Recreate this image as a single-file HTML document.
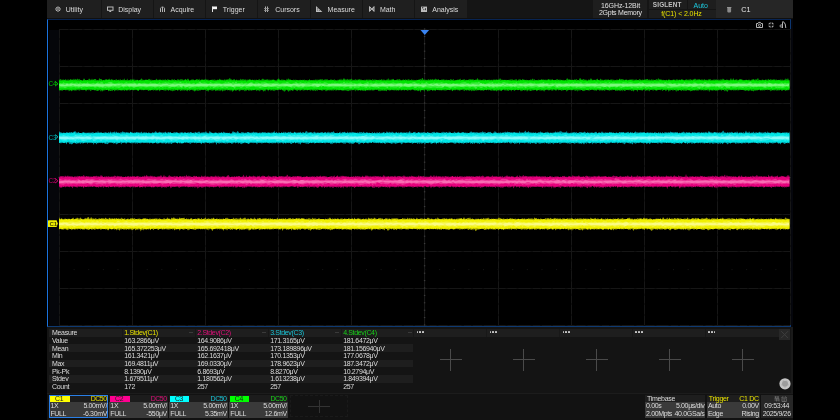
<!DOCTYPE html><html><head><meta charset="utf-8"><style>
*{margin:0;padding:0;box-sizing:border-box}
html,body{width:840px;height:420px;background:#000;overflow:hidden}
#w{position:absolute;left:0;top:0;width:840px;height:420px;will-change:transform}
body{position:relative;font-family:"Liberation Sans",sans-serif;font-size:7px;color:#d9d9d9}
.a{position:absolute}
.t{position:absolute;white-space:nowrap;line-height:8px}
.r{text-align:right}
.n{letter-spacing:-0.35px}
svg{position:absolute;overflow:visible}
</style></head><body><div id="w">

<div class="a" style="left:47.00px;top:0.00px;width:746.00px;height:18.00px;background:#151515;"></div>
<div class="a" style="left:47.00px;top:18.00px;width:746.00px;height:1.00px;background:#101010;"></div>
<div class="a" style="left:47.00px;top:0.00px;width:53.60px;height:18.00px;background:#1f1f1f;"></div>
<div class="t" style="left:65.80px;top:6.00px;color:#dcdcdc;">Utility</div>
<svg style="left:55px;top:6px" width="7" height="7"><path d="M3,0.9L5,2V4.2L3,5.3L1,4.2V2Z" fill="none" stroke="#b4b4b4" stroke-width="1"/><circle cx="3" cy="3.1" r="0.7" fill="none" stroke="#b4b4b4" stroke-width="0.7"/></svg>
<div class="a" style="left:101.60px;top:0.00px;width:51.28px;height:18.00px;background:#1f1f1f;"></div>
<div class="t" style="left:118.15px;top:6.00px;color:#dcdcdc;">Display</div>
<svg style="left:107px;top:6px" width="7" height="7"><rect x="0.5" y="1" width="5.5" height="3.3" fill="none" stroke="#b8b8b8" stroke-width="1"/><path d="M2.3,5.5H4.2" stroke="#b8b8b8" stroke-width="1"/></svg>
<div class="a" style="left:153.88px;top:0.00px;width:51.28px;height:18.00px;background:#1f1f1f;"></div>
<div class="t" style="left:170.50px;top:6.00px;color:#dcdcdc;">Acquire</div>
<svg style="left:160px;top:6px" width="7" height="7"><path d="M0.5,6V2.2M2.5,6V1M4.5,6V2.2" fill="none" stroke="#b4b4b4" stroke-width="1"/><path d="M0.5,2.2Q1.5,0.6 2.5,0.8Q3.5,0.6 4.5,2.2" fill="none" stroke="#a0a0a0" stroke-width="0.8"/></svg>
<div class="a" style="left:206.16px;top:0.00px;width:51.28px;height:18.00px;background:#1f1f1f;"></div>
<div class="t" style="left:222.85px;top:6.00px;color:#dcdcdc;">Trigger</div>
<svg style="left:212px;top:6px" width="7" height="7"><path d="M0.5,6V0.5" stroke="#e0e0e0" stroke-width="1"/><path d="M0.5,0.5H5V3.2H0.5Z" fill="#f4f4f4"/></svg>
<div class="a" style="left:258.44px;top:0.00px;width:51.28px;height:18.00px;background:#1f1f1f;"></div>
<div class="t" style="left:275.20px;top:6.00px;color:#dcdcdc;">Cursors</div>
<svg style="left:264px;top:6px" width="7" height="7"><path d="M1.5,0.5V6M3.5,0.5V6" stroke="#b0b0b0" stroke-width="1"/><path d="M0,2.5H5M0,4.5H5" stroke="#909090" stroke-width="0.8"/></svg>
<div class="a" style="left:310.72px;top:0.00px;width:51.28px;height:18.00px;background:#1f1f1f;"></div>
<div class="t" style="left:327.55px;top:6.00px;color:#dcdcdc;">Measure</div>
<svg style="left:316px;top:6px" width="7" height="7"><path d="M0,0V6H6.4Z" fill="#bdbdbd"/><rect x="1.2" y="2.4" width="1" height="1" fill="#3a3a3a"/><rect x="1.4" y="4.2" width="0.8" height="0.8" fill="#555"/><rect x="3" y="4.2" width="0.8" height="0.8" fill="#555"/></svg>
<div class="a" style="left:363.00px;top:0.00px;width:51.28px;height:18.00px;background:#1f1f1f;"></div>
<div class="t" style="left:379.90px;top:6.00px;color:#dcdcdc;">Math</div>
<svg style="left:369px;top:6px" width="7" height="7"><path d="M0.6,0.6L2.7,3L0.6,5.4ZM5,0.6L2.9,3L5,5.4Z" fill="#5a5a5a" stroke="#d4d4d4" stroke-width="0.9" stroke-linejoin="round"/></svg>
<div class="a" style="left:415.28px;top:0.00px;width:51.28px;height:18.00px;background:#1f1f1f;"></div>
<div class="t" style="left:432.25px;top:6.00px;color:#dcdcdc;">Analysis</div>
<svg style="left:421px;top:6px" width="7" height="7"><rect x="0" y="0.6" width="6" height="5.4" fill="#bdbdbd"/><circle cx="1.7" cy="1.8" r="0.7" fill="#333"/><circle cx="2.8" cy="3.6" r="0.6" fill="#444"/><rect x="4" y="2.2" width="0.9" height="2" fill="#333"/></svg>
<div class="a" style="left:593.30px;top:0.00px;width:54.20px;height:17.50px;background:#1e1e1e;"></div>
<div class="t" style="left:520.50px;width:200px;text-align:center;top:2.00px;color:#e0e0e0;letter-spacing:-0.1px">16GHz-12Bit</div>
<div class="t" style="left:520.40px;width:200px;text-align:center;top:9.20px;color:#e0e0e0;letter-spacing:-0.25px">2Gpts Memory</div>
<div class="a" style="left:648.60px;top:0.00px;width:67.00px;height:17.50px;background:#1e1e1e;"></div>
<div class="a" style="left:648.60px;top:8.60px;width:67.00px;height:0.80px;background:#151515;"></div>
<div class="a" style="left:686.50px;top:0.00px;width:0.80px;height:8.60px;background:#151515;"></div>
<div class="t" style="left:567.20px;width:200px;text-align:center;top:0.70px;color:#c0c0c0;font-weight:bold;font-size:6.4px;letter-spacing:0.15px">SIGLENT</div>
<div class="t" style="left:600.70px;width:200px;text-align:center;top:2.20px;color:#1ccbe0;">Auto</div>
<div class="t" style="left:581.50px;width:200px;text-align:center;top:9.90px;color:#e6e000;letter-spacing:-0.1px">f(C1) &lt; 2.0Hz</div>
<div class="a" style="left:715.50px;top:0.00px;width:77.50px;height:17.50px;background:#262626;"></div>
<div class="t" style="left:741.30px;top:6.00px;color:#e8e8e8;font-size:7.2px">C1</div>
<svg style="left:726.5px;top:6.8px" width="5" height="6"><rect x="0.3" y="0.6" width="3.8" height="4.8" rx="0.8" fill="#8a8a8a"/><rect x="0" y="0" width="4.4" height="0.9" fill="#9a9a9a"/></svg>
<div class="a" style="left:47.00px;top:19.00px;width:744.00px;height:308.00px;background:#000;border:1px solid #0c3670;border-left-color:#1a72dc;border-top-color:#082452;border-bottom-color:#0e3a72"></div>
<div class="a" style="left:791.00px;top:19.00px;width:1.50px;height:308.00px;background:#05060c;"></div>
<div class="a" style="left:48.50px;top:30.00px;width:10.30px;height:296.00px;background:#05060a;"></div>
<svg style="left:0;top:0" width="840" height="420">
<g stroke="#0e0e0e" stroke-width="1" stroke-dasharray="none" fill="none">
<line x1="59.50" y1="29" x2="59.50" y2="325"/>
<line x1="132.50" y1="29" x2="132.50" y2="325"/>
<line x1="205.50" y1="29" x2="205.50" y2="325"/>
<line x1="278.50" y1="29" x2="278.50" y2="325"/>
<line x1="351.50" y1="29" x2="351.50" y2="325"/>
<line x1="498.50" y1="29" x2="498.50" y2="325"/>
<line x1="571.50" y1="29" x2="571.50" y2="325"/>
<line x1="644.50" y1="29" x2="644.50" y2="325"/>
<line x1="717.50" y1="29" x2="717.50" y2="325"/>
<line x1="790.50" y1="29" x2="790.50" y2="325"/>
<line x1="59" y1="29.50" x2="790" y2="29.50"/>
<line x1="59" y1="66.50" x2="790" y2="66.50"/>
<line x1="59" y1="103.50" x2="790" y2="103.50"/>
<line x1="59" y1="140.50" x2="790" y2="140.50"/>
<line x1="59" y1="214.50" x2="790" y2="214.50"/>
<line x1="59" y1="251.50" x2="790" y2="251.50"/>
<line x1="59" y1="288.50" x2="790" y2="288.50"/>
<line x1="59" y1="325.50" x2="790" y2="325.50"/>
</g>
<g stroke="#161616" stroke-width="1" stroke-dasharray="9 2 12 2.5 7 2" fill="none">
<line x1="59.50" y1="29" x2="59.50" y2="325"/>
<line x1="132.50" y1="29" x2="132.50" y2="325"/>
<line x1="205.50" y1="29" x2="205.50" y2="325"/>
<line x1="278.50" y1="29" x2="278.50" y2="325"/>
<line x1="351.50" y1="29" x2="351.50" y2="325"/>
<line x1="498.50" y1="29" x2="498.50" y2="325"/>
<line x1="571.50" y1="29" x2="571.50" y2="325"/>
<line x1="644.50" y1="29" x2="644.50" y2="325"/>
<line x1="717.50" y1="29" x2="717.50" y2="325"/>
<line x1="790.50" y1="29" x2="790.50" y2="325"/>
<line x1="59" y1="29.50" x2="790" y2="29.50"/>
<line x1="59" y1="66.50" x2="790" y2="66.50"/>
<line x1="59" y1="103.50" x2="790" y2="103.50"/>
<line x1="59" y1="140.50" x2="790" y2="140.50"/>
<line x1="59" y1="214.50" x2="790" y2="214.50"/>
<line x1="59" y1="251.50" x2="790" y2="251.50"/>
<line x1="59" y1="288.50" x2="790" y2="288.50"/>
<line x1="59" y1="325.50" x2="790" y2="325.50"/>
</g>
<line x1="424.6" y1="29" x2="424.6" y2="326" stroke="#1c1c1c" stroke-width="1"/>
<line x1="59" y1="177.5" x2="790" y2="177.5" stroke="#202020" stroke-width="1"/>
<path d="M423.9,29.00h1.4M423.9,36.40h1.4M423.9,43.80h1.4M423.9,51.20h1.4M423.9,58.60h1.4M423.9,66.00h1.4M423.9,73.40h1.4M423.9,80.80h1.4M423.9,88.20h1.4M423.9,95.60h1.4M423.9,103.00h1.4M423.9,110.40h1.4M423.9,117.80h1.4M423.9,125.20h1.4M423.9,132.60h1.4M423.9,140.00h1.4M423.9,147.40h1.4M423.9,154.80h1.4M423.9,162.20h1.4M423.9,169.60h1.4M423.9,177.00h1.4M423.9,184.40h1.4M423.9,191.80h1.4M423.9,199.20h1.4M423.9,206.60h1.4M423.9,214.00h1.4M423.9,221.40h1.4M423.9,228.80h1.4M423.9,236.20h1.4M423.9,243.60h1.4M423.9,251.00h1.4M423.9,258.40h1.4M423.9,265.80h1.4M423.9,273.20h1.4M423.9,280.60h1.4M423.9,288.00h1.4M423.9,295.40h1.4M423.9,302.80h1.4M423.9,310.20h1.4M423.9,317.60h1.4M423.9,325.00h1.4M59.00,176.8v1.4M73.62,176.8v1.4M88.24,176.8v1.4M102.86,176.8v1.4M117.48,176.8v1.4M132.10,176.8v1.4M146.72,176.8v1.4M161.34,176.8v1.4M175.96,176.8v1.4M190.58,176.8v1.4M205.20,176.8v1.4M219.82,176.8v1.4M234.44,176.8v1.4M249.06,176.8v1.4M263.68,176.8v1.4M278.30,176.8v1.4M292.92,176.8v1.4M307.54,176.8v1.4M322.16,176.8v1.4M336.78,176.8v1.4M351.40,176.8v1.4M366.02,176.8v1.4M380.64,176.8v1.4M395.26,176.8v1.4M409.88,176.8v1.4M424.50,176.8v1.4M439.12,176.8v1.4M453.74,176.8v1.4M468.36,176.8v1.4M482.98,176.8v1.4M497.60,176.8v1.4M512.22,176.8v1.4M526.84,176.8v1.4M541.46,176.8v1.4M556.08,176.8v1.4M570.70,176.8v1.4M585.32,176.8v1.4M599.94,176.8v1.4M614.56,176.8v1.4M629.18,176.8v1.4M643.80,176.8v1.4M658.42,176.8v1.4M673.04,176.8v1.4M687.66,176.8v1.4M702.28,176.8v1.4M716.90,176.8v1.4M731.52,176.8v1.4M746.14,176.8v1.4M760.76,176.8v1.4M775.38,176.8v1.4M790.00,176.8v1.4" stroke="#404040" stroke-width="1"/>
<path d="M59.00,269.6h1M73.62,269.6h1M88.24,269.6h1M102.86,269.6h1M117.48,269.6h1M132.10,269.6h1M146.72,269.6h1M161.34,269.6h1M175.96,269.6h1M190.58,269.6h1M205.20,269.6h1M219.82,269.6h1M234.44,269.6h1M249.06,269.6h1M263.68,269.6h1M278.30,269.6h1M292.92,269.6h1M307.54,269.6h1M322.16,269.6h1M336.78,269.6h1M351.40,269.6h1M366.02,269.6h1M380.64,269.6h1M395.26,269.6h1M409.88,269.6h1M424.50,269.6h1M439.12,269.6h1M453.74,269.6h1M468.36,269.6h1M482.98,269.6h1M497.60,269.6h1M512.22,269.6h1M526.84,269.6h1M541.46,269.6h1M556.08,269.6h1M570.70,269.6h1M585.32,269.6h1M599.94,269.6h1M614.56,269.6h1M629.18,269.6h1M643.80,269.6h1M658.42,269.6h1M673.04,269.6h1M687.66,269.6h1M702.28,269.6h1M716.90,269.6h1M731.52,269.6h1M746.14,269.6h1M760.76,269.6h1M775.38,269.6h1M790.00,269.6h1" stroke="#161616" stroke-width="1"/>
</svg>
<svg style="left:0;top:0" width="840" height="420">
<path fill="#009a00" d="M59,79.7L59.8,79.6L60.5,78.9L61.2,79.5L62,79.9L62.8,79.6L63.5,79.6L64.2,79.9L65,79.8L65.8,79.1L66.5,80.0L67.2,80.3L68,79.1L68.8,80.0L69.5,80.0L70.2,79.1L71,79.3L71.8,79.8L72.5,79.5L73.2,79.7L74,78.6L74.8,79.9L75.5,78.8L76.2,79.8L77,79.3L77.8,78.6L78.5,79.7L79.2,78.7L80,79.7L80.8,80.0L81.5,80.1L82.2,80.8L83,79.9L83.8,78.5L84.5,78.7L85.2,80.1L86,79.9L86.8,80.3L87.5,80.3L88.2,79.9L89,78.5L89.8,79.1L90.5,79.7L91.2,80.0L92,78.4L92.8,79.9L93.5,79.5L94.2,79.0L95,79.0L95.8,79.1L96.5,80.1L97.2,80.0L98,80.0L98.8,79.8L99.5,78.1L100.2,78.9L101,79.1L101.8,79.2L102.5,80.5L103.2,80.4L104,79.8L104.8,80.0L105.5,79.6L106.2,79.1L107,80.0L107.8,79.4L108.5,79.4L109.2,78.6L110,79.7L110.8,79.7L111.5,79.1L112.2,79.6L113,79.9L113.8,79.8L114.5,80.0L115.2,80.2L116,79.1L116.8,79.6L117.5,80.3L118.2,79.8L119,79.7L119.8,79.8L120.5,79.3L121.2,80.0L122,80.1L122.8,79.4L123.5,80.0L124.2,78.2L125,80.1L125.8,80.2L126.5,80.2L127.2,78.5L128,80.3L128.8,80.3L129.5,80.3L130.2,79.6L131,79.3L131.8,79.8L132.5,80.0L133.2,80.1L134,78.6L134.8,80.8L135.5,79.7L136.2,79.8L137,80.1L137.8,80.0L138.5,80.5L139.2,80.1L140,80.1L140.8,79.3L141.5,78.3L142.2,79.3L143,79.9L143.8,79.8L144.5,80.1L145.2,79.8L146,79.4L146.8,79.7L147.5,80.1L148.2,79.6L149,78.8L149.8,79.3L150.5,79.7L151.2,79.8L152,79.8L152.8,80.0L153.5,80.2L154.2,79.9L155,79.9L155.8,79.7L156.5,78.6L157.2,79.9L158,79.6L158.8,80.0L159.5,79.7L160.2,79.0L161,80.6L161.8,79.7L162.5,79.8L163.2,79.5L164,80.2L164.8,79.5L165.5,79.2L166.2,80.0L167,80.1L167.8,78.9L168.5,79.8L169.2,79.7L170,79.9L170.8,80.1L171.5,79.6L172.2,79.6L173,79.2L173.8,80.2L174.5,79.1L175.2,80.1L176,80.7L176.8,80.2L177.5,79.2L178.2,79.1L179,80.2L179.8,79.4L180.5,79.3L181.2,79.5L182,79.0L182.8,79.7L183.5,79.7L184.2,80.5L185,78.9L185.8,80.1L186.5,79.9L187.2,79.2L188,78.4L188.8,79.6L189.5,80.7L190.2,80.3L191,79.8L191.8,79.4L192.5,79.5L193.2,79.3L194,79.9L194.8,80.3L195.5,80.2L196.2,79.5L197,79.1L197.8,79.6L198.5,79.9L199.2,78.4L200,80.5L200.8,79.8L201.5,79.6L202.2,79.9L203,79.8L203.8,79.8L204.5,79.4L205.2,79.6L206,78.6L206.8,80.4L207.5,79.6L208.2,79.4L209,80.2L209.8,80.2L210.5,79.9L211.2,80.1L212,80.2L212.8,79.2L213.5,79.9L214.2,79.2L215,80.0L215.8,79.7L216.5,80.3L217.2,79.5L218,79.9L218.8,79.8L219.5,78.4L220.2,80.0L221,79.6L221.8,79.9L222.5,79.7L223.2,80.1L224,79.7L224.8,79.3L225.5,80.1L226.2,79.3L227,79.9L227.8,79.0L228.5,79.6L229.2,78.5L230,78.1L230.8,79.4L231.5,79.3L232.2,79.9L233,79.7L233.8,79.3L234.5,79.1L235.2,80.2L236,79.9L236.8,79.5L237.5,80.0L238.2,80.4L239,79.4L239.8,80.4L240.5,78.4L241.2,80.0L242,79.1L242.8,79.4L243.5,79.2L244.2,79.8L245,79.4L245.8,79.4L246.5,79.9L247.2,79.5L248,79.9L248.8,79.5L249.5,79.4L250.2,79.5L251,79.7L251.8,80.3L252.5,80.0L253.2,80.2L254,79.7L254.8,79.8L255.5,80.1L256.2,79.6L257,80.0L257.8,80.1L258.5,79.7L259.2,79.0L260,79.8L260.8,80.4L261.5,79.4L262.2,78.9L263,78.4L263.8,79.5L264.5,79.5L265.2,80.4L266,79.6L266.8,79.6L267.5,79.2L268.2,79.4L269,80.1L269.8,79.5L270.5,80.0L271.2,79.6L272,80.3L272.8,80.1L273.5,80.0L274.2,79.9L275,79.8L275.8,80.8L276.5,79.9L277.2,79.5L278,79.1L278.8,78.2L279.5,79.2L280.2,80.9L281,80.4L281.8,79.0L282.5,79.7L283.2,79.8L284,79.8L284.8,80.0L285.5,80.5L286.2,80.0L287,78.5L287.8,80.0L288.5,78.1L289.2,79.7L290,79.1L290.8,79.9L291.5,79.9L292.2,79.9L293,80.1L293.8,79.5L294.5,79.9L295.2,79.8L296,79.7L296.8,80.1L297.5,80.2L298.2,80.1L299,80.5L299.8,79.7L300.5,79.7L301.2,80.3L302,80.0L302.8,79.8L303.5,80.1L304.2,79.5L305,79.9L305.8,80.1L306.5,80.6L307.2,79.7L308,80.4L308.8,79.9L309.5,79.0L310.2,80.1L311,80.2L311.8,79.9L312.5,80.2L313.2,80.0L314,79.7L314.8,80.1L315.5,79.6L316.2,79.5L317,80.0L317.8,79.5L318.5,79.8L319.2,80.0L320,78.9L320.8,79.5L321.5,79.5L322.2,79.0L323,79.7L323.8,80.0L324.5,79.4L325.2,79.4L326,79.3L326.8,79.4L327.5,79.3L328.2,79.9L329,80.2L329.8,80.0L330.5,79.5L331.2,79.3L332,80.1L332.8,79.7L333.5,79.9L334.2,79.2L335,79.8L335.8,80.4L336.5,80.5L337.2,79.8L338,79.9L338.8,79.8L339.5,79.2L340.2,80.1L341,78.5L341.8,79.9L342.5,79.7L343.2,79.2L344,77.8L344.8,79.6L345.5,79.6L346.2,79.4L347,79.5L347.8,78.8L348.5,79.8L349.2,79.7L350,79.0L350.8,79.4L351.5,78.4L352.2,79.6L353,80.1L353.8,79.7L354.5,80.1L355.2,78.9L356,79.8L356.8,79.8L357.5,79.8L358.2,79.4L359,79.6L359.8,79.0L360.5,79.7L361.2,79.4L362,80.1L362.8,80.1L363.5,80.0L364.2,80.0L365,79.6L365.8,80.3L366.5,79.6L367.2,79.2L368,80.4L368.8,79.2L369.5,79.7L370.2,79.4L371,80.0L371.8,80.0L372.5,78.9L373.2,79.8L374,79.7L374.8,79.5L375.5,79.4L376.2,80.6L377,79.8L377.8,80.2L378.5,80.0L379.2,79.5L380,80.0L380.8,79.8L381.5,79.1L382.2,79.7L383,79.8L383.8,79.6L384.5,79.8L385.2,79.9L386,80.1L386.8,79.5L387.5,79.7L388.2,77.9L389,79.9L389.8,79.5L390.5,79.7L391.2,79.9L392,78.7L392.8,79.6L393.5,78.8L394.2,80.0L395,80.3L395.8,80.0L396.5,79.8L397.2,79.2L398,79.6L398.8,79.6L399.5,79.0L400.2,79.5L401,80.5L401.8,79.9L402.5,80.1L403.2,78.9L404,80.2L404.8,79.9L405.5,79.2L406.2,79.7L407,80.0L407.8,79.5L408.5,79.3L409.2,79.6L410,79.9L410.8,79.9L411.5,79.3L412.2,79.8L413,79.9L413.8,79.8L414.5,80.1L415.2,80.2L416,79.9L416.8,79.8L417.5,79.9L418.2,80.3L419,79.1L419.8,79.8L420.5,78.7L421.2,80.0L422,78.1L422.8,77.9L423.5,79.9L424.2,79.2L425,80.0L425.8,79.6L426.5,79.8L427.2,80.9L428,79.1L428.8,79.6L429.5,80.0L430.2,79.1L431,79.8L431.8,79.4L432.5,79.0L433.2,79.8L434,79.5L434.8,79.9L435.5,78.4L436.2,78.9L437,79.7L437.8,79.5L438.5,79.2L439.2,80.2L440,80.1L440.8,79.9L441.5,79.5L442.2,79.7L443,79.2L443.8,79.5L444.5,79.7L445.2,79.7L446,79.9L446.8,79.5L447.5,79.9L448.2,80.3L449,79.8L449.8,80.3L450.5,79.1L451.2,79.5L452,79.6L452.8,79.9L453.5,78.7L454.2,80.4L455,80.8L455.8,80.1L456.5,80.2L457.2,79.5L458,79.9L458.8,79.4L459.5,79.7L460.2,78.5L461,79.9L461.8,79.9L462.5,79.9L463.2,80.0L464,78.7L464.8,79.7L465.5,80.1L466.2,79.7L467,80.1L467.8,79.9L468.5,79.7L469.2,79.1L470,79.7L470.8,79.1L471.5,79.6L472.2,79.8L473,78.8L473.8,80.1L474.5,80.2L475.2,79.9L476,79.3L476.8,79.7L477.5,77.7L478.2,79.3L479,80.1L479.8,79.6L480.5,79.8L481.2,79.9L482,80.1L482.8,79.7L483.5,79.3L484.2,79.9L485,79.1L485.8,80.3L486.5,80.3L487.2,80.1L488,80.0L488.8,79.8L489.5,79.6L490.2,80.4L491,79.5L491.8,80.0L492.5,79.7L493.2,80.0L494,79.0L494.8,80.1L495.5,79.5L496.2,79.9L497,79.2L497.8,80.1L498.5,80.2L499.2,79.6L500,78.0L500.8,79.2L501.5,79.7L502.2,79.7L503,79.8L503.8,80.0L504.5,79.8L505.2,80.1L506,79.8L506.8,79.9L507.5,80.0L508.2,80.0L509,79.7L509.8,79.8L510.5,79.6L511.2,79.3L512,79.8L512.8,79.2L513.5,80.3L514.2,80.1L515,79.4L515.8,79.6L516.5,79.0L517.2,80.4L518,80.2L518.8,79.3L519.5,79.4L520.2,79.1L521,80.2L521.8,80.0L522.5,78.7L523.2,79.7L524,79.4L524.8,79.9L525.5,79.9L526.2,79.7L527,80.0L527.8,79.9L528.5,80.5L529.2,80.5L530,80.1L530.8,79.3L531.5,80.1L532.2,79.0L533,78.6L533.8,80.2L534.5,79.0L535.2,80.1L536,80.1L536.8,79.9L537.5,80.0L538.2,79.7L539,79.5L539.8,80.3L540.5,79.8L541.2,80.0L542,78.9L542.8,80.0L543.5,79.2L544.2,80.3L545,79.2L545.8,79.9L546.5,79.8L547.2,79.7L548,79.7L548.8,79.6L549.5,79.6L550.2,79.4L551,79.7L551.8,79.5L552.5,79.3L553.2,80.1L554,80.4L554.8,80.1L555.5,79.9L556.2,79.6L557,79.3L557.8,79.2L558.5,80.1L559.2,79.6L560,80.0L560.8,79.4L561.5,79.9L562.2,80.3L563,79.7L563.8,80.1L564.5,80.2L565.2,80.0L566,79.9L566.8,78.6L567.5,78.3L568.2,79.6L569,79.5L569.8,79.6L570.5,79.8L571.2,79.9L572,79.9L572.8,80.0L573.5,79.9L574.2,79.6L575,79.8L575.8,79.7L576.5,78.9L577.2,79.8L578,80.3L578.8,79.9L579.5,78.6L580.2,78.0L581,79.0L581.8,79.9L582.5,79.6L583.2,79.3L584,79.0L584.8,79.9L585.5,79.8L586.2,79.4L587,80.5L587.8,80.5L588.5,79.2L589.2,80.0L590,79.6L590.8,78.2L591.5,78.8L592.2,79.7L593,80.0L593.8,79.8L594.5,79.7L595.2,80.2L596,79.6L596.8,79.2L597.5,78.5L598.2,80.0L599,80.2L599.8,79.7L600.5,78.6L601.2,79.6L602,79.8L602.8,79.7L603.5,80.0L604.2,79.7L605,80.0L605.8,79.3L606.5,79.6L607.2,80.4L608,78.8L608.8,79.9L609.5,79.9L610.2,79.9L611,78.9L611.8,79.7L612.5,79.5L613.2,79.7L614,79.7L614.8,79.9L615.5,80.3L616.2,80.1L617,79.2L617.8,80.1L618.5,80.0L619.2,78.9L620,78.4L620.8,79.7L621.5,78.9L622.2,79.2L623,79.2L623.8,79.8L624.5,79.9L625.2,79.8L626,79.9L626.8,79.5L627.5,79.9L628.2,80.5L629,79.5L629.8,79.8L630.5,79.8L631.2,79.6L632,79.5L632.8,79.4L633.5,79.6L634.2,80.3L635,79.2L635.8,79.9L636.5,79.2L637.2,80.0L638,80.2L638.8,79.8L639.5,79.1L640.2,79.6L641,79.8L641.8,80.1L642.5,79.6L643.2,79.7L644,79.9L644.8,79.3L645.5,79.5L646.2,79.3L647,79.0L647.8,79.0L648.5,79.9L649.2,79.5L650,79.8L650.8,80.1L651.5,79.2L652.2,79.4L653,79.9L653.8,79.4L654.5,80.3L655.2,79.9L656,79.5L656.8,78.9L657.5,80.1L658.2,77.8L659,79.8L659.8,78.9L660.5,79.4L661.2,79.4L662,79.8L662.8,79.9L663.5,79.8L664.2,80.1L665,79.9L665.8,80.4L666.5,79.4L667.2,80.6L668,80.3L668.8,79.6L669.5,79.5L670.2,80.2L671,79.9L671.8,80.1L672.5,80.1L673.2,79.3L674,80.0L674.8,79.6L675.5,80.2L676.2,79.1L677,79.9L677.8,79.2L678.5,80.0L679.2,79.9L680,80.4L680.8,80.4L681.5,79.2L682.2,79.3L683,79.8L683.8,80.1L684.5,80.1L685.2,80.0L686,79.2L686.8,79.5L687.5,79.8L688.2,80.1L689,79.2L689.8,79.8L690.5,78.9L691.2,79.7L692,79.8L692.8,79.8L693.5,80.3L694.2,79.3L695,78.6L695.8,79.3L696.5,79.8L697.2,79.6L698,79.4L698.8,79.2L699.5,79.0L700.2,80.3L701,79.2L701.8,79.7L702.5,79.6L703.2,79.7L704,79.7L704.8,78.9L705.5,80.1L706.2,79.9L707,79.6L707.8,80.3L708.5,79.3L709.2,79.6L710,78.9L710.8,79.4L711.5,80.1L712.2,80.3L713,79.5L713.8,79.7L714.5,79.5L715.2,79.8L716,79.6L716.8,79.6L717.5,79.9L718.2,79.8L719,79.4L719.8,80.0L720.5,79.6L721.2,79.2L722,80.0L722.8,78.6L723.5,79.0L724.2,79.4L725,80.3L725.8,80.0L726.5,79.6L727.2,79.7L728,79.8L728.8,80.0L729.5,80.1L730.2,79.5L731,78.1L731.8,79.9L732.5,79.7L733.2,78.1L734,79.5L734.8,80.2L735.5,79.6L736.2,79.5L737,79.2L737.8,80.3L738.5,80.0L739.2,79.6L740,78.9L740.8,79.3L741.5,79.3L742.2,79.7L743,79.8L743.8,80.5L744.5,80.0L745.2,79.9L746,79.7L746.8,79.9L747.5,80.5L748.2,79.7L749,79.7L749.8,79.8L750.5,80.4L751.2,79.5L752,80.1L752.8,79.0L753.5,78.9L754.2,79.8L755,79.8L755.8,79.3L756.5,79.6L757.2,79.3L758,77.8L758.8,79.9L759.5,79.8L760.2,80.3L761,80.3L761.8,79.8L762.5,79.4L763.2,79.7L764,80.4L764.8,80.6L765.5,79.4L766.2,79.6L767,79.9L767.8,79.5L768.5,78.8L769.2,80.2L770,79.7L770.8,78.9L771.5,79.7L772.2,79.5L773,80.1L773.8,79.1L774.5,79.2L775.2,80.5L776,79.1L776.8,79.9L777.5,79.9L778.2,80.0L779,79.8L779.8,80.1L780.5,79.6L781.2,79.5L782,80.3L782.8,79.2L783.5,80.5L784.2,79.6L785,80.1L785.8,78.3L786.5,79.2L787.2,79.5L788,78.1L788.8,80.2L789.5,80.4L789.5,90.0L788.8,90.2L788,90.0L787.2,90.4L786.5,89.8L785.8,91.0L785,90.5L784.2,90.0L783.5,90.1L782.8,90.2L782,91.2L781.2,90.3L780.5,89.8L779.8,90.2L779,90.5L778.2,90.3L777.5,90.5L776.8,90.6L776,90.5L775.2,89.9L774.5,90.4L773.8,90.4L773,90.1L772.2,90.2L771.5,90.4L770.8,91.6L770,89.9L769.2,90.3L768.5,89.7L767.8,90.3L767,90.1L766.2,89.8L765.5,89.9L764.8,90.6L764,90.3L763.2,90.3L762.5,90.6L761.8,90.3L761,90.6L760.2,90.4L759.5,90.0L758.8,89.7L758,90.2L757.2,90.6L756.5,90.2L755.8,91.0L755,89.9L754.2,90.9L753.5,91.6L752.8,90.7L752,91.0L751.2,90.7L750.5,90.3L749.8,90.4L749,90.8L748.2,91.2L747.5,90.6L746.8,89.9L746,91.0L745.2,90.7L744.5,90.5L743.8,90.3L743,89.9L742.2,90.1L741.5,90.0L740.8,89.8L740,90.3L739.2,90.1L738.5,90.6L737.8,90.1L737,90.7L736.2,89.8L735.5,90.5L734.8,90.5L734,89.9L733.2,90.7L732.5,89.8L731.8,90.3L731,90.6L730.2,90.1L729.5,90.3L728.8,89.6L728,90.9L727.2,91.9L726.5,90.9L725.8,90.1L725,91.5L724.2,90.6L723.5,90.0L722.8,89.9L722,89.9L721.2,91.1L720.5,89.5L719.8,89.7L719,89.4L718.2,90.3L717.5,90.8L716.8,90.4L716,90.2L715.2,91.0L714.5,90.1L713.8,90.6L713,90.2L712.2,90.8L711.5,90.2L710.8,90.6L710,89.8L709.2,92.2L708.5,89.9L707.8,90.4L707,90.2L706.2,89.9L705.5,90.4L704.8,90.3L704,90.4L703.2,90.5L702.5,89.9L701.8,90.3L701,90.5L700.2,90.1L699.5,90.1L698.8,90.4L698,90.4L697.2,90.4L696.5,90.6L695.8,90.4L695,89.9L694.2,91.0L693.5,90.2L692.8,90.4L692,91.1L691.2,90.9L690.5,91.5L689.8,90.2L689,90.2L688.2,89.8L687.5,90.2L686.8,90.6L686,90.9L685.2,90.4L684.5,90.4L683.8,90.8L683,90.5L682.2,90.1L681.5,91.3L680.8,90.6L680,90.1L679.2,89.9L678.5,90.6L677.8,90.9L677,90.1L676.2,92.0L675.5,90.2L674.8,90.2L674,89.6L673.2,90.8L672.5,90.4L671.8,89.9L671,90.1L670.2,90.7L669.5,90.2L668.8,91.9L668,89.8L667.2,90.0L666.5,90.5L665.8,91.3L665,90.0L664.2,89.9L663.5,90.1L662.8,91.1L662,90.5L661.2,89.4L660.5,90.6L659.8,89.7L659,89.5L658.2,90.0L657.5,90.3L656.8,90.6L656,91.1L655.2,89.9L654.5,90.0L653.8,90.3L653,90.8L652.2,89.9L651.5,89.3L650.8,90.0L650,90.2L649.2,91.6L648.5,90.3L647.8,90.3L647,90.6L646.2,90.3L645.5,91.3L644.8,89.7L644,90.2L643.2,89.6L642.5,91.0L641.8,90.2L641,90.5L640.2,90.1L639.5,90.2L638.8,89.5L638,90.2L637.2,91.9L636.5,89.4L635.8,90.0L635,90.1L634.2,90.3L633.5,91.7L632.8,90.2L632,90.9L631.2,90.7L630.5,90.0L629.8,90.4L629,89.5L628.2,90.4L627.5,90.1L626.8,90.1L626,90.0L625.2,91.0L624.5,91.0L623.8,90.5L623,89.7L622.2,91.6L621.5,90.0L620.8,90.4L620,91.2L619.2,90.3L618.5,90.2L617.8,91.1L617,90.3L616.2,90.7L615.5,91.0L614.8,90.1L614,90.1L613.2,89.6L612.5,90.2L611.8,90.3L611,90.3L610.2,90.3L609.5,90.8L608.8,90.4L608,89.7L607.2,90.3L606.5,90.0L605.8,89.8L605,90.7L604.2,90.8L603.5,90.0L602.8,90.8L602,90.2L601.2,90.6L600.5,90.2L599.8,90.7L599,90.2L598.2,89.8L597.5,89.3L596.8,90.9L596,90.3L595.2,90.4L594.5,90.5L593.8,90.2L593,90.1L592.2,90.0L591.5,89.6L590.8,90.1L590,90.1L589.2,90.7L588.5,89.9L587.8,90.1L587,90.4L586.2,89.6L585.5,90.4L584.8,90.4L584,91.3L583.2,90.8L582.5,91.0L581.8,90.0L581,90.1L580.2,90.5L579.5,90.3L578.8,90.7L578,90.0L577.2,91.7L576.5,89.9L575.8,90.4L575,91.0L574.2,90.0L573.5,90.1L572.8,90.3L572,90.3L571.2,90.3L570.5,90.3L569.8,89.9L569,90.0L568.2,90.2L567.5,90.6L566.8,91.7L566,90.3L565.2,90.1L564.5,90.0L563.8,90.1L563,90.5L562.2,90.2L561.5,90.9L560.8,89.9L560,90.3L559.2,89.7L558.5,90.8L557.8,89.3L557,90.1L556.2,90.7L555.5,90.6L554.8,90.2L554,89.2L553.2,90.4L552.5,90.4L551.8,90.9L551,89.6L550.2,90.2L549.5,90.2L548.8,90.4L548,90.3L547.2,90.0L546.5,90.1L545.8,90.3L545,90.0L544.2,91.8L543.5,90.8L542.8,90.1L542,91.0L541.2,90.3L540.5,90.5L539.8,90.8L539,89.7L538.2,90.2L537.5,90.4L536.8,91.3L536,90.3L535.2,89.7L534.5,90.2L533.8,90.2L533,90.5L532.2,90.3L531.5,90.7L530.8,90.9L530,90.9L529.2,90.3L528.5,90.2L527.8,90.5L527,91.7L526.2,89.8L525.5,90.2L524.8,90.9L524,89.8L523.2,90.3L522.5,90.8L521.8,90.4L521,91.5L520.2,90.3L519.5,89.4L518.8,89.8L518,90.6L517.2,89.8L516.5,89.6L515.8,89.8L515,90.4L514.2,90.9L513.5,90.0L512.8,89.5L512,90.1L511.2,91.6L510.5,90.0L509.8,89.9L509,90.4L508.2,90.9L507.5,90.4L506.8,90.5L506,90.3L505.2,90.5L504.5,90.4L503.8,89.7L503,89.9L502.2,90.1L501.5,91.2L500.8,90.4L500,90.9L499.2,89.9L498.5,90.4L497.8,89.9L497,91.2L496.2,91.3L495.5,90.5L494.8,90.1L494,90.9L493.2,90.3L492.5,90.4L491.8,90.2L491,91.3L490.2,90.0L489.5,89.7L488.8,90.4L488,90.1L487.2,89.7L486.5,89.9L485.8,90.1L485,89.7L484.2,90.3L483.5,91.0L482.8,90.3L482,90.1L481.2,89.9L480.5,90.7L479.8,90.1L479,90.3L478.2,90.3L477.5,90.2L476.8,90.5L476,90.5L475.2,90.3L474.5,90.9L473.8,90.5L473,90.9L472.2,90.3L471.5,91.6L470.8,89.7L470,90.9L469.2,90.5L468.5,90.5L467.8,90.0L467,90.4L466.2,90.3L465.5,90.0L464.8,90.4L464,91.2L463.2,89.4L462.5,90.2L461.8,89.8L461,90.1L460.2,90.4L459.5,90.7L458.8,90.1L458,90.4L457.2,90.1L456.5,89.8L455.8,90.3L455,90.2L454.2,90.2L453.5,89.8L452.8,91.2L452,90.7L451.2,89.7L450.5,90.3L449.8,90.3L449,89.9L448.2,90.1L447.5,89.9L446.8,90.3L446,90.6L445.2,90.4L444.5,90.6L443.8,90.2L443,90.3L442.2,90.2L441.5,90.4L440.8,90.1L440,90.8L439.2,90.0L438.5,90.3L437.8,89.9L437,89.9L436.2,89.6L435.5,91.1L434.8,90.1L434,90.4L433.2,90.2L432.5,90.7L431.8,89.3L431,90.2L430.2,90.3L429.5,91.1L428.8,90.2L428,91.5L427.2,91.0L426.5,90.1L425.8,89.5L425,90.3L424.2,91.8L423.5,90.0L422.8,89.9L422,90.3L421.2,90.0L420.5,92.5L419.8,90.6L419,90.6L418.2,91.2L417.5,90.9L416.8,89.9L416,90.4L415.2,90.4L414.5,90.4L413.8,90.2L413,89.2L412.2,89.9L411.5,90.1L410.8,90.4L410,90.2L409.2,90.0L408.5,90.3L407.8,90.7L407,90.6L406.2,90.1L405.5,89.8L404.8,90.4L404,90.4L403.2,89.7L402.5,90.3L401.8,90.3L401,90.2L400.2,90.2L399.5,90.1L398.8,90.8L398,90.4L397.2,90.0L396.5,90.7L395.8,90.3L395,90.2L394.2,90.5L393.5,90.3L392.8,90.2L392,90.1L391.2,90.2L390.5,90.3L389.8,90.6L389,90.6L388.2,90.0L387.5,89.4L386.8,91.2L386,90.9L385.2,90.5L384.5,90.9L383.8,90.3L383,91.2L382.2,90.3L381.5,90.7L380.8,90.4L380,91.6L379.2,90.5L378.5,91.2L377.8,90.1L377,90.1L376.2,90.1L375.5,90.1L374.8,89.6L374,90.7L373.2,90.2L372.5,90.5L371.8,90.4L371,89.7L370.2,90.7L369.5,90.4L368.8,89.5L368,91.2L367.2,89.6L366.5,90.3L365.8,91.2L365,90.4L364.2,90.7L363.5,90.8L362.8,90.7L362,90.6L361.2,90.2L360.5,90.4L359.8,90.1L359,89.6L358.2,90.4L357.5,90.5L356.8,90.3L356,90.1L355.2,91.6L354.5,89.7L353.8,89.9L353,90.3L352.2,90.2L351.5,90.0L350.8,90.5L350,90.4L349.2,90.5L348.5,91.3L347.8,90.7L347,91.3L346.2,90.2L345.5,90.4L344.8,90.3L344,90.8L343.2,90.4L342.5,90.7L341.8,90.5L341,90.3L340.2,90.1L339.5,90.3L338.8,90.5L338,89.9L337.2,90.3L336.5,90.4L335.8,90.6L335,90.3L334.2,90.1L333.5,90.6L332.8,90.7L332,89.8L331.2,91.0L330.5,89.9L329.8,90.7L329,89.9L328.2,90.5L327.5,90.4L326.8,90.5L326,91.4L325.2,90.2L324.5,90.0L323.8,90.2L323,90.1L322.2,91.0L321.5,90.5L320.8,90.0L320,90.2L319.2,90.1L318.5,89.6L317.8,90.6L317,90.8L316.2,89.9L315.5,91.3L314.8,90.2L314,90.4L313.2,90.7L312.5,90.4L311.8,90.3L311,90.1L310.2,90.9L309.5,90.0L308.8,90.1L308,90.1L307.2,90.4L306.5,90.0L305.8,90.2L305,89.9L304.2,90.4L303.5,90.6L302.8,90.4L302,89.8L301.2,90.3L300.5,90.8L299.8,90.3L299,90.5L298.2,89.6L297.5,91.2L296.8,90.8L296,90.2L295.2,90.1L294.5,89.8L293.8,89.9L293,90.9L292.2,90.5L291.5,89.9L290.8,90.1L290,91.4L289.2,90.0L288.5,92.1L287.8,91.1L287,89.8L286.2,89.8L285.5,90.7L284.8,91.6L284,91.4L283.2,90.4L282.5,90.4L281.8,89.4L281,89.8L280.2,90.0L279.5,89.5L278.8,90.0L278,90.0L277.2,90.4L276.5,89.8L275.8,90.4L275,90.0L274.2,91.2L273.5,90.7L272.8,90.2L272,90.5L271.2,90.3L270.5,90.8L269.8,89.5L269,89.5L268.2,91.6L267.5,90.1L266.8,90.0L266,89.6L265.2,91.4L264.5,90.6L263.8,91.7L263,90.7L262.2,90.1L261.5,89.8L260.8,90.4L260,90.2L259.2,91.4L258.5,90.3L257.8,90.2L257,90.2L256.2,91.3L255.5,89.6L254.8,90.3L254,90.0L253.2,89.9L252.5,90.2L251.8,90.8L251,90.5L250.2,90.2L249.5,90.4L248.8,91.1L248,90.1L247.2,89.5L246.5,91.0L245.8,90.3L245,91.4L244.2,90.4L243.5,90.1L242.8,90.5L242,89.8L241.2,90.3L240.5,90.2L239.8,91.6L239,90.4L238.2,90.2L237.5,90.0L236.8,90.3L236,91.1L235.2,90.6L234.5,90.0L233.8,90.5L233,90.9L232.2,92.1L231.5,90.2L230.8,90.0L230,91.4L229.2,89.5L228.5,90.0L227.8,90.7L227,89.7L226.2,89.9L225.5,90.6L224.8,90.6L224,90.7L223.2,90.4L222.5,91.7L221.8,90.4L221,90.0L220.2,91.2L219.5,90.5L218.8,90.6L218,90.5L217.2,90.4L216.5,90.5L215.8,91.3L215,90.6L214.2,89.2L213.5,90.4L212.8,90.4L212,90.7L211.2,90.2L210.5,90.3L209.8,89.7L209,89.8L208.2,91.9L207.5,90.6L206.8,90.8L206,90.7L205.2,89.5L204.5,89.8L203.8,89.9L203,90.2L202.2,89.8L201.5,89.6L200.8,90.4L200,90.2L199.2,90.5L198.5,90.7L197.8,90.4L197,91.0L196.2,90.1L195.5,90.7L194.8,91.7L194,90.7L193.2,90.6L192.5,90.3L191.8,90.1L191,90.1L190.2,90.2L189.5,90.9L188.8,90.0L188,90.3L187.2,91.5L186.5,90.4L185.8,90.3L185,90.2L184.2,90.7L183.5,90.2L182.8,90.2L182,90.8L181.2,90.2L180.5,91.3L179.8,89.9L179,90.3L178.2,90.2L177.5,91.1L176.8,89.9L176,89.9L175.2,90.6L174.5,90.5L173.8,91.1L173,90.5L172.2,91.6L171.5,90.6L170.8,90.7L170,90.3L169.2,90.0L168.5,91.1L167.8,90.2L167,89.9L166.2,90.4L165.5,90.7L164.8,90.2L164,90.8L163.2,90.1L162.5,89.5L161.8,89.8L161,90.2L160.2,90.3L159.5,91.6L158.8,89.7L158,90.4L157.2,90.2L156.5,90.5L155.8,90.4L155,90.2L154.2,90.1L153.5,90.8L152.8,90.1L152,90.2L151.2,90.1L150.5,90.3L149.8,90.3L149,90.8L148.2,91.0L147.5,90.1L146.8,90.0L146,89.5L145.2,90.3L144.5,89.9L143.8,90.2L143,90.3L142.2,90.0L141.5,90.3L140.8,90.1L140,89.8L139.2,90.0L138.5,91.0L137.8,90.0L137,90.3L136.2,89.8L135.5,90.3L134.8,89.7L134,90.4L133.2,90.2L132.5,90.1L131.8,89.8L131,89.6L130.2,90.2L129.5,90.6L128.8,90.2L128,90.0L127.2,90.8L126.5,90.7L125.8,89.8L125,90.5L124.2,91.1L123.5,90.1L122.8,90.2L122,90.3L121.2,90.4L120.5,90.3L119.8,90.0L119,90.5L118.2,90.2L117.5,90.6L116.8,90.2L116,90.2L115.2,90.6L114.5,91.4L113.8,89.7L113,90.2L112.2,91.2L111.5,90.5L110.8,91.1L110,91.1L109.2,90.4L108.5,91.4L107.8,89.3L107,89.9L106.2,89.8L105.5,90.2L104.8,90.3L104,90.6L103.2,90.5L102.5,91.8L101.8,90.0L101,91.8L100.2,90.4L99.5,89.9L98.8,90.6L98,91.0L97.2,91.0L96.5,90.7L95.8,90.3L95,90.5L94.2,90.3L93.5,89.9L92.8,89.8L92,90.0L91.2,90.6L90.5,91.3L89.8,89.8L89,90.6L88.2,90.0L87.5,90.1L86.8,90.2L86,91.5L85.2,90.1L84.5,89.8L83.8,89.7L83,90.4L82.2,89.8L81.5,90.2L80.8,89.7L80,90.4L79.2,90.5L78.5,90.2L77.8,90.0L77,90.3L76.2,90.5L75.5,90.4L74.8,90.6L74,90.5L73.2,90.1L72.5,90.5L71.8,91.2L71,91.1L70.2,90.0L69.5,91.0L68.8,91.3L68,89.3L67.2,90.5L66.5,90.0L65.8,90.5L65,89.9L64.2,89.7L63.5,89.9L62.8,90.2L62,91.2L61.2,90.0L60.5,90.5L59.8,90.5L59,90.4Z"/>
<path fill="#00e400" d="M59,80.4L59.8,80.6L60.5,80.8L61.2,80.4L62,81.2L62.8,79.9L63.5,80.5L64.2,80.4L65,79.9L65.8,80.7L66.5,81.1L67.2,80.8L68,81.1L68.8,80.9L69.5,80.6L70.2,79.9L71,80.5L71.8,79.9L72.5,80.1L73.2,80.7L74,79.9L74.8,80.5L75.5,80.2L76.2,80.2L77,80.5L77.8,80.8L78.5,80.5L79.2,80.9L80,80.4L80.8,80.0L81.5,80.5L82.2,80.6L83,81.1L83.8,80.1L84.5,80.8L85.2,80.1L86,80.7L86.8,80.3L87.5,79.9L88.2,80.6L89,80.9L89.8,80.2L90.5,80.7L91.2,80.3L92,80.3L92.8,80.5L93.5,80.1L94.2,80.5L95,80.7L95.8,80.4L96.5,81.2L97.2,80.5L98,80.9L98.8,80.9L99.5,80.2L100.2,80.9L101,80.8L101.8,80.0L102.5,80.7L103.2,80.2L104,80.0L104.8,80.9L105.5,80.1L106.2,79.6L107,80.2L107.8,80.0L108.5,79.9L109.2,80.0L110,80.3L110.8,80.7L111.5,80.3L112.2,79.7L113,80.9L113.8,80.6L114.5,79.9L115.2,80.6L116,80.7L116.8,80.5L117.5,80.5L118.2,80.0L119,80.8L119.8,80.9L120.5,80.4L121.2,80.3L122,80.4L122.8,80.5L123.5,80.4L124.2,80.4L125,80.6L125.8,80.4L126.5,80.5L127.2,80.7L128,80.7L128.8,80.5L129.5,80.5L130.2,80.0L131,81.0L131.8,80.7L132.5,79.3L133.2,79.9L134,81.1L134.8,80.6L135.5,80.8L136.2,80.6L137,80.5L137.8,79.4L138.5,81.2L139.2,80.1L140,80.8L140.8,79.8L141.5,80.8L142.2,80.9L143,80.3L143.8,80.7L144.5,80.5L145.2,80.1L146,79.9L146.8,80.1L147.5,80.1L148.2,80.2L149,80.4L149.8,80.5L150.5,80.6L151.2,81.1L152,81.1L152.8,80.4L153.5,80.5L154.2,79.9L155,80.8L155.8,80.2L156.5,80.3L157.2,80.4L158,80.6L158.8,80.5L159.5,79.8L160.2,80.3L161,80.1L161.8,80.5L162.5,80.7L163.2,80.4L164,80.3L164.8,80.7L165.5,80.4L166.2,80.3L167,80.8L167.8,80.9L168.5,79.8L169.2,80.3L170,80.1L170.8,80.9L171.5,80.5L172.2,80.3L173,80.6L173.8,80.2L174.5,81.0L175.2,80.0L176,80.3L176.8,80.4L177.5,80.9L178.2,79.9L179,80.9L179.8,80.4L180.5,80.7L181.2,81.1L182,80.7L182.8,80.5L183.5,81.0L184.2,80.6L185,80.0L185.8,78.9L186.5,80.6L187.2,80.9L188,80.4L188.8,80.1L189.5,81.0L190.2,80.8L191,80.5L191.8,80.3L192.5,80.4L193.2,80.3L194,80.3L194.8,80.8L195.5,80.1L196.2,79.5L197,80.7L197.8,80.5L198.5,79.8L199.2,80.9L200,80.5L200.8,80.4L201.5,79.9L202.2,79.5L203,79.9L203.8,80.3L204.5,80.1L205.2,80.5L206,80.5L206.8,79.7L207.5,80.6L208.2,80.7L209,80.9L209.8,80.3L210.5,80.0L211.2,79.8L212,80.1L212.8,80.8L213.5,80.6L214.2,80.9L215,80.9L215.8,80.8L216.5,80.8L217.2,80.4L218,80.1L218.8,80.5L219.5,80.3L220.2,79.5L221,80.3L221.8,80.5L222.5,80.2L223.2,80.9L224,80.6L224.8,80.4L225.5,80.9L226.2,80.0L227,80.5L227.8,79.9L228.5,80.7L229.2,80.3L230,80.6L230.8,79.7L231.5,80.5L232.2,80.6L233,80.5L233.8,80.3L234.5,80.3L235.2,80.7L236,80.7L236.8,79.7L237.5,81.0L238.2,80.8L239,80.4L239.8,80.7L240.5,80.5L241.2,80.8L242,80.1L242.8,81.0L243.5,80.8L244.2,80.6L245,80.5L245.8,80.6L246.5,81.8L247.2,80.9L248,80.4L248.8,80.3L249.5,79.6L250.2,79.8L251,80.2L251.8,80.2L252.5,79.5L253.2,80.3L254,80.4L254.8,80.8L255.5,80.8L256.2,80.5L257,79.9L257.8,80.4L258.5,80.3L259.2,80.8L260,80.4L260.8,80.6L261.5,80.7L262.2,80.8L263,80.6L263.8,80.7L264.5,80.8L265.2,79.6L266,80.8L266.8,79.9L267.5,80.5L268.2,80.8L269,80.8L269.8,80.9L270.5,80.4L271.2,80.7L272,80.3L272.8,79.6L273.5,79.5L274.2,80.7L275,80.3L275.8,80.9L276.5,81.2L277.2,80.7L278,80.0L278.8,79.8L279.5,80.6L280.2,80.1L281,80.4L281.8,80.6L282.5,80.8L283.2,80.8L284,80.0L284.8,80.6L285.5,80.4L286.2,81.1L287,80.4L287.8,80.3L288.5,80.4L289.2,80.4L290,79.8L290.8,80.0L291.5,80.2L292.2,79.9L293,80.9L293.8,80.2L294.5,80.5L295.2,80.9L296,80.2L296.8,80.3L297.5,80.3L298.2,80.5L299,80.6L299.8,80.2L300.5,80.6L301.2,80.2L302,80.0L302.8,80.7L303.5,80.1L304.2,80.6L305,81.3L305.8,80.2L306.5,80.3L307.2,81.3L308,80.7L308.8,80.2L309.5,80.2L310.2,80.8L311,80.3L311.8,80.4L312.5,80.6L313.2,80.5L314,80.7L314.8,80.8L315.5,80.6L316.2,80.5L317,81.1L317.8,80.8L318.5,80.2L319.2,80.4L320,79.8L320.8,80.6L321.5,80.6L322.2,80.8L323,80.8L323.8,80.7L324.5,80.5L325.2,80.2L326,80.9L326.8,80.1L327.5,80.7L328.2,80.4L329,80.4L329.8,80.2L330.5,80.3L331.2,80.3L332,80.5L332.8,80.1L333.5,80.2L334.2,80.9L335,80.6L335.8,80.4L336.5,80.6L337.2,81.4L338,80.7L338.8,80.4L339.5,80.1L340.2,80.2L341,80.6L341.8,80.4L342.5,80.4L343.2,80.8L344,79.2L344.8,80.5L345.5,80.8L346.2,80.6L347,80.6L347.8,80.6L348.5,80.3L349.2,80.7L350,80.4L350.8,80.2L351.5,80.8L352.2,81.3L353,80.4L353.8,80.7L354.5,80.6L355.2,80.9L356,80.2L356.8,80.8L357.5,80.9L358.2,79.8L359,80.5L359.8,80.2L360.5,80.5L361.2,80.4L362,80.4L362.8,80.5L363.5,80.6L364.2,81.0L365,80.4L365.8,80.9L366.5,80.0L367.2,80.4L368,80.7L368.8,80.7L369.5,80.6L370.2,80.5L371,80.0L371.8,80.7L372.5,81.3L373.2,80.9L374,80.3L374.8,81.2L375.5,80.5L376.2,79.8L377,80.2L377.8,80.4L378.5,80.2L379.2,80.7L380,80.6L380.8,79.9L381.5,80.5L382.2,80.8L383,81.2L383.8,80.4L384.5,80.4L385.2,81.1L386,80.8L386.8,80.6L387.5,80.6L388.2,80.7L389,80.5L389.8,80.9L390.5,80.5L391.2,80.8L392,79.9L392.8,80.3L393.5,79.8L394.2,80.3L395,80.8L395.8,80.0L396.5,80.6L397.2,79.9L398,81.0L398.8,80.6L399.5,80.8L400.2,80.3L401,80.8L401.8,80.4L402.5,80.4L403.2,80.6L404,80.2L404.8,80.1L405.5,80.9L406.2,80.1L407,80.6L407.8,81.3L408.5,80.6L409.2,80.9L410,80.8L410.8,80.2L411.5,80.8L412.2,80.4L413,81.0L413.8,80.8L414.5,80.7L415.2,80.4L416,80.8L416.8,80.5L417.5,80.1L418.2,79.9L419,80.1L419.8,80.1L420.5,81.0L421.2,80.6L422,79.9L422.8,80.9L423.5,80.3L424.2,80.0L425,81.4L425.8,80.2L426.5,80.6L427.2,80.8L428,79.9L428.8,81.0L429.5,80.5L430.2,80.5L431,80.1L431.8,80.3L432.5,80.0L433.2,81.0L434,79.7L434.8,79.8L435.5,80.3L436.2,80.6L437,80.0L437.8,80.2L438.5,79.5L439.2,80.2L440,80.2L440.8,80.1L441.5,80.4L442.2,80.0L443,80.7L443.8,80.0L444.5,80.8L445.2,80.7L446,80.1L446.8,80.4L447.5,80.5L448.2,80.3L449,80.1L449.8,80.8L450.5,80.9L451.2,80.4L452,80.3L452.8,80.7L453.5,80.9L454.2,81.1L455,79.7L455.8,80.8L456.5,80.3L457.2,80.1L458,80.5L458.8,80.0L459.5,79.6L460.2,80.9L461,80.3L461.8,80.1L462.5,79.8L463.2,80.1L464,80.6L464.8,80.8L465.5,80.8L466.2,80.3L467,80.6L467.8,80.2L468.5,80.0L469.2,80.7L470,80.5L470.8,80.0L471.5,80.2L472.2,80.2L473,80.3L473.8,80.7L474.5,79.9L475.2,80.3L476,80.1L476.8,80.5L477.5,80.0L478.2,80.3L479,80.7L479.8,80.3L480.5,80.4L481.2,80.3L482,80.7L482.8,79.9L483.5,80.4L484.2,80.9L485,79.9L485.8,80.0L486.5,80.5L487.2,80.3L488,79.7L488.8,80.5L489.5,80.4L490.2,80.7L491,79.9L491.8,80.5L492.5,81.0L493.2,80.5L494,79.9L494.8,80.3L495.5,80.6L496.2,79.6L497,80.3L497.8,80.1L498.5,79.5L499.2,80.0L500,80.3L500.8,81.1L501.5,80.2L502.2,80.3L503,80.3L503.8,80.3L504.5,80.1L505.2,80.1L506,80.4L506.8,80.6L507.5,80.1L508.2,80.3L509,80.2L509.8,80.7L510.5,80.6L511.2,81.0L512,81.1L512.8,80.3L513.5,80.4L514.2,80.6L515,80.7L515.8,80.7L516.5,80.6L517.2,80.9L518,80.8L518.8,80.5L519.5,80.9L520.2,80.1L521,80.3L521.8,80.2L522.5,80.5L523.2,80.1L524,79.7L524.8,80.6L525.5,80.2L526.2,80.6L527,80.5L527.8,80.3L528.5,80.4L529.2,80.2L530,80.2L530.8,80.6L531.5,80.6L532.2,80.5L533,80.7L533.8,80.9L534.5,80.4L535.2,80.6L536,80.6L536.8,80.5L537.5,80.8L538.2,80.7L539,80.5L539.8,80.1L540.5,80.3L541.2,79.6L542,79.9L542.8,80.3L543.5,80.2L544.2,80.2L545,80.3L545.8,80.4L546.5,80.5L547.2,80.8L548,79.4L548.8,79.6L549.5,80.2L550.2,80.7L551,80.6L551.8,80.2L552.5,79.8L553.2,80.3L554,80.2L554.8,80.3L555.5,80.0L556.2,80.5L557,80.5L557.8,80.4L558.5,80.1L559.2,80.6L560,80.7L560.8,80.4L561.5,80.1L562.2,80.2L563,81.0L563.8,80.7L564.5,80.7L565.2,80.4L566,80.3L566.8,81.5L567.5,80.0L568.2,80.4L569,79.8L569.8,80.0L570.5,80.0L571.2,79.7L572,80.5L572.8,79.6L573.5,80.5L574.2,80.5L575,79.6L575.8,80.5L576.5,81.2L577.2,80.3L578,80.5L578.8,80.3L579.5,81.0L580.2,80.3L581,79.8L581.8,80.3L582.5,80.0L583.2,80.7L584,80.7L584.8,80.5L585.5,80.4L586.2,80.8L587,80.8L587.8,80.8L588.5,80.5L589.2,80.3L590,80.7L590.8,79.9L591.5,80.3L592.2,80.8L593,80.4L593.8,80.2L594.5,80.1L595.2,80.1L596,81.0L596.8,80.3L597.5,79.7L598.2,80.0L599,80.3L599.8,80.7L600.5,80.5L601.2,80.7L602,80.5L602.8,80.8L603.5,81.1L604.2,80.6L605,79.7L605.8,80.7L606.5,80.6L607.2,80.4L608,79.8L608.8,80.3L609.5,80.2L610.2,80.2L611,80.5L611.8,80.2L612.5,81.4L613.2,80.6L614,80.8L614.8,80.7L615.5,80.2L616.2,80.4L617,80.4L617.8,80.2L618.5,80.4L619.2,79.5L620,79.9L620.8,80.5L621.5,80.2L622.2,80.7L623,80.4L623.8,80.2L624.5,80.9L625.2,80.1L626,79.7L626.8,80.0L627.5,81.1L628.2,80.2L629,80.2L629.8,80.3L630.5,79.7L631.2,80.1L632,80.5L632.8,80.7L633.5,81.3L634.2,81.0L635,80.3L635.8,80.4L636.5,80.6L637.2,80.4L638,80.0L638.8,80.4L639.5,81.1L640.2,80.4L641,80.2L641.8,81.1L642.5,80.6L643.2,80.3L644,80.5L644.8,80.1L645.5,80.5L646.2,80.3L647,80.7L647.8,80.4L648.5,80.7L649.2,80.4L650,81.1L650.8,80.7L651.5,80.5L652.2,80.9L653,80.8L653.8,80.7L654.5,80.1L655.2,80.2L656,80.5L656.8,80.7L657.5,80.4L658.2,81.3L659,80.1L659.8,80.2L660.5,80.0L661.2,80.0L662,80.7L662.8,80.5L663.5,80.4L664.2,80.6L665,80.6L665.8,80.5L666.5,79.9L667.2,80.7L668,80.4L668.8,79.4L669.5,80.4L670.2,80.3L671,80.4L671.8,80.6L672.5,80.6L673.2,80.0L674,80.1L674.8,80.6L675.5,80.9L676.2,80.6L677,80.4L677.8,80.6L678.5,80.7L679.2,79.9L680,79.5L680.8,80.5L681.5,79.5L682.2,79.9L683,80.2L683.8,80.5L684.5,81.1L685.2,80.4L686,80.0L686.8,80.7L687.5,80.4L688.2,80.8L689,80.4L689.8,80.7L690.5,80.7L691.2,79.9L692,80.4L692.8,80.9L693.5,79.2L694.2,79.7L695,80.8L695.8,80.4L696.5,80.4L697.2,80.5L698,80.1L698.8,80.4L699.5,80.1L700.2,80.1L701,80.6L701.8,80.5L702.5,80.4L703.2,80.9L704,80.5L704.8,80.3L705.5,80.6L706.2,80.6L707,80.4L707.8,81.0L708.5,80.4L709.2,79.9L710,80.5L710.8,81.1L711.5,80.7L712.2,80.5L713,80.7L713.8,80.4L714.5,81.0L715.2,80.3L716,80.4L716.8,80.4L717.5,80.3L718.2,80.7L719,81.1L719.8,80.7L720.5,81.0L721.2,80.7L722,80.3L722.8,80.7L723.5,80.2L724.2,80.4L725,80.2L725.8,80.2L726.5,80.4L727.2,80.1L728,80.7L728.8,80.8L729.5,81.0L730.2,80.5L731,79.9L731.8,80.4L732.5,80.6L733.2,79.9L734,79.9L734.8,80.8L735.5,80.1L736.2,80.5L737,80.3L737.8,81.3L738.5,80.6L739.2,79.7L740,80.3L740.8,79.7L741.5,80.1L742.2,80.5L743,80.4L743.8,80.5L744.5,80.5L745.2,80.6L746,80.3L746.8,79.8L747.5,80.5L748.2,80.6L749,80.5L749.8,81.1L750.5,80.9L751.2,80.6L752,80.8L752.8,80.0L753.5,79.9L754.2,80.3L755,81.1L755.8,80.4L756.5,80.1L757.2,80.9L758,80.9L758.8,80.7L759.5,80.3L760.2,80.6L761,80.2L761.8,80.9L762.5,80.1L763.2,80.4L764,79.9L764.8,80.4L765.5,79.8L766.2,80.5L767,81.0L767.8,80.9L768.5,80.5L769.2,79.9L770,79.7L770.8,80.9L771.5,80.4L772.2,80.1L773,80.5L773.8,80.0L774.5,80.2L775.2,80.4L776,80.7L776.8,80.3L777.5,80.4L778.2,80.2L779,80.0L779.8,80.6L780.5,80.8L781.2,81.0L782,80.7L782.8,81.1L783.5,80.8L784.2,80.2L785,80.9L785.8,80.1L786.5,81.0L787.2,80.5L788,80.6L788.8,80.4L789.5,80.2L789.5,89.1L788.8,89.6L788,89.6L787.2,89.4L786.5,90.5L785.8,89.6L785,89.4L784.2,89.5L783.5,89.6L782.8,89.4L782,89.7L781.2,89.2L780.5,89.3L779.8,89.8L779,89.4L778.2,89.2L777.5,89.9L776.8,88.7L776,89.4L775.2,89.1L774.5,89.6L773.8,89.2L773,90.2L772.2,89.9L771.5,89.1L770.8,89.3L770,89.4L769.2,89.6L768.5,89.7L767.8,89.3L767,88.9L766.2,90.0L765.5,89.6L764.8,89.2L764,89.5L763.2,89.6L762.5,89.6L761.8,89.6L761,90.1L760.2,89.9L759.5,88.7L758.8,89.4L758,90.0L757.2,89.4L756.5,89.8L755.8,89.6L755,89.8L754.2,89.5L753.5,89.2L752.8,88.9L752,89.6L751.2,89.7L750.5,88.9L749.8,89.3L749,90.2L748.2,89.3L747.5,89.8L746.8,90.2L746,89.5L745.2,89.7L744.5,89.7L743.8,89.7L743,89.5L742.2,89.7L741.5,89.8L740.8,89.5L740,89.4L739.2,89.3L738.5,89.9L737.8,88.6L737,89.5L736.2,89.7L735.5,89.4L734.8,89.5L734,89.3L733.2,89.5L732.5,89.4L731.8,89.7L731,89.4L730.2,89.7L729.5,89.1L728.8,89.7L728,89.1L727.2,89.0L726.5,89.4L725.8,89.9L725,89.0L724.2,88.9L723.5,89.9L722.8,89.5L722,89.4L721.2,89.5L720.5,89.4L719.8,88.9L719,90.4L718.2,89.6L717.5,89.4L716.8,90.5L716,89.4L715.2,89.7L714.5,89.9L713.8,89.3L713,89.5L712.2,90.2L711.5,90.1L710.8,89.0L710,90.2L709.2,89.7L708.5,89.0L707.8,89.0L707,89.6L706.2,90.2L705.5,89.7L704.8,89.7L704,89.0L703.2,89.2L702.5,89.8L701.8,89.6L701,89.3L700.2,89.1L699.5,89.2L698.8,89.3L698,89.6L697.2,89.7L696.5,89.4L695.8,89.5L695,90.0L694.2,90.0L693.5,90.0L692.8,90.0L692,89.5L691.2,89.6L690.5,89.4L689.8,89.9L689,90.5L688.2,90.1L687.5,89.4L686.8,89.6L686,89.7L685.2,89.2L684.5,89.2L683.8,89.5L683,89.6L682.2,90.0L681.5,89.2L680.8,89.7L680,90.2L679.2,89.5L678.5,90.4L677.8,90.2L677,89.2L676.2,89.5L675.5,89.4L674.8,89.9L674,89.8L673.2,89.3L672.5,89.5L671.8,89.5L671,89.9L670.2,89.1L669.5,89.5L668.8,90.5L668,89.1L667.2,89.5L666.5,89.3L665.8,89.8L665,89.3L664.2,89.5L663.5,89.9L662.8,89.1L662,88.8L661.2,89.3L660.5,89.5L659.8,89.6L659,89.9L658.2,89.4L657.5,89.6L656.8,89.9L656,90.1L655.2,89.7L654.5,89.2L653.8,89.1L653,89.2L652.2,89.2L651.5,90.0L650.8,89.3L650,90.1L649.2,89.0L648.5,88.9L647.8,89.1L647,90.1L646.2,89.7L645.5,89.3L644.8,88.6L644,88.9L643.2,89.2L642.5,89.9L641.8,89.2L641,89.9L640.2,89.2L639.5,90.0L638.8,89.8L638,89.5L637.2,89.8L636.5,90.3L635.8,89.2L635,90.6L634.2,89.3L633.5,90.1L632.8,89.2L632,89.3L631.2,89.0L630.5,89.5L629.8,89.2L629,89.4L628.2,89.7L627.5,89.4L626.8,89.5L626,89.7L625.2,89.1L624.5,89.6L623.8,89.3L623,90.0L622.2,88.6L621.5,90.3L620.8,89.2L620,89.8L619.2,89.7L618.5,89.7L617.8,89.4L617,89.8L616.2,89.2L615.5,89.9L614.8,89.2L614,89.5L613.2,89.7L612.5,89.1L611.8,89.2L611,89.9L610.2,89.4L609.5,89.2L608.8,90.3L608,89.5L607.2,90.2L606.5,89.0L605.8,89.3L605,88.9L604.2,89.2L603.5,89.7L602.8,89.8L602,89.8L601.2,89.3L600.5,89.6L599.8,89.6L599,89.4L598.2,89.2L597.5,89.4L596.8,89.6L596,90.0L595.2,89.4L594.5,89.2L593.8,89.9L593,89.1L592.2,89.2L591.5,89.4L590.8,90.2L590,89.3L589.2,89.1L588.5,90.4L587.8,90.0L587,89.9L586.2,90.1L585.5,89.3L584.8,89.6L584,89.8L583.2,89.2L582.5,89.8L581.8,90.0L581,89.8L580.2,88.9L579.5,89.3L578.8,89.3L578,88.9L577.2,89.3L576.5,89.6L575.8,89.2L575,89.3L574.2,89.1L573.5,89.1L572.8,89.5L572,90.1L571.2,89.7L570.5,89.3L569.8,89.4L569,89.7L568.2,89.4L567.5,89.9L566.8,89.2L566,89.4L565.2,89.9L564.5,89.5L563.8,89.8L563,90.2L562.2,89.1L561.5,89.5L560.8,89.4L560,90.0L559.2,89.4L558.5,89.6L557.8,89.2L557,89.3L556.2,89.6L555.5,89.8L554.8,89.5L554,89.3L553.2,88.9L552.5,89.7L551.8,89.1L551,89.4L550.2,89.2L549.5,89.9L548.8,89.6L548,89.7L547.2,89.0L546.5,89.1L545.8,89.4L545,89.9L544.2,89.4L543.5,89.6L542.8,89.7L542,89.8L541.2,89.8L540.5,89.1L539.8,89.3L539,89.8L538.2,90.0L537.5,89.9L536.8,90.2L536,90.1L535.2,89.2L534.5,90.1L533.8,89.8L533,89.8L532.2,89.2L531.5,89.3L530.8,89.4L530,89.8L529.2,89.1L528.5,89.2L527.8,90.2L527,89.6L526.2,89.5L525.5,89.7L524.8,89.4L524,90.1L523.2,89.9L522.5,89.6L521.8,89.3L521,89.9L520.2,89.6L519.5,89.4L518.8,90.0L518,90.0L517.2,89.8L516.5,89.5L515.8,89.9L515,89.7L514.2,89.5L513.5,89.5L512.8,89.9L512,89.8L511.2,89.9L510.5,89.4L509.8,89.9L509,89.1L508.2,89.5L507.5,89.9L506.8,89.1L506,89.3L505.2,89.4L504.5,89.6L503.8,89.2L503,89.1L502.2,90.2L501.5,90.3L500.8,90.1L500,89.0L499.2,89.6L498.5,90.1L497.8,90.3L497,89.0L496.2,89.9L495.5,89.4L494.8,90.3L494,90.6L493.2,89.6L492.5,89.1L491.8,89.1L491,89.8L490.2,89.8L489.5,89.6L488.8,89.6L488,89.0L487.2,89.6L486.5,90.6L485.8,89.4L485,89.6L484.2,90.3L483.5,89.4L482.8,89.4L482,90.7L481.2,89.9L480.5,89.8L479.8,89.5L479,89.9L478.2,89.8L477.5,89.9L476.8,89.0L476,89.6L475.2,89.7L474.5,89.3L473.8,89.4L473,89.7L472.2,89.2L471.5,89.3L470.8,90.0L470,88.9L469.2,89.9L468.5,89.7L467.8,89.8L467,89.1L466.2,90.5L465.5,89.5L464.8,89.2L464,89.1L463.2,89.2L462.5,88.8L461.8,89.5L461,89.6L460.2,89.2L459.5,89.7L458.8,90.0L458,88.9L457.2,89.6L456.5,89.0L455.8,89.5L455,89.4L454.2,89.4L453.5,89.5L452.8,90.7L452,89.3L451.2,88.9L450.5,89.2L449.8,89.9L449,89.9L448.2,89.5L447.5,89.7L446.8,89.9L446,89.0L445.2,89.2L444.5,89.4L443.8,89.0L443,89.9L442.2,89.3L441.5,90.3L440.8,89.8L440,89.8L439.2,89.9L438.5,89.4L437.8,90.2L437,89.5L436.2,89.4L435.5,90.2L434.8,90.4L434,89.5L433.2,90.1L432.5,90.5L431.8,90.0L431,89.6L430.2,89.8L429.5,89.6L428.8,89.3L428,89.9L427.2,89.1L426.5,89.5L425.8,89.3L425,89.3L424.2,89.7L423.5,89.5L422.8,89.8L422,90.2L421.2,89.9L420.5,89.9L419.8,89.5L419,89.5L418.2,90.5L417.5,89.3L416.8,90.3L416,89.9L415.2,89.2L414.5,90.1L413.8,89.5L413,89.6L412.2,89.1L411.5,89.3L410.8,89.7L410,89.4L409.2,89.7L408.5,89.4L407.8,89.2L407,89.8L406.2,90.0L405.5,89.5L404.8,90.0L404,89.4L403.2,89.6L402.5,89.6L401.8,90.4L401,89.5L400.2,88.7L399.5,89.4L398.8,90.1L398,89.5L397.2,90.2L396.5,89.6L395.8,89.3L395,89.8L394.2,89.6L393.5,89.7L392.8,89.8L392,89.4L391.2,89.3L390.5,90.3L389.8,89.6L389,89.7L388.2,89.5L387.5,89.4L386.8,89.2L386,89.6L385.2,89.4L384.5,89.9L383.8,89.3L383,89.6L382.2,89.9L381.5,89.5L380.8,89.6L380,89.2L379.2,89.4L378.5,89.5L377.8,89.0L377,89.3L376.2,89.4L375.5,89.1L374.8,89.8L374,89.5L373.2,89.8L372.5,89.8L371.8,88.9L371,89.6L370.2,89.9L369.5,89.5L368.8,89.4L368,90.0L367.2,90.0L366.5,89.5L365.8,90.5L365,89.8L364.2,89.5L363.5,89.4L362.8,89.9L362,89.7L361.2,89.5L360.5,90.4L359.8,90.0L359,90.3L358.2,90.2L357.5,89.5L356.8,89.1L356,89.7L355.2,88.4L354.5,89.3L353.8,89.3L353,89.9L352.2,89.5L351.5,89.3L350.8,89.5L350,89.2L349.2,89.7L348.5,89.3L347.8,89.0L347,89.8L346.2,89.3L345.5,89.7L344.8,89.3L344,90.1L343.2,90.1L342.5,90.0L341.8,89.9L341,90.0L340.2,89.4L339.5,90.0L338.8,89.9L338,89.6L337.2,89.6L336.5,89.9L335.8,89.1L335,89.1L334.2,89.7L333.5,88.7L332.8,89.5L332,89.0L331.2,89.9L330.5,89.5L329.8,88.9L329,90.3L328.2,89.2L327.5,90.0L326.8,89.8L326,89.4L325.2,89.1L324.5,89.4L323.8,89.2L323,89.2L322.2,89.4L321.5,89.9L320.8,89.7L320,89.4L319.2,89.9L318.5,89.4L317.8,89.2L317,88.9L316.2,89.7L315.5,88.8L314.8,89.7L314,89.0L313.2,89.7L312.5,89.7L311.8,89.1L311,89.2L310.2,89.4L309.5,89.4L308.8,89.7L308,89.7L307.2,90.3L306.5,89.5L305.8,89.2L305,89.9L304.2,89.5L303.5,89.1L302.8,88.7L302,89.3L301.2,89.8L300.5,89.7L299.8,89.2L299,89.4L298.2,89.8L297.5,89.5L296.8,89.2L296,89.9L295.2,89.1L294.5,88.8L293.8,89.1L293,89.2L292.2,90.6L291.5,90.1L290.8,89.6L290,89.6L289.2,90.4L288.5,89.3L287.8,90.0L287,89.3L286.2,89.8L285.5,89.5L284.8,89.4L284,89.5L283.2,89.7L282.5,90.0L281.8,89.1L281,89.4L280.2,89.5L279.5,89.3L278.8,89.2L278,89.8L277.2,89.8L276.5,89.6L275.8,89.4L275,89.4L274.2,89.1L273.5,89.6L272.8,89.0L272,89.4L271.2,89.7L270.5,89.1L269.8,89.2L269,90.1L268.2,89.9L267.5,89.3L266.8,88.8L266,89.2L265.2,89.5L264.5,89.7L263.8,89.5L263,89.5L262.2,89.7L261.5,89.4L260.8,89.5L260,89.1L259.2,89.8L258.5,89.4L257.8,90.3L257,89.2L256.2,89.7L255.5,89.3L254.8,89.7L254,89.9L253.2,90.3L252.5,89.4L251.8,89.9L251,89.7L250.2,89.5L249.5,89.2L248.8,89.8L248,89.7L247.2,89.4L246.5,89.4L245.8,90.0L245,89.3L244.2,89.1L243.5,89.4L242.8,89.8L242,89.3L241.2,89.8L240.5,89.3L239.8,89.7L239,89.3L238.2,88.9L237.5,89.8L236.8,89.6L236,89.7L235.2,90.1L234.5,89.1L233.8,90.5L233,89.8L232.2,90.0L231.5,89.5L230.8,89.6L230,89.7L229.2,89.7L228.5,90.0L227.8,89.7L227,89.1L226.2,89.8L225.5,89.5L224.8,89.8L224,88.7L223.2,89.5L222.5,89.5L221.8,89.3L221,89.5L220.2,89.8L219.5,89.3L218.8,89.0L218,89.4L217.2,90.0L216.5,89.5L215.8,89.4L215,89.6L214.2,89.6L213.5,89.5L212.8,89.4L212,89.1L211.2,89.3L210.5,89.6L209.8,89.2L209,90.4L208.2,89.8L207.5,89.9L206.8,89.0L206,89.0L205.2,90.1L204.5,89.3L203.8,89.4L203,89.7L202.2,89.4L201.5,89.7L200.8,89.2L200,90.0L199.2,89.5L198.5,89.1L197.8,89.6L197,89.4L196.2,89.2L195.5,90.2L194.8,90.2L194,89.5L193.2,89.4L192.5,89.5L191.8,89.1L191,89.6L190.2,89.8L189.5,89.3L188.8,89.4L188,89.7L187.2,89.9L186.5,89.3L185.8,89.3L185,90.0L184.2,89.0L183.5,89.2L182.8,89.3L182,89.2L181.2,89.9L180.5,89.1L179.8,89.2L179,89.0L178.2,89.5L177.5,90.0L176.8,89.7L176,89.5L175.2,89.7L174.5,88.9L173.8,89.4L173,89.7L172.2,88.9L171.5,89.3L170.8,89.7L170,89.5L169.2,89.5L168.5,89.8L167.8,90.0L167,88.6L166.2,89.4L165.5,89.6L164.8,89.1L164,89.4L163.2,89.8L162.5,90.1L161.8,89.7L161,89.6L160.2,89.7L159.5,89.9L158.8,89.1L158,89.7L157.2,90.1L156.5,90.0L155.8,89.3L155,89.4L154.2,89.7L153.5,89.3L152.8,89.4L152,89.8L151.2,90.0L150.5,90.6L149.8,89.8L149,89.9L148.2,89.3L147.5,89.5L146.8,89.7L146,89.5L145.2,89.5L144.5,89.7L143.8,89.8L143,90.0L142.2,89.3L141.5,89.5L140.8,89.2L140,89.2L139.2,89.5L138.5,90.6L137.8,90.7L137,89.7L136.2,89.4L135.5,89.3L134.8,89.5L134,89.8L133.2,90.0L132.5,89.8L131.8,89.5L131,90.0L130.2,90.3L129.5,89.1L128.8,89.3L128,89.6L127.2,90.0L126.5,89.9L125.8,90.0L125,89.1L124.2,89.9L123.5,89.6L122.8,89.6L122,90.4L121.2,89.7L120.5,90.2L119.8,89.9L119,89.7L118.2,89.4L117.5,89.0L116.8,89.3L116,90.1L115.2,89.4L114.5,89.2L113.8,90.0L113,89.5L112.2,89.4L111.5,89.2L110.8,89.1L110,89.3L109.2,89.9L108.5,90.5L107.8,89.4L107,90.0L106.2,90.0L105.5,89.3L104.8,89.5L104,89.6L103.2,89.8L102.5,90.1L101.8,90.0L101,89.2L100.2,89.3L99.5,89.5L98.8,89.8L98,89.5L97.2,89.7L96.5,89.1L95.8,89.8L95,89.7L94.2,90.1L93.5,89.2L92.8,90.0L92,89.3L91.2,89.2L90.5,89.3L89.8,89.4L89,88.8L88.2,88.9L87.5,89.3L86.8,89.5L86,89.7L85.2,89.8L84.5,89.5L83.8,90.0L83,89.3L82.2,90.0L81.5,89.4L80.8,88.7L80,88.6L79.2,89.3L78.5,89.0L77.8,88.8L77,89.4L76.2,89.1L75.5,90.0L74.8,89.5L74,89.8L73.2,89.5L72.5,89.5L71.8,89.9L71,89.7L70.2,89.7L69.5,89.6L68.8,89.8L68,89.3L67.2,89.7L66.5,89.2L65.8,90.0L65,89.3L64.2,90.0L63.5,89.8L62.8,89.6L62,89.6L61.2,89.8L60.5,90.0L59.8,89.7L59,89.8Z"/>
<path fill="#a8ffa8" opacity="0.35" d="M59,83.6L60.5,83.0L62,83.4L63.5,82.3L65,83.3L66.5,83.1L68,83.3L69.5,83.2L71,82.7L72.5,82.4L74,83.2L75.5,82.8L77,82.4L78.5,83.4L80,82.3L81.5,83.0L83,83.3L84.5,83.0L86,83.4L87.5,82.3L89,83.2L90.5,83.4L92,83.2L93.5,82.7L95,83.5L96.5,83.1L98,82.3L99.5,83.1L101,82.2L102.5,82.3L104,84.1L105.5,83.1L107,83.2L108.5,82.3L110,82.1L111.5,81.9L113,83.1L114.5,83.4L116,83.3L117.5,83.0L119,82.5L120.5,82.9L122,82.8L123.5,83.4L125,82.7L126.5,82.2L128,83.0L129.5,82.8L131,83.2L132.5,82.7L134,82.6L135.5,83.0L137,83.6L138.5,83.0L140,83.0L141.5,83.2L143,83.1L144.5,82.8L146,83.2L147.5,83.5L149,83.5L150.5,82.3L152,83.0L153.5,83.0L155,82.7L156.5,83.6L158,83.4L159.5,82.3L161,83.6L162.5,82.7L164,82.7L165.5,82.2L167,82.8L168.5,82.4L170,83.1L171.5,83.3L173,82.7L174.5,82.2L176,82.6L177.5,82.7L179,82.8L180.5,81.7L182,83.0L183.5,82.7L185,83.2L186.5,82.6L188,83.2L189.5,82.4L191,83.7L192.5,83.3L194,82.7L195.5,84.0L197,82.9L198.5,82.7L200,81.6L201.5,83.0L203,82.8L204.5,82.5L206,82.8L207.5,83.6L209,83.6L210.5,81.9L212,83.0L213.5,83.3L215,82.8L216.5,82.4L218,82.7L219.5,82.7L221,83.6L222.5,83.4L224,82.9L225.5,82.2L227,82.7L228.5,82.0L230,82.8L231.5,83.1L233,82.1L234.5,82.9L236,81.6L237.5,83.2L239,83.0L240.5,83.0L242,82.6L243.5,83.4L245,83.1L246.5,82.8L248,83.4L249.5,83.0L251,82.1L252.5,82.5L254,83.7L255.5,82.4L257,82.4L258.5,82.7L260,83.5L261.5,82.5L263,82.4L264.5,82.3L266,82.6L267.5,83.2L269,82.8L270.5,83.1L272,83.1L273.5,82.9L275,82.4L276.5,82.6L278,82.6L279.5,83.5L281,83.6L282.5,82.7L284,82.8L285.5,82.8L287,82.0L288.5,82.5L290,83.6L291.5,84.2L293,83.1L294.5,82.8L296,82.1L297.5,82.9L299,83.0L300.5,82.2L302,83.1L303.5,83.3L305,82.6L306.5,82.9L308,82.6L309.5,82.5L311,83.3L312.5,83.0L314,82.8L315.5,83.3L317,82.2L318.5,83.3L320,82.3L321.5,83.1L323,82.9L324.5,82.3L326,82.6L327.5,82.9L329,83.4L330.5,83.5L332,82.8L333.5,83.1L335,82.6L336.5,83.2L338,83.1L339.5,83.2L341,82.7L342.5,83.1L344,81.7L345.5,82.9L347,82.4L348.5,82.9L350,82.4L351.5,82.3L353,83.2L354.5,83.1L356,83.4L357.5,83.5L359,83.0L360.5,82.6L362,83.8L363.5,83.8L365,82.9L366.5,82.7L368,82.1L369.5,83.5L371,82.4L372.5,83.3L374,83.4L375.5,82.4L377,82.8L378.5,83.3L380,82.8L381.5,82.6L383,82.6L384.5,82.9L386,82.6L387.5,83.1L389,83.3L390.5,83.2L392,82.7L393.5,82.6L395,83.1L396.5,83.3L398,82.8L399.5,83.1L401,82.8L402.5,83.3L404,83.4L405.5,82.8L407,83.3L408.5,83.9L410,83.3L411.5,83.1L413,82.2L414.5,82.1L416,82.8L417.5,83.3L419,83.0L420.5,84.1L422,82.5L423.5,83.3L425,82.9L426.5,82.0L428,83.2L429.5,83.7L431,83.1L432.5,83.1L434,82.4L435.5,83.1L437,82.8L438.5,82.8L440,82.7L441.5,82.3L443,82.7L444.5,83.3L446,82.8L447.5,83.8L449,83.2L450.5,83.2L452,83.7L453.5,83.2L455,83.4L456.5,83.3L458,83.2L459.5,83.6L461,82.8L462.5,82.4L464,82.2L465.5,82.3L467,83.0L468.5,83.0L470,83.7L471.5,82.6L473,82.5L474.5,82.6L476,82.2L477.5,82.6L479,81.6L480.5,83.0L482,84.0L483.5,83.0L485,84.0L486.5,83.3L488,83.1L489.5,82.5L491,82.8L492.5,82.0L494,83.6L495.5,82.8L497,83.6L498.5,82.6L500,82.9L501.5,83.2L503,82.3L504.5,82.2L506,82.8L507.5,82.7L509,83.5L510.5,83.3L512,83.3L513.5,82.7L515,83.0L516.5,82.3L518,83.5L519.5,82.8L521,83.6L522.5,82.9L524,82.7L525.5,82.5L527,82.8L528.5,83.3L530,82.6L531.5,82.8L533,83.0L534.5,82.5L536,83.4L537.5,83.2L539,83.3L540.5,82.7L542,83.0L543.5,82.1L545,83.3L546.5,83.2L548,83.0L549.5,83.4L551,82.9L552.5,82.8L554,83.2L555.5,82.6L557,82.9L558.5,82.7L560,82.8L561.5,83.3L563,83.3L564.5,83.3L566,83.1L567.5,83.1L569,82.6L570.5,83.8L572,82.9L573.5,82.3L575,83.6L576.5,83.1L578,83.5L579.5,82.8L581,82.3L582.5,83.2L584,83.3L585.5,82.7L587,82.6L588.5,83.0L590,82.8L591.5,82.9L593,83.3L594.5,83.3L596,82.4L597.5,82.7L599,83.4L600.5,82.6L602,83.1L603.5,83.2L605,82.4L606.5,82.4L608,83.2L609.5,81.9L611,83.3L612.5,82.5L614,82.5L615.5,83.1L617,82.8L618.5,82.8L620,82.8L621.5,83.3L623,82.2L624.5,82.5L626,82.6L627.5,83.1L629,82.6L630.5,82.2L632,82.4L633.5,82.9L635,83.2L636.5,83.2L638,83.2L639.5,82.4L641,82.4L642.5,82.4L644,83.4L645.5,83.0L647,83.0L648.5,82.8L650,82.6L651.5,83.1L653,82.4L654.5,82.9L656,82.7L657.5,82.8L659,82.6L660.5,83.0L662,82.7L663.5,83.6L665,82.1L666.5,82.8L668,82.9L669.5,82.6L671,82.8L672.5,83.7L674,82.9L675.5,83.1L677,83.5L678.5,82.8L680,82.9L681.5,83.5L683,83.4L684.5,81.9L686,83.2L687.5,83.2L689,82.4L690.5,83.2L692,83.6L693.5,82.4L695,82.6L696.5,83.0L698,83.5L699.5,83.2L701,83.0L702.5,83.8L704,82.6L705.5,82.1L707,82.9L708.5,82.8L710,83.6L711.5,83.1L713,83.4L714.5,83.8L716,83.0L717.5,82.9L719,82.7L720.5,82.7L722,82.4L723.5,83.0L725,83.2L726.5,82.3L728,82.6L729.5,82.9L731,82.8L732.5,83.3L734,82.9L735.5,83.1L737,83.0L738.5,82.2L740,82.7L741.5,82.8L743,82.4L744.5,82.5L746,82.9L747.5,83.0L749,82.6L750.5,81.6L752,83.0L753.5,83.0L755,82.7L756.5,83.0L758,83.3L759.5,82.5L761,83.0L762.5,83.2L764,82.8L765.5,82.3L767,83.4L768.5,82.5L770,83.0L771.5,83.2L773,83.2L774.5,83.5L776,82.9L777.5,83.3L779,83.4L780.5,82.7L782,82.6L783.5,83.4L785,82.4L786.5,83.2L788,83.1L789.5,82.5L789.5,88.0L788,87.3L786.5,86.6L785,87.3L783.5,87.8L782,87.9L780.5,87.6L779,87.9L777.5,87.5L776,87.9L774.5,86.5L773,86.9L771.5,88.0L770,86.4L768.5,87.3L767,87.3L765.5,88.0L764,87.8L762.5,87.0L761,86.8L759.5,87.1L758,86.6L756.5,87.2L755,87.0L753.5,87.5L752,87.1L750.5,87.8L749,87.1L747.5,87.1L746,87.6L744.5,87.1L743,87.9L741.5,87.5L740,87.4L738.5,87.3L737,87.0L735.5,87.5L734,87.4L732.5,87.4L731,86.2L729.5,88.2L728,87.7L726.5,88.0L725,86.3L723.5,87.0L722,88.3L720.5,87.2L719,87.8L717.5,86.5L716,87.4L714.5,86.5L713,87.1L711.5,86.7L710,87.2L708.5,87.5L707,87.5L705.5,87.5L704,86.5L702.5,87.7L701,87.2L699.5,89.0L698,88.0L696.5,86.9L695,87.3L693.5,87.0L692,87.8L690.5,87.1L689,86.7L687.5,87.5L686,87.6L684.5,87.5L683,87.3L681.5,87.1L680,87.4L678.5,87.6L677,87.5L675.5,87.4L674,87.4L672.5,87.8L671,88.0L669.5,87.7L668,88.3L666.5,87.2L665,87.4L663.5,87.2L662,87.2L660.5,87.2L659,87.0L657.5,87.1L656,87.4L654.5,87.5L653,87.2L651.5,87.4L650,86.6L648.5,87.6L647,87.0L645.5,88.1L644,86.7L642.5,87.3L641,88.0L639.5,87.2L638,88.2L636.5,87.6L635,87.4L633.5,87.3L632,88.2L630.5,87.2L629,87.1L627.5,87.0L626,86.4L624.5,87.3L623,87.2L621.5,87.9L620,87.5L618.5,86.7L617,87.6L615.5,87.5L614,86.7L612.5,87.3L611,87.1L609.5,88.2L608,86.8L606.5,87.6L605,87.0L603.5,87.5L602,86.8L600.5,88.4L599,88.1L597.5,87.8L596,87.3L594.5,87.7L593,87.2L591.5,87.4L590,87.4L588.5,86.8L587,86.6L585.5,87.4L584,87.7L582.5,87.5L581,87.9L579.5,87.6L578,87.2L576.5,87.9L575,87.3L573.5,87.4L572,87.3L570.5,86.5L569,87.7L567.5,87.4L566,87.3L564.5,87.2L563,87.5L561.5,87.1L560,87.5L558.5,87.7L557,87.8L555.5,87.5L554,86.6L552.5,86.4L551,87.4L549.5,87.7L548,87.7L546.5,86.8L545,87.3L543.5,87.8L542,87.6L540.5,86.9L539,87.5L537.5,87.5L536,87.1L534.5,87.4L533,87.7L531.5,87.7L530,87.4L528.5,86.9L527,87.3L525.5,88.2L524,86.9L522.5,87.7L521,87.5L519.5,87.7L518,87.9L516.5,87.0L515,87.6L513.5,86.6L512,87.5L510.5,87.5L509,86.7L507.5,87.1L506,87.1L504.5,87.4L503,87.2L501.5,87.0L500,87.3L498.5,87.2L497,87.7L495.5,87.1L494,88.1L492.5,87.7L491,87.5L489.5,87.4L488,86.1L486.5,87.7L485,87.2L483.5,86.8L482,88.0L480.5,88.0L479,87.1L477.5,87.0L476,89.0L474.5,87.5L473,87.2L471.5,87.1L470,87.7L468.5,87.2L467,87.0L465.5,87.0L464,87.5L462.5,87.3L461,87.1L459.5,87.2L458,87.3L456.5,87.2L455,88.0L453.5,87.2L452,87.3L450.5,88.4L449,87.7L447.5,87.0L446,87.0L444.5,86.5L443,87.7L441.5,87.9L440,87.7L438.5,87.7L437,88.1L435.5,87.6L434,87.5L432.5,87.4L431,88.1L429.5,87.7L428,87.6L426.5,87.3L425,87.5L423.5,88.0L422,87.8L420.5,87.3L419,87.8L417.5,86.8L416,87.9L414.5,87.9L413,86.7L411.5,86.9L410,87.2L408.5,87.2L407,87.2L405.5,86.8L404,87.0L402.5,87.2L401,87.3L399.5,88.1L398,87.0L396.5,87.5L395,87.5L393.5,87.6L392,87.3L390.5,87.5L389,86.6L387.5,88.3L386,87.3L384.5,86.9L383,87.1L381.5,86.7L380,87.0L378.5,87.9L377,87.2L375.5,87.5L374,87.2L372.5,86.9L371,87.0L369.5,87.7L368,86.7L366.5,88.1L365,87.5L363.5,87.0L362,87.3L360.5,86.6L359,87.7L357.5,87.5L356,87.6L354.5,87.9L353,86.7L351.5,88.2L350,88.2L348.5,86.8L347,86.8L345.5,87.3L344,87.7L342.5,87.0L341,87.1L339.5,87.4L338,87.1L336.5,87.3L335,87.2L333.5,87.7L332,87.3L330.5,86.9L329,87.2L327.5,87.3L326,86.7L324.5,87.1L323,85.8L321.5,87.6L320,86.0L318.5,86.9L317,87.2L315.5,87.2L314,87.4L312.5,86.9L311,86.5L309.5,87.1L308,86.9L306.5,87.2L305,86.9L303.5,87.5L302,87.7L300.5,87.5L299,87.6L297.5,87.3L296,86.8L294.5,88.0L293,87.2L291.5,87.8L290,86.9L288.5,87.1L287,85.9L285.5,87.1L284,87.6L282.5,86.7L281,87.6L279.5,87.6L278,88.5L276.5,87.3L275,87.1L273.5,87.2L272,86.7L270.5,86.5L269,87.8L267.5,86.5L266,87.1L264.5,87.1L263,87.2L261.5,87.6L260,88.2L258.5,87.2L257,87.2L255.5,87.2L254,86.6L252.5,86.8L251,86.7L249.5,87.3L248,87.4L246.5,87.7L245,86.7L243.5,86.6L242,87.8L240.5,87.8L239,86.5L237.5,86.7L236,86.8L234.5,88.8L233,86.7L231.5,87.2L230,87.0L228.5,87.1L227,88.0L225.5,87.2L224,87.2L222.5,87.9L221,87.6L219.5,87.1L218,87.6L216.5,87.3L215,87.5L213.5,88.2L212,86.7L210.5,87.7L209,86.6L207.5,86.9L206,87.5L204.5,87.5L203,86.8L201.5,87.5L200,87.2L198.5,87.2L197,86.3L195.5,87.5L194,87.6L192.5,87.2L191,87.8L189.5,88.4L188,87.0L186.5,87.3L185,87.9L183.5,86.3L182,88.2L180.5,87.3L179,87.5L177.5,87.5L176,87.1L174.5,87.5L173,87.0L171.5,87.3L170,87.9L168.5,87.5L167,86.7L165.5,87.2L164,87.1L162.5,87.8L161,86.6L159.5,87.8L158,87.0L156.5,87.2L155,87.8L153.5,87.0L152,87.5L150.5,87.2L149,87.3L147.5,87.3L146,87.6L144.5,87.3L143,87.1L141.5,87.5L140,87.5L138.5,86.9L137,86.7L135.5,87.2L134,87.9L132.5,87.2L131,87.1L129.5,87.5L128,86.6L126.5,87.0L125,87.1L123.5,87.7L122,86.8L120.5,87.3L119,87.9L117.5,87.4L116,87.6L114.5,87.1L113,87.7L111.5,87.2L110,87.5L108.5,87.7L107,87.2L105.5,88.1L104,87.6L102.5,87.9L101,87.2L99.5,87.8L98,87.0L96.5,87.3L95,87.8L93.5,87.0L92,87.1L90.5,87.1L89,87.3L87.5,86.9L86,87.1L84.5,87.3L83,87.1L81.5,88.1L80,87.3L78.5,87.7L77,87.3L75.5,87.4L74,87.1L72.5,87.2L71,87.5L69.5,87.3L68,87.1L66.5,87.5L65,88.2L63.5,87.4L62,87.4L60.5,87.6L59,87.8Z"/>
<path fill="#a8ffa8" opacity="0.6" d="M59,84.5L61,84.3L63,84.3L65,84.9L67,83.5L69,84.6L71,83.4L73,83.9L75,84.0L77,84.5L79,84.0L81,84.6L83,83.7L85,83.8L87,83.7L89,84.1L91,84.3L93,84.5L95,84.3L97,83.6L99,83.9L101,84.2L103,84.2L105,84.2L107,83.9L109,84.0L111,83.6L113,83.9L115,84.1L117,84.2L119,83.9L121,84.4L123,84.2L125,84.2L127,84.2L129,84.1L131,83.7L133,84.0L135,83.5L137,84.7L139,83.4L141,84.0L143,84.2L145,84.1L147,84.2L149,84.2L151,83.9L153,84.1L155,83.9L157,84.1L159,84.4L161,84.5L163,84.0L165,84.1L167,83.7L169,84.8L171,84.2L173,83.9L175,84.4L177,84.0L179,84.1L181,84.1L183,84.1L185,84.5L187,84.2L189,83.9L191,84.2L193,84.3L195,84.4L197,83.9L199,84.1L201,83.6L203,84.0L205,83.9L207,84.0L209,83.9L211,84.0L213,84.2L215,84.1L217,84.1L219,84.1L221,83.9L223,84.2L225,83.9L227,84.0L229,83.7L231,83.5L233,84.8L235,83.9L237,84.0L239,83.7L241,84.5L243,84.5L245,84.2L247,84.7L249,83.6L251,83.3L253,83.8L255,84.1L257,84.2L259,83.4L261,84.3L263,84.4L265,83.7L267,83.4L269,84.2L271,84.4L273,83.7L275,84.1L277,84.1L279,84.4L281,84.2L283,84.3L285,84.0L287,84.0L289,84.3L291,83.8L293,84.1L295,84.0L297,83.6L299,84.4L301,84.1L303,83.6L305,84.2L307,84.6L309,84.6L311,84.7L313,84.0L315,83.8L317,84.1L319,84.0L321,84.2L323,83.9L325,84.4L327,84.9L329,83.7L331,84.1L333,84.1L335,84.0L337,83.7L339,84.1L341,84.1L343,84.5L345,83.9L347,84.5L349,84.4L351,84.2L353,84.7L355,84.0L357,84.5L359,84.3L361,84.1L363,84.3L365,84.5L367,84.0L369,84.8L371,84.5L373,84.3L375,83.7L377,84.3L379,84.6L381,84.2L383,83.6L385,84.2L387,84.4L389,84.0L391,83.8L393,84.2L395,84.6L397,84.1L399,83.8L401,83.6L403,84.8L405,83.5L407,83.9L409,83.8L411,83.8L413,84.6L415,83.8L417,84.1L419,84.6L421,84.4L423,84.6L425,84.3L427,84.8L429,84.2L431,83.9L433,84.7L435,83.9L437,83.6L439,84.7L441,84.0L443,83.9L445,83.7L447,83.5L449,84.3L451,84.3L453,83.5L455,84.1L457,83.9L459,84.4L461,84.2L463,84.1L465,84.5L467,84.1L469,84.3L471,84.5L473,83.9L475,84.6L477,84.4L479,84.8L481,82.9L483,83.9L485,84.2L487,84.3L489,83.9L491,84.4L493,84.0L495,84.6L497,83.9L499,84.5L501,84.3L503,83.8L505,84.9L507,84.0L509,84.3L511,83.8L513,84.7L515,84.1L517,84.6L519,84.3L521,83.6L523,84.4L525,84.3L527,84.3L529,83.7L531,83.6L533,83.9L535,84.3L537,84.2L539,84.2L541,83.8L543,83.8L545,84.1L547,83.5L549,84.7L551,84.6L553,83.9L555,84.6L557,84.3L559,83.9L561,83.9L563,84.4L565,83.9L567,83.8L569,84.6L571,83.6L573,84.2L575,83.8L577,83.6L579,84.1L581,83.8L583,84.2L585,84.4L587,84.0L589,84.0L591,84.1L593,83.7L595,83.8L597,84.4L599,84.2L601,84.2L603,83.4L605,84.0L607,84.3L609,84.4L611,83.8L613,84.1L615,83.9L617,84.0L619,84.0L621,83.9L623,84.1L625,84.3L627,83.9L629,84.3L631,83.7L633,84.2L635,83.9L637,83.7L639,83.6L641,84.2L643,83.3L645,84.3L647,84.6L649,84.3L651,84.3L653,83.9L655,84.3L657,84.0L659,83.8L661,83.9L663,84.1L665,84.6L667,84.6L669,84.1L671,84.0L673,84.0L675,84.0L677,84.9L679,84.1L681,84.3L683,83.9L685,84.5L687,84.5L689,84.1L691,84.1L693,84.3L695,83.6L697,84.1L699,84.2L701,83.8L703,84.0L705,84.7L707,84.1L709,84.0L711,84.4L713,84.2L715,84.5L717,84.1L719,84.0L721,84.3L723,84.2L725,83.3L727,83.8L729,84.3L731,84.2L733,83.9L735,84.0L737,83.8L739,83.8L741,84.0L743,84.0L745,83.9L747,84.3L749,83.6L751,83.8L753,84.6L755,83.8L757,84.3L759,83.9L761,84.0L763,84.2L765,84.1L767,84.5L769,83.3L771,83.6L773,84.4L775,83.5L777,84.2L779,84.1L781,84.2L783,83.7L785,84.8L787,84.4L789,84.0L789,85.7L787,85.9L785,85.7L783,86.5L781,86.1L779,86.1L777,85.8L775,86.3L773,86.0L771,86.4L769,86.5L767,85.7L765,86.7L763,86.3L761,86.2L759,86.3L757,86.6L755,86.2L753,86.4L751,86.1L749,85.6L747,86.0L745,85.9L743,85.9L741,86.3L739,85.8L737,86.4L735,86.2L733,85.9L731,85.9L729,86.2L727,86.4L725,86.3L723,85.2L721,85.8L719,86.6L717,86.1L715,85.7L713,85.7L711,85.6L709,86.6L707,86.4L705,85.8L703,86.4L701,85.7L699,85.6L697,86.0L695,86.6L693,86.7L691,85.5L689,86.6L687,86.2L685,85.7L683,86.2L681,85.6L679,86.0L677,86.4L675,86.6L673,86.6L671,86.5L669,85.5L667,85.3L665,85.9L663,86.6L661,86.3L659,86.4L657,86.3L655,86.0L653,86.0L651,86.9L649,86.0L647,86.4L645,85.7L643,86.1L641,86.3L639,85.8L637,86.3L635,86.2L633,86.0L631,86.2L629,86.1L627,86.4L625,86.2L623,86.7L621,85.6L619,86.1L617,86.7L615,86.3L613,86.4L611,86.6L609,86.7L607,86.1L605,86.9L603,86.5L601,86.0L599,85.7L597,85.9L595,86.5L593,86.0L591,85.7L589,86.3L587,86.4L585,85.8L583,86.3L581,86.2L579,86.2L577,86.5L575,86.0L573,86.3L571,86.0L569,85.9L567,86.1L565,86.6L563,86.2L561,86.5L559,86.1L557,86.9L555,84.9L553,86.0L551,86.0L549,86.2L547,86.1L545,85.7L543,86.5L541,86.5L539,86.7L537,85.6L535,85.6L533,86.1L531,86.2L529,85.4L527,85.9L525,86.4L523,85.8L521,86.1L519,85.6L517,85.6L515,86.5L513,86.2L511,86.2L509,85.8L507,85.4L505,85.9L503,85.2L501,86.3L499,85.9L497,86.5L495,86.3L493,86.8L491,86.0L489,86.8L487,85.9L485,86.6L483,86.0L481,85.9L479,85.8L477,85.8L475,86.4L473,85.9L471,86.2L469,86.3L467,85.6L465,86.1L463,86.5L461,86.5L459,86.1L457,85.9L455,85.8L453,86.2L451,86.4L449,86.5L447,86.3L445,85.7L443,87.0L441,85.8L439,86.3L437,86.1L435,85.5L433,86.1L431,85.8L429,85.6L427,85.3L425,86.6L423,86.9L421,86.1L419,86.1L417,86.2L415,86.3L413,85.8L411,86.2L409,86.8L407,86.4L405,86.3L403,85.4L401,86.8L399,85.7L397,86.2L395,85.8L393,86.3L391,86.3L389,86.0L387,86.2L385,86.3L383,85.9L381,86.2L379,86.0L377,86.4L375,86.3L373,86.4L371,85.7L369,85.4L367,86.2L365,86.2L363,85.5L361,85.9L359,86.1L357,85.6L355,86.3L353,85.7L351,86.5L349,86.1L347,86.2L345,86.2L343,86.1L341,85.9L339,85.9L337,86.1L335,86.1L333,85.8L331,85.9L329,86.3L327,85.8L325,85.7L323,86.0L321,85.3L319,86.7L317,86.8L315,85.5L313,86.1L311,85.8L309,85.8L307,85.4L305,85.8L303,86.8L301,85.7L299,86.6L297,86.2L295,85.6L293,85.5L291,86.7L289,86.3L287,86.2L285,85.9L283,85.8L281,85.7L279,85.9L277,85.5L275,86.1L273,86.2L271,86.7L269,85.9L267,86.4L265,86.7L263,86.3L261,85.6L259,86.1L257,85.8L255,86.2L253,85.6L251,86.2L249,86.0L247,86.0L245,85.6L243,86.6L241,85.8L239,86.4L237,86.3L235,86.2L233,87.0L231,85.9L229,86.1L227,86.1L225,86.2L223,85.6L221,86.3L219,85.5L217,85.9L215,86.5L213,85.9L211,86.1L209,85.6L207,86.5L205,86.2L203,86.3L201,86.1L199,86.3L197,86.6L195,85.9L193,86.6L191,86.5L189,86.0L187,86.8L185,86.4L183,85.8L181,86.9L179,85.3L177,86.1L175,86.4L173,86.4L171,86.6L169,86.0L167,85.6L165,85.7L163,85.8L161,86.7L159,85.7L157,86.3L155,86.4L153,86.2L151,86.1L149,85.9L147,86.6L145,86.3L143,86.1L141,86.1L139,86.0L137,86.5L135,86.5L133,86.5L131,86.1L129,86.4L127,85.5L125,86.0L123,86.5L121,85.2L119,85.6L117,85.6L115,86.0L113,85.6L111,86.2L109,86.5L107,86.3L105,85.8L103,86.7L101,86.4L99,86.5L97,86.1L95,86.4L93,86.0L91,86.2L89,86.1L87,86.4L85,86.1L83,86.2L81,86.1L79,86.4L77,86.0L75,86.3L73,85.3L71,86.0L69,85.8L67,86.1L65,86.3L63,86.2L61,86.2L59,85.3Z"/>
<path fill="#009aa6" d="M59,131.8L59.8,131.6L60.5,132.5L61.2,132.2L62,132.9L62.8,132.8L63.5,132.6L64.2,132.7L65,132.7L65.8,133.1L66.5,132.1L67.2,132.4L68,132.6L68.8,133.0L69.5,132.1L70.2,132.5L71,132.2L71.8,132.1L72.5,132.7L73.2,132.3L74,131.5L74.8,131.4L75.5,131.3L76.2,132.2L77,132.7L77.8,132.4L78.5,131.7L79.2,132.8L80,133.1L80.8,133.1L81.5,133.1L82.2,132.6L83,132.4L83.8,132.7L84.5,132.6L85.2,132.7L86,132.8L86.8,132.8L87.5,132.7L88.2,132.6L89,132.7L89.8,132.5L90.5,132.8L91.2,132.6L92,132.8L92.8,132.0L93.5,132.6L94.2,132.9L95,133.1L95.8,132.3L96.5,132.2L97.2,133.0L98,130.8L98.8,133.1L99.5,132.2L100.2,133.0L101,132.2L101.8,133.1L102.5,133.2L103.2,133.3L104,132.3L104.8,132.7L105.5,132.1L106.2,132.7L107,132.2L107.8,133.4L108.5,131.7L109.2,132.6L110,132.8L110.8,131.2L111.5,132.7L112.2,132.4L113,132.1L113.8,132.3L114.5,131.2L115.2,133.0L116,131.6L116.8,132.1L117.5,132.7L118.2,132.4L119,132.6L119.8,133.0L120.5,132.2L121.2,132.4L122,131.9L122.8,131.3L123.5,131.9L124.2,132.2L125,132.1L125.8,132.8L126.5,132.1L127.2,132.3L128,132.4L128.8,132.4L129.5,133.0L130.2,132.8L131,132.3L131.8,132.4L132.5,132.5L133.2,133.0L134,132.5L134.8,132.6L135.5,132.8L136.2,132.5L137,131.8L137.8,132.6L138.5,132.6L139.2,132.5L140,132.6L140.8,132.6L141.5,131.6L142.2,132.9L143,132.4L143.8,132.6L144.5,132.3L145.2,132.5L146,132.5L146.8,132.5L147.5,133.2L148.2,132.4L149,132.3L149.8,133.1L150.5,132.8L151.2,133.2L152,132.5L152.8,132.3L153.5,132.8L154.2,132.4L155,132.1L155.8,130.9L156.5,132.0L157.2,132.7L158,132.8L158.8,132.6L159.5,131.5L160.2,132.7L161,132.3L161.8,132.7L162.5,132.6L163.2,132.4L164,132.4L164.8,132.2L165.5,131.6L166.2,132.7L167,132.4L167.8,132.4L168.5,131.7L169.2,132.4L170,132.2L170.8,132.1L171.5,133.3L172.2,132.9L173,133.1L173.8,132.3L174.5,132.2L175.2,132.6L176,132.2L176.8,132.0L177.5,132.5L178.2,132.7L179,132.9L179.8,132.5L180.5,132.5L181.2,132.2L182,132.7L182.8,132.3L183.5,132.9L184.2,132.3L185,132.3L185.8,132.4L186.5,133.0L187.2,132.4L188,132.6L188.8,132.3L189.5,132.7L190.2,131.9L191,132.0L191.8,132.6L192.5,133.1L193.2,132.6L194,132.9L194.8,132.3L195.5,131.8L196.2,132.8L197,132.2L197.8,132.5L198.5,131.8L199.2,131.6L200,132.6L200.8,132.9L201.5,132.6L202.2,132.3L203,132.8L203.8,132.1L204.5,132.5L205.2,132.3L206,131.1L206.8,132.8L207.5,132.7L208.2,132.8L209,133.0L209.8,130.8L210.5,132.1L211.2,132.3L212,133.0L212.8,132.7L213.5,133.1L214.2,132.4L215,132.9L215.8,131.9L216.5,132.7L217.2,133.1L218,132.8L218.8,132.4L219.5,132.5L220.2,133.2L221,132.3L221.8,132.3L222.5,133.2L223.2,131.6L224,132.5L224.8,132.2L225.5,132.7L226.2,132.9L227,132.4L227.8,132.9L228.5,133.1L229.2,132.6L230,132.9L230.8,133.6L231.5,133.3L232.2,132.2L233,131.0L233.8,132.0L234.5,132.1L235.2,132.3L236,132.7L236.8,132.2L237.5,131.1L238.2,131.6L239,132.8L239.8,133.0L240.5,133.0L241.2,132.6L242,132.1L242.8,132.4L243.5,132.3L244.2,133.1L245,132.5L245.8,132.7L246.5,132.7L247.2,131.9L248,132.1L248.8,132.0L249.5,132.4L250.2,132.9L251,132.3L251.8,132.7L252.5,132.6L253.2,131.6L254,132.3L254.8,132.4L255.5,132.3L256.2,132.0L257,132.7L257.8,132.6L258.5,133.1L259.2,132.4L260,132.7L260.8,132.5L261.5,132.8L262.2,132.1L263,132.7L263.8,132.6L264.5,132.3L265.2,132.3L266,132.4L266.8,133.0L267.5,132.3L268.2,132.9L269,133.0L269.8,133.3L270.5,132.7L271.2,132.1L272,133.3L272.8,132.1L273.5,132.7L274.2,130.5L275,132.7L275.8,132.7L276.5,131.8L277.2,132.8L278,133.1L278.8,132.2L279.5,132.4L280.2,132.9L281,133.0L281.8,132.1L282.5,133.1L283.2,132.8L284,131.5L284.8,132.9L285.5,131.7L286.2,132.8L287,132.4L287.8,132.7L288.5,131.7L289.2,132.3L290,132.3L290.8,131.4L291.5,133.6L292.2,132.9L293,132.9L293.8,132.5L294.5,131.7L295.2,132.1L296,132.7L296.8,132.4L297.5,132.7L298.2,132.0L299,133.0L299.8,132.1L300.5,131.7L301.2,133.0L302,132.5L302.8,132.2L303.5,131.9L304.2,133.0L305,132.5L305.8,131.3L306.5,131.3L307.2,131.5L308,132.9L308.8,132.3L309.5,132.6L310.2,132.6L311,132.8L311.8,132.1L312.5,132.9L313.2,132.3L314,132.5L314.8,131.6L315.5,132.8L316.2,132.5L317,133.0L317.8,132.4L318.5,132.4L319.2,132.7L320,132.7L320.8,132.3L321.5,132.3L322.2,132.0L323,132.4L323.8,133.1L324.5,132.3L325.2,132.0L326,132.3L326.8,132.9L327.5,132.2L328.2,131.5L329,133.0L329.8,132.1L330.5,132.7L331.2,132.2L332,131.8L332.8,132.3L333.5,131.0L334.2,132.3L335,133.1L335.8,132.9L336.5,133.0L337.2,132.3L338,133.4L338.8,133.4L339.5,132.6L340.2,131.6L341,133.7L341.8,132.3L342.5,131.9L343.2,132.6L344,132.0L344.8,131.8L345.5,132.5L346.2,132.9L347,132.7L347.8,131.6L348.5,132.9L349.2,132.4L350,132.1L350.8,132.5L351.5,132.6L352.2,131.7L353,132.4L353.8,132.1L354.5,132.7L355.2,132.7L356,132.9L356.8,133.0L357.5,132.2L358.2,132.7L359,132.7L359.8,131.8L360.5,132.5L361.2,132.0L362,132.5L362.8,132.8L363.5,131.4L364.2,132.7L365,132.6L365.8,133.1L366.5,132.1L367.2,132.5L368,132.4L368.8,133.0L369.5,132.5L370.2,132.9L371,133.0L371.8,132.7L372.5,132.1L373.2,133.1L374,132.9L374.8,132.0L375.5,133.3L376.2,132.9L377,132.0L377.8,132.7L378.5,133.0L379.2,131.9L380,132.5L380.8,132.9L381.5,132.4L382.2,133.3L383,132.0L383.8,132.3L384.5,132.2L385.2,133.0L386,132.8L386.8,131.2L387.5,132.1L388.2,133.1L389,131.4L389.8,132.3L390.5,132.3L391.2,132.7L392,131.5L392.8,132.3L393.5,132.5L394.2,133.0L395,132.6L395.8,132.6L396.5,131.8L397.2,132.5L398,133.2L398.8,131.7L399.5,132.9L400.2,132.5L401,132.7L401.8,131.9L402.5,132.7L403.2,132.5L404,132.5L404.8,132.4L405.5,132.9L406.2,132.6L407,131.9L407.8,132.8L408.5,132.4L409.2,131.4L410,131.2L410.8,132.9L411.5,132.6L412.2,133.3L413,132.5L413.8,132.2L414.5,132.1L415.2,131.7L416,133.0L416.8,132.8L417.5,132.8L418.2,132.1L419,132.0L419.8,132.9L420.5,132.4L421.2,132.6L422,132.4L422.8,132.6L423.5,132.1L424.2,132.6L425,132.3L425.8,133.4L426.5,132.9L427.2,131.9L428,132.0L428.8,132.7L429.5,132.7L430.2,132.8L431,132.9L431.8,132.6L432.5,132.1L433.2,132.5L434,131.4L434.8,132.4L435.5,132.9L436.2,131.7L437,132.7L437.8,132.3L438.5,132.4L439.2,133.1L440,132.8L440.8,132.9L441.5,132.3L442.2,132.7L443,131.6L443.8,132.5L444.5,132.3L445.2,132.7L446,132.1L446.8,132.1L447.5,132.4L448.2,133.2L449,131.3L449.8,132.6L450.5,132.4L451.2,132.9L452,132.9L452.8,132.8L453.5,132.9L454.2,131.5L455,132.5L455.8,133.1L456.5,132.8L457.2,132.6L458,133.0L458.8,131.4L459.5,132.8L460.2,132.9L461,132.4L461.8,132.4L462.5,132.1L463.2,131.9L464,132.5L464.8,132.8L465.5,132.6L466.2,132.7L467,132.7L467.8,132.7L468.5,133.2L469.2,132.7L470,132.3L470.8,131.6L471.5,131.5L472.2,132.5L473,132.0L473.8,132.3L474.5,132.2L475.2,132.5L476,132.2L476.8,132.3L477.5,132.3L478.2,133.0L479,132.6L479.8,132.7L480.5,132.2L481.2,131.9L482,132.6L482.8,130.9L483.5,132.4L484.2,132.6L485,131.7L485.8,132.7L486.5,133.0L487.2,132.8L488,132.6L488.8,131.7L489.5,132.2L490.2,131.7L491,132.3L491.8,133.2L492.5,133.2L493.2,132.3L494,132.9L494.8,130.9L495.5,131.7L496.2,132.6L497,132.8L497.8,133.2L498.5,132.4L499.2,132.6L500,132.9L500.8,131.9L501.5,133.1L502.2,132.5L503,132.6L503.8,132.6L504.5,132.3L505.2,131.5L506,132.5L506.8,132.3L507.5,131.4L508.2,132.1L509,132.0L509.8,132.0L510.5,132.4L511.2,132.2L512,132.8L512.8,132.3L513.5,132.2L514.2,132.5L515,132.7L515.8,132.2L516.5,132.5L517.2,132.9L518,132.1L518.8,133.2L519.5,131.0L520.2,132.3L521,132.8L521.8,132.3L522.5,132.6L523.2,132.8L524,132.3L524.8,131.6L525.5,130.6L526.2,132.6L527,131.8L527.8,132.3L528.5,131.1L529.2,132.3L530,132.2L530.8,132.6L531.5,132.4L532.2,132.7L533,132.6L533.8,132.7L534.5,133.1L535.2,132.5L536,132.3L536.8,133.6L537.5,132.8L538.2,132.4L539,131.9L539.8,132.5L540.5,131.3L541.2,132.2L542,132.4L542.8,132.5L543.5,132.8L544.2,133.2L545,132.7L545.8,132.3L546.5,132.4L547.2,131.6L548,132.7L548.8,132.2L549.5,133.0L550.2,132.2L551,132.9L551.8,132.5L552.5,132.8L553.2,132.5L554,132.5L554.8,132.3L555.5,131.2L556.2,132.6L557,132.5L557.8,131.6L558.5,132.2L559.2,131.2L560,132.1L560.8,130.8L561.5,131.4L562.2,132.5L563,131.8L563.8,132.7L564.5,132.2L565.2,132.2L566,132.9L566.8,130.8L567.5,133.0L568.2,132.7L569,132.7L569.8,132.9L570.5,132.8L571.2,132.2L572,133.2L572.8,132.1L573.5,132.6L574.2,131.9L575,132.6L575.8,132.5L576.5,131.9L577.2,132.9L578,132.7L578.8,132.7L579.5,131.9L580.2,132.0L581,132.2L581.8,132.5L582.5,132.9L583.2,132.7L584,131.7L584.8,131.7L585.5,132.2L586.2,133.0L587,132.7L587.8,131.7L588.5,133.4L589.2,132.3L590,133.2L590.8,132.3L591.5,132.8L592.2,132.7L593,132.6L593.8,133.5L594.5,132.3L595.2,132.1L596,131.8L596.8,132.2L597.5,133.7L598.2,133.0L599,131.8L599.8,132.8L600.5,132.8L601.2,132.6L602,131.3L602.8,132.4L603.5,132.5L604.2,133.0L605,132.3L605.8,132.6L606.5,132.9L607.2,132.3L608,133.1L608.8,132.6L609.5,131.8L610.2,132.7L611,132.0L611.8,132.4L612.5,132.7L613.2,132.2L614,132.7L614.8,132.9L615.5,133.0L616.2,132.0L617,132.9L617.8,132.7L618.5,133.0L619.2,132.0L620,131.9L620.8,132.5L621.5,132.0L622.2,132.5L623,131.9L623.8,132.2L624.5,132.7L625.2,132.7L626,132.4L626.8,132.7L627.5,132.1L628.2,131.7L629,132.4L629.8,133.0L630.5,131.8L631.2,132.7L632,132.3L632.8,132.4L633.5,133.0L634.2,133.0L635,131.7L635.8,131.5L636.5,132.6L637.2,132.4L638,132.2L638.8,132.7L639.5,132.5L640.2,131.8L641,132.7L641.8,132.0L642.5,132.6L643.2,132.8L644,131.8L644.8,132.8L645.5,132.9L646.2,132.7L647,132.4L647.8,132.4L648.5,132.4L649.2,132.7L650,132.5L650.8,132.4L651.5,132.8L652.2,132.5L653,132.8L653.8,133.1L654.5,132.5L655.2,132.4L656,132.3L656.8,132.9L657.5,133.2L658.2,132.3L659,132.3L659.8,132.9L660.5,132.1L661.2,133.6L662,132.5L662.8,132.3L663.5,133.2L664.2,132.8L665,132.0L665.8,132.5L666.5,132.2L667.2,132.9L668,131.9L668.8,132.6L669.5,132.7L670.2,131.4L671,132.1L671.8,132.3L672.5,132.3L673.2,132.5L674,132.3L674.8,132.5L675.5,131.9L676.2,132.6L677,132.4L677.8,132.2L678.5,133.4L679.2,132.4L680,132.9L680.8,132.7L681.5,132.6L682.2,132.5L683,131.8L683.8,131.8L684.5,132.2L685.2,133.2L686,131.9L686.8,132.2L687.5,132.6L688.2,132.4L689,132.8L689.8,132.3L690.5,133.1L691.2,132.7L692,132.7L692.8,132.5L693.5,132.4L694.2,132.2L695,132.5L695.8,132.8L696.5,132.7L697.2,132.4L698,132.3L698.8,132.2L699.5,132.2L700.2,132.4L701,133.1L701.8,132.3L702.5,132.8L703.2,132.7L704,131.8L704.8,133.0L705.5,132.1L706.2,131.8L707,133.3L707.8,132.5L708.5,131.2L709.2,131.6L710,132.1L710.8,132.6L711.5,132.3L712.2,133.2L713,132.1L713.8,132.8L714.5,132.3L715.2,132.4L716,132.2L716.8,132.4L717.5,132.3L718.2,132.8L719,132.6L719.8,132.2L720.5,132.7L721.2,132.3L722,132.3L722.8,130.8L723.5,130.8L724.2,132.6L725,132.3L725.8,132.7L726.5,132.9L727.2,132.0L728,132.8L728.8,132.5L729.5,132.3L730.2,132.5L731,132.4L731.8,131.7L732.5,132.6L733.2,133.0L734,133.3L734.8,132.3L735.5,132.1L736.2,133.1L737,131.3L737.8,132.6L738.5,133.0L739.2,132.4L740,132.5L740.8,132.5L741.5,132.5L742.2,132.7L743,132.7L743.8,132.0L744.5,133.2L745.2,132.3L746,130.6L746.8,132.5L747.5,132.2L748.2,132.9L749,131.3L749.8,132.4L750.5,132.9L751.2,132.4L752,132.8L752.8,132.4L753.5,131.6L754.2,132.9L755,132.5L755.8,132.5L756.5,132.2L757.2,132.4L758,133.1L758.8,131.9L759.5,131.8L760.2,132.3L761,132.6L761.8,132.6L762.5,132.5L763.2,133.0L764,132.1L764.8,132.6L765.5,131.7L766.2,132.5L767,133.0L767.8,131.2L768.5,132.8L769.2,132.3L770,133.2L770.8,132.7L771.5,132.1L772.2,132.3L773,132.3L773.8,132.4L774.5,132.6L775.2,132.8L776,133.0L776.8,132.3L777.5,132.0L778.2,132.7L779,132.7L779.8,132.5L780.5,132.7L781.2,133.0L782,132.8L782.8,133.0L783.5,132.4L784.2,132.7L785,132.1L785.8,132.7L786.5,132.3L787.2,132.6L788,132.5L788.8,132.9L789.5,131.3L789.5,143.8L788.8,143.0L788,142.2L787.2,143.4L786.5,142.7L785.8,143.3L785,143.8L784.2,144.0L783.5,143.2L782.8,142.4L782,142.8L781.2,143.1L780.5,144.4L779.8,143.5L779,143.0L778.2,144.1L777.5,142.6L776.8,142.3L776,142.9L775.2,143.1L774.5,143.1L773.8,143.5L773,142.9L772.2,143.8L771.5,143.1L770.8,143.2L770,142.2L769.2,142.9L768.5,144.0L767.8,143.2L767,143.7L766.2,143.8L765.5,142.8L764.8,143.4L764,143.3L763.2,142.7L762.5,143.3L761.8,143.0L761,143.2L760.2,143.6L759.5,143.1L758.8,143.2L758,143.7L757.2,143.1L756.5,143.1L755.8,143.1L755,142.6L754.2,143.1L753.5,142.8L752.8,142.8L752,142.4L751.2,142.9L750.5,143.2L749.8,142.8L749,143.4L748.2,143.6L747.5,142.6L746.8,143.1L746,143.0L745.2,143.6L744.5,143.0L743.8,143.3L743,142.8L742.2,143.7L741.5,143.8L740.8,142.6L740,143.5L739.2,142.9L738.5,143.5L737.8,143.2L737,143.3L736.2,143.4L735.5,144.0L734.8,142.5L734,143.3L733.2,142.7L732.5,142.9L731.8,142.5L731,142.9L730.2,143.8L729.5,142.8L728.8,143.4L728,143.4L727.2,144.4L726.5,143.1L725.8,142.8L725,143.0L724.2,142.5L723.5,143.1L722.8,144.3L722,143.4L721.2,142.8L720.5,144.0L719.8,143.3L719,143.2L718.2,144.1L717.5,143.5L716.8,143.3L716,142.8L715.2,143.6L714.5,143.0L713.8,143.9L713,142.9L712.2,144.0L711.5,142.3L710.8,143.3L710,143.6L709.2,143.4L708.5,142.5L707.8,143.3L707,142.9L706.2,142.9L705.5,142.7L704.8,144.0L704,142.7L703.2,143.4L702.5,143.3L701.8,142.8L701,143.0L700.2,143.6L699.5,142.6L698.8,143.0L698,143.6L697.2,142.7L696.5,142.8L695.8,142.6L695,143.0L694.2,144.1L693.5,142.9L692.8,142.9L692,144.3L691.2,143.1L690.5,142.7L689.8,143.3L689,143.3L688.2,143.1L687.5,144.2L686.8,143.3L686,142.8L685.2,142.7L684.5,143.0L683.8,142.3L683,142.8L682.2,143.3L681.5,144.1L680.8,143.1L680,142.9L679.2,143.7L678.5,143.0L677.8,142.9L677,143.1L676.2,143.2L675.5,143.2L674.8,143.9L674,143.7L673.2,143.4L672.5,143.0L671.8,143.6L671,143.1L670.2,142.9L669.5,142.4L668.8,142.9L668,142.9L667.2,142.6L666.5,143.1L665.8,142.5L665,142.8L664.2,143.3L663.5,142.8L662.8,143.0L662,143.8L661.2,143.3L660.5,143.2L659.8,142.7L659,143.1L658.2,143.4L657.5,143.5L656.8,142.9L656,143.1L655.2,143.0L654.5,142.9L653.8,142.9L653,142.6L652.2,142.8L651.5,142.8L650.8,142.4L650,144.3L649.2,143.8L648.5,142.7L647.8,143.1L647,144.2L646.2,143.4L645.5,142.5L644.8,142.4L644,143.4L643.2,143.5L642.5,142.9L641.8,143.1L641,142.7L640.2,142.3L639.5,143.1L638.8,143.2L638,142.8L637.2,142.7L636.5,143.2L635.8,143.4L635,143.7L634.2,142.7L633.5,142.7L632.8,144.3L632,144.2L631.2,143.1L630.5,143.4L629.8,143.2L629,143.5L628.2,142.7L627.5,142.7L626.8,142.4L626,142.9L625.2,143.4L624.5,144.4L623.8,143.2L623,143.8L622.2,142.5L621.5,142.9L620.8,143.0L620,143.1L619.2,142.8L618.5,142.6L617.8,143.7L617,143.0L616.2,142.6L615.5,143.0L614.8,143.3L614,142.7L613.2,143.1L612.5,143.0L611.8,142.9L611,142.6L610.2,142.9L609.5,143.4L608.8,142.4L608,144.0L607.2,142.9L606.5,143.9L605.8,143.9L605,142.8L604.2,143.0L603.5,142.6L602.8,143.3L602,142.9L601.2,142.6L600.5,143.9L599.8,143.4L599,142.8L598.2,143.1L597.5,143.0L596.8,142.8L596,144.3L595.2,142.6L594.5,143.3L593.8,143.2L593,143.1L592.2,144.5L591.5,142.4L590.8,143.2L590,143.0L589.2,143.8L588.5,143.0L587.8,142.7L587,143.2L586.2,143.7L585.5,142.8L584.8,143.2L584,144.5L583.2,143.6L582.5,142.9L581.8,143.6L581,144.3L580.2,142.5L579.5,144.0L578.8,143.1L578,143.8L577.2,142.5L576.5,143.0L575.8,143.6L575,143.0L574.2,144.3L573.5,142.9L572.8,143.1L572,143.0L571.2,143.2L570.5,143.4L569.8,144.1L569,143.0L568.2,143.4L567.5,143.4L566.8,143.1L566,143.3L565.2,143.1L564.5,143.1L563.8,143.2L563,142.7L562.2,142.7L561.5,143.3L560.8,143.4L560,143.8L559.2,143.5L558.5,142.4L557.8,143.1L557,142.9L556.2,143.2L555.5,142.9L554.8,143.2L554,143.0L553.2,144.4L552.5,143.0L551.8,142.9L551,141.9L550.2,144.3L549.5,143.3L548.8,143.5L548,144.1L547.2,142.4L546.5,143.0L545.8,143.1L545,142.8L544.2,143.8L543.5,142.6L542.8,142.9L542,143.4L541.2,142.9L540.5,143.6L539.8,144.0L539,143.0L538.2,143.4L537.5,142.6L536.8,143.4L536,143.9L535.2,143.8L534.5,143.2L533.8,142.7L533,143.4L532.2,143.1L531.5,142.5L530.8,144.0L530,143.5L529.2,143.3L528.5,143.2L527.8,143.6L527,142.0L526.2,143.0L525.5,142.9L524.8,143.4L524,142.9L523.2,142.8L522.5,143.0L521.8,143.1L521,143.0L520.2,143.0L519.5,144.4L518.8,142.8L518,142.9L517.2,143.3L516.5,143.6L515.8,143.1L515,144.3L514.2,143.4L513.5,142.7L512.8,142.5L512,142.9L511.2,143.4L510.5,143.4L509.8,143.2L509,142.6L508.2,142.2L507.5,143.3L506.8,142.8L506,142.6L505.2,142.8L504.5,143.2L503.8,143.1L503,142.5L502.2,143.1L501.5,143.0L500.8,143.1L500,143.3L499.2,143.2L498.5,143.1L497.8,142.1L497,143.2L496.2,142.9L495.5,143.2L494.8,143.2L494,143.5L493.2,142.4L492.5,142.8L491.8,143.0L491,142.9L490.2,143.1L489.5,142.7L488.8,143.0L488,142.8L487.2,143.0L486.5,143.0L485.8,142.4L485,144.5L484.2,142.7L483.5,143.1L482.8,142.8L482,142.9L481.2,143.5L480.5,142.8L479.8,143.9L479,143.7L478.2,143.0L477.5,143.5L476.8,143.2L476,142.3L475.2,142.9L474.5,144.0L473.8,142.6L473,144.0L472.2,143.7L471.5,142.7L470.8,143.9L470,142.9L469.2,142.6L468.5,143.1L467.8,142.6L467,143.6L466.2,143.3L465.5,142.4L464.8,143.3L464,142.9L463.2,144.3L462.5,142.9L461.8,143.4L461,143.0L460.2,142.9L459.5,143.8L458.8,142.3L458,143.0L457.2,142.7L456.5,143.1L455.8,144.1L455,142.9L454.2,143.9L453.5,143.1L452.8,142.8L452,142.6L451.2,143.0L450.5,142.8L449.8,142.6L449,142.8L448.2,142.5L447.5,143.2L446.8,143.4L446,143.3L445.2,142.7L444.5,143.1L443.8,142.7L443,144.1L442.2,143.2L441.5,143.3L440.8,143.5L440,142.9L439.2,142.3L438.5,143.5L437.8,142.9L437,143.1L436.2,144.5L435.5,142.5L434.8,143.4L434,142.7L433.2,143.1L432.5,142.9L431.8,144.1L431,143.6L430.2,143.3L429.5,142.5L428.8,143.5L428,142.5L427.2,143.2L426.5,142.7L425.8,142.7L425,144.8L424.2,143.2L423.5,142.8L422.8,143.3L422,143.4L421.2,143.4L420.5,143.1L419.8,143.5L419,143.8L418.2,142.8L417.5,144.3L416.8,142.8L416,143.1L415.2,143.1L414.5,143.1L413.8,142.8L413,143.4L412.2,143.7L411.5,142.9L410.8,142.8L410,143.1L409.2,142.5L408.5,142.9L407.8,142.6L407,143.1L406.2,142.7L405.5,143.2L404.8,143.1L404,143.0L403.2,142.4L402.5,143.6L401.8,144.6L401,143.5L400.2,142.9L399.5,142.5L398.8,143.0L398,143.1L397.2,143.2L396.5,143.4L395.8,143.6L395,144.2L394.2,142.3L393.5,143.3L392.8,143.5L392,143.4L391.2,144.1L390.5,143.3L389.8,142.7L389,143.3L388.2,142.3L387.5,143.3L386.8,143.0L386,143.3L385.2,144.1L384.5,143.4L383.8,143.0L383,143.0L382.2,143.4L381.5,142.9L380.8,143.6L380,142.7L379.2,143.1L378.5,143.2L377.8,143.0L377,142.6L376.2,143.2L375.5,143.0L374.8,143.0L374,142.9L373.2,142.7L372.5,142.0L371.8,143.1L371,142.8L370.2,142.1L369.5,142.8L368.8,143.2L368,143.3L367.2,143.3L366.5,142.9L365.8,142.7L365,142.7L364.2,143.0L363.5,143.9L362.8,143.1L362,143.0L361.2,143.0L360.5,143.3L359.8,143.8L359,144.6L358.2,143.5L357.5,142.8L356.8,142.8L356,142.0L355.2,142.7L354.5,142.7L353.8,143.8L353,143.5L352.2,144.0L351.5,143.4L350.8,143.5L350,143.3L349.2,143.8L348.5,143.0L347.8,142.5L347,143.0L346.2,142.8L345.5,143.8L344.8,143.4L344,143.6L343.2,143.6L342.5,142.9L341.8,143.0L341,142.1L340.2,142.8L339.5,143.3L338.8,143.2L338,142.4L337.2,142.9L336.5,143.4L335.8,142.7L335,143.5L334.2,142.6L333.5,142.7L332.8,144.3L332,142.9L331.2,144.3L330.5,143.8L329.8,143.1L329,143.1L328.2,142.8L327.5,142.7L326.8,142.8L326,143.0L325.2,143.4L324.5,143.2L323.8,142.2L323,143.1L322.2,142.8L321.5,143.1L320.8,143.3L320,142.8L319.2,143.2L318.5,143.0L317.8,143.0L317,143.0L316.2,142.6L315.5,143.0L314.8,143.7L314,142.9L313.2,142.5L312.5,143.0L311.8,143.2L311,142.4L310.2,143.0L309.5,142.6L308.8,144.0L308,143.5L307.2,143.4L306.5,143.4L305.8,143.8L305,142.2L304.2,143.2L303.5,142.8L302.8,142.8L302,143.1L301.2,143.1L300.5,144.7L299.8,143.0L299,144.2L298.2,142.9L297.5,143.3L296.8,142.4L296,142.9L295.2,143.5L294.5,142.0L293.8,143.2L293,142.3L292.2,143.6L291.5,144.1L290.8,144.0L290,143.0L289.2,143.1L288.5,143.2L287.8,142.7L287,142.6L286.2,143.4L285.5,143.4L284.8,143.1L284,142.7L283.2,144.3L282.5,143.1L281.8,142.9L281,142.5L280.2,143.4L279.5,143.0L278.8,143.2L278,143.7L277.2,142.8L276.5,142.4L275.8,143.1L275,143.4L274.2,142.7L273.5,143.2L272.8,143.3L272,143.6L271.2,142.9L270.5,142.9L269.8,143.3L269,143.5L268.2,142.7L267.5,142.9L266.8,142.1L266,142.5L265.2,142.8L264.5,142.2L263.8,143.1L263,142.8L262.2,143.4L261.5,143.4L260.8,142.6L260,143.3L259.2,142.7L258.5,142.8L257.8,142.7L257,144.5L256.2,143.0L255.5,142.8L254.8,143.0L254,142.9L253.2,143.2L252.5,143.1L251.8,142.9L251,142.4L250.2,142.3L249.5,143.5L248.8,144.0L248,144.1L247.2,142.9L246.5,143.0L245.8,143.3L245,142.6L244.2,143.3L243.5,142.9L242.8,143.5L242,143.4L241.2,144.2L240.5,143.7L239.8,142.7L239,142.7L238.2,144.1L237.5,142.4L236.8,143.1L236,143.0L235.2,143.5L234.5,142.1L233.8,143.2L233,143.0L232.2,143.9L231.5,143.8L230.8,143.0L230,142.7L229.2,143.2L228.5,142.8L227.8,143.7L227,143.0L226.2,143.5L225.5,143.5L224.8,143.6L224,142.9L223.2,143.3L222.5,143.1L221.8,143.6L221,142.8L220.2,143.3L219.5,143.5L218.8,143.6L218,143.0L217.2,142.7L216.5,145.0L215.8,143.1L215,142.5L214.2,142.7L213.5,143.2L212.8,143.0L212,143.5L211.2,143.1L210.5,143.1L209.8,143.9L209,142.7L208.2,143.1L207.5,143.1L206.8,142.7L206,142.6L205.2,142.3L204.5,143.4L203.8,143.2L203,143.0L202.2,143.0L201.5,144.2L200.8,143.4L200,142.7L199.2,143.0L198.5,142.9L197.8,142.9L197,143.1L196.2,143.4L195.5,142.7L194.8,143.3L194,142.7L193.2,142.7L192.5,142.8L191.8,142.9L191,143.3L190.2,144.0L189.5,143.2L188.8,143.1L188,142.9L187.2,142.9L186.5,142.6L185.8,143.1L185,142.5L184.2,142.5L183.5,143.2L182.8,143.0L182,144.1L181.2,142.9L180.5,143.2L179.8,143.5L179,142.9L178.2,142.4L177.5,143.2L176.8,143.0L176,143.1L175.2,142.5L174.5,142.8L173.8,143.1L173,142.4L172.2,143.4L171.5,143.9L170.8,144.0L170,142.3L169.2,143.9L168.5,143.4L167.8,142.9L167,143.6L166.2,143.1L165.5,144.1L164.8,143.3L164,143.1L163.2,143.5L162.5,143.2L161.8,143.6L161,142.7L160.2,142.4L159.5,143.2L158.8,143.0L158,143.9L157.2,143.3L156.5,143.5L155.8,142.6L155,142.9L154.2,143.0L153.5,143.3L152.8,143.7L152,142.9L151.2,142.5L150.5,142.8L149.8,143.4L149,143.2L148.2,142.6L147.5,143.3L146.8,143.2L146,142.5L145.2,142.9L144.5,142.9L143.8,143.3L143,142.8L142.2,143.1L141.5,143.0L140.8,143.4L140,143.0L139.2,143.3L138.5,142.6L137.8,143.6L137,143.5L136.2,143.1L135.5,143.4L134.8,143.6L134,142.1L133.2,143.5L132.5,142.9L131.8,143.7L131,142.2L130.2,143.5L129.5,142.1L128.8,142.9L128,142.2L127.2,143.1L126.5,143.6L125.8,143.5L125,142.7L124.2,142.8L123.5,142.9L122.8,143.0L122,143.0L121.2,144.4L120.5,142.5L119.8,143.0L119,142.7L118.2,143.2L117.5,143.5L116.8,144.6L116,143.6L115.2,143.2L114.5,143.1L113.8,143.9L113,142.7L112.2,142.5L111.5,142.9L110.8,142.6L110,142.7L109.2,142.9L108.5,143.2L107.8,143.9L107,144.2L106.2,143.5L105.5,143.9L104.8,143.8L104,142.9L103.2,142.8L102.5,143.4L101.8,143.1L101,142.7L100.2,143.3L99.5,142.7L98.8,143.3L98,142.9L97.2,143.3L96.5,144.5L95.8,142.9L95,142.8L94.2,142.6L93.5,144.9L92.8,142.4L92,143.2L91.2,143.1L90.5,143.0L89.8,143.2L89,142.2L88.2,142.8L87.5,144.0L86.8,142.4L86,143.3L85.2,142.7L84.5,142.8L83.8,143.0L83,143.4L82.2,143.3L81.5,143.0L80.8,143.4L80,144.1L79.2,142.2L78.5,143.4L77.8,143.3L77,143.7L76.2,143.7L75.5,143.2L74.8,143.3L74,142.8L73.2,143.2L72.5,143.9L71.8,144.2L71,144.2L70.2,143.4L69.5,144.2L68.8,142.8L68,142.5L67.2,142.6L66.5,144.4L65.8,143.1L65,142.5L64.2,143.2L63.5,142.6L62.8,143.0L62,142.9L61.2,143.2L60.5,143.3L59.8,143.1L59,143.1Z"/>
<path fill="#00e6e6" d="M59,132.8L59.8,133.5L60.5,133.4L61.2,133.3L62,133.6L62.8,133.4L63.5,133.1L64.2,133.2L65,133.1L65.8,133.3L66.5,133.2L67.2,133.0L68,132.8L68.8,133.0L69.5,133.2L70.2,133.1L71,133.7L71.8,132.8L72.5,133.1L73.2,133.2L74,132.5L74.8,132.3L75.5,133.7L76.2,133.6L77,133.8L77.8,133.3L78.5,133.4L79.2,133.3L80,133.1L80.8,133.1L81.5,133.4L82.2,133.8L83,132.6L83.8,132.4L84.5,133.2L85.2,133.3L86,133.5L86.8,133.4L87.5,133.0L88.2,133.4L89,133.0L89.8,133.8L90.5,133.5L91.2,133.2L92,133.4L92.8,133.7L93.5,133.5L94.2,133.2L95,132.7L95.8,133.2L96.5,133.0L97.2,133.3L98,132.9L98.8,132.7L99.5,133.2L100.2,132.6L101,133.1L101.8,132.6L102.5,133.0L103.2,133.3L104,132.8L104.8,133.9L105.5,133.1L106.2,132.9L107,133.4L107.8,133.0L108.5,133.6L109.2,133.8L110,133.2L110.8,132.6L111.5,134.0L112.2,133.6L113,133.6L113.8,133.3L114.5,132.9L115.2,133.5L116,133.4L116.8,133.1L117.5,132.9L118.2,133.2L119,133.2L119.8,133.4L120.5,134.1L121.2,133.9L122,133.1L122.8,133.5L123.5,133.6L124.2,133.2L125,133.6L125.8,133.5L126.5,133.0L127.2,132.9L128,133.3L128.8,133.3L129.5,133.7L130.2,131.5L131,132.7L131.8,132.8L132.5,133.1L133.2,133.6L134,133.1L134.8,133.4L135.5,133.1L136.2,132.5L137,132.9L137.8,133.4L138.5,132.5L139.2,133.3L140,133.4L140.8,133.4L141.5,133.4L142.2,133.4L143,133.7L143.8,133.1L144.5,133.2L145.2,133.4L146,133.3L146.8,132.8L147.5,133.4L148.2,133.6L149,133.0L149.8,133.4L150.5,133.7L151.2,133.4L152,133.6L152.8,133.1L153.5,133.2L154.2,133.3L155,133.0L155.8,133.1L156.5,132.9L157.2,132.7L158,133.3L158.8,132.6L159.5,133.2L160.2,132.8L161,132.6L161.8,133.3L162.5,133.9L163.2,133.3L164,132.9L164.8,134.0L165.5,132.8L166.2,133.1L167,133.7L167.8,133.8L168.5,133.1L169.2,133.5L170,132.8L170.8,132.9L171.5,133.0L172.2,133.5L173,132.8L173.8,133.7L174.5,133.5L175.2,133.3L176,133.3L176.8,132.9L177.5,132.9L178.2,133.2L179,133.5L179.8,133.9L180.5,133.6L181.2,132.9L182,132.6L182.8,133.5L183.5,133.5L184.2,133.2L185,133.0L185.8,132.8L186.5,133.2L187.2,133.0L188,133.0L188.8,133.7L189.5,133.6L190.2,133.2L191,133.4L191.8,132.9L192.5,133.3L193.2,133.0L194,133.4L194.8,133.9L195.5,132.9L196.2,133.0L197,133.0L197.8,133.7L198.5,134.0L199.2,133.6L200,133.4L200.8,133.8L201.5,133.2L202.2,133.4L203,133.3L203.8,133.4L204.5,133.5L205.2,133.4L206,133.4L206.8,133.3L207.5,133.4L208.2,134.0L209,133.7L209.8,133.3L210.5,133.4L211.2,132.8L212,133.2L212.8,133.3L213.5,133.7L214.2,133.4L215,133.1L215.8,133.1L216.5,133.0L217.2,133.7L218,133.4L218.8,134.2L219.5,133.0L220.2,133.3L221,132.8L221.8,133.0L222.5,133.2L223.2,133.5L224,133.2L224.8,133.1L225.5,133.5L226.2,133.0L227,133.2L227.8,133.3L228.5,133.2L229.2,133.2L230,133.7L230.8,134.1L231.5,133.7L232.2,133.8L233,133.3L233.8,133.3L234.5,133.2L235.2,133.3L236,133.6L236.8,133.7L237.5,133.3L238.2,133.5L239,133.5L239.8,133.3L240.5,133.8L241.2,134.0L242,133.3L242.8,133.5L243.5,133.3L244.2,133.9L245,133.1L245.8,133.5L246.5,133.5L247.2,133.4L248,133.6L248.8,133.0L249.5,133.2L250.2,133.3L251,133.6L251.8,133.4L252.5,133.0L253.2,133.2L254,133.5L254.8,132.8L255.5,133.5L256.2,132.9L257,133.2L257.8,133.5L258.5,133.4L259.2,132.8L260,133.8L260.8,133.4L261.5,133.2L262.2,133.6L263,132.1L263.8,133.4L264.5,133.1L265.2,133.5L266,133.1L266.8,133.2L267.5,133.6L268.2,132.8L269,132.2L269.8,133.1L270.5,133.4L271.2,133.6L272,133.6L272.8,133.0L273.5,132.5L274.2,132.9L275,133.0L275.8,133.0L276.5,133.4L277.2,133.0L278,133.9L278.8,133.2L279.5,133.1L280.2,133.4L281,133.0L281.8,132.8L282.5,133.0L283.2,133.1L284,132.7L284.8,134.0L285.5,133.1L286.2,133.3L287,133.2L287.8,132.8L288.5,133.6L289.2,133.6L290,133.2L290.8,133.7L291.5,132.8L292.2,132.6L293,134.0L293.8,133.0L294.5,132.5L295.2,133.1L296,132.9L296.8,134.0L297.5,133.1L298.2,133.2L299,132.9L299.8,132.9L300.5,133.3L301.2,133.3L302,133.5L302.8,133.7L303.5,133.1L304.2,133.5L305,133.0L305.8,133.2L306.5,134.1L307.2,133.6L308,133.7L308.8,132.8L309.5,133.0L310.2,132.6L311,132.5L311.8,133.8L312.5,133.3L313.2,133.9L314,133.7L314.8,133.1L315.5,133.4L316.2,133.8L317,133.5L317.8,132.4L318.5,133.4L319.2,132.9L320,133.3L320.8,133.0L321.5,133.3L322.2,133.3L323,133.2L323.8,133.2L324.5,133.0L325.2,132.8L326,133.7L326.8,133.4L327.5,133.2L328.2,133.3L329,133.3L329.8,133.7L330.5,133.3L331.2,133.6L332,133.5L332.8,132.9L333.5,133.7L334.2,133.3L335,133.2L335.8,133.2L336.5,133.2L337.2,133.4L338,133.2L338.8,132.9L339.5,132.5L340.2,133.6L341,133.8L341.8,133.2L342.5,133.6L343.2,133.3L344,132.4L344.8,133.5L345.5,133.2L346.2,132.7L347,133.5L347.8,133.0L348.5,133.6L349.2,133.2L350,133.4L350.8,132.9L351.5,133.5L352.2,133.1L353,133.5L353.8,133.1L354.5,132.8L355.2,133.1L356,132.6L356.8,133.2L357.5,133.4L358.2,133.3L359,134.1L359.8,133.2L360.5,133.7L361.2,133.7L362,133.9L362.8,132.8L363.5,133.7L364.2,133.2L365,133.3L365.8,133.5L366.5,133.3L367.2,133.1L368,133.3L368.8,133.6L369.5,133.1L370.2,133.0L371,133.4L371.8,133.4L372.5,133.7L373.2,133.4L374,133.3L374.8,133.3L375.5,133.5L376.2,133.9L377,133.2L377.8,133.7L378.5,133.1L379.2,133.7L380,133.4L380.8,134.1L381.5,133.5L382.2,133.4L383,132.8L383.8,132.9L384.5,133.9L385.2,132.9L386,133.2L386.8,133.2L387.5,132.7L388.2,132.9L389,133.3L389.8,133.3L390.5,133.2L391.2,133.1L392,132.9L392.8,133.7L393.5,132.7L394.2,133.5L395,133.8L395.8,133.0L396.5,133.1L397.2,132.9L398,133.4L398.8,133.5L399.5,133.8L400.2,132.7L401,132.5L401.8,133.5L402.5,133.2L403.2,133.5L404,132.9L404.8,133.0L405.5,132.8L406.2,133.1L407,133.9L407.8,133.4L408.5,133.4L409.2,132.9L410,133.4L410.8,133.6L411.5,133.2L412.2,133.0L413,133.3L413.8,132.3L414.5,133.1L415.2,133.8L416,133.3L416.8,133.2L417.5,133.3L418.2,132.7L419,132.7L419.8,132.8L420.5,133.7L421.2,133.5L422,133.0L422.8,133.2L423.5,133.5L424.2,133.5L425,133.2L425.8,132.8L426.5,133.0L427.2,133.8L428,133.2L428.8,133.1L429.5,133.0L430.2,133.3L431,133.7L431.8,133.3L432.5,133.9L433.2,133.5L434,132.8L434.8,133.3L435.5,132.9L436.2,133.6L437,132.5L437.8,132.9L438.5,133.2L439.2,132.7L440,133.2L440.8,133.1L441.5,133.5L442.2,133.1L443,133.2L443.8,133.8L444.5,132.8L445.2,133.1L446,132.9L446.8,133.9L447.5,133.0L448.2,133.2L449,132.9L449.8,133.1L450.5,132.5L451.2,132.9L452,133.0L452.8,133.5L453.5,133.0L454.2,133.8L455,133.2L455.8,132.6L456.5,133.6L457.2,133.0L458,132.2L458.8,132.9L459.5,133.0L460.2,133.2L461,133.2L461.8,133.0L462.5,133.3L463.2,132.4L464,133.4L464.8,133.1L465.5,133.2L466.2,133.5L467,133.4L467.8,133.5L468.5,132.9L469.2,133.1L470,133.5L470.8,132.9L471.5,133.5L472.2,132.9L473,133.0L473.8,133.1L474.5,133.5L475.2,133.0L476,133.7L476.8,133.4L477.5,132.9L478.2,133.5L479,132.6L479.8,133.6L480.5,133.4L481.2,133.5L482,133.5L482.8,133.0L483.5,132.5L484.2,134.0L485,133.8L485.8,133.7L486.5,132.9L487.2,133.3L488,132.3L488.8,133.8L489.5,133.4L490.2,133.5L491,133.3L491.8,133.0L492.5,134.1L493.2,133.8L494,133.1L494.8,133.3L495.5,133.1L496.2,133.6L497,132.4L497.8,133.8L498.5,133.3L499.2,133.9L500,133.0L500.8,133.8L501.5,133.5L502.2,133.1L503,133.1L503.8,132.8L504.5,134.2L505.2,133.1L506,133.0L506.8,132.7L507.5,133.0L508.2,133.6L509,133.1L509.8,133.5L510.5,133.1L511.2,132.8L512,133.1L512.8,133.4L513.5,133.0L514.2,131.9L515,133.0L515.8,133.1L516.5,133.1L517.2,133.4L518,132.9L518.8,133.4L519.5,133.5L520.2,133.0L521,134.1L521.8,133.1L522.5,133.0L523.2,132.8L524,133.9L524.8,133.2L525.5,132.9L526.2,133.1L527,133.4L527.8,132.8L528.5,133.3L529.2,133.5L530,133.4L530.8,133.1L531.5,133.4L532.2,133.0L533,133.7L533.8,132.6L534.5,133.1L535.2,133.3L536,133.0L536.8,133.7L537.5,133.2L538.2,133.1L539,133.9L539.8,133.3L540.5,133.3L541.2,132.9L542,132.7L542.8,133.0L543.5,133.4L544.2,132.7L545,132.9L545.8,132.8L546.5,133.5L547.2,133.4L548,132.9L548.8,132.8L549.5,134.0L550.2,133.0L551,132.9L551.8,133.2L552.5,133.4L553.2,133.5L554,133.0L554.8,133.1L555.5,132.9L556.2,132.4L557,133.1L557.8,133.2L558.5,132.9L559.2,133.4L560,133.0L560.8,133.2L561.5,134.3L562.2,133.0L563,133.8L563.8,132.8L564.5,133.3L565.2,132.8L566,132.6L566.8,133.5L567.5,133.2L568.2,133.6L569,134.2L569.8,133.3L570.5,133.6L571.2,133.6L572,133.5L572.8,132.9L573.5,132.7L574.2,133.8L575,133.1L575.8,133.2L576.5,134.0L577.2,133.4L578,133.0L578.8,133.5L579.5,133.7L580.2,133.9L581,133.2L581.8,132.5L582.5,132.7L583.2,132.8L584,133.2L584.8,133.6L585.5,133.8L586.2,133.1L587,133.3L587.8,133.3L588.5,132.6L589.2,134.1L590,133.5L590.8,133.3L591.5,132.8L592.2,132.8L593,133.5L593.8,132.8L594.5,133.4L595.2,133.4L596,132.9L596.8,133.5L597.5,133.4L598.2,132.9L599,133.2L599.8,133.1L600.5,132.9L601.2,133.7L602,132.9L602.8,133.1L603.5,133.6L604.2,133.2L605,133.7L605.8,133.1L606.5,132.8L607.2,132.9L608,133.0L608.8,133.3L609.5,132.8L610.2,132.7L611,132.8L611.8,133.1L612.5,133.3L613.2,133.1L614,133.1L614.8,133.3L615.5,133.4L616.2,132.9L617,133.2L617.8,133.5L618.5,133.3L619.2,133.4L620,133.4L620.8,133.2L621.5,132.9L622.2,132.7L623,133.1L623.8,132.6L624.5,133.6L625.2,133.4L626,133.1L626.8,132.7L627.5,133.6L628.2,133.7L629,133.0L629.8,133.5L630.5,132.7L631.2,133.3L632,133.2L632.8,133.2L633.5,133.4L634.2,132.6L635,133.3L635.8,133.4L636.5,133.8L637.2,133.8L638,133.3L638.8,133.4L639.5,132.9L640.2,133.2L641,133.3L641.8,133.1L642.5,132.8L643.2,132.9L644,132.3L644.8,132.9L645.5,133.0L646.2,133.6L647,132.8L647.8,132.8L648.5,133.5L649.2,133.5L650,132.8L650.8,133.2L651.5,133.3L652.2,133.2L653,133.2L653.8,133.5L654.5,132.2L655.2,133.9L656,133.1L656.8,133.0L657.5,133.4L658.2,133.5L659,133.0L659.8,134.3L660.5,132.9L661.2,133.3L662,133.9L662.8,133.2L663.5,133.5L664.2,133.5L665,133.9L665.8,133.1L666.5,133.3L667.2,133.8L668,133.0L668.8,133.4L669.5,133.0L670.2,133.3L671,133.6L671.8,132.8L672.5,133.0L673.2,133.6L674,133.2L674.8,133.5L675.5,133.1L676.2,133.6L677,132.3L677.8,133.5L678.5,133.8L679.2,132.8L680,133.7L680.8,133.3L681.5,133.2L682.2,133.0L683,133.1L683.8,133.7L684.5,133.3L685.2,133.6L686,133.7L686.8,133.1L687.5,132.9L688.2,132.9L689,132.5L689.8,132.9L690.5,133.3L691.2,133.9L692,132.8L692.8,132.6L693.5,133.2L694.2,133.3L695,133.2L695.8,132.8L696.5,133.6L697.2,133.0L698,133.2L698.8,133.2L699.5,133.5L700.2,133.5L701,133.0L701.8,132.6L702.5,132.9L703.2,133.3L704,132.9L704.8,133.7L705.5,133.1L706.2,133.3L707,132.6L707.8,133.8L708.5,133.2L709.2,132.5L710,132.9L710.8,133.2L711.5,133.5L712.2,133.3L713,133.7L713.8,133.1L714.5,132.3L715.2,132.3L716,133.4L716.8,133.1L717.5,133.8L718.2,133.3L719,133.6L719.8,133.4L720.5,133.4L721.2,133.3L722,133.1L722.8,134.0L723.5,133.5L724.2,133.7L725,132.8L725.8,133.6L726.5,133.8L727.2,132.7L728,133.4L728.8,133.5L729.5,133.4L730.2,132.7L731,133.5L731.8,133.5L732.5,132.6L733.2,133.6L734,132.5L734.8,133.0L735.5,132.9L736.2,133.5L737,133.0L737.8,133.6L738.5,134.2L739.2,133.0L740,132.9L740.8,133.5L741.5,132.7L742.2,133.2L743,133.7L743.8,133.8L744.5,133.8L745.2,133.2L746,132.7L746.8,133.3L747.5,133.2L748.2,133.0L749,133.5L749.8,133.5L750.5,133.7L751.2,133.4L752,133.3L752.8,133.2L753.5,133.7L754.2,133.3L755,133.8L755.8,133.5L756.5,133.4L757.2,133.1L758,133.0L758.8,133.6L759.5,132.8L760.2,133.3L761,133.3L761.8,133.6L762.5,134.0L763.2,133.5L764,133.2L764.8,133.8L765.5,133.2L766.2,133.3L767,133.2L767.8,133.3L768.5,133.1L769.2,132.9L770,133.4L770.8,133.3L771.5,132.9L772.2,133.0L773,132.9L773.8,133.0L774.5,133.8L775.2,133.2L776,133.4L776.8,133.4L777.5,132.8L778.2,132.6L779,132.7L779.8,132.9L780.5,133.4L781.2,133.3L782,133.0L782.8,132.6L783.5,133.1L784.2,133.0L785,133.4L785.8,133.2L786.5,132.8L787.2,133.4L788,133.5L788.8,132.7L789.5,133.8L789.5,141.9L788.8,143.2L788,142.3L787.2,142.4L786.5,143.0L785.8,142.6L785,142.4L784.2,142.1L783.5,142.3L782.8,142.3L782,142.3L781.2,142.4L780.5,142.7L779.8,143.1L779,142.2L778.2,142.9L777.5,142.4L776.8,141.7L776,142.3L775.2,142.0L774.5,142.2L773.8,142.5L773,141.8L772.2,142.3L771.5,142.4L770.8,142.8L770,142.1L769.2,142.5L768.5,142.5L767.8,142.3L767,143.2L766.2,142.6L765.5,142.5L764.8,142.1L764,142.2L763.2,142.3L762.5,142.7L761.8,141.9L761,142.3L760.2,142.7L759.5,142.5L758.8,142.5L758,142.3L757.2,143.2L756.5,143.0L755.8,142.5L755,142.3L754.2,142.5L753.5,141.5L752.8,142.4L752,142.4L751.2,142.3L750.5,142.5L749.8,142.6L749,143.0L748.2,142.3L747.5,142.4L746.8,142.1L746,141.8L745.2,142.0L744.5,142.7L743.8,141.8L743,142.7L742.2,142.2L741.5,142.5L740.8,142.8L740,142.9L739.2,142.3L738.5,142.6L737.8,142.6L737,142.0L736.2,142.0L735.5,142.6L734.8,142.6L734,142.0L733.2,141.9L732.5,142.1L731.8,143.1L731,142.3L730.2,143.3L729.5,142.4L728.8,142.1L728,142.5L727.2,142.1L726.5,142.8L725.8,142.6L725,141.5L724.2,142.5L723.5,142.4L722.8,142.6L722,142.7L721.2,142.5L720.5,142.2L719.8,142.1L719,142.4L718.2,141.9L717.5,142.4L716.8,142.9L716,141.9L715.2,142.6L714.5,141.8L713.8,142.2L713,141.8L712.2,142.8L711.5,142.6L710.8,142.0L710,142.5L709.2,142.1L708.5,142.6L707.8,142.7L707,142.9L706.2,142.7L705.5,142.6L704.8,142.4L704,142.9L703.2,141.8L702.5,142.1L701.8,142.1L701,142.6L700.2,142.1L699.5,142.4L698.8,142.4L698,142.7L697.2,142.0L696.5,142.5L695.8,143.2L695,142.4L694.2,142.9L693.5,142.6L692.8,141.9L692,142.2L691.2,141.8L690.5,142.1L689.8,142.2L689,142.6L688.2,142.8L687.5,142.6L686.8,141.6L686,142.7L685.2,143.4L684.5,142.6L683.8,142.1L683,142.1L682.2,142.8L681.5,142.7L680.8,143.4L680,142.2L679.2,142.4L678.5,143.0L677.8,142.5L677,143.3L676.2,142.3L675.5,142.2L674.8,142.4L674,142.6L673.2,142.4L672.5,143.3L671.8,142.7L671,142.4L670.2,142.1L669.5,142.8L668.8,142.4L668,142.3L667.2,142.5L666.5,142.9L665.8,142.5L665,142.2L664.2,142.0L663.5,142.0L662.8,142.1L662,141.9L661.2,142.7L660.5,142.2L659.8,142.2L659,141.8L658.2,141.9L657.5,142.2L656.8,142.5L656,142.6L655.2,142.6L654.5,142.7L653.8,142.1L653,143.3L652.2,142.6L651.5,141.9L650.8,142.7L650,142.3L649.2,142.8L648.5,142.5L647.8,142.6L647,142.9L646.2,142.6L645.5,142.8L644.8,142.3L644,143.1L643.2,142.1L642.5,142.5L641.8,142.6L641,142.3L640.2,142.3L639.5,142.2L638.8,142.5L638,142.6L637.2,142.4L636.5,142.4L635.8,142.3L635,141.9L634.2,142.7L633.5,141.7L632.8,142.3L632,141.9L631.2,142.2L630.5,143.3L629.8,142.1L629,142.3L628.2,142.8L627.5,142.4L626.8,142.5L626,141.6L625.2,142.6L624.5,142.0L623.8,142.4L623,141.7L622.2,142.7L621.5,141.8L620.8,142.8L620,142.3L619.2,142.1L618.5,142.9L617.8,142.1L617,142.5L616.2,141.5L615.5,142.1L614.8,142.2L614,142.7L613.2,142.3L612.5,143.0L611.8,141.7L611,141.7L610.2,142.0L609.5,142.4L608.8,142.7L608,142.3L607.2,142.4L606.5,142.6L605.8,142.2L605,142.9L604.2,142.4L603.5,142.2L602.8,142.2L602,142.9L601.2,142.5L600.5,142.8L599.8,142.4L599,142.3L598.2,142.7L597.5,142.8L596.8,142.2L596,142.6L595.2,142.6L594.5,142.1L593.8,142.7L593,142.3L592.2,142.3L591.5,141.8L590.8,143.0L590,143.0L589.2,142.9L588.5,142.8L587.8,141.9L587,141.6L586.2,142.1L585.5,142.5L584.8,142.1L584,143.0L583.2,142.4L582.5,142.4L581.8,142.2L581,143.2L580.2,142.9L579.5,142.4L578.8,142.7L578,141.8L577.2,142.5L576.5,142.4L575.8,142.5L575,141.7L574.2,142.6L573.5,142.9L572.8,142.2L572,143.1L571.2,142.6L570.5,142.0L569.8,142.0L569,142.2L568.2,142.8L567.5,142.2L566.8,142.8L566,142.3L565.2,141.9L564.5,142.0L563.8,141.7L563,142.4L562.2,142.4L561.5,142.4L560.8,142.3L560,142.0L559.2,142.1L558.5,142.3L557.8,143.2L557,142.5L556.2,142.3L555.5,142.6L554.8,142.7L554,142.5L553.2,142.2L552.5,142.3L551.8,142.9L551,142.6L550.2,142.2L549.5,142.6L548.8,142.8L548,142.3L547.2,142.8L546.5,143.5L545.8,141.9L545,142.0L544.2,141.9L543.5,142.8L542.8,142.8L542,142.3L541.2,142.7L540.5,142.6L539.8,142.3L539,142.3L538.2,142.2L537.5,142.3L536.8,141.9L536,142.5L535.2,142.5L534.5,142.5L533.8,142.1L533,143.0L532.2,142.5L531.5,142.5L530.8,142.7L530,141.7L529.2,142.2L528.5,142.8L527.8,142.0L527,142.5L526.2,142.2L525.5,142.1L524.8,142.4L524,142.3L523.2,142.5L522.5,142.6L521.8,141.7L521,142.5L520.2,141.7L519.5,142.7L518.8,142.1L518,142.5L517.2,142.4L516.5,141.8L515.8,142.6L515,142.6L514.2,141.9L513.5,143.1L512.8,142.6L512,141.6L511.2,142.7L510.5,141.7L509.8,142.4L509,142.3L508.2,141.5L507.5,142.3L506.8,141.7L506,142.7L505.2,142.5L504.5,142.1L503.8,141.8L503,142.1L502.2,142.4L501.5,143.0L500.8,142.3L500,142.3L499.2,142.5L498.5,142.6L497.8,142.8L497,142.7L496.2,143.2L495.5,142.2L494.8,142.7L494,142.0L493.2,142.2L492.5,142.6L491.8,143.0L491,142.2L490.2,141.9L489.5,143.0L488.8,142.6L488,142.8L487.2,142.0L486.5,142.1L485.8,141.9L485,141.7L484.2,142.8L483.5,142.3L482.8,142.3L482,142.4L481.2,142.9L480.5,142.4L479.8,141.8L479,142.6L478.2,142.7L477.5,142.5L476.8,142.4L476,142.4L475.2,142.6L474.5,142.8L473.8,142.5L473,142.0L472.2,142.4L471.5,142.9L470.8,142.3L470,142.1L469.2,141.8L468.5,142.9L467.8,142.4L467,142.0L466.2,141.9L465.5,142.5L464.8,142.9L464,142.4L463.2,142.0L462.5,142.4L461.8,143.0L461,142.6L460.2,142.4L459.5,141.9L458.8,143.6L458,142.2L457.2,142.3L456.5,141.9L455.8,142.2L455,142.7L454.2,141.4L453.5,142.5L452.8,142.5L452,142.0L451.2,142.1L450.5,141.9L449.8,142.5L449,142.7L448.2,142.9L447.5,142.2L446.8,141.9L446,143.0L445.2,142.8L444.5,142.2L443.8,142.9L443,142.0L442.2,141.6L441.5,142.8L440.8,142.3L440,142.2L439.2,142.1L438.5,142.2L437.8,142.3L437,143.1L436.2,142.9L435.5,142.1L434.8,141.8L434,142.2L433.2,142.7L432.5,143.2L431.8,143.0L431,142.0L430.2,142.1L429.5,141.9L428.8,142.5L428,142.8L427.2,142.7L426.5,142.8L425.8,142.8L425,141.8L424.2,141.9L423.5,142.6L422.8,142.5L422,142.8L421.2,141.9L420.5,141.8L419.8,142.0L419,142.0L418.2,142.1L417.5,142.3L416.8,142.4L416,142.2L415.2,142.7L414.5,142.1L413.8,143.0L413,142.4L412.2,142.3L411.5,142.1L410.8,142.6L410,143.0L409.2,142.3L408.5,142.1L407.8,142.4L407,142.3L406.2,142.8L405.5,142.4L404.8,141.9L404,142.1L403.2,142.3L402.5,141.9L401.8,142.5L401,141.9L400.2,142.2L399.5,142.4L398.8,142.0L398,142.9L397.2,142.2L396.5,142.2L395.8,142.5L395,142.2L394.2,142.8L393.5,141.9L392.8,142.3L392,142.3L391.2,142.7L390.5,142.4L389.8,142.6L389,142.9L388.2,142.2L387.5,142.0L386.8,142.0L386,142.3L385.2,141.8L384.5,143.2L383.8,142.6L383,142.1L382.2,142.2L381.5,143.1L380.8,142.9L380,141.9L379.2,141.9L378.5,142.5L377.8,141.9L377,143.0L376.2,142.2L375.5,142.1L374.8,141.5L374,141.8L373.2,141.9L372.5,141.8L371.8,142.4L371,142.9L370.2,142.2L369.5,142.3L368.8,142.4L368,142.2L367.2,143.1L366.5,142.3L365.8,141.5L365,142.8L364.2,142.7L363.5,142.5L362.8,142.2L362,142.4L361.2,142.0L360.5,142.8L359.8,142.1L359,142.3L358.2,141.9L357.5,142.3L356.8,142.7L356,142.1L355.2,141.9L354.5,142.6L353.8,142.6L353,142.2L352.2,142.4L351.5,142.7L350.8,142.3L350,141.9L349.2,142.2L348.5,142.5L347.8,142.4L347,142.1L346.2,141.7L345.5,141.8L344.8,142.3L344,141.8L343.2,142.2L342.5,142.3L341.8,142.5L341,141.9L340.2,142.7L339.5,142.6L338.8,142.4L338,143.1L337.2,142.3L336.5,142.7L335.8,142.0L335,142.2L334.2,142.4L333.5,143.0L332.8,141.7L332,142.1L331.2,142.9L330.5,142.4L329.8,142.1L329,142.8L328.2,142.4L327.5,142.3L326.8,142.4L326,141.7L325.2,142.5L324.5,142.4L323.8,142.3L323,143.0L322.2,143.0L321.5,142.4L320.8,141.9L320,142.5L319.2,142.3L318.5,142.8L317.8,142.2L317,142.2L316.2,142.7L315.5,142.9L314.8,142.8L314,142.0L313.2,142.4L312.5,142.1L311.8,143.1L311,142.5L310.2,142.3L309.5,143.2L308.8,142.3L308,142.1L307.2,141.9L306.5,141.9L305.8,142.5L305,141.9L304.2,142.7L303.5,142.5L302.8,142.1L302,141.9L301.2,142.1L300.5,142.4L299.8,142.2L299,142.3L298.2,142.1L297.5,142.1L296.8,142.3L296,142.7L295.2,142.8L294.5,141.8L293.8,142.7L293,142.8L292.2,142.4L291.5,141.4L290.8,142.3L290,142.9L289.2,141.4L288.5,142.5L287.8,142.4L287,142.7L286.2,142.1L285.5,143.1L284.8,142.4L284,142.2L283.2,142.5L282.5,142.2L281.8,141.9L281,142.2L280.2,142.1L279.5,142.6L278.8,142.1L278,142.0L277.2,142.2L276.5,142.3L275.8,142.0L275,143.0L274.2,141.8L273.5,142.6L272.8,142.1L272,142.2L271.2,142.4L270.5,142.4L269.8,142.3L269,142.6L268.2,142.7L267.5,142.5L266.8,142.5L266,142.4L265.2,142.4L264.5,142.5L263.8,142.7L263,142.2L262.2,142.2L261.5,142.3L260.8,142.3L260,142.7L259.2,141.8L258.5,142.8L257.8,142.0L257,142.4L256.2,142.5L255.5,142.2L254.8,142.2L254,141.7L253.2,142.1L252.5,141.7L251.8,141.9L251,142.6L250.2,142.6L249.5,142.4L248.8,142.7L248,142.8L247.2,142.7L246.5,142.9L245.8,142.2L245,142.2L244.2,142.1L243.5,142.8L242.8,143.0L242,142.0L241.2,142.7L240.5,142.0L239.8,142.7L239,142.3L238.2,142.4L237.5,142.0L236.8,141.7L236,141.8L235.2,142.8L234.5,142.2L233.8,141.9L233,142.1L232.2,142.5L231.5,142.4L230.8,142.7L230,142.5L229.2,141.9L228.5,142.6L227.8,142.6L227,142.3L226.2,142.0L225.5,141.8L224.8,142.1L224,143.2L223.2,142.2L222.5,142.1L221.8,142.1L221,141.5L220.2,142.7L219.5,141.8L218.8,142.5L218,142.3L217.2,142.4L216.5,142.2L215.8,141.9L215,141.8L214.2,141.8L213.5,142.0L212.8,142.1L212,142.0L211.2,142.8L210.5,142.4L209.8,142.2L209,142.4L208.2,142.5L207.5,142.8L206.8,142.0L206,142.6L205.2,142.2L204.5,142.1L203.8,142.8L203,142.6L202.2,141.6L201.5,143.0L200.8,142.7L200,142.3L199.2,142.4L198.5,142.3L197.8,142.8L197,142.2L196.2,142.3L195.5,142.1L194.8,142.6L194,142.5L193.2,141.8L192.5,142.5L191.8,142.1L191,142.3L190.2,142.0L189.5,142.1L188.8,142.8L188,142.1L187.2,142.1L186.5,142.1L185.8,142.3L185,142.2L184.2,142.3L183.5,143.1L182.8,142.8L182,143.2L181.2,143.0L180.5,141.7L179.8,143.0L179,142.1L178.2,142.5L177.5,143.4L176.8,143.1L176,142.1L175.2,142.0L174.5,142.1L173.8,142.4L173,142.3L172.2,142.5L171.5,142.2L170.8,142.2L170,142.2L169.2,142.4L168.5,142.4L167.8,142.1L167,142.1L166.2,143.4L165.5,142.0L164.8,142.0L164,142.5L163.2,142.0L162.5,142.8L161.8,142.6L161,142.2L160.2,142.4L159.5,142.3L158.8,142.8L158,143.0L157.2,142.0L156.5,142.9L155.8,142.1L155,142.2L154.2,142.9L153.5,142.7L152.8,142.4L152,143.2L151.2,142.2L150.5,142.5L149.8,142.7L149,142.3L148.2,142.4L147.5,142.2L146.8,142.1L146,142.8L145.2,142.2L144.5,142.2L143.8,142.5L143,142.1L142.2,141.9L141.5,142.1L140.8,142.4L140,142.0L139.2,143.0L138.5,142.6L137.8,142.2L137,142.0L136.2,142.1L135.5,141.7L134.8,141.9L134,142.4L133.2,142.5L132.5,142.1L131.8,142.3L131,142.2L130.2,142.9L129.5,142.5L128.8,142.3L128,142.0L127.2,142.3L126.5,142.4L125.8,142.6L125,141.9L124.2,142.3L123.5,142.0L122.8,142.4L122,141.9L121.2,142.1L120.5,141.6L119.8,142.7L119,142.4L118.2,142.7L117.5,142.4L116.8,142.5L116,141.8L115.2,142.3L114.5,143.2L113.8,142.3L113,142.2L112.2,143.1L111.5,141.8L110.8,142.4L110,142.0L109.2,142.1L108.5,142.4L107.8,142.2L107,141.6L106.2,142.3L105.5,142.7L104.8,142.4L104,142.2L103.2,142.5L102.5,142.6L101.8,142.4L101,142.1L100.2,142.4L99.5,142.2L98.8,142.3L98,142.2L97.2,142.9L96.5,142.1L95.8,142.6L95,143.4L94.2,142.4L93.5,142.2L92.8,143.0L92,142.3L91.2,142.1L90.5,142.0L89.8,142.2L89,142.5L88.2,142.4L87.5,142.3L86.8,142.1L86,142.6L85.2,141.7L84.5,142.6L83.8,143.3L83,142.2L82.2,142.1L81.5,142.3L80.8,141.7L80,142.5L79.2,142.2L78.5,142.5L77.8,143.1L77,142.0L76.2,142.3L75.5,143.2L74.8,142.3L74,142.3L73.2,142.7L72.5,142.5L71.8,142.6L71,142.1L70.2,142.4L69.5,141.8L68.8,141.5L68,142.1L67.2,142.1L66.5,142.7L65.8,141.9L65,142.6L64.2,143.1L63.5,143.1L62.8,141.9L62,142.1L61.2,141.8L60.5,142.3L59.8,143.1L59,142.4Z"/>
<path fill="#b8ffff" opacity="0.35" d="M59,135.7L60.5,135.7L62,135.8L63.5,135.1L65,135.4L66.5,135.9L68,135.5L69.5,136.1L71,136.3L72.5,136.3L74,136.0L75.5,134.7L77,135.6L78.5,135.4L80,135.2L81.5,135.0L83,136.1L84.5,135.3L86,135.5L87.5,136.1L89,135.5L90.5,135.1L92,136.7L93.5,135.7L95,135.9L96.5,136.2L98,135.9L99.5,136.3L101,135.8L102.5,135.7L104,135.9L105.5,135.8L107,136.1L108.5,135.8L110,135.6L111.5,136.0L113,134.9L114.5,135.6L116,135.8L117.5,135.8L119,136.2L120.5,135.3L122,135.3L123.5,135.8L125,135.6L126.5,135.1L128,135.5L129.5,136.0L131,135.4L132.5,135.7L134,135.9L135.5,135.7L137,136.4L138.5,135.0L140,136.0L141.5,135.7L143,135.7L144.5,136.6L146,135.3L147.5,136.4L149,135.7L150.5,136.0L152,135.5L153.5,134.8L155,136.0L156.5,135.8L158,135.8L159.5,136.3L161,135.3L162.5,135.3L164,136.4L165.5,136.2L167,136.2L168.5,135.5L170,135.8L171.5,136.0L173,136.0L174.5,136.1L176,136.0L177.5,136.8L179,135.5L180.5,135.2L182,136.2L183.5,135.8L185,135.4L186.5,135.2L188,135.7L189.5,136.5L191,135.8L192.5,135.7L194,135.5L195.5,135.7L197,136.9L198.5,135.8L200,135.3L201.5,136.2L203,135.7L204.5,135.5L206,134.9L207.5,135.6L209,135.8L210.5,135.7L212,135.4L213.5,135.8L215,136.0L216.5,136.1L218,135.3L219.5,136.2L221,135.5L222.5,136.2L224,135.4L225.5,135.8L227,135.5L228.5,135.9L230,136.0L231.5,135.6L233,135.7L234.5,135.0L236,135.4L237.5,136.1L239,135.8L240.5,135.8L242,136.3L243.5,135.1L245,136.3L246.5,135.3L248,135.6L249.5,135.8L251,135.1L252.5,136.0L254,135.1L255.5,136.1L257,135.9L258.5,136.5L260,135.6L261.5,136.2L263,135.5L264.5,136.1L266,136.0L267.5,135.9L269,136.1L270.5,136.6L272,135.9L273.5,135.4L275,136.1L276.5,135.6L278,135.8L279.5,135.6L281,135.8L282.5,135.7L284,135.7L285.5,136.0L287,136.4L288.5,135.1L290,134.7L291.5,135.7L293,135.3L294.5,135.1L296,135.8L297.5,135.1L299,135.3L300.5,135.3L302,135.1L303.5,135.6L305,135.8L306.5,134.9L308,135.4L309.5,135.9L311,135.8L312.5,134.9L314,135.4L315.5,135.3L317,135.0L318.5,134.9L320,136.1L321.5,136.0L323,135.6L324.5,135.5L326,135.2L327.5,135.3L329,135.9L330.5,134.4L332,135.0L333.5,134.9L335,136.3L336.5,136.0L338,136.0L339.5,135.1L341,135.9L342.5,135.2L344,135.5L345.5,136.0L347,135.5L348.5,135.0L350,136.1L351.5,135.4L353,136.2L354.5,135.7L356,136.0L357.5,136.2L359,135.7L360.5,136.2L362,135.7L363.5,136.0L365,135.3L366.5,134.8L368,136.0L369.5,135.5L371,134.9L372.5,135.9L374,135.7L375.5,135.7L377,135.8L378.5,135.8L380,135.9L381.5,136.0L383,136.3L384.5,135.8L386,136.1L387.5,135.8L389,135.9L390.5,135.3L392,136.1L393.5,135.1L395,135.3L396.5,135.9L398,136.0L399.5,135.1L401,135.0L402.5,135.9L404,135.8L405.5,136.5L407,136.0L408.5,135.3L410,135.7L411.5,135.1L413,136.0L414.5,135.1L416,135.8L417.5,136.5L419,136.5L420.5,136.5L422,134.9L423.5,135.1L425,136.2L426.5,136.0L428,135.2L429.5,134.8L431,135.9L432.5,135.2L434,136.2L435.5,136.5L437,136.2L438.5,135.4L440,136.7L441.5,135.9L443,135.6L444.5,135.6L446,134.7L447.5,136.5L449,135.5L450.5,135.9L452,136.3L453.5,136.1L455,136.1L456.5,135.9L458,135.4L459.5,135.4L461,135.8L462.5,136.1L464,135.0L465.5,135.8L467,135.1L468.5,136.0L470,135.7L471.5,136.2L473,135.6L474.5,135.7L476,135.3L477.5,135.2L479,135.8L480.5,136.0L482,135.5L483.5,135.8L485,135.8L486.5,136.1L488,135.9L489.5,135.8L491,135.3L492.5,136.3L494,135.8L495.5,135.5L497,135.5L498.5,135.5L500,135.6L501.5,135.3L503,135.2L504.5,135.8L506,134.8L507.5,135.1L509,136.3L510.5,134.9L512,135.7L513.5,135.5L515,136.4L516.5,135.9L518,135.5L519.5,136.2L521,135.7L522.5,135.8L524,135.4L525.5,136.3L527,135.8L528.5,135.4L530,136.0L531.5,136.0L533,136.5L534.5,135.2L536,136.0L537.5,136.1L539,135.3L540.5,135.2L542,136.3L543.5,134.9L545,135.2L546.5,135.2L548,134.8L549.5,135.8L551,135.2L552.5,134.9L554,136.2L555.5,135.8L557,136.2L558.5,135.5L560,136.1L561.5,136.1L563,136.1L564.5,135.3L566,134.5L567.5,136.0L569,135.8L570.5,135.6L572,136.4L573.5,135.2L575,136.2L576.5,135.2L578,135.6L579.5,135.6L581,135.5L582.5,136.2L584,135.7L585.5,135.1L587,136.6L588.5,135.6L590,135.5L591.5,135.0L593,135.8L594.5,134.8L596,135.9L597.5,135.0L599,135.3L600.5,136.4L602,135.5L603.5,136.1L605,136.0L606.5,135.2L608,136.0L609.5,136.1L611,135.3L612.5,135.6L614,135.4L615.5,135.5L617,135.1L618.5,135.4L620,134.9L621.5,136.0L623,135.0L624.5,136.1L626,136.0L627.5,135.7L629,135.3L630.5,136.2L632,135.7L633.5,135.8L635,135.6L636.5,136.0L638,135.9L639.5,135.7L641,135.7L642.5,135.7L644,135.7L645.5,135.9L647,136.6L648.5,135.9L650,135.2L651.5,136.3L653,136.1L654.5,136.3L656,135.0L657.5,136.0L659,136.1L660.5,135.8L662,135.6L663.5,136.9L665,135.5L666.5,135.6L668,135.5L669.5,135.3L671,136.0L672.5,135.5L674,135.8L675.5,135.6L677,135.6L678.5,135.1L680,135.6L681.5,136.3L683,136.0L684.5,135.7L686,135.6L687.5,135.4L689,135.7L690.5,135.9L692,135.6L693.5,136.2L695,135.4L696.5,135.5L698,135.5L699.5,135.9L701,135.5L702.5,136.2L704,135.7L705.5,135.7L707,136.2L708.5,135.6L710,135.8L711.5,135.7L713,135.3L714.5,136.2L716,135.8L717.5,135.2L719,136.5L720.5,136.2L722,134.5L723.5,135.7L725,136.2L726.5,135.6L728,135.7L729.5,134.0L731,135.3L732.5,135.6L734,135.8L735.5,135.9L737,135.2L738.5,135.8L740,136.0L741.5,135.4L743,135.8L744.5,135.3L746,135.9L747.5,135.2L749,135.5L750.5,136.4L752,135.9L753.5,135.2L755,135.3L756.5,135.9L758,135.9L759.5,136.5L761,135.9L762.5,136.4L764,135.8L765.5,135.6L767,135.8L768.5,135.0L770,135.7L771.5,135.7L773,136.3L774.5,135.5L776,136.2L777.5,136.0L779,136.1L780.5,135.6L782,135.5L783.5,135.4L785,136.1L786.5,135.6L788,136.1L789.5,135.6L789.5,140.0L788,140.8L786.5,139.9L785,140.7L783.5,139.6L782,139.8L780.5,140.5L779,140.3L777.5,140.7L776,140.8L774.5,140.7L773,140.2L771.5,139.8L770,139.2L768.5,140.1L767,139.9L765.5,140.4L764,140.4L762.5,140.6L761,141.0L759.5,140.5L758,139.9L756.5,140.3L755,140.6L753.5,140.2L752,140.3L750.5,139.8L749,139.6L747.5,139.5L746,139.9L744.5,139.9L743,140.2L741.5,139.6L740,140.3L738.5,140.3L737,140.1L735.5,140.0L734,140.5L732.5,140.5L731,140.1L729.5,140.6L728,139.7L726.5,139.8L725,140.6L723.5,139.8L722,139.3L720.5,140.3L719,139.9L717.5,140.4L716,139.8L714.5,139.4L713,140.7L711.5,140.7L710,139.9L708.5,140.4L707,139.9L705.5,139.5L704,139.7L702.5,139.8L701,139.5L699.5,140.3L698,139.8L696.5,140.3L695,139.9L693.5,140.1L692,139.8L690.5,140.0L689,140.6L687.5,140.4L686,140.8L684.5,140.5L683,140.4L681.5,140.0L680,140.4L678.5,139.8L677,140.5L675.5,140.2L674,140.4L672.5,139.0L671,140.4L669.5,139.8L668,139.6L666.5,139.7L665,139.2L663.5,140.5L662,139.6L660.5,140.9L659,139.7L657.5,140.1L656,140.0L654.5,139.6L653,139.9L651.5,139.6L650,140.9L648.5,140.4L647,140.3L645.5,140.0L644,139.8L642.5,139.4L641,139.9L639.5,140.1L638,139.4L636.5,140.0L635,140.5L633.5,139.9L632,141.1L630.5,140.3L629,140.7L627.5,139.7L626,140.1L624.5,140.4L623,140.4L621.5,139.7L620,140.2L618.5,140.7L617,139.8L615.5,140.5L614,140.7L612.5,139.9L611,140.3L609.5,139.9L608,140.8L606.5,140.1L605,140.3L603.5,140.7L602,140.7L600.5,140.9L599,139.8L597.5,140.5L596,140.7L594.5,140.6L593,140.9L591.5,140.3L590,140.5L588.5,139.6L587,140.8L585.5,140.3L584,140.2L582.5,139.9L581,140.3L579.5,139.9L578,140.1L576.5,141.0L575,140.3L573.5,140.7L572,140.6L570.5,140.4L569,139.8L567.5,140.5L566,139.7L564.5,140.2L563,140.0L561.5,140.5L560,140.3L558.5,139.9L557,139.1L555.5,140.4L554,140.1L552.5,139.6L551,139.4L549.5,140.4L548,139.3L546.5,140.2L545,140.2L543.5,139.8L542,139.3L540.5,139.4L539,139.9L537.5,140.2L536,140.2L534.5,140.0L533,140.4L531.5,139.7L530,140.4L528.5,140.5L527,140.4L525.5,140.6L524,140.3L522.5,139.9L521,139.9L519.5,139.3L518,139.9L516.5,140.4L515,140.2L513.5,140.0L512,140.6L510.5,139.8L509,139.5L507.5,140.3L506,140.4L504.5,140.2L503,140.6L501.5,139.3L500,139.8L498.5,140.9L497,139.7L495.5,139.1L494,139.7L492.5,140.1L491,140.2L489.5,140.5L488,139.9L486.5,139.9L485,139.4L483.5,141.3L482,140.2L480.5,139.1L479,140.1L477.5,139.9L476,140.0L474.5,140.2L473,140.0L471.5,140.1L470,139.8L468.5,140.4L467,140.1L465.5,140.3L464,139.9L462.5,140.9L461,140.1L459.5,140.0L458,140.7L456.5,140.0L455,140.4L453.5,139.5L452,140.1L450.5,139.7L449,140.2L447.5,139.7L446,139.3L444.5,139.8L443,139.4L441.5,141.2L440,139.5L438.5,139.4L437,140.2L435.5,140.3L434,140.5L432.5,139.8L431,139.8L429.5,140.1L428,140.0L426.5,140.1L425,140.6L423.5,139.9L422,139.3L420.5,140.2L419,139.6L417.5,140.0L416,139.8L414.5,139.4L413,140.3L411.5,139.8L410,140.4L408.5,139.9L407,139.4L405.5,139.7L404,139.9L402.5,140.4L401,140.3L399.5,140.5L398,139.8L396.5,140.5L395,140.5L393.5,140.2L392,139.5L390.5,140.4L389,139.6L387.5,139.7L386,140.5L384.5,140.6L383,140.3L381.5,139.9L380,140.1L378.5,139.7L377,139.9L375.5,139.5L374,139.2L372.5,140.0L371,140.3L369.5,140.5L368,139.9L366.5,139.9L365,140.7L363.5,140.7L362,140.4L360.5,139.8L359,140.8L357.5,141.4L356,139.5L354.5,140.1L353,140.7L351.5,140.3L350,140.5L348.5,140.3L347,139.6L345.5,140.1L344,140.3L342.5,139.7L341,139.2L339.5,139.6L338,140.1L336.5,140.4L335,140.1L333.5,139.8L332,139.8L330.5,139.9L329,140.6L327.5,140.3L326,140.2L324.5,140.2L323,139.8L321.5,140.5L320,140.4L318.5,140.5L317,139.8L315.5,139.9L314,140.5L312.5,139.6L311,140.8L309.5,139.8L308,139.9L306.5,140.2L305,139.7L303.5,141.1L302,139.9L300.5,140.3L299,139.6L297.5,140.5L296,140.0L294.5,140.2L293,139.4L291.5,139.7L290,140.5L288.5,140.2L287,139.8L285.5,140.0L284,140.6L282.5,140.9L281,139.6L279.5,140.6L278,141.0L276.5,140.8L275,139.4L273.5,139.6L272,139.7L270.5,139.8L269,140.5L267.5,139.1L266,140.4L264.5,140.1L263,139.7L261.5,140.4L260,140.5L258.5,140.7L257,141.2L255.5,139.6L254,140.3L252.5,139.9L251,140.4L249.5,140.6L248,139.7L246.5,140.2L245,139.9L243.5,140.3L242,140.5L240.5,140.1L239,139.4L237.5,139.3L236,140.9L234.5,139.8L233,139.9L231.5,139.9L230,139.5L228.5,140.6L227,141.1L225.5,140.1L224,140.4L222.5,139.7L221,140.4L219.5,140.4L218,140.8L216.5,141.0L215,140.6L213.5,139.6L212,140.2L210.5,139.8L209,140.2L207.5,140.0L206,140.1L204.5,139.9L203,140.2L201.5,139.6L200,141.3L198.5,140.5L197,139.9L195.5,140.7L194,139.5L192.5,139.7L191,140.1L189.5,139.2L188,140.0L186.5,139.5L185,139.7L183.5,140.1L182,140.1L180.5,139.6L179,139.8L177.5,140.2L176,140.8L174.5,140.3L173,139.9L171.5,141.0L170,139.9L168.5,139.2L167,139.6L165.5,139.4L164,140.9L162.5,140.2L161,139.7L159.5,139.9L158,139.6L156.5,141.1L155,139.2L153.5,139.5L152,140.0L150.5,139.5L149,139.5L147.5,139.9L146,140.6L144.5,140.1L143,139.6L141.5,140.2L140,139.8L138.5,140.1L137,139.0L135.5,139.9L134,139.9L132.5,140.1L131,140.2L129.5,140.3L128,139.9L126.5,140.9L125,139.9L123.5,139.4L122,140.4L120.5,140.2L119,140.1L117.5,140.5L116,140.2L114.5,139.8L113,139.9L111.5,139.8L110,140.1L108.5,139.9L107,140.5L105.5,140.2L104,139.8L102.5,139.7L101,141.0L99.5,139.7L98,139.6L96.5,139.9L95,140.7L93.5,141.0L92,139.0L90.5,140.0L89,139.7L87.5,140.0L86,140.4L84.5,140.8L83,141.0L81.5,140.5L80,139.6L78.5,139.9L77,139.3L75.5,140.9L74,140.2L72.5,140.3L71,140.1L69.5,140.2L68,139.5L66.5,140.4L65,140.6L63.5,140.6L62,140.2L60.5,139.4L59,140.2Z"/>
<path fill="#b8ffff" opacity="0.6" d="M59,136.5L61,137.1L63,136.8L65,136.8L67,136.7L69,137.5L71,137.1L73,137.4L75,137.3L77,136.7L79,136.8L81,136.9L83,137.1L85,137.3L87,136.6L89,136.8L91,137.5L93,137.7L95,137.3L97,136.9L99,136.9L101,136.9L103,136.8L105,136.6L107,137.0L109,137.2L111,136.7L113,137.0L115,136.3L117,136.6L119,137.0L121,137.3L123,137.0L125,136.9L127,136.4L129,137.0L131,137.0L133,136.7L135,136.9L137,136.4L139,136.8L141,136.9L143,136.4L145,136.4L147,136.4L149,137.3L151,137.1L153,136.2L155,136.7L157,137.1L159,137.1L161,137.6L163,136.9L165,136.5L167,136.8L169,136.5L171,136.4L173,137.3L175,136.9L177,136.8L179,137.1L181,137.4L183,136.6L185,137.0L187,136.7L189,136.9L191,137.3L193,137.0L195,136.6L197,136.7L199,137.1L201,137.4L203,136.7L205,136.0L207,137.2L209,137.0L211,136.7L213,137.1L215,136.8L217,136.6L219,136.8L221,137.3L223,137.0L225,136.8L227,137.0L229,136.5L231,136.9L233,136.5L235,136.7L237,136.9L239,137.6L241,137.1L243,137.0L245,136.4L247,136.7L249,136.6L251,136.7L253,136.8L255,137.5L257,136.6L259,137.7L261,137.1L263,136.9L265,137.1L267,136.6L269,136.9L271,136.7L273,137.0L275,136.2L277,136.6L279,137.0L281,137.2L283,136.5L285,136.4L287,137.1L289,137.0L291,136.4L293,137.0L295,137.2L297,136.9L299,136.8L301,137.5L303,137.1L305,136.4L307,137.2L309,137.2L311,136.9L313,137.0L315,136.6L317,136.1L319,137.3L321,136.8L323,137.2L325,136.3L327,136.9L329,136.6L331,136.4L333,136.9L335,136.7L337,137.0L339,136.7L341,136.8L343,136.9L345,136.5L347,136.3L349,137.4L351,136.8L353,137.0L355,136.7L357,136.9L359,136.7L361,136.6L363,136.0L365,136.5L367,136.9L369,137.2L371,137.2L373,136.0L375,137.5L377,137.8L379,137.2L381,137.2L383,136.9L385,137.0L387,136.6L389,136.7L391,137.0L393,137.4L395,136.6L397,137.2L399,136.8L401,136.7L403,137.0L405,137.1L407,137.3L409,137.4L411,136.8L413,136.8L415,136.9L417,137.3L419,137.0L421,137.1L423,136.3L425,137.3L427,137.1L429,137.2L431,136.5L433,137.1L435,136.9L437,136.8L439,137.1L441,137.1L443,137.0L445,136.4L447,137.0L449,136.7L451,137.0L453,136.7L455,136.9L457,136.5L459,136.5L461,136.6L463,136.8L465,137.1L467,136.9L469,137.1L471,137.3L473,136.8L475,136.4L477,137.1L479,137.0L481,137.3L483,136.9L485,136.9L487,136.9L489,137.2L491,136.7L493,136.5L495,136.5L497,137.4L499,137.2L501,136.4L503,137.0L505,136.7L507,136.8L509,136.7L511,137.3L513,137.2L515,136.6L517,137.1L519,136.4L521,136.5L523,136.7L525,136.5L527,137.1L529,137.7L531,137.2L533,136.6L535,137.0L537,137.3L539,136.9L541,137.1L543,137.2L545,137.6L547,136.8L549,136.7L551,137.0L553,136.6L555,136.6L557,137.3L559,136.3L561,137.1L563,136.4L565,137.3L567,136.7L569,136.7L571,136.4L573,136.6L575,136.9L577,137.0L579,136.7L581,137.4L583,136.9L585,137.0L587,137.2L589,137.1L591,137.4L593,138.0L595,137.3L597,136.7L599,136.7L601,137.0L603,137.0L605,136.6L607,137.0L609,136.1L611,137.1L613,137.2L615,136.3L617,136.8L619,137.0L621,137.2L623,136.9L625,136.5L627,136.9L629,137.0L631,137.7L633,137.3L635,137.4L637,136.7L639,137.2L641,137.0L643,137.0L645,136.9L647,136.9L649,136.6L651,137.0L653,136.6L655,136.9L657,136.6L659,136.8L661,136.9L663,137.0L665,136.5L667,136.8L669,136.9L671,136.8L673,136.4L675,137.1L677,137.0L679,136.9L681,136.7L683,137.2L685,136.5L687,136.9L689,136.5L691,136.9L693,136.0L695,136.8L697,136.9L699,136.6L701,136.4L703,136.7L705,137.2L707,137.2L709,136.7L711,136.8L713,136.6L715,136.3L717,136.4L719,136.9L721,137.2L723,136.9L725,137.0L727,136.6L729,136.5L731,137.1L733,136.4L735,137.2L737,136.5L739,137.4L741,136.6L743,136.9L745,136.6L747,136.3L749,136.3L751,136.7L753,137.0L755,136.6L757,137.1L759,136.4L761,137.2L763,137.4L765,136.8L767,136.8L769,136.7L771,137.7L773,136.7L775,136.7L777,136.7L779,136.6L781,136.5L783,136.6L785,136.7L787,136.9L789,136.9L789,139.4L787,139.3L785,138.5L783,139.6L781,139.0L779,139.1L777,139.1L775,139.0L773,139.1L771,139.0L769,138.4L767,137.9L765,138.3L763,138.5L761,139.3L759,138.4L757,138.7L755,138.9L753,139.1L751,139.3L749,138.3L747,139.3L745,139.0L743,139.1L741,139.1L739,139.0L737,138.8L735,138.8L733,138.9L731,138.8L729,139.2L727,139.6L725,138.9L723,139.0L721,139.1L719,138.5L717,139.2L715,138.5L713,138.8L711,139.1L709,139.1L707,138.4L705,138.9L703,138.7L701,138.4L699,139.1L697,138.8L695,138.5L693,139.2L691,138.7L689,138.9L687,139.3L685,138.6L683,139.2L681,138.9L679,139.1L677,139.7L675,138.9L673,138.7L671,138.7L669,138.6L667,138.2L665,138.8L663,138.5L661,138.6L659,138.5L657,139.0L655,138.6L653,139.3L651,138.8L649,139.5L647,138.5L645,138.7L643,139.0L641,139.3L639,138.3L637,138.9L635,139.2L633,138.9L631,139.0L629,138.9L627,138.9L625,139.0L623,139.0L621,138.9L619,138.5L617,138.8L615,139.3L613,138.8L611,138.8L609,139.2L607,139.0L605,139.3L603,139.4L601,138.6L599,138.7L597,138.8L595,139.0L593,138.6L591,138.1L589,139.4L587,139.3L585,138.0L583,138.7L581,138.8L579,138.9L577,138.8L575,138.9L573,138.9L571,138.6L569,138.7L567,138.9L565,138.4L563,138.7L561,138.7L559,139.0L557,139.0L555,138.9L553,138.8L551,139.0L549,139.1L547,139.0L545,139.3L543,139.1L541,138.8L539,139.3L537,138.7L535,138.7L533,138.8L531,139.1L529,138.1L527,139.2L525,139.0L523,138.8L521,139.5L519,139.2L517,138.9L515,139.2L513,139.1L511,138.9L509,139.1L507,138.9L505,139.0L503,138.9L501,138.8L499,138.5L497,138.4L495,138.6L493,138.9L491,139.2L489,138.6L487,139.2L485,139.3L483,139.4L481,138.5L479,138.8L477,138.8L475,139.2L473,138.8L471,139.1L469,139.5L467,138.5L465,138.4L463,138.8L461,138.9L459,138.7L457,139.1L455,139.1L453,138.8L451,139.4L449,139.4L447,139.1L445,139.1L443,137.8L441,138.4L439,138.8L437,139.3L435,139.0L433,139.0L431,138.7L429,139.1L427,138.7L425,139.6L423,139.1L421,139.0L419,138.9L417,138.7L415,139.1L413,138.3L411,139.1L409,139.3L407,138.5L405,139.1L403,138.5L401,139.2L399,138.8L397,138.6L395,138.8L393,139.6L391,138.7L389,139.1L387,138.6L385,138.5L383,139.5L381,139.0L379,138.7L377,139.0L375,138.6L373,139.1L371,139.3L369,138.7L367,138.9L365,139.7L363,138.9L361,138.9L359,138.6L357,139.2L355,138.4L353,139.0L351,139.0L349,138.7L347,139.2L345,138.7L343,138.8L341,139.0L339,139.1L337,138.9L335,138.7L333,139.0L331,139.3L329,138.8L327,139.0L325,139.2L323,139.0L321,139.2L319,138.5L317,139.3L315,138.9L313,139.1L311,138.7L309,138.8L307,139.2L305,139.1L303,139.3L301,139.2L299,138.7L297,139.2L295,138.8L293,139.6L291,139.5L289,138.8L287,138.7L285,139.1L283,139.0L281,139.4L279,138.8L277,139.1L275,139.1L273,138.9L271,139.0L269,138.8L267,139.0L265,138.7L263,139.2L261,138.5L259,139.0L257,138.7L255,139.3L253,138.4L251,138.2L249,139.1L247,138.5L245,139.4L243,138.4L241,138.7L239,138.4L237,139.2L235,139.0L233,137.6L231,138.9L229,138.8L227,138.6L225,139.3L223,139.7L221,138.1L219,139.3L217,139.0L215,139.5L213,139.0L211,137.9L209,138.9L207,139.4L205,138.8L203,138.9L201,138.7L199,139.2L197,138.7L195,139.5L193,138.7L191,138.7L189,138.3L187,139.3L185,138.6L183,139.4L181,138.9L179,139.0L177,138.6L175,138.4L173,138.8L171,139.2L169,138.9L167,138.5L165,139.0L163,139.0L161,139.2L159,139.0L157,139.2L155,138.6L153,139.2L151,139.0L149,138.8L147,138.8L145,139.3L143,139.5L141,139.1L139,139.0L137,138.3L135,139.4L133,138.9L131,138.7L129,139.1L127,138.6L125,139.7L123,138.7L121,139.0L119,138.8L117,139.7L115,138.8L113,138.9L111,139.3L109,138.8L107,139.1L105,138.6L103,139.1L101,138.8L99,139.0L97,139.1L95,138.8L93,138.1L91,138.9L89,139.2L87,138.8L85,138.8L83,139.2L81,138.9L79,138.5L77,138.8L75,138.4L73,139.2L71,138.7L69,138.9L67,138.9L65,139.5L63,138.9L61,138.9L59,138.7Z"/>
<path fill="#9c005a" d="M59,176.6L59.8,176.8L60.5,176.1L61.2,176.1L62,176.2L62.8,175.9L63.5,176.1L64.2,176.9L65,175.6L65.8,175.9L66.5,176.4L67.2,176.1L68,175.6L68.8,176.6L69.5,176.3L70.2,176.1L71,176.7L71.8,176.0L72.5,176.5L73.2,176.9L74,177.1L74.8,176.3L75.5,176.6L76.2,176.2L77,176.7L77.8,175.8L78.5,176.6L79.2,176.6L80,176.4L80.8,176.2L81.5,176.3L82.2,176.8L83,175.7L83.8,175.1L84.5,176.1L85.2,176.8L86,176.1L86.8,176.1L87.5,176.4L88.2,176.2L89,176.4L89.8,176.5L90.5,176.5L91.2,176.6L92,176.8L92.8,176.8L93.5,176.0L94.2,176.1L95,176.2L95.8,176.0L96.5,175.8L97.2,176.0L98,176.7L98.8,175.9L99.5,176.8L100.2,176.2L101,174.7L101.8,175.9L102.5,175.7L103.2,176.9L104,177.3L104.8,176.1L105.5,176.7L106.2,176.4L107,176.1L107.8,176.9L108.5,175.9L109.2,176.3L110,177.2L110.8,176.5L111.5,176.4L112.2,176.6L113,176.6L113.8,176.3L114.5,175.4L115.2,176.0L116,175.7L116.8,177.0L117.5,175.4L118.2,176.5L119,176.1L119.8,176.4L120.5,177.1L121.2,175.9L122,176.6L122.8,177.0L123.5,176.7L124.2,176.9L125,177.1L125.8,175.9L126.5,176.9L127.2,176.4L128,176.2L128.8,176.1L129.5,176.7L130.2,176.6L131,176.3L131.8,176.7L132.5,176.0L133.2,176.4L134,176.1L134.8,176.3L135.5,177.6L136.2,176.9L137,176.5L137.8,175.7L138.5,176.2L139.2,176.6L140,176.7L140.8,176.4L141.5,176.9L142.2,176.3L143,176.4L143.8,176.4L144.5,175.2L145.2,176.7L146,175.7L146.8,174.8L147.5,176.2L148.2,176.0L149,176.5L149.8,176.1L150.5,175.5L151.2,176.6L152,175.4L152.8,176.4L153.5,176.5L154.2,176.1L155,176.7L155.8,176.7L156.5,176.7L157.2,176.7L158,176.0L158.8,176.5L159.5,176.2L160.2,176.1L161,175.0L161.8,176.2L162.5,176.9L163.2,176.7L164,174.6L164.8,177.0L165.5,176.0L166.2,176.8L167,176.8L167.8,176.9L168.5,176.1L169.2,175.0L170,176.1L170.8,176.3L171.5,176.6L172.2,176.8L173,176.4L173.8,176.4L174.5,175.8L175.2,176.7L176,175.9L176.8,176.6L177.5,176.4L178.2,176.9L179,177.0L179.8,175.9L180.5,176.2L181.2,176.4L182,176.6L182.8,176.6L183.5,176.5L184.2,175.7L185,176.2L185.8,176.6L186.5,174.6L187.2,176.3L188,176.6L188.8,175.6L189.5,176.1L190.2,176.5L191,176.2L191.8,177.0L192.5,177.1L193.2,176.2L194,175.7L194.8,176.0L195.5,176.5L196.2,175.9L197,176.6L197.8,177.0L198.5,176.5L199.2,176.5L200,176.8L200.8,177.0L201.5,175.2L202.2,176.5L203,176.2L203.8,176.7L204.5,176.3L205.2,175.3L206,176.8L206.8,176.6L207.5,176.5L208.2,176.5L209,176.7L209.8,176.8L210.5,176.2L211.2,176.2L212,176.1L212.8,176.7L213.5,176.6L214.2,176.4L215,176.5L215.8,175.2L216.5,176.2L217.2,176.9L218,175.4L218.8,176.6L219.5,177.1L220.2,176.7L221,176.5L221.8,176.7L222.5,176.1L223.2,176.8L224,176.5L224.8,176.4L225.5,176.9L226.2,176.8L227,176.1L227.8,175.3L228.5,175.1L229.2,176.3L230,177.0L230.8,177.3L231.5,176.4L232.2,176.4L233,176.7L233.8,176.7L234.5,175.9L235.2,177.0L236,176.6L236.8,176.8L237.5,176.6L238.2,175.9L239,176.1L239.8,176.1L240.5,177.0L241.2,176.8L242,176.8L242.8,176.3L243.5,174.6L244.2,176.2L245,177.0L245.8,176.5L246.5,175.1L247.2,176.7L248,176.9L248.8,176.5L249.5,175.5L250.2,176.3L251,176.3L251.8,176.4L252.5,176.6L253.2,175.4L254,175.9L254.8,176.3L255.5,176.5L256.2,176.6L257,177.0L257.8,175.5L258.5,176.5L259.2,175.6L260,176.5L260.8,176.9L261.5,176.0L262.2,176.1L263,175.4L263.8,176.1L264.5,176.6L265.2,176.7L266,177.0L266.8,176.6L267.5,176.8L268.2,175.3L269,176.5L269.8,176.1L270.5,176.8L271.2,176.4L272,177.0L272.8,176.1L273.5,176.1L274.2,176.0L275,176.6L275.8,175.8L276.5,176.5L277.2,176.9L278,176.9L278.8,176.1L279.5,176.6L280.2,176.2L281,176.0L281.8,176.0L282.5,176.3L283.2,176.3L284,176.4L284.8,176.4L285.5,176.2L286.2,176.8L287,174.5L287.8,175.3L288.5,176.8L289.2,176.8L290,176.3L290.8,176.7L291.5,176.9L292.2,176.9L293,176.0L293.8,176.2L294.5,176.6L295.2,175.9L296,176.4L296.8,176.2L297.5,176.5L298.2,176.8L299,176.2L299.8,176.2L300.5,176.6L301.2,176.3L302,177.1L302.8,176.9L303.5,177.0L304.2,176.6L305,177.1L305.8,176.7L306.5,176.4L307.2,176.3L308,176.7L308.8,177.1L309.5,176.4L310.2,176.7L311,176.4L311.8,176.7L312.5,176.0L313.2,176.9L314,176.3L314.8,176.5L315.5,177.1L316.2,176.6L317,175.8L317.8,176.5L318.5,176.7L319.2,176.5L320,175.9L320.8,175.5L321.5,176.7L322.2,177.0L323,175.8L323.8,176.2L324.5,175.9L325.2,176.0L326,176.7L326.8,176.3L327.5,177.0L328.2,176.9L329,177.5L329.8,176.3L330.5,176.5L331.2,176.3L332,176.1L332.8,176.7L333.5,176.6L334.2,175.3L335,176.8L335.8,176.9L336.5,177.0L337.2,175.2L338,175.9L338.8,176.9L339.5,176.2L340.2,176.7L341,175.4L341.8,176.2L342.5,175.7L343.2,175.8L344,176.4L344.8,176.1L345.5,176.4L346.2,176.2L347,176.3L347.8,177.0L348.5,176.8L349.2,176.8L350,176.9L350.8,177.0L351.5,176.4L352.2,177.0L353,176.3L353.8,176.3L354.5,177.0L355.2,175.8L356,176.2L356.8,176.6L357.5,175.9L358.2,176.0L359,176.7L359.8,176.0L360.5,176.7L361.2,176.9L362,176.7L362.8,175.5L363.5,176.7L364.2,176.7L365,176.4L365.8,175.3L366.5,175.8L367.2,175.8L368,175.8L368.8,176.5L369.5,176.4L370.2,175.7L371,176.7L371.8,176.3L372.5,176.4L373.2,175.7L374,176.8L374.8,175.8L375.5,175.9L376.2,175.9L377,176.6L377.8,175.9L378.5,176.1L379.2,176.8L380,176.0L380.8,176.4L381.5,176.7L382.2,176.7L383,176.3L383.8,174.7L384.5,175.9L385.2,176.6L386,176.4L386.8,176.6L387.5,176.6L388.2,176.5L389,176.2L389.8,176.7L390.5,176.3L391.2,176.2L392,176.2L392.8,176.3L393.5,176.8L394.2,176.3L395,175.5L395.8,176.5L396.5,176.7L397.2,176.3L398,176.1L398.8,176.1L399.5,176.0L400.2,176.1L401,176.7L401.8,176.6L402.5,176.2L403.2,176.2L404,174.9L404.8,176.7L405.5,176.3L406.2,176.8L407,176.5L407.8,176.6L408.5,176.8L409.2,176.3L410,176.3L410.8,176.7L411.5,175.4L412.2,176.1L413,176.4L413.8,176.7L414.5,176.8L415.2,176.7L416,176.5L416.8,176.5L417.5,176.9L418.2,175.8L419,175.6L419.8,176.8L420.5,176.4L421.2,175.9L422,176.5L422.8,176.3L423.5,175.7L424.2,176.7L425,177.1L425.8,176.5L426.5,176.5L427.2,176.9L428,176.2L428.8,176.9L429.5,176.7L430.2,176.0L431,175.2L431.8,176.4L432.5,176.9L433.2,176.6L434,174.7L434.8,176.8L435.5,176.6L436.2,175.4L437,176.0L437.8,176.7L438.5,176.1L439.2,176.6L440,176.6L440.8,176.2L441.5,176.7L442.2,176.4L443,176.0L443.8,176.8L444.5,176.6L445.2,176.1L446,176.0L446.8,176.5L447.5,176.4L448.2,176.2L449,176.7L449.8,176.8L450.5,176.5L451.2,176.7L452,176.5L452.8,176.2L453.5,176.9L454.2,176.7L455,176.6L455.8,175.9L456.5,177.2L457.2,175.6L458,176.9L458.8,176.7L459.5,177.0L460.2,176.1L461,176.4L461.8,176.2L462.5,176.5L463.2,176.5L464,177.0L464.8,176.1L465.5,176.7L466.2,176.5L467,175.8L467.8,176.7L468.5,176.3L469.2,175.9L470,176.4L470.8,176.4L471.5,176.0L472.2,176.4L473,176.2L473.8,176.9L474.5,176.9L475.2,177.1L476,176.2L476.8,175.9L477.5,176.1L478.2,176.4L479,176.0L479.8,175.7L480.5,176.8L481.2,176.2L482,175.9L482.8,175.5L483.5,176.0L484.2,176.8L485,176.7L485.8,176.8L486.5,176.6L487.2,176.3L488,176.5L488.8,176.6L489.5,176.6L490.2,177.1L491,176.2L491.8,176.6L492.5,175.2L493.2,176.1L494,176.9L494.8,176.9L495.5,176.4L496.2,176.0L497,176.7L497.8,176.5L498.5,176.7L499.2,176.4L500,176.7L500.8,176.0L501.5,177.0L502.2,175.7L503,176.7L503.8,176.9L504.5,176.5L505.2,176.4L506,176.0L506.8,175.4L507.5,175.5L508.2,177.0L509,176.5L509.8,176.8L510.5,176.7L511.2,176.2L512,176.4L512.8,176.2L513.5,176.5L514.2,177.2L515,176.8L515.8,177.3L516.5,176.6L517.2,175.3L518,176.4L518.8,177.3L519.5,175.2L520.2,176.0L521,176.3L521.8,176.4L522.5,176.1L523.2,175.0L524,175.7L524.8,176.8L525.5,175.7L526.2,176.1L527,176.1L527.8,176.5L528.5,176.6L529.2,176.4L530,176.3L530.8,176.5L531.5,176.8L532.2,176.5L533,175.6L533.8,176.6L534.5,176.6L535.2,176.6L536,176.1L536.8,175.5L537.5,176.3L538.2,176.8L539,176.6L539.8,176.4L540.5,176.5L541.2,176.5L542,176.5L542.8,176.2L543.5,176.4L544.2,176.2L545,176.5L545.8,176.0L546.5,177.2L547.2,176.5L548,176.8L548.8,177.2L549.5,176.3L550.2,176.1L551,176.3L551.8,176.8L552.5,176.5L553.2,176.9L554,176.9L554.8,176.4L555.5,176.4L556.2,176.6L557,176.6L557.8,176.4L558.5,176.4L559.2,177.2L560,177.2L560.8,176.3L561.5,177.5L562.2,175.9L563,176.1L563.8,176.3L564.5,175.8L565.2,176.6L566,177.1L566.8,176.4L567.5,176.9L568.2,176.6L569,175.8L569.8,176.8L570.5,176.8L571.2,176.6L572,176.6L572.8,175.1L573.5,175.9L574.2,176.3L575,176.3L575.8,176.4L576.5,175.9L577.2,176.7L578,176.3L578.8,175.2L579.5,176.1L580.2,176.7L581,176.9L581.8,176.7L582.5,176.7L583.2,176.2L584,177.2L584.8,176.7L585.5,176.1L586.2,175.8L587,175.8L587.8,176.2L588.5,176.4L589.2,176.6L590,176.2L590.8,176.7L591.5,176.6L592.2,176.2L593,176.9L593.8,175.8L594.5,176.0L595.2,176.3L596,176.3L596.8,176.6L597.5,177.0L598.2,176.0L599,175.4L599.8,176.5L600.5,176.8L601.2,176.6L602,176.2L602.8,176.4L603.5,176.2L604.2,176.3L605,176.0L605.8,176.1L606.5,176.6L607.2,177.1L608,176.7L608.8,176.2L609.5,176.7L610.2,176.4L611,177.0L611.8,176.6L612.5,176.3L613.2,175.4L614,175.8L614.8,176.3L615.5,176.2L616.2,176.1L617,176.0L617.8,176.7L618.5,176.9L619.2,176.6L620,176.3L620.8,175.8L621.5,176.4L622.2,176.9L623,176.5L623.8,176.7L624.5,176.8L625.2,176.1L626,176.3L626.8,176.5L627.5,175.6L628.2,175.8L629,176.7L629.8,176.7L630.5,177.2L631.2,175.2L632,176.0L632.8,176.8L633.5,176.5L634.2,177.3L635,176.1L635.8,177.1L636.5,176.4L637.2,174.9L638,176.4L638.8,176.3L639.5,176.3L640.2,176.1L641,177.3L641.8,176.6L642.5,175.9L643.2,176.8L644,176.1L644.8,176.0L645.5,176.6L646.2,176.3L647,176.5L647.8,175.7L648.5,176.5L649.2,176.7L650,175.5L650.8,176.6L651.5,176.7L652.2,177.2L653,176.2L653.8,175.7L654.5,176.3L655.2,176.3L656,175.2L656.8,176.8L657.5,177.0L658.2,175.3L659,176.4L659.8,176.2L660.5,176.8L661.2,176.7L662,176.6L662.8,176.6L663.5,176.3L664.2,176.7L665,176.5L665.8,176.5L666.5,175.2L667.2,176.2L668,176.5L668.8,177.0L669.5,176.5L670.2,176.6L671,175.4L671.8,176.6L672.5,176.9L673.2,176.4L674,175.5L674.8,175.5L675.5,176.4L676.2,176.4L677,176.9L677.8,176.9L678.5,175.3L679.2,175.9L680,176.5L680.8,176.1L681.5,176.4L682.2,176.4L683,177.0L683.8,177.5L684.5,176.4L685.2,176.8L686,174.1L686.8,176.6L687.5,176.6L688.2,177.0L689,176.5L689.8,176.6L690.5,176.3L691.2,176.8L692,176.1L692.8,176.5L693.5,176.5L694.2,177.0L695,176.6L695.8,176.4L696.5,176.5L697.2,176.2L698,176.9L698.8,176.3L699.5,177.1L700.2,175.5L701,176.5L701.8,176.2L702.5,175.8L703.2,177.0L704,176.8L704.8,176.1L705.5,176.9L706.2,176.8L707,176.8L707.8,176.4L708.5,176.3L709.2,176.3L710,176.5L710.8,176.2L711.5,176.6L712.2,175.5L713,176.2L713.8,176.1L714.5,177.1L715.2,175.6L716,175.9L716.8,176.4L717.5,176.1L718.2,177.1L719,176.7L719.8,176.6L720.5,175.9L721.2,176.5L722,175.2L722.8,176.5L723.5,176.4L724.2,175.6L725,174.6L725.8,177.2L726.5,175.5L727.2,175.6L728,176.3L728.8,176.6L729.5,175.9L730.2,176.5L731,175.9L731.8,176.5L732.5,176.7L733.2,175.8L734,177.2L734.8,176.2L735.5,176.3L736.2,176.8L737,176.7L737.8,177.1L738.5,176.3L739.2,175.4L740,176.6L740.8,176.7L741.5,174.9L742.2,176.9L743,176.6L743.8,176.9L744.5,177.1L745.2,175.7L746,176.7L746.8,176.4L747.5,176.8L748.2,176.7L749,176.4L749.8,176.9L750.5,176.0L751.2,176.5L752,176.5L752.8,175.6L753.5,176.2L754.2,176.6L755,176.6L755.8,176.0L756.5,175.3L757.2,175.3L758,176.5L758.8,176.3L759.5,176.6L760.2,176.1L761,176.9L761.8,176.5L762.5,176.8L763.2,176.3L764,176.8L764.8,176.8L765.5,176.5L766.2,176.7L767,176.9L767.8,177.3L768.5,174.6L769.2,176.2L770,176.6L770.8,176.3L771.5,175.7L772.2,175.6L773,177.0L773.8,176.3L774.5,176.4L775.2,176.8L776,176.1L776.8,176.3L777.5,175.2L778.2,176.8L779,177.2L779.8,176.4L780.5,176.8L781.2,175.7L782,176.1L782.8,176.5L783.5,176.0L784.2,176.2L785,177.2L785.8,176.5L786.5,176.4L787.2,175.7L788,175.1L788.8,175.8L789.5,175.8L789.5,187.0L788.8,187.0L788,186.6L787.2,186.9L786.5,187.2L785.8,187.4L785,186.6L784.2,187.9L783.5,186.6L782.8,187.7L782,186.6L781.2,186.7L780.5,186.2L779.8,186.9L779,186.5L778.2,186.5L777.5,186.8L776.8,186.5L776,186.9L775.2,187.3L774.5,186.9L773.8,186.9L773,186.9L772.2,187.1L771.5,188.3L770.8,187.1L770,186.7L769.2,186.9L768.5,187.1L767.8,186.1L767,186.9L766.2,186.9L765.5,186.8L764.8,186.4L764,187.6L763.2,187.4L762.5,186.5L761.8,187.1L761,186.7L760.2,187.1L759.5,186.5L758.8,187.3L758,187.1L757.2,186.6L756.5,187.0L755.8,186.8L755,187.2L754.2,187.0L753.5,187.0L752.8,186.5L752,187.1L751.2,186.6L750.5,186.8L749.8,186.5L749,187.7L748.2,187.0L747.5,186.9L746.8,186.8L746,187.2L745.2,187.1L744.5,187.1L743.8,187.2L743,186.4L742.2,187.4L741.5,186.3L740.8,187.1L740,186.7L739.2,187.5L738.5,187.3L737.8,187.3L737,187.2L736.2,187.6L735.5,187.0L734.8,187.0L734,187.2L733.2,187.2L732.5,186.7L731.8,186.9L731,187.9L730.2,186.5L729.5,187.3L728.8,188.3L728,187.3L727.2,187.3L726.5,186.6L725.8,187.3L725,186.9L724.2,186.3L723.5,187.1L722.8,187.0L722,186.8L721.2,187.6L720.5,187.1L719.8,186.1L719,187.7L718.2,186.6L717.5,187.2L716.8,188.4L716,186.8L715.2,188.1L714.5,187.2L713.8,185.9L713,186.8L712.2,187.7L711.5,187.0L710.8,187.3L710,186.7L709.2,187.0L708.5,186.6L707.8,186.6L707,187.0L706.2,186.8L705.5,187.2L704.8,187.4L704,186.9L703.2,187.1L702.5,187.2L701.8,187.5L701,186.7L700.2,187.1L699.5,187.1L698.8,186.4L698,186.4L697.2,186.4L696.5,186.2L695.8,187.2L695,187.0L694.2,186.8L693.5,186.8L692.8,186.8L692,187.9L691.2,186.7L690.5,187.1L689.8,186.3L689,187.1L688.2,187.3L687.5,186.8L686.8,186.7L686,186.8L685.2,187.6L684.5,187.5L683.8,187.3L683,187.3L682.2,187.3L681.5,187.3L680.8,186.9L680,188.4L679.2,187.9L678.5,186.3L677.8,186.7L677,186.7L676.2,187.1L675.5,187.3L674.8,187.5L674,186.6L673.2,187.1L672.5,187.2L671.8,187.1L671,186.6L670.2,186.1L669.5,187.1L668.8,186.7L668,186.8L667.2,189.2L666.5,186.6L665.8,186.7L665,187.0L664.2,186.9L663.5,187.0L662.8,187.2L662,186.9L661.2,186.5L660.5,186.7L659.8,187.4L659,186.3L658.2,186.6L657.5,187.4L656.8,187.1L656,186.6L655.2,186.7L654.5,186.5L653.8,187.2L653,187.4L652.2,187.3L651.5,186.1L650.8,186.8L650,186.5L649.2,186.8L648.5,187.1L647.8,186.7L647,186.7L646.2,186.7L645.5,187.2L644.8,186.8L644,186.5L643.2,186.5L642.5,186.9L641.8,187.2L641,187.2L640.2,186.9L639.5,186.5L638.8,187.3L638,186.8L637.2,187.2L636.5,186.5L635.8,187.1L635,187.4L634.2,186.5L633.5,186.6L632.8,186.9L632,186.3L631.2,186.3L630.5,187.1L629.8,187.4L629,186.8L628.2,187.4L627.5,187.5L626.8,186.7L626,186.9L625.2,186.2L624.5,186.8L623.8,187.4L623,187.4L622.2,186.5L621.5,186.9L620.8,187.1L620,187.3L619.2,186.9L618.5,186.6L617.8,188.5L617,186.3L616.2,186.0L615.5,186.7L614.8,186.4L614,186.4L613.2,187.3L612.5,186.6L611.8,186.8L611,187.3L610.2,188.1L609.5,187.0L608.8,186.8L608,186.6L607.2,187.2L606.5,186.8L605.8,187.9L605,186.6L604.2,186.8L603.5,187.8L602.8,188.0L602,187.1L601.2,187.4L600.5,187.3L599.8,187.6L599,187.7L598.2,186.8L597.5,186.7L596.8,187.9L596,186.6L595.2,187.0L594.5,187.7L593.8,187.1L593,186.1L592.2,186.2L591.5,187.3L590.8,187.3L590,187.2L589.2,187.4L588.5,186.6L587.8,188.3L587,188.0L586.2,187.2L585.5,187.0L584.8,187.2L584,186.4L583.2,186.5L582.5,187.6L581.8,187.4L581,186.9L580.2,188.0L579.5,186.6L578.8,186.8L578,186.9L577.2,187.2L576.5,186.6L575.8,186.8L575,186.8L574.2,187.5L573.5,186.5L572.8,187.2L572,186.8L571.2,187.3L570.5,187.0L569.8,187.8L569,186.4L568.2,186.4L567.5,187.2L566.8,187.3L566,186.4L565.2,186.9L564.5,187.3L563.8,187.0L563,186.1L562.2,187.0L561.5,186.5L560.8,188.3L560,187.4L559.2,187.2L558.5,187.3L557.8,187.0L557,186.8L556.2,187.1L555.5,187.8L554.8,187.1L554,188.5L553.2,186.7L552.5,186.4L551.8,188.7L551,186.6L550.2,186.5L549.5,187.2L548.8,187.3L548,187.0L547.2,187.0L546.5,186.5L545.8,187.3L545,187.1L544.2,187.4L543.5,186.6L542.8,188.0L542,187.4L541.2,186.7L540.5,186.6L539.8,186.9L539,187.0L538.2,187.0L537.5,186.7L536.8,187.0L536,187.0L535.2,187.0L534.5,187.1L533.8,186.9L533,186.6L532.2,187.3L531.5,186.7L530.8,187.7L530,187.2L529.2,187.1L528.5,188.3L527.8,187.7L527,186.2L526.2,187.8L525.5,186.9L524.8,187.2L524,186.6L523.2,187.8L522.5,186.6L521.8,186.8L521,186.5L520.2,187.0L519.5,188.2L518.8,186.5L518,186.5L517.2,186.7L516.5,187.4L515.8,186.8L515,186.1L514.2,187.2L513.5,188.5L512.8,186.7L512,186.4L511.2,186.7L510.5,187.3L509.8,187.8L509,186.5L508.2,187.7L507.5,187.0L506.8,186.7L506,186.6L505.2,186.9L504.5,186.8L503.8,187.2L503,187.4L502.2,187.8L501.5,187.3L500.8,187.7L500,187.3L499.2,187.0L498.5,186.9L497.8,187.3L497,186.8L496.2,186.4L495.5,188.2L494.8,187.1L494,186.9L493.2,186.7L492.5,187.6L491.8,186.4L491,187.2L490.2,186.8L489.5,186.4L488.8,187.3L488,186.7L487.2,186.8L486.5,187.4L485.8,186.8L485,186.1L484.2,187.0L483.5,187.1L482.8,186.9L482,187.8L481.2,187.1L480.5,188.3L479.8,187.3L479,187.2L478.2,187.1L477.5,187.5L476.8,186.6L476,187.2L475.2,187.1L474.5,187.3L473.8,187.1L473,186.9L472.2,186.7L471.5,186.9L470.8,187.0L470,187.0L469.2,187.2L468.5,186.9L467.8,187.3L467,187.2L466.2,188.0L465.5,187.0L464.8,186.7L464,186.8L463.2,187.2L462.5,187.0L461.8,187.3L461,187.0L460.2,187.1L459.5,186.8L458.8,186.9L458,186.5L457.2,186.5L456.5,186.9L455.8,188.1L455,186.3L454.2,187.1L453.5,187.5L452.8,186.8L452,187.2L451.2,186.3L450.5,187.2L449.8,187.0L449,186.7L448.2,187.1L447.5,186.6L446.8,186.3L446,187.4L445.2,186.9L444.5,187.0L443.8,186.7L443,186.9L442.2,186.9L441.5,187.4L440.8,187.2L440,186.7L439.2,188.3L438.5,187.1L437.8,186.9L437,186.4L436.2,186.6L435.5,186.7L434.8,186.6L434,187.7L433.2,187.1L432.5,186.7L431.8,186.8L431,188.6L430.2,186.8L429.5,186.4L428.8,187.3L428,187.1L427.2,187.3L426.5,186.8L425.8,186.7L425,186.1L424.2,186.6L423.5,187.4L422.8,187.2L422,186.4L421.2,186.6L420.5,187.1L419.8,186.8L419,186.3L418.2,187.2L417.5,187.5L416.8,187.2L416,186.9L415.2,187.1L414.5,186.9L413.8,186.8L413,188.3L412.2,186.7L411.5,187.3L410.8,186.5L410,187.2L409.2,186.6L408.5,186.7L407.8,186.6L407,187.1L406.2,186.7L405.5,186.4L404.8,186.4L404,188.2L403.2,186.5L402.5,187.9L401.8,186.6L401,187.1L400.2,186.6L399.5,186.3L398.8,187.0L398,187.5L397.2,186.3L396.5,187.3L395.8,187.3L395,187.3L394.2,187.2L393.5,187.0L392.8,187.1L392,187.0L391.2,186.7L390.5,186.9L389.8,188.5L389,187.0L388.2,187.2L387.5,187.4L386.8,187.3L386,186.7L385.2,187.5L384.5,186.8L383.8,187.0L383,187.1L382.2,186.8L381.5,186.4L380.8,187.0L380,187.6L379.2,187.2L378.5,188.2L377.8,186.8L377,187.4L376.2,186.9L375.5,187.1L374.8,187.9L374,187.2L373.2,188.0L372.5,187.8L371.8,186.8L371,186.8L370.2,186.6L369.5,187.0L368.8,187.5L368,186.9L367.2,187.5L366.5,186.7L365.8,187.5L365,186.1L364.2,187.4L363.5,186.7L362.8,186.7L362,187.2L361.2,186.6L360.5,187.0L359.8,187.1L359,186.6L358.2,187.1L357.5,186.6L356.8,186.7L356,186.8L355.2,187.3L354.5,188.2L353.8,187.1L353,187.1L352.2,186.8L351.5,186.6L350.8,187.0L350,186.5L349.2,187.6L348.5,186.4L347.8,187.2L347,187.5L346.2,187.3L345.5,186.9L344.8,186.7L344,186.6L343.2,188.5L342.5,186.7L341.8,187.1L341,187.9L340.2,187.5L339.5,186.6L338.8,187.7L338,187.3L337.2,187.1L336.5,187.4L335.8,187.1L335,186.7L334.2,186.9L333.5,187.7L332.8,187.8L332,187.4L331.2,186.5L330.5,187.6L329.8,187.5L329,186.7L328.2,186.7L327.5,187.2L326.8,187.3L326,187.2L325.2,186.8L324.5,188.3L323.8,186.7L323,186.4L322.2,187.8L321.5,187.3L320.8,186.2L320,186.3L319.2,186.7L318.5,187.5L317.8,188.1L317,187.6L316.2,187.3L315.5,186.6L314.8,187.7L314,186.8L313.2,187.4L312.5,186.8L311.8,186.9L311,187.0L310.2,187.0L309.5,187.9L308.8,186.5L308,187.4L307.2,187.4L306.5,186.4L305.8,186.9L305,186.4L304.2,187.1L303.5,186.7L302.8,187.3L302,186.9L301.2,187.1L300.5,186.9L299.8,186.7L299,186.3L298.2,188.1L297.5,188.1L296.8,186.3L296,187.1L295.2,187.0L294.5,186.9L293.8,186.7L293,186.8L292.2,186.4L291.5,186.6L290.8,186.3L290,187.2L289.2,187.0L288.5,187.3L287.8,186.6L287,186.8L286.2,186.7L285.5,187.0L284.8,186.8L284,187.6L283.2,186.6L282.5,187.5L281.8,187.5L281,186.7L280.2,187.5L279.5,187.3L278.8,186.5L278,186.8L277.2,187.3L276.5,187.2L275.8,186.3L275,187.3L274.2,186.4L273.5,187.7L272.8,187.3L272,186.9L271.2,188.2L270.5,187.1L269.8,187.1L269,187.7L268.2,186.4L267.5,186.6L266.8,186.9L266,187.5L265.2,186.9L264.5,186.7L263.8,187.0L263,186.9L262.2,186.8L261.5,187.3L260.8,186.9L260,186.8L259.2,187.4L258.5,187.1L257.8,187.4L257,187.2L256.2,186.7L255.5,187.4L254.8,186.8L254,186.4L253.2,186.9L252.5,187.2L251.8,187.2L251,186.8L250.2,187.1L249.5,186.7L248.8,186.8L248,186.5L247.2,187.1L246.5,187.6L245.8,186.5L245,187.9L244.2,187.4L243.5,187.3L242.8,188.2L242,186.9L241.2,186.9L240.5,186.9L239.8,187.2L239,186.8L238.2,186.6L237.5,187.0L236.8,188.0L236,186.4L235.2,187.9L234.5,186.3L233.8,187.1L233,187.6L232.2,186.5L231.5,186.4L230.8,187.0L230,186.9L229.2,187.0L228.5,187.5L227.8,187.0L227,186.7L226.2,187.1L225.5,186.5L224.8,186.7L224,186.1L223.2,187.3L222.5,187.0L221.8,187.1L221,187.4L220.2,186.6L219.5,188.3L218.8,186.5L218,186.3L217.2,186.8L216.5,186.8L215.8,186.9L215,187.3L214.2,187.1L213.5,187.6L212.8,187.0L212,187.1L211.2,187.0L210.5,186.8L209.8,187.6L209,187.3L208.2,186.9L207.5,187.0L206.8,186.4L206,187.0L205.2,187.2L204.5,187.0L203.8,186.5L203,188.1L202.2,187.3L201.5,187.8L200.8,186.9L200,186.7L199.2,187.5L198.5,187.5L197.8,188.8L197,187.1L196.2,187.3L195.5,187.2L194.8,187.4L194,187.2L193.2,186.6L192.5,187.4L191.8,187.1L191,187.0L190.2,187.3L189.5,186.8L188.8,187.2L188,187.3L187.2,187.1L186.5,186.6L185.8,187.1L185,186.7L184.2,186.7L183.5,186.8L182.8,186.7L182,186.9L181.2,186.4L180.5,186.9L179.8,187.2L179,188.3L178.2,186.3L177.5,186.8L176.8,186.7L176,186.8L175.2,187.1L174.5,186.5L173.8,187.0L173,186.6L172.2,186.7L171.5,187.4L170.8,188.6L170,186.7L169.2,186.2L168.5,186.9L167.8,186.5L167,186.7L166.2,188.1L165.5,187.1L164.8,187.7L164,186.6L163.2,186.9L162.5,187.2L161.8,188.2L161,186.8L160.2,186.9L159.5,187.1L158.8,186.3L158,187.3L157.2,187.2L156.5,186.7L155.8,186.4L155,187.2L154.2,187.0L153.5,187.5L152.8,186.9L152,187.4L151.2,187.2L150.5,186.7L149.8,186.7L149,186.7L148.2,187.1L147.5,186.9L146.8,186.8L146,186.6L145.2,187.9L144.5,186.7L143.8,186.4L143,187.3L142.2,187.5L141.5,186.6L140.8,186.3L140,188.3L139.2,187.1L138.5,186.3L137.8,186.8L137,187.5L136.2,186.6L135.5,187.7L134.8,186.4L134,187.7L133.2,186.9L132.5,186.7L131.8,186.9L131,187.0L130.2,187.7L129.5,186.9L128.8,186.4L128,186.5L127.2,187.1L126.5,186.4L125.8,187.3L125,186.9L124.2,187.3L123.5,187.2L122.8,186.9L122,187.0L121.2,187.4L120.5,187.0L119.8,187.1L119,188.0L118.2,186.5L117.5,187.1L116.8,187.3L116,186.0L115.2,187.5L114.5,187.2L113.8,187.0L113,186.5L112.2,186.6L111.5,186.9L110.8,186.9L110,186.9L109.2,186.5L108.5,187.9L107.8,186.7L107,187.1L106.2,187.0L105.5,186.9L104.8,186.8L104,186.9L103.2,188.0L102.5,186.6L101.8,186.6L101,187.6L100.2,186.7L99.5,186.8L98.8,187.7L98,187.3L97.2,186.6L96.5,187.6L95.8,186.6L95,187.1L94.2,186.3L93.5,186.8L92.8,187.0L92,187.0L91.2,186.6L90.5,186.8L89.8,187.0L89,186.7L88.2,187.2L87.5,186.7L86.8,187.0L86,187.0L85.2,186.9L84.5,186.2L83.8,188.6L83,186.9L82.2,186.6L81.5,186.9L80.8,187.1L80,186.4L79.2,186.5L78.5,186.6L77.8,187.5L77,187.2L76.2,187.3L75.5,187.0L74.8,186.8L74,186.4L73.2,187.1L72.5,188.4L71.8,187.1L71,186.7L70.2,186.5L69.5,187.5L68.8,186.4L68,186.7L67.2,186.8L66.5,186.8L65.8,187.2L65,187.3L64.2,186.6L63.5,187.0L62.8,186.9L62,187.4L61.2,187.8L60.5,187.7L59.8,187.2L59,186.9Z"/>
<path fill="#e6007c" d="M59,177.8L59.8,177.5L60.5,177.3L61.2,177.2L62,176.6L62.8,177.7L63.5,177.6L64.2,177.5L65,176.9L65.8,177.1L66.5,176.9L67.2,177.5L68,176.7L68.8,177.3L69.5,176.7L70.2,177.3L71,177.1L71.8,177.5L72.5,176.8L73.2,177.3L74,177.7L74.8,176.6L75.5,177.8L76.2,177.6L77,177.0L77.8,177.9L78.5,176.8L79.2,176.1L80,176.8L80.8,177.3L81.5,176.6L82.2,176.6L83,177.1L83.8,176.9L84.5,177.3L85.2,176.9L86,177.4L86.8,176.6L87.5,177.1L88.2,176.7L89,177.2L89.8,177.4L90.5,177.2L91.2,176.9L92,176.7L92.8,177.1L93.5,176.8L94.2,177.0L95,176.8L95.8,177.4L96.5,177.6L97.2,177.7L98,177.3L98.8,176.8L99.5,176.9L100.2,177.2L101,177.1L101.8,176.8L102.5,177.2L103.2,177.0L104,177.3L104.8,176.9L105.5,177.8L106.2,177.1L107,177.4L107.8,177.2L108.5,177.5L109.2,177.1L110,177.4L110.8,176.8L111.5,177.0L112.2,177.4L113,177.0L113.8,177.1L114.5,177.3L115.2,177.7L116,177.9L116.8,176.8L117.5,177.2L118.2,176.3L119,177.7L119.8,176.8L120.5,176.6L121.2,177.0L122,177.3L122.8,177.2L123.5,177.3L124.2,176.9L125,177.1L125.8,177.1L126.5,177.4L127.2,176.8L128,177.1L128.8,177.5L129.5,177.4L130.2,176.8L131,177.0L131.8,177.1L132.5,176.7L133.2,176.8L134,177.3L134.8,177.1L135.5,176.8L136.2,176.8L137,176.2L137.8,176.9L138.5,178.0L139.2,177.1L140,177.2L140.8,177.2L141.5,177.0L142.2,177.0L143,176.8L143.8,177.0L144.5,176.7L145.2,177.5L146,176.2L146.8,177.1L147.5,176.8L148.2,177.6L149,176.9L149.8,177.4L150.5,177.2L151.2,176.8L152,176.8L152.8,177.4L153.5,177.3L154.2,177.3L155,176.8L155.8,177.3L156.5,177.6L157.2,177.4L158,176.9L158.8,177.2L159.5,176.9L160.2,177.2L161,177.3L161.8,177.4L162.5,177.5L163.2,177.1L164,176.6L164.8,177.2L165.5,177.2L166.2,177.6L167,177.5L167.8,177.4L168.5,177.5L169.2,177.1L170,177.6L170.8,177.0L171.5,177.1L172.2,177.1L173,176.9L173.8,177.5L174.5,177.5L175.2,178.3L176,176.9L176.8,176.7L177.5,176.6L178.2,177.3L179,177.4L179.8,176.3L180.5,176.5L181.2,177.6L182,176.8L182.8,176.8L183.5,177.3L184.2,177.7L185,177.4L185.8,177.4L186.5,177.3L187.2,176.5L188,177.3L188.8,177.3L189.5,177.3L190.2,177.7L191,177.1L191.8,176.9L192.5,177.1L193.2,177.4L194,177.7L194.8,177.0L195.5,177.2L196.2,175.9L197,177.3L197.8,177.1L198.5,177.3L199.2,177.2L200,177.0L200.8,177.7L201.5,177.0L202.2,177.2L203,177.2L203.8,176.8L204.5,177.6L205.2,177.5L206,177.2L206.8,177.2L207.5,176.8L208.2,176.9L209,177.5L209.8,177.3L210.5,177.6L211.2,177.2L212,176.6L212.8,177.5L213.5,177.1L214.2,177.6L215,176.8L215.8,177.5L216.5,177.1L217.2,177.5L218,177.4L218.8,177.5L219.5,176.6L220.2,177.7L221,177.4L221.8,177.2L222.5,177.2L223.2,176.6L224,177.0L224.8,177.4L225.5,177.4L226.2,177.3L227,177.3L227.8,176.5L228.5,177.4L229.2,176.9L230,177.8L230.8,177.1L231.5,177.0L232.2,177.0L233,177.2L233.8,177.2L234.5,177.1L235.2,177.4L236,176.7L236.8,176.6L237.5,177.2L238.2,177.0L239,177.6L239.8,177.0L240.5,177.1L241.2,177.4L242,176.9L242.8,177.2L243.5,177.6L244.2,177.4L245,177.5L245.8,177.3L246.5,177.2L247.2,177.3L248,177.0L248.8,177.0L249.5,176.4L250.2,177.0L251,177.0L251.8,177.0L252.5,177.4L253.2,177.0L254,177.2L254.8,177.3L255.5,176.9L256.2,177.9L257,176.9L257.8,177.1L258.5,176.8L259.2,177.2L260,177.3L260.8,177.7L261.5,177.2L262.2,177.0L263,177.2L263.8,177.1L264.5,175.9L265.2,176.8L266,177.2L266.8,177.0L267.5,176.7L268.2,177.7L269,177.3L269.8,177.1L270.5,176.8L271.2,177.5L272,177.6L272.8,177.4L273.5,176.9L274.2,177.9L275,176.7L275.8,177.1L276.5,176.7L277.2,177.2L278,177.0L278.8,177.3L279.5,176.3L280.2,176.9L281,177.1L281.8,177.3L282.5,177.3L283.2,177.3L284,177.6L284.8,177.0L285.5,176.9L286.2,176.3L287,177.7L287.8,177.6L288.5,176.8L289.2,176.6L290,177.1L290.8,177.8L291.5,177.0L292.2,176.7L293,177.5L293.8,177.3L294.5,177.3L295.2,176.9L296,177.4L296.8,177.3L297.5,176.1L298.2,176.6L299,176.4L299.8,177.5L300.5,176.4L301.2,177.3L302,177.8L302.8,177.1L303.5,176.8L304.2,177.5L305,176.8L305.8,177.1L306.5,176.2L307.2,177.2L308,176.8L308.8,177.2L309.5,177.1L310.2,177.5L311,177.3L311.8,176.8L312.5,177.5L313.2,176.7L314,177.0L314.8,177.8L315.5,177.1L316.2,177.5L317,177.4L317.8,176.8L318.5,177.1L319.2,176.7L320,177.0L320.8,177.1L321.5,177.2L322.2,176.6L323,177.1L323.8,177.3L324.5,177.3L325.2,177.4L326,176.9L326.8,177.6L327.5,177.7L328.2,177.0L329,177.1L329.8,177.0L330.5,177.2L331.2,177.4L332,177.7L332.8,177.8L333.5,176.5L334.2,177.8L335,177.5L335.8,177.1L336.5,176.6L337.2,176.2L338,177.6L338.8,177.1L339.5,177.1L340.2,177.5L341,177.8L341.8,177.1L342.5,176.9L343.2,176.5L344,176.8L344.8,176.9L345.5,176.4L346.2,177.5L347,176.9L347.8,176.8L348.5,176.5L349.2,177.6L350,177.0L350.8,176.7L351.5,176.8L352.2,176.9L353,177.1L353.8,177.4L354.5,177.6L355.2,177.1L356,177.8L356.8,176.8L357.5,177.7L358.2,177.3L359,177.5L359.8,176.9L360.5,177.5L361.2,177.7L362,176.3L362.8,177.0L363.5,177.0L364.2,177.2L365,177.1L365.8,176.8L366.5,177.1L367.2,177.4L368,176.7L368.8,177.5L369.5,177.4L370.2,177.3L371,177.4L371.8,177.0L372.5,176.9L373.2,177.1L374,177.2L374.8,177.4L375.5,177.6L376.2,176.9L377,176.8L377.8,176.9L378.5,177.2L379.2,177.3L380,177.0L380.8,177.6L381.5,177.3L382.2,177.2L383,177.2L383.8,177.3L384.5,177.0L385.2,177.4L386,177.5L386.8,176.9L387.5,177.0L388.2,176.3L389,177.1L389.8,177.5L390.5,176.8L391.2,177.4L392,176.5L392.8,177.4L393.5,176.8L394.2,177.3L395,177.1L395.8,177.3L396.5,177.6L397.2,177.4L398,176.7L398.8,178.0L399.5,176.7L400.2,177.3L401,176.7L401.8,177.0L402.5,177.9L403.2,177.2L404,177.1L404.8,176.6L405.5,177.6L406.2,177.0L407,177.2L407.8,177.3L408.5,177.6L409.2,177.2L410,176.7L410.8,177.0L411.5,177.3L412.2,176.5L413,177.0L413.8,176.6L414.5,176.8L415.2,177.3L416,177.0L416.8,177.9L417.5,176.9L418.2,176.7L419,177.6L419.8,177.4L420.5,176.1L421.2,177.1L422,177.3L422.8,177.5L423.5,177.4L424.2,177.4L425,177.2L425.8,177.3L426.5,177.5L427.2,177.4L428,177.3L428.8,177.5L429.5,177.0L430.2,176.8L431,177.9L431.8,176.8L432.5,176.8L433.2,177.2L434,177.8L434.8,177.0L435.5,177.4L436.2,177.1L437,177.3L437.8,177.4L438.5,177.0L439.2,176.5L440,177.3L440.8,177.2L441.5,177.7L442.2,177.2L443,177.4L443.8,177.6L444.5,177.9L445.2,177.4L446,177.2L446.8,177.3L447.5,177.0L448.2,177.2L449,178.0L449.8,177.0L450.5,177.3L451.2,177.3L452,176.1L452.8,176.3L453.5,176.9L454.2,177.1L455,176.9L455.8,177.2L456.5,177.4L457.2,177.1L458,176.8L458.8,177.3L459.5,176.2L460.2,177.1L461,178.0L461.8,177.3L462.5,177.6L463.2,177.3L464,177.2L464.8,177.5L465.5,177.1L466.2,177.2L467,176.7L467.8,176.8L468.5,177.0L469.2,177.1L470,176.7L470.8,176.9L471.5,177.6L472.2,177.4L473,177.0L473.8,176.5L474.5,177.1L475.2,176.6L476,177.6L476.8,177.3L477.5,176.9L478.2,177.1L479,176.9L479.8,177.2L480.5,177.5L481.2,177.4L482,177.2L482.8,177.2L483.5,177.4L484.2,177.4L485,178.0L485.8,177.1L486.5,176.8L487.2,176.7L488,176.7L488.8,176.5L489.5,177.5L490.2,177.0L491,177.6L491.8,177.2L492.5,177.8L493.2,176.9L494,177.1L494.8,176.2L495.5,177.1L496.2,176.7L497,177.2L497.8,176.9L498.5,177.1L499.2,176.8L500,177.0L500.8,177.3L501.5,177.8L502.2,177.4L503,177.9L503.8,177.7L504.5,177.1L505.2,177.7L506,177.3L506.8,177.3L507.5,176.9L508.2,177.0L509,176.3L509.8,177.0L510.5,177.6L511.2,176.6L512,176.9L512.8,176.9L513.5,177.3L514.2,177.3L515,178.0L515.8,176.8L516.5,176.7L517.2,176.9L518,177.5L518.8,177.0L519.5,178.1L520.2,177.3L521,177.5L521.8,177.6L522.5,176.9L523.2,177.3L524,176.9L524.8,176.6L525.5,176.8L526.2,176.8L527,177.3L527.8,177.6L528.5,176.5L529.2,177.4L530,176.3L530.8,177.1L531.5,176.3L532.2,177.4L533,177.3L533.8,177.2L534.5,176.6L535.2,177.1L536,177.1L536.8,176.7L537.5,177.1L538.2,176.8L539,176.7L539.8,176.6L540.5,177.4L541.2,177.6L542,177.6L542.8,177.3L543.5,177.1L544.2,177.5L545,177.3L545.8,177.2L546.5,177.4L547.2,177.4L548,177.1L548.8,177.0L549.5,176.7L550.2,176.8L551,177.4L551.8,177.6L552.5,177.6L553.2,177.4L554,177.0L554.8,177.7L555.5,176.9L556.2,177.6L557,177.3L557.8,176.8L558.5,177.1L559.2,177.2L560,177.3L560.8,176.9L561.5,177.2L562.2,177.5L563,177.3L563.8,177.2L564.5,177.1L565.2,177.3L566,177.1L566.8,177.5L567.5,177.4L568.2,176.9L569,177.1L569.8,176.3L570.5,177.0L571.2,177.2L572,177.2L572.8,177.1L573.5,177.7L574.2,177.0L575,176.6L575.8,177.4L576.5,177.2L577.2,176.7L578,176.5L578.8,177.3L579.5,177.0L580.2,177.4L581,176.6L581.8,177.2L582.5,177.1L583.2,176.8L584,176.6L584.8,177.5L585.5,178.2L586.2,177.5L587,177.3L587.8,176.4L588.5,177.5L589.2,177.4L590,178.5L590.8,177.8L591.5,177.2L592.2,177.0L593,177.6L593.8,177.2L594.5,177.1L595.2,177.4L596,176.8L596.8,177.9L597.5,176.3L598.2,177.1L599,176.7L599.8,177.1L600.5,177.1L601.2,177.3L602,177.0L602.8,177.3L603.5,176.9L604.2,176.9L605,177.2L605.8,176.8L606.5,177.0L607.2,177.0L608,177.2L608.8,176.9L609.5,177.0L610.2,177.1L611,177.1L611.8,177.6L612.5,177.4L613.2,177.6L614,178.0L614.8,178.0L615.5,177.5L616.2,177.2L617,177.1L617.8,177.6L618.5,176.9L619.2,177.3L620,177.3L620.8,177.4L621.5,177.5L622.2,177.0L623,176.8L623.8,177.1L624.5,177.2L625.2,177.1L626,177.3L626.8,177.0L627.5,177.2L628.2,177.6L629,176.8L629.8,176.9L630.5,177.0L631.2,176.6L632,177.5L632.8,177.8L633.5,177.2L634.2,176.8L635,177.5L635.8,177.5L636.5,177.1L637.2,177.9L638,176.9L638.8,177.4L639.5,176.9L640.2,176.7L641,177.3L641.8,177.4L642.5,177.0L643.2,177.2L644,177.0L644.8,177.7L645.5,177.3L646.2,177.2L647,177.1L647.8,176.9L648.5,176.8L649.2,176.1L650,177.1L650.8,176.9L651.5,176.7L652.2,177.2L653,177.0L653.8,177.4L654.5,177.1L655.2,177.3L656,176.7L656.8,177.5L657.5,177.1L658.2,176.7L659,177.2L659.8,176.9L660.5,177.6L661.2,176.2L662,177.6L662.8,177.2L663.5,177.2L664.2,177.2L665,177.0L665.8,177.3L666.5,176.7L667.2,177.4L668,176.2L668.8,176.8L669.5,176.8L670.2,177.4L671,176.8L671.8,177.4L672.5,177.2L673.2,177.2L674,176.7L674.8,177.4L675.5,176.9L676.2,176.4L677,177.3L677.8,176.8L678.5,177.7L679.2,176.9L680,177.7L680.8,177.8L681.5,176.9L682.2,177.3L683,176.9L683.8,176.8L684.5,177.0L685.2,177.2L686,177.5L686.8,177.5L687.5,176.5L688.2,177.5L689,177.9L689.8,177.3L690.5,177.4L691.2,177.0L692,177.3L692.8,176.6L693.5,177.0L694.2,176.9L695,177.0L695.8,176.5L696.5,178.0L697.2,176.8L698,177.1L698.8,177.3L699.5,177.0L700.2,177.9L701,175.9L701.8,176.8L702.5,177.4L703.2,176.4L704,177.3L704.8,176.9L705.5,177.1L706.2,177.3L707,177.1L707.8,177.7L708.5,177.2L709.2,177.4L710,177.6L710.8,176.7L711.5,177.0L712.2,177.0L713,177.7L713.8,177.5L714.5,176.7L715.2,177.6L716,177.9L716.8,176.6L717.5,177.2L718.2,176.8L719,177.4L719.8,177.2L720.5,177.2L721.2,177.4L722,176.6L722.8,176.8L723.5,176.8L724.2,177.2L725,177.2L725.8,177.2L726.5,177.9L727.2,177.3L728,177.7L728.8,176.3L729.5,177.2L730.2,177.2L731,177.2L731.8,177.7L732.5,177.1L733.2,177.2L734,176.5L734.8,177.5L735.5,176.9L736.2,177.0L737,177.7L737.8,177.6L738.5,176.6L739.2,177.0L740,177.4L740.8,177.3L741.5,177.3L742.2,176.8L743,177.0L743.8,176.9L744.5,177.0L745.2,176.9L746,177.3L746.8,177.4L747.5,177.2L748.2,177.0L749,177.1L749.8,177.0L750.5,177.1L751.2,177.3L752,177.7L752.8,177.7L753.5,176.8L754.2,177.2L755,176.7L755.8,178.1L756.5,176.9L757.2,177.3L758,177.6L758.8,177.1L759.5,176.7L760.2,177.3L761,176.5L761.8,176.6L762.5,177.3L763.2,177.0L764,176.8L764.8,176.4L765.5,177.2L766.2,176.6L767,177.1L767.8,177.1L768.5,177.1L769.2,176.9L770,177.2L770.8,177.5L771.5,176.6L772.2,176.7L773,177.2L773.8,176.9L774.5,177.9L775.2,176.7L776,177.2L776.8,177.6L777.5,176.9L778.2,177.8L779,177.2L779.8,176.7L780.5,176.8L781.2,177.4L782,176.3L782.8,176.5L783.5,177.1L784.2,177.1L785,176.7L785.8,177.5L786.5,177.4L787.2,177.2L788,177.2L788.8,177.1L789.5,177.1L789.5,185.6L788.8,186.3L788,186.4L787.2,186.4L786.5,186.1L785.8,186.6L785,186.4L784.2,186.1L783.5,186.8L782.8,186.2L782,186.2L781.2,187.0L780.5,185.6L779.8,186.6L779,186.6L778.2,186.6L777.5,186.5L776.8,185.5L776,186.3L775.2,185.8L774.5,185.5L773.8,186.8L773,186.6L772.2,186.1L771.5,186.1L770.8,187.4L770,185.9L769.2,186.2L768.5,186.5L767.8,186.9L767,186.2L766.2,186.1L765.5,185.8L764.8,187.3L764,187.0L763.2,186.2L762.5,186.5L761.8,185.6L761,186.0L760.2,186.5L759.5,186.2L758.8,187.0L758,186.5L757.2,187.1L756.5,186.0L755.8,186.2L755,186.5L754.2,186.7L753.5,185.9L752.8,186.2L752,186.5L751.2,185.6L750.5,186.3L749.8,186.3L749,185.9L748.2,185.8L747.5,186.0L746.8,186.2L746,186.9L745.2,186.4L744.5,186.5L743.8,185.9L743,187.1L742.2,186.9L741.5,186.4L740.8,185.8L740,186.3L739.2,186.4L738.5,186.3L737.8,186.5L737,186.0L736.2,187.0L735.5,186.9L734.8,185.6L734,186.5L733.2,185.7L732.5,185.8L731.8,186.0L731,186.2L730.2,186.7L729.5,186.0L728.8,186.1L728,186.9L727.2,186.3L726.5,186.2L725.8,186.0L725,186.2L724.2,186.5L723.5,186.0L722.8,186.3L722,185.6L721.2,186.5L720.5,186.8L719.8,186.3L719,186.5L718.2,186.3L717.5,185.7L716.8,185.4L716,185.8L715.2,186.1L714.5,187.5L713.8,186.2L713,186.1L712.2,186.5L711.5,185.9L710.8,186.2L710,186.5L709.2,187.1L708.5,185.9L707.8,185.8L707,186.4L706.2,185.8L705.5,185.9L704.8,186.3L704,186.6L703.2,186.1L702.5,186.4L701.8,185.7L701,186.4L700.2,186.8L699.5,186.4L698.8,186.5L698,186.0L697.2,186.7L696.5,185.8L695.8,186.6L695,186.1L694.2,186.3L693.5,187.2L692.8,185.9L692,185.9L691.2,186.2L690.5,186.0L689.8,186.8L689,185.7L688.2,186.0L687.5,186.3L686.8,186.3L686,185.8L685.2,186.0L684.5,186.8L683.8,186.2L683,185.5L682.2,185.8L681.5,186.0L680.8,186.8L680,186.2L679.2,186.7L678.5,185.8L677.8,185.9L677,185.7L676.2,186.1L675.5,186.4L674.8,185.9L674,185.7L673.2,185.9L672.5,186.2L671.8,186.5L671,186.1L670.2,185.9L669.5,186.3L668.8,186.1L668,186.3L667.2,186.9L666.5,186.6L665.8,186.6L665,186.1L664.2,186.4L663.5,186.3L662.8,185.7L662,186.3L661.2,186.0L660.5,186.6L659.8,186.0L659,185.9L658.2,186.9L657.5,186.0L656.8,185.8L656,185.8L655.2,186.6L654.5,186.3L653.8,186.1L653,186.5L652.2,186.2L651.5,186.5L650.8,186.6L650,186.6L649.2,186.2L648.5,186.4L647.8,186.0L647,186.3L646.2,186.0L645.5,185.8L644.8,186.4L644,185.9L643.2,186.1L642.5,186.3L641.8,185.9L641,185.9L640.2,186.0L639.5,186.1L638.8,186.6L638,185.7L637.2,186.2L636.5,186.3L635.8,186.7L635,185.8L634.2,186.3L633.5,186.4L632.8,186.2L632,186.5L631.2,186.0L630.5,186.1L629.8,186.3L629,185.7L628.2,186.7L627.5,186.3L626.8,186.4L626,186.7L625.2,186.5L624.5,186.1L623.8,186.5L623,186.3L622.2,185.6L621.5,186.5L620.8,187.0L620,186.9L619.2,186.1L618.5,186.5L617.8,187.0L617,186.7L616.2,186.0L615.5,186.8L614.8,185.8L614,186.3L613.2,186.8L612.5,186.3L611.8,186.1L611,186.1L610.2,186.3L609.5,186.7L608.8,186.1L608,186.6L607.2,186.7L606.5,186.0L605.8,185.7L605,186.9L604.2,186.3L603.5,186.8L602.8,186.4L602,186.7L601.2,186.6L600.5,186.8L599.8,186.0L599,185.9L598.2,186.0L597.5,186.2L596.8,186.5L596,186.6L595.2,186.1L594.5,185.9L593.8,186.7L593,186.0L592.2,185.7L591.5,185.7L590.8,186.6L590,185.9L589.2,185.8L588.5,186.0L587.8,186.0L587,186.3L586.2,185.4L585.5,185.7L584.8,185.5L584,186.3L583.2,186.3L582.5,185.2L581.8,186.0L581,186.1L580.2,186.5L579.5,186.6L578.8,186.1L578,185.9L577.2,186.0L576.5,185.5L575.8,186.3L575,186.5L574.2,185.9L573.5,186.3L572.8,186.3L572,186.6L571.2,186.1L570.5,186.0L569.8,186.5L569,186.5L568.2,186.1L567.5,185.8L566.8,185.8L566,186.8L565.2,186.7L564.5,186.4L563.8,186.8L563,185.8L562.2,186.2L561.5,186.0L560.8,185.7L560,185.8L559.2,186.4L558.5,185.7L557.8,186.3L557,186.8L556.2,186.6L555.5,186.7L554.8,186.3L554,187.2L553.2,185.8L552.5,185.8L551.8,186.0L551,186.5L550.2,186.6L549.5,186.0L548.8,186.0L548,186.0L547.2,186.2L546.5,186.3L545.8,185.8L545,186.1L544.2,185.6L543.5,186.2L542.8,186.6L542,186.5L541.2,186.1L540.5,186.7L539.8,186.2L539,185.9L538.2,186.1L537.5,186.1L536.8,186.1L536,185.8L535.2,186.4L534.5,186.1L533.8,186.2L533,186.3L532.2,186.1L531.5,186.4L530.8,185.6L530,186.6L529.2,185.7L528.5,186.7L527.8,186.9L527,186.1L526.2,186.1L525.5,186.3L524.8,186.1L524,187.0L523.2,185.9L522.5,186.5L521.8,186.2L521,185.9L520.2,185.9L519.5,186.2L518.8,186.4L518,186.3L517.2,186.4L516.5,186.2L515.8,185.8L515,186.0L514.2,186.3L513.5,186.3L512.8,185.9L512,185.7L511.2,186.7L510.5,186.3L509.8,186.0L509,185.8L508.2,186.0L507.5,186.4L506.8,185.9L506,185.7L505.2,186.4L504.5,186.1L503.8,186.2L503,186.6L502.2,186.0L501.5,186.2L500.8,186.3L500,186.0L499.2,186.8L498.5,185.8L497.8,185.7L497,186.4L496.2,185.9L495.5,185.6L494.8,186.3L494,186.6L493.2,186.4L492.5,186.0L491.8,186.6L491,186.3L490.2,186.4L489.5,186.1L488.8,186.2L488,186.7L487.2,186.1L486.5,186.0L485.8,186.2L485,186.1L484.2,186.3L483.5,186.5L482.8,186.4L482,186.4L481.2,186.5L480.5,186.1L479.8,186.0L479,185.9L478.2,185.9L477.5,186.5L476.8,186.8L476,185.6L475.2,187.1L474.5,186.7L473.8,186.0L473,187.1L472.2,186.2L471.5,186.0L470.8,186.1L470,186.4L469.2,186.1L468.5,186.3L467.8,186.3L467,185.7L466.2,186.2L465.5,186.6L464.8,186.3L464,187.0L463.2,187.0L462.5,186.8L461.8,185.9L461,186.1L460.2,185.8L459.5,187.4L458.8,186.8L458,186.8L457.2,186.3L456.5,186.5L455.8,186.4L455,186.6L454.2,186.5L453.5,186.3L452.8,186.3L452,185.7L451.2,185.6L450.5,186.8L449.8,187.0L449,186.1L448.2,185.7L447.5,186.1L446.8,186.1L446,186.0L445.2,186.2L444.5,185.9L443.8,186.3L443,185.5L442.2,186.6L441.5,186.1L440.8,186.3L440,186.3L439.2,185.7L438.5,186.0L437.8,185.7L437,186.4L436.2,186.0L435.5,186.4L434.8,186.8L434,186.4L433.2,186.1L432.5,186.2L431.8,186.4L431,186.6L430.2,186.0L429.5,185.6L428.8,185.6L428,186.9L427.2,186.2L426.5,187.0L425.8,185.8L425,186.4L424.2,186.0L423.5,186.3L422.8,187.4L422,186.5L421.2,186.5L420.5,185.9L419.8,187.0L419,185.9L418.2,186.2L417.5,185.8L416.8,186.2L416,186.0L415.2,186.4L414.5,187.1L413.8,186.3L413,186.2L412.2,186.1L411.5,186.4L410.8,185.9L410,186.4L409.2,185.8L408.5,186.2L407.8,186.1L407,187.0L406.2,186.5L405.5,186.4L404.8,186.6L404,186.0L403.2,186.3L402.5,186.2L401.8,186.0L401,186.7L400.2,185.7L399.5,186.4L398.8,186.0L398,185.4L397.2,186.5L396.5,186.4L395.8,186.4L395,186.6L394.2,186.3L393.5,186.1L392.8,186.3L392,186.0L391.2,186.2L390.5,185.9L389.8,186.6L389,186.8L388.2,186.0L387.5,185.5L386.8,186.7L386,186.7L385.2,186.1L384.5,186.3L383.8,186.4L383,186.8L382.2,186.1L381.5,186.3L380.8,186.3L380,186.2L379.2,186.6L378.5,185.9L377.8,185.9L377,187.0L376.2,186.2L375.5,186.1L374.8,185.5L374,186.0L373.2,185.9L372.5,187.3L371.8,185.6L371,186.6L370.2,186.1L369.5,186.8L368.8,186.0L368,186.0L367.2,186.5L366.5,186.1L365.8,186.3L365,186.3L364.2,186.4L363.5,186.6L362.8,186.4L362,186.2L361.2,185.6L360.5,186.4L359.8,185.9L359,186.6L358.2,186.4L357.5,186.4L356.8,185.6L356,186.8L355.2,186.4L354.5,186.2L353.8,186.2L353,186.3L352.2,186.4L351.5,186.1L350.8,185.9L350,186.0L349.2,185.9L348.5,186.1L347.8,186.4L347,186.3L346.2,186.0L345.5,186.0L344.8,186.2L344,185.9L343.2,186.5L342.5,185.4L341.8,187.3L341,185.8L340.2,186.6L339.5,186.2L338.8,186.2L338,185.4L337.2,186.4L336.5,186.3L335.8,186.5L335,186.7L334.2,185.9L333.5,186.3L332.8,186.1L332,186.2L331.2,186.6L330.5,186.2L329.8,185.9L329,186.2L328.2,185.9L327.5,186.4L326.8,185.8L326,186.5L325.2,186.3L324.5,186.6L323.8,185.8L323,186.5L322.2,186.3L321.5,186.7L320.8,186.2L320,186.2L319.2,185.9L318.5,186.5L317.8,186.6L317,186.3L316.2,186.5L315.5,186.2L314.8,186.1L314,185.2L313.2,186.3L312.5,186.2L311.8,186.0L311,186.5L310.2,186.1L309.5,185.4L308.8,185.5L308,185.8L307.2,186.1L306.5,186.5L305.8,186.0L305,186.1L304.2,186.3L303.5,186.4L302.8,186.6L302,186.4L301.2,185.9L300.5,186.9L299.8,186.5L299,186.3L298.2,185.8L297.5,186.6L296.8,185.5L296,186.2L295.2,185.9L294.5,186.7L293.8,186.6L293,185.6L292.2,186.0L291.5,186.0L290.8,186.2L290,185.9L289.2,186.2L288.5,186.4L287.8,187.0L287,186.2L286.2,185.8L285.5,186.0L284.8,185.9L284,185.6L283.2,185.9L282.5,186.0L281.8,186.1L281,186.7L280.2,186.5L279.5,186.0L278.8,186.2L278,186.0L277.2,187.1L276.5,185.6L275.8,186.3L275,186.1L274.2,186.1L273.5,186.2L272.8,185.9L272,186.5L271.2,186.4L270.5,186.2L269.8,186.8L269,185.2L268.2,186.3L267.5,186.7L266.8,186.2L266,186.1L265.2,185.7L264.5,186.0L263.8,187.1L263,185.7L262.2,186.6L261.5,185.9L260.8,186.6L260,186.7L259.2,187.0L258.5,186.5L257.8,186.3L257,186.2L256.2,186.3L255.5,186.4L254.8,185.9L254,186.5L253.2,186.1L252.5,186.7L251.8,185.5L251,186.1L250.2,185.7L249.5,186.0L248.8,186.3L248,185.8L247.2,185.9L246.5,186.2L245.8,186.3L245,186.3L244.2,186.8L243.5,185.8L242.8,186.0L242,186.0L241.2,186.4L240.5,186.4L239.8,186.4L239,186.8L238.2,185.7L237.5,186.6L236.8,186.4L236,186.5L235.2,186.1L234.5,185.6L233.8,186.5L233,186.3L232.2,185.4L231.5,186.7L230.8,186.3L230,185.8L229.2,186.0L228.5,186.1L227.8,186.0L227,186.1L226.2,186.1L225.5,186.7L224.8,185.7L224,187.1L223.2,186.2L222.5,185.9L221.8,186.8L221,185.8L220.2,186.4L219.5,185.9L218.8,186.8L218,185.9L217.2,186.1L216.5,186.4L215.8,186.1L215,186.7L214.2,186.1L213.5,186.9L212.8,186.4L212,185.9L211.2,186.4L210.5,186.3L209.8,186.3L209,186.2L208.2,185.7L207.5,186.3L206.8,185.8L206,186.3L205.2,186.0L204.5,186.3L203.8,186.4L203,186.4L202.2,185.9L201.5,186.5L200.8,186.3L200,186.5L199.2,186.6L198.5,185.3L197.8,186.4L197,186.0L196.2,186.2L195.5,186.1L194.8,185.9L194,185.6L193.2,186.7L192.5,186.1L191.8,186.2L191,185.9L190.2,186.3L189.5,186.8L188.8,186.7L188,186.2L187.2,185.8L186.5,186.1L185.8,186.4L185,186.0L184.2,185.8L183.5,185.9L182.8,186.1L182,185.9L181.2,186.4L180.5,186.8L179.8,185.8L179,186.6L178.2,186.4L177.5,185.7L176.8,186.1L176,186.3L175.2,186.2L174.5,186.8L173.8,186.5L173,186.3L172.2,186.8L171.5,185.7L170.8,186.7L170,186.1L169.2,185.8L168.5,186.4L167.8,186.5L167,186.2L166.2,186.0L165.5,186.4L164.8,186.8L164,186.0L163.2,187.2L162.5,186.0L161.8,186.4L161,185.4L160.2,185.7L159.5,186.2L158.8,186.7L158,186.4L157.2,186.1L156.5,186.6L155.8,186.0L155,186.1L154.2,186.8L153.5,186.9L152.8,186.0L152,186.8L151.2,187.0L150.5,186.3L149.8,186.0L149,186.6L148.2,185.6L147.5,185.6L146.8,186.3L146,186.3L145.2,186.4L144.5,186.2L143.8,186.1L143,186.5L142.2,186.4L141.5,187.0L140.8,186.9L140,186.7L139.2,186.6L138.5,186.0L137.8,186.4L137,186.8L136.2,186.7L135.5,186.8L134.8,185.9L134,186.3L133.2,186.0L132.5,185.8L131.8,186.2L131,186.0L130.2,186.6L129.5,186.8L128.8,186.6L128,186.5L127.2,186.2L126.5,186.1L125.8,185.7L125,185.8L124.2,187.1L123.5,186.3L122.8,185.4L122,186.3L121.2,186.6L120.5,186.7L119.8,186.2L119,186.7L118.2,186.1L117.5,186.1L116.8,186.4L116,186.3L115.2,186.3L114.5,186.9L113.8,186.1L113,185.9L112.2,187.1L111.5,186.4L110.8,187.1L110,186.2L109.2,186.1L108.5,186.2L107.8,186.3L107,187.2L106.2,187.1L105.5,186.2L104.8,185.9L104,186.1L103.2,186.4L102.5,186.1L101.8,186.3L101,186.7L100.2,186.5L99.5,186.1L98.8,186.3L98,186.4L97.2,187.1L96.5,186.4L95.8,187.0L95,185.9L94.2,186.2L93.5,185.8L92.8,186.4L92,186.2L91.2,185.9L90.5,186.5L89.8,185.6L89,186.0L88.2,185.6L87.5,185.9L86.8,186.5L86,186.7L85.2,186.6L84.5,186.1L83.8,187.1L83,186.5L82.2,185.9L81.5,186.4L80.8,186.0L80,185.9L79.2,186.8L78.5,185.9L77.8,185.6L77,186.5L76.2,186.3L75.5,186.2L74.8,186.5L74,186.1L73.2,185.7L72.5,186.2L71.8,186.4L71,185.9L70.2,186.2L69.5,186.3L68.8,186.8L68,186.2L67.2,186.1L66.5,186.0L65.8,186.6L65,185.8L64.2,186.2L63.5,186.9L62.8,185.7L62,186.5L61.2,187.0L60.5,186.7L59.8,185.9L59,186.5Z"/>
<path fill="#ff94c8" opacity="0.35" d="M59,178.8L60.5,179.0L62,179.8L63.5,180.0L65,179.3L66.5,179.4L68,179.7L69.5,179.2L71,179.8L72.5,180.0L74,179.7L75.5,180.1L77,179.7L78.5,179.1L80,180.3L81.5,180.2L83,179.9L84.5,180.4L86,178.9L87.5,179.0L89,179.2L90.5,179.3L92,178.7L93.5,179.3L95,179.7L96.5,180.4L98,180.2L99.5,178.9L101,179.7L102.5,179.5L104,179.4L105.5,179.6L107,179.5L108.5,179.1L110,179.5L111.5,178.8L113,179.5L114.5,179.3L116,179.6L117.5,179.7L119,179.6L120.5,178.4L122,179.6L123.5,179.7L125,179.6L126.5,179.2L128,179.6L129.5,179.9L131,179.3L132.5,180.3L134,179.2L135.5,179.3L137,179.3L138.5,179.2L140,179.5L141.5,179.7L143,179.4L144.5,179.8L146,180.2L147.5,179.0L149,178.7L150.5,179.3L152,179.3L153.5,179.6L155,178.9L156.5,179.5L158,179.8L159.5,179.7L161,179.0L162.5,178.8L164,179.7L165.5,178.9L167,179.8L168.5,179.2L170,179.6L171.5,179.7L173,180.1L174.5,179.4L176,178.4L177.5,180.2L179,179.4L180.5,179.4L182,179.7L183.5,179.1L185,179.6L186.5,179.8L188,179.0L189.5,179.4L191,179.8L192.5,179.3L194,179.2L195.5,179.9L197,179.8L198.5,180.4L200,179.2L201.5,179.4L203,179.1L204.5,180.4L206,180.0L207.5,180.0L209,179.3L210.5,180.3L212,179.9L213.5,179.2L215,179.9L216.5,179.7L218,180.4L219.5,179.2L221,179.3L222.5,179.9L224,179.6L225.5,179.7L227,179.4L228.5,179.9L230,179.8L231.5,178.9L233,179.8L234.5,180.3L236,179.9L237.5,180.2L239,179.2L240.5,179.9L242,179.1L243.5,179.7L245,178.8L246.5,179.6L248,180.4L249.5,179.1L251,180.2L252.5,180.3L254,179.3L255.5,179.2L257,180.1L258.5,180.1L260,179.1L261.5,179.0L263,179.4L264.5,179.1L266,179.1L267.5,180.3L269,178.9L270.5,180.0L272,180.0L273.5,179.2L275,178.7L276.5,179.8L278,180.0L279.5,179.4L281,178.8L282.5,179.4L284,179.5L285.5,179.8L287,178.9L288.5,180.1L290,178.6L291.5,180.1L293,179.6L294.5,179.7L296,179.9L297.5,179.9L299,180.8L300.5,179.9L302,180.0L303.5,179.7L305,179.7L306.5,179.9L308,179.6L309.5,180.1L311,179.4L312.5,180.1L314,180.2L315.5,179.2L317,179.4L318.5,180.0L320,180.4L321.5,179.8L323,180.1L324.5,180.3L326,179.1L327.5,179.5L329,180.1L330.5,180.4L332,179.1L333.5,180.9L335,179.8L336.5,179.7L338,178.8L339.5,179.6L341,180.0L342.5,179.5L344,178.9L345.5,178.7L347,179.6L348.5,179.7L350,179.2L351.5,179.2L353,179.7L354.5,178.8L356,178.8L357.5,179.5L359,179.9L360.5,179.4L362,179.1L363.5,179.3L365,178.7L366.5,179.7L368,179.6L369.5,179.1L371,179.0L372.5,180.3L374,180.3L375.5,180.0L377,179.9L378.5,180.0L380,179.6L381.5,179.7L383,178.6L384.5,179.9L386,179.1L387.5,178.6L389,179.6L390.5,179.9L392,180.3L393.5,179.6L395,179.4L396.5,179.9L398,180.3L399.5,179.4L401,179.1L402.5,178.6L404,178.9L405.5,180.0L407,179.8L408.5,179.3L410,180.1L411.5,178.9L413,179.4L414.5,180.1L416,179.7L417.5,180.0L419,179.0L420.5,179.6L422,180.0L423.5,179.5L425,180.2L426.5,179.5L428,179.5L429.5,179.4L431,178.7L432.5,179.7L434,180.0L435.5,179.1L437,179.8L438.5,179.4L440,179.3L441.5,179.5L443,179.6L444.5,178.5L446,180.1L447.5,180.2L449,179.7L450.5,179.0L452,180.2L453.5,179.4L455,179.8L456.5,179.1L458,180.0L459.5,179.8L461,179.5L462.5,179.1L464,180.1L465.5,178.9L467,178.7L468.5,179.2L470,178.6L471.5,179.0L473,180.3L474.5,179.8L476,179.4L477.5,179.8L479,180.6L480.5,179.8L482,179.5L483.5,179.6L485,179.5L486.5,180.0L488,179.7L489.5,179.6L491,180.1L492.5,179.7L494,179.1L495.5,179.8L497,180.0L498.5,179.9L500,180.2L501.5,178.9L503,178.8L504.5,179.1L506,179.1L507.5,179.3L509,180.3L510.5,180.0L512,179.5L513.5,179.8L515,179.7L516.5,179.1L518,179.2L519.5,178.6L521,179.5L522.5,179.2L524,180.2L525.5,180.3L527,178.5L528.5,180.1L530,179.1L531.5,180.7L533,180.0L534.5,179.8L536,180.2L537.5,179.4L539,179.1L540.5,178.9L542,179.5L543.5,179.7L545,179.1L546.5,179.7L548,179.0L549.5,180.3L551,179.7L552.5,179.1L554,178.8L555.5,180.1L557,178.5L558.5,180.1L560,179.6L561.5,179.4L563,179.7L564.5,179.4L566,179.0L567.5,179.7L569,179.8L570.5,180.1L572,179.9L573.5,179.9L575,179.4L576.5,179.2L578,179.3L579.5,180.5L581,179.4L582.5,178.8L584,179.7L585.5,179.6L587,180.1L588.5,178.9L590,179.4L591.5,179.6L593,178.9L594.5,180.0L596,179.2L597.5,179.4L599,179.6L600.5,179.3L602,179.0L603.5,179.9L605,179.1L606.5,179.4L608,179.4L609.5,179.4L611,179.5L612.5,180.2L614,179.9L615.5,177.9L617,178.7L618.5,178.8L620,179.9L621.5,180.2L623,179.6L624.5,180.1L626,179.3L627.5,179.7L629,179.4L630.5,179.5L632,179.9L633.5,179.8L635,179.6L636.5,178.9L638,179.6L639.5,179.6L641,178.8L642.5,179.0L644,180.0L645.5,179.9L647,179.3L648.5,179.1L650,179.3L651.5,179.8L653,180.3L654.5,179.1L656,180.5L657.5,179.4L659,178.8L660.5,180.1L662,179.7L663.5,179.5L665,179.4L666.5,180.0L668,179.3L669.5,179.1L671,179.1L672.5,179.5L674,179.3L675.5,179.0L677,179.4L678.5,180.1L680,179.6L681.5,178.3L683,179.6L684.5,180.0L686,180.2L687.5,179.4L689,179.6L690.5,178.8L692,179.7L693.5,181.1L695,180.1L696.5,180.0L698,179.5L699.5,179.0L701,179.7L702.5,179.9L704,179.7L705.5,179.7L707,180.1L708.5,179.8L710,179.1L711.5,178.9L713,179.1L714.5,180.0L716,179.0L717.5,179.7L719,179.5L720.5,179.1L722,180.7L723.5,179.7L725,180.0L726.5,179.8L728,180.0L729.5,180.4L731,179.8L732.5,179.1L734,179.6L735.5,179.5L737,179.7L738.5,179.6L740,179.4L741.5,180.1L743,179.3L744.5,179.6L746,179.6L747.5,179.6L749,179.4L750.5,179.6L752,179.3L753.5,179.7L755,180.1L756.5,179.6L758,179.8L759.5,180.0L761,179.7L762.5,179.4L764,180.1L765.5,179.7L767,179.3L768.5,179.8L770,179.2L771.5,180.0L773,179.4L774.5,179.1L776,178.8L777.5,180.2L779,179.6L780.5,179.8L782,179.9L783.5,180.0L785,180.2L786.5,179.8L788,179.6L789.5,179.5L789.5,184.1L788,184.1L786.5,183.5L785,184.0L783.5,183.8L782,184.5L780.5,183.6L779,184.6L777.5,183.6L776,183.9L774.5,184.1L773,184.0L771.5,184.2L770,184.0L768.5,183.7L767,184.4L765.5,183.8L764,183.7L762.5,184.3L761,183.9L759.5,184.5L758,183.8L756.5,184.2L755,184.4L753.5,183.7L752,184.0L750.5,184.4L749,184.0L747.5,183.6L746,183.7L744.5,184.6L743,183.4L741.5,184.0L740,184.0L738.5,184.1L737,183.6L735.5,184.7L734,185.0L732.5,183.6L731,184.5L729.5,183.3L728,184.6L726.5,184.4L725,184.4L723.5,184.0L722,184.5L720.5,183.9L719,183.5L717.5,184.8L716,183.9L714.5,184.6L713,185.0L711.5,183.7L710,183.7L708.5,185.3L707,184.1L705.5,184.4L704,184.6L702.5,184.7L701,184.2L699.5,184.7L698,184.5L696.5,184.1L695,184.2L693.5,184.5L692,183.4L690.5,184.4L689,184.2L687.5,184.1L686,184.5L684.5,184.0L683,183.9L681.5,184.6L680,184.0L678.5,184.6L677,183.8L675.5,184.3L674,184.2L672.5,183.2L671,184.3L669.5,183.9L668,183.7L666.5,183.9L665,183.8L663.5,183.5L662,184.5L660.5,184.2L659,184.2L657.5,183.8L656,184.0L654.5,184.2L653,183.6L651.5,183.9L650,184.7L648.5,184.0L647,184.4L645.5,184.7L644,184.2L642.5,183.4L641,184.2L639.5,184.2L638,183.6L636.5,184.9L635,184.0L633.5,184.2L632,183.7L630.5,184.0L629,184.1L627.5,184.3L626,183.9L624.5,183.8L623,184.2L621.5,183.7L620,183.4L618.5,184.1L617,184.0L615.5,184.2L614,183.9L612.5,184.4L611,183.8L609.5,184.2L608,184.0L606.5,183.3L605,184.4L603.5,184.4L602,184.4L600.5,183.1L599,184.1L597.5,183.8L596,183.8L594.5,184.7L593,184.1L591.5,184.1L590,184.0L588.5,184.7L587,184.3L585.5,184.4L584,184.0L582.5,183.6L581,184.5L579.5,184.5L578,184.4L576.5,183.4L575,183.6L573.5,184.2L572,182.8L570.5,184.3L569,183.9L567.5,183.8L566,184.1L564.5,183.6L563,183.8L561.5,184.4L560,185.0L558.5,184.1L557,183.6L555.5,184.3L554,183.6L552.5,183.8L551,184.1L549.5,184.5L548,183.7L546.5,183.5L545,184.1L543.5,183.9L542,183.8L540.5,183.3L539,184.2L537.5,184.0L536,185.1L534.5,183.3L533,184.1L531.5,183.8L530,184.6L528.5,184.4L527,184.7L525.5,184.4L524,184.1L522.5,185.1L521,183.6L519.5,183.9L518,183.7L516.5,183.6L515,184.9L513.5,182.9L512,183.8L510.5,182.9L509,184.7L507.5,183.6L506,183.3L504.5,183.5L503,183.8L501.5,183.8L500,184.2L498.5,184.6L497,184.1L495.5,184.4L494,184.4L492.5,183.8L491,183.5L489.5,184.2L488,183.9L486.5,183.9L485,183.9L483.5,183.3L482,183.8L480.5,184.3L479,184.4L477.5,183.4L476,183.3L474.5,184.0L473,184.6L471.5,183.7L470,183.5L468.5,184.5L467,184.3L465.5,184.0L464,183.3L462.5,183.8L461,183.9L459.5,184.0L458,183.7L456.5,184.5L455,183.6L453.5,183.4L452,183.9L450.5,183.7L449,183.5L447.5,183.5L446,184.2L444.5,184.2L443,184.1L441.5,184.2L440,183.9L438.5,183.3L437,183.5L435.5,184.3L434,183.8L432.5,184.3L431,184.9L429.5,183.9L428,183.8L426.5,183.5L425,184.1L423.5,184.0L422,183.9L420.5,183.5L419,184.6L417.5,183.8L416,184.3L414.5,183.4L413,183.2L411.5,184.6L410,182.9L408.5,183.4L407,183.1L405.5,184.3L404,184.6L402.5,185.0L401,184.3L399.5,184.1L398,184.7L396.5,184.5L395,183.5L393.5,184.1L392,184.4L390.5,182.7L389,183.9L387.5,184.3L386,184.3L384.5,184.0L383,183.4L381.5,184.3L380,183.5L378.5,182.6L377,182.8L375.5,184.5L374,183.6L372.5,185.2L371,182.9L369.5,184.5L368,183.7L366.5,184.5L365,183.9L363.5,184.4L362,184.7L360.5,184.9L359,184.8L357.5,183.6L356,183.5L354.5,184.6L353,183.7L351.5,184.5L350,183.7L348.5,183.4L347,184.3L345.5,183.3L344,183.6L342.5,184.0L341,184.3L339.5,183.4L338,184.4L336.5,184.2L335,183.7L333.5,184.2L332,184.4L330.5,184.6L329,182.9L327.5,183.2L326,184.2L324.5,183.6L323,185.0L321.5,184.1L320,183.6L318.5,185.1L317,184.0L315.5,183.8L314,184.2L312.5,184.5L311,183.3L309.5,184.4L308,183.3L306.5,183.7L305,184.1L303.5,184.6L302,184.4L300.5,184.0L299,184.4L297.5,183.1L296,183.6L294.5,184.3L293,184.4L291.5,183.5L290,183.4L288.5,183.6L287,183.5L285.5,183.7L284,183.9L282.5,183.6L281,183.8L279.5,183.4L278,184.5L276.5,183.7L275,184.7L273.5,183.2L272,183.4L270.5,184.2L269,184.7L267.5,184.4L266,183.3L264.5,183.8L263,184.1L261.5,184.5L260,184.3L258.5,183.6L257,184.5L255.5,184.3L254,184.0L252.5,183.6L251,184.6L249.5,183.2L248,184.2L246.5,184.9L245,184.1L243.5,183.8L242,183.6L240.5,183.8L239,183.9L237.5,184.6L236,184.1L234.5,184.2L233,183.8L231.5,184.4L230,183.4L228.5,183.3L227,184.2L225.5,184.4L224,183.7L222.5,184.1L221,184.4L219.5,184.5L218,184.7L216.5,184.2L215,184.5L213.5,184.7L212,184.7L210.5,184.6L209,183.9L207.5,183.9L206,183.9L204.5,183.6L203,183.4L201.5,184.2L200,184.0L198.5,183.1L197,183.1L195.5,183.7L194,184.0L192.5,184.0L191,183.9L189.5,184.4L188,184.2L186.5,183.7L185,184.4L183.5,183.7L182,183.8L180.5,184.1L179,183.9L177.5,183.7L176,183.7L174.5,184.0L173,184.0L171.5,183.3L170,184.5L168.5,183.0L167,183.7L165.5,184.0L164,183.8L162.5,184.7L161,183.6L159.5,182.8L158,183.7L156.5,184.0L155,183.8L153.5,184.3L152,183.3L150.5,184.6L149,184.1L147.5,183.8L146,184.1L144.5,183.3L143,184.6L141.5,184.3L140,184.9L138.5,183.4L137,184.2L135.5,183.4L134,184.2L132.5,183.9L131,184.1L129.5,183.8L128,184.5L126.5,184.0L125,184.5L123.5,184.0L122,184.4L120.5,185.0L119,183.7L117.5,184.7L116,183.8L114.5,183.3L113,183.5L111.5,183.6L110,184.6L108.5,184.0L107,183.3L105.5,184.5L104,183.7L102.5,184.8L101,184.2L99.5,183.9L98,184.3L96.5,184.5L95,183.4L93.5,183.3L92,184.6L90.5,184.4L89,183.9L87.5,183.0L86,183.8L84.5,183.9L83,183.8L81.5,183.8L80,183.9L78.5,183.8L77,184.5L75.5,184.1L74,183.8L72.5,183.8L71,184.5L69.5,183.8L68,184.5L66.5,183.5L65,183.9L63.5,184.8L62,184.6L60.5,184.3L59,183.7Z"/>
<path fill="#ff94c8" opacity="0.6" d="M59,181.3L61,180.9L63,180.9L65,180.6L67,180.8L69,180.4L71,181.0L73,180.7L75,180.9L77,181.8L79,180.0L81,181.0L83,180.3L85,180.6L87,180.6L89,181.0L91,180.3L93,180.4L95,181.0L97,180.6L99,180.9L101,180.6L103,180.4L105,181.1L107,181.3L109,180.3L111,180.6L113,181.0L115,181.0L117,181.3L119,181.2L121,181.0L123,180.6L125,181.0L127,180.7L129,180.4L131,180.5L133,180.5L135,180.5L137,180.8L139,180.6L141,180.9L143,180.3L145,181.3L147,180.9L149,181.1L151,181.1L153,180.6L155,180.5L157,181.1L159,181.0L161,180.9L163,181.2L165,180.8L167,180.1L169,180.6L171,180.6L173,180.8L175,180.5L177,180.7L179,181.0L181,180.3L183,181.1L185,181.0L187,180.5L189,180.8L191,179.8L193,181.4L195,180.9L197,181.1L199,180.8L201,180.9L203,181.3L205,180.5L207,180.3L209,181.5L211,181.1L213,181.0L215,181.2L217,180.9L219,180.8L221,180.5L223,181.1L225,180.9L227,181.1L229,180.9L231,180.6L233,180.5L235,181.2L237,180.7L239,180.8L241,180.8L243,181.0L245,180.4L247,180.5L249,180.4L251,180.6L253,181.4L255,181.2L257,180.8L259,181.3L261,180.3L263,180.0L265,180.9L267,181.4L269,181.1L271,181.1L273,180.9L275,180.9L277,180.4L279,180.5L281,180.8L283,180.7L285,181.1L287,181.2L289,181.3L291,181.0L293,180.2L295,179.9L297,180.7L299,181.1L301,180.1L303,180.1L305,181.0L307,180.4L309,181.0L311,181.1L313,180.6L315,180.5L317,180.6L319,180.6L321,181.1L323,181.2L325,180.8L327,180.8L329,180.8L331,180.5L333,180.7L335,180.5L337,181.0L339,180.8L341,180.9L343,181.2L345,180.2L347,181.1L349,180.8L351,180.8L353,180.5L355,181.1L357,180.7L359,181.1L361,180.6L363,180.7L365,180.3L367,180.5L369,180.9L371,181.6L373,180.8L375,181.2L377,180.7L379,180.2L381,180.3L383,180.8L385,180.8L387,180.8L389,180.7L391,180.8L393,181.1L395,180.4L397,180.7L399,180.1L401,179.7L403,180.7L405,181.5L407,180.2L409,180.9L411,180.6L413,181.2L415,180.8L417,180.6L419,181.2L421,181.1L423,180.6L425,180.6L427,180.8L429,180.7L431,180.9L433,180.8L435,180.7L437,180.4L439,180.8L441,181.2L443,180.6L445,180.3L447,181.0L449,180.3L451,181.4L453,180.1L455,181.2L457,181.1L459,180.2L461,180.5L463,180.6L465,181.1L467,181.3L469,180.8L471,181.2L473,181.0L475,181.2L477,180.7L479,180.9L481,180.4L483,180.5L485,180.9L487,180.7L489,180.9L491,180.6L493,180.6L495,180.8L497,180.9L499,181.1L501,180.7L503,181.2L505,181.3L507,180.3L509,180.8L511,180.9L513,181.1L515,180.8L517,181.2L519,180.5L521,181.1L523,180.5L525,181.2L527,180.5L529,180.7L531,180.6L533,180.8L535,180.7L537,180.7L539,180.3L541,180.2L543,181.0L545,181.3L547,180.9L549,180.9L551,180.6L553,181.2L555,180.8L557,180.3L559,180.1L561,181.4L563,179.9L565,180.5L567,181.8L569,180.6L571,180.6L573,180.7L575,180.5L577,181.2L579,180.8L581,180.7L583,181.5L585,180.2L587,180.6L589,180.9L591,181.1L593,181.1L595,180.9L597,181.5L599,180.8L601,181.0L603,181.4L605,180.7L607,180.8L609,180.7L611,180.4L613,181.1L615,180.9L617,180.4L619,180.6L621,180.7L623,181.3L625,180.5L627,181.2L629,180.8L631,180.8L633,181.0L635,180.6L637,180.6L639,179.8L641,180.8L643,181.2L645,180.6L647,180.6L649,181.6L651,181.3L653,180.8L655,180.7L657,180.5L659,180.6L661,180.9L663,180.4L665,181.0L667,180.8L669,180.2L671,181.2L673,180.4L675,179.9L677,181.0L679,180.8L681,180.7L683,181.0L685,181.3L687,180.7L689,181.0L691,180.6L693,180.6L695,181.1L697,180.6L699,180.7L701,180.8L703,180.7L705,180.6L707,180.5L709,180.9L711,180.4L713,180.6L715,180.5L717,180.4L719,181.0L721,180.9L723,180.4L725,180.7L727,181.2L729,180.9L731,180.6L733,180.8L735,180.6L737,181.0L739,180.6L741,180.2L743,180.0L745,180.7L747,181.3L749,180.9L751,181.4L753,180.8L755,180.3L757,180.6L759,180.9L761,180.9L763,180.3L765,181.0L767,180.8L769,180.5L771,180.9L773,180.8L775,181.0L777,180.7L779,180.3L781,180.3L783,181.2L785,180.9L787,181.2L789,180.6L789,183.1L787,182.6L785,183.0L783,183.0L781,182.3L779,183.1L777,182.9L775,183.2L773,182.5L771,182.3L769,182.6L767,182.4L765,183.1L763,183.2L761,182.9L759,182.7L757,182.2L755,182.4L753,183.0L751,183.3L749,182.9L747,182.8L745,183.1L743,182.5L741,183.1L739,182.8L737,182.9L735,182.7L733,183.3L731,183.5L729,183.2L727,182.6L725,182.7L723,183.0L721,183.0L719,182.6L717,183.3L715,182.9L713,182.5L711,182.6L709,182.8L707,182.8L705,182.6L703,182.8L701,182.7L699,182.9L697,183.0L695,182.7L693,182.9L691,183.1L689,182.5L687,182.7L685,182.6L683,182.7L681,183.2L679,182.7L677,182.9L675,183.0L673,182.8L671,183.1L669,182.3L667,183.0L665,182.9L663,183.0L661,183.0L659,182.4L657,182.4L655,182.5L653,183.1L651,182.5L649,182.7L647,182.2L645,183.1L643,182.9L641,182.4L639,182.6L637,182.5L635,181.9L633,182.8L631,182.6L629,182.2L627,182.5L625,183.3L623,183.2L621,182.5L619,182.3L617,182.7L615,182.7L613,182.6L611,182.9L609,182.7L607,183.4L605,182.4L603,182.4L601,183.2L599,182.8L597,182.9L595,183.2L593,183.0L591,183.1L589,182.5L587,183.2L585,182.7L583,183.7L581,182.7L579,182.4L577,182.5L575,182.3L573,183.1L571,183.0L569,183.4L567,182.6L565,183.3L563,182.5L561,182.7L559,182.9L557,183.5L555,183.1L553,182.6L551,182.4L549,183.0L547,182.7L545,182.0L543,183.1L541,182.5L539,182.0L537,182.9L535,182.9L533,183.2L531,183.0L529,182.0L527,181.9L525,183.3L523,182.9L521,183.3L519,182.3L517,183.8L515,182.6L513,183.1L511,182.4L509,183.1L507,183.2L505,183.0L503,183.2L501,183.0L499,183.4L497,182.8L495,182.9L493,183.0L491,183.1L489,183.2L487,182.7L485,182.8L483,183.3L481,183.0L479,183.1L477,183.0L475,183.1L473,183.0L471,183.2L469,182.7L467,182.7L465,182.7L463,182.7L461,182.8L459,182.7L457,182.8L455,183.2L453,182.1L451,183.0L449,183.1L447,183.2L445,183.0L443,182.9L441,182.0L439,182.7L437,183.2L435,182.4L433,183.4L431,183.6L429,183.5L427,182.9L425,182.4L423,182.8L421,182.6L419,182.4L417,183.0L415,182.8L413,182.8L411,183.0L409,182.6L407,183.4L405,182.5L403,183.2L401,183.1L399,182.9L397,182.7L395,182.5L393,182.8L391,182.4L389,182.7L387,182.4L385,182.4L383,181.6L381,182.1L379,182.7L377,181.7L375,182.7L373,183.1L371,182.7L369,183.5L367,183.1L365,182.2L363,183.0L361,182.8L359,182.9L357,182.6L355,182.6L353,183.1L351,183.1L349,182.9L347,182.5L345,183.2L343,183.1L341,182.5L339,182.7L337,182.6L335,183.5L333,182.7L331,182.6L329,182.9L327,182.8L325,181.9L323,182.7L321,183.0L319,182.7L317,182.8L315,183.2L313,183.3L311,182.8L309,183.1L307,182.5L305,182.7L303,183.4L301,183.5L299,183.3L297,182.7L295,183.2L293,182.7L291,182.6L289,182.9L287,183.6L285,183.2L283,182.7L281,183.1L279,182.8L277,182.9L275,183.1L273,183.0L271,182.0L269,182.8L267,182.6L265,182.7L263,183.1L261,182.8L259,183.3L257,182.9L255,183.1L253,183.1L251,183.4L249,182.8L247,182.9L245,182.6L243,183.5L241,183.0L239,182.0L237,183.1L235,182.6L233,182.7L231,182.6L229,183.2L227,183.2L225,182.9L223,183.0L221,182.8L219,182.8L217,183.3L215,182.9L213,183.2L211,183.2L209,182.8L207,182.2L205,183.0L203,182.9L201,183.0L199,183.2L197,182.6L195,182.3L193,182.5L191,183.0L189,183.0L187,183.0L185,182.7L183,182.0L181,182.9L179,182.5L177,182.4L175,182.2L173,182.1L171,183.4L169,183.1L167,182.9L165,183.0L163,182.7L161,182.7L159,183.0L157,182.9L155,183.3L153,183.0L151,182.5L149,182.9L147,183.3L145,183.3L143,183.1L141,182.4L139,182.7L137,182.8L135,182.7L133,182.9L131,182.6L129,183.1L127,182.3L125,182.7L123,182.6L121,182.9L119,182.7L117,182.7L115,182.6L113,182.8L111,183.1L109,182.7L107,182.1L105,183.0L103,182.7L101,182.6L99,182.8L97,182.2L95,182.0L93,182.4L91,183.4L89,182.9L87,183.1L85,182.5L83,183.6L81,182.7L79,183.0L77,182.7L75,182.7L73,182.9L71,183.0L69,182.4L67,182.7L65,182.6L63,182.9L61,183.1L59,182.9Z"/>
<path fill="#a8a800" d="M59,217.0L59.8,218.7L60.5,219.1L61.2,218.4L62,218.4L62.8,219.2L63.5,219.5L64.2,219.0L65,218.6L65.8,218.8L66.5,219.1L67.2,219.4L68,218.5L68.8,219.1L69.5,218.8L70.2,219.1L71,219.4L71.8,218.9L72.5,218.3L73.2,217.5L74,218.9L74.8,218.9L75.5,218.6L76.2,218.8L77,217.4L77.8,217.9L78.5,218.5L79.2,218.6L80,218.6L80.8,217.3L81.5,219.1L82.2,218.7L83,219.4L83.8,218.9L84.5,218.7L85.2,217.8L86,218.7L86.8,218.3L87.5,217.4L88.2,217.1L89,217.6L89.8,219.4L90.5,217.9L91.2,217.0L92,218.6L92.8,218.6L93.5,218.4L94.2,218.8L95,218.7L95.8,217.9L96.5,218.8L97.2,219.7L98,219.3L98.8,218.3L99.5,218.2L100.2,219.0L101,218.2L101.8,218.3L102.5,218.4L103.2,218.1L104,218.9L104.8,218.5L105.5,217.5L106.2,218.6L107,218.6L107.8,219.1L108.5,218.7L109.2,218.0L110,217.7L110.8,218.9L111.5,218.5L112.2,218.2L113,218.7L113.8,218.7L114.5,218.0L115.2,219.0L116,218.0L116.8,218.2L117.5,218.9L118.2,218.0L119,219.0L119.8,218.4L120.5,218.9L121.2,217.4L122,218.8L122.8,218.6L123.5,219.0L124.2,218.4L125,218.3L125.8,219.4L126.5,219.5L127.2,218.7L128,219.1L128.8,218.6L129.5,219.6L130.2,218.6L131,218.2L131.8,218.4L132.5,218.0L133.2,218.5L134,218.7L134.8,218.0L135.5,219.2L136.2,219.0L137,218.9L137.8,218.7L138.5,218.8L139.2,218.4L140,218.8L140.8,218.9L141.5,219.0L142.2,219.1L143,218.5L143.8,218.2L144.5,218.3L145.2,218.4L146,218.0L146.8,219.2L147.5,218.5L148.2,219.2L149,219.6L149.8,218.2L150.5,218.8L151.2,219.1L152,218.8L152.8,218.8L153.5,218.7L154.2,218.8L155,218.6L155.8,218.5L156.5,218.6L157.2,218.5L158,219.0L158.8,218.7L159.5,218.3L160.2,218.7L161,219.2L161.8,219.4L162.5,219.1L163.2,219.0L164,217.9L164.8,218.8L165.5,218.9L166.2,218.7L167,218.4L167.8,217.2L168.5,219.0L169.2,218.6L170,219.2L170.8,218.9L171.5,217.4L172.2,218.4L173,217.8L173.8,217.4L174.5,217.7L175.2,219.2L176,218.9L176.8,218.5L177.5,218.5L178.2,218.9L179,218.6L179.8,217.3L180.5,218.6L181.2,217.9L182,218.1L182.8,218.0L183.5,218.0L184.2,217.6L185,218.9L185.8,219.4L186.5,218.0L187.2,218.9L188,218.8L188.8,218.8L189.5,219.5L190.2,218.4L191,218.4L191.8,217.9L192.5,219.3L193.2,219.0L194,218.9L194.8,218.9L195.5,218.5L196.2,219.2L197,219.3L197.8,218.1L198.5,218.6L199.2,218.2L200,219.0L200.8,219.0L201.5,217.8L202.2,219.1L203,219.2L203.8,218.6L204.5,218.8L205.2,217.2L206,218.6L206.8,219.2L207.5,218.8L208.2,218.2L209,218.8L209.8,218.7L210.5,219.3L211.2,218.0L212,219.1L212.8,218.2L213.5,217.6L214.2,218.6L215,219.0L215.8,219.0L216.5,218.5L217.2,218.5L218,219.0L218.8,219.0L219.5,218.6L220.2,219.2L221,218.5L221.8,219.3L222.5,218.9L223.2,218.3L224,218.9L224.8,219.2L225.5,217.8L226.2,218.6L227,217.4L227.8,218.4L228.5,218.7L229.2,218.7L230,219.2L230.8,219.0L231.5,219.1L232.2,218.9L233,218.8L233.8,217.4L234.5,219.1L235.2,218.8L236,218.1L236.8,218.5L237.5,218.7L238.2,218.5L239,219.1L239.8,218.3L240.5,217.6L241.2,218.6L242,219.1L242.8,218.6L243.5,218.2L244.2,218.3L245,217.3L245.8,218.5L246.5,219.1L247.2,218.9L248,218.3L248.8,218.7L249.5,219.6L250.2,218.3L251,218.2L251.8,218.4L252.5,219.0L253.2,218.6L254,218.9L254.8,217.3L255.5,219.1L256.2,219.5L257,219.2L257.8,217.9L258.5,218.8L259.2,218.0L260,218.0L260.8,218.4L261.5,219.0L262.2,218.7L263,218.6L263.8,218.5L264.5,218.4L265.2,218.3L266,218.5L266.8,218.4L267.5,219.3L268.2,218.1L269,218.9L269.8,218.6L270.5,218.3L271.2,219.1L272,218.8L272.8,218.6L273.5,219.2L274.2,219.2L275,218.7L275.8,219.2L276.5,219.2L277.2,217.6L278,218.8L278.8,219.2L279.5,218.5L280.2,219.0L281,218.5L281.8,218.7L282.5,218.7L283.2,218.2L284,219.2L284.8,218.9L285.5,217.7L286.2,219.5L287,218.6L287.8,219.3L288.5,218.3L289.2,218.1L290,218.4L290.8,218.0L291.5,219.3L292.2,218.6L293,218.3L293.8,218.7L294.5,218.9L295.2,219.1L296,218.4L296.8,217.9L297.5,218.6L298.2,218.4L299,218.0L299.8,218.5L300.5,218.9L301.2,218.0L302,218.7L302.8,218.4L303.5,218.2L304.2,218.5L305,219.0L305.8,218.9L306.5,218.7L307.2,218.8L308,219.0L308.8,217.9L309.5,218.5L310.2,218.6L311,219.2L311.8,218.7L312.5,217.6L313.2,219.2L314,217.7L314.8,218.9L315.5,218.3L316.2,219.0L317,218.8L317.8,219.2L318.5,218.3L319.2,218.3L320,219.1L320.8,219.3L321.5,219.0L322.2,219.3L323,218.9L323.8,219.0L324.5,219.4L325.2,218.4L326,219.1L326.8,219.1L327.5,218.8L328.2,218.7L329,218.4L329.8,217.5L330.5,217.9L331.2,219.2L332,218.8L332.8,218.5L333.5,219.0L334.2,218.8L335,218.5L335.8,218.7L336.5,219.1L337.2,218.8L338,218.1L338.8,219.3L339.5,219.2L340.2,219.0L341,218.3L341.8,218.8L342.5,218.4L343.2,219.0L344,219.2L344.8,218.1L345.5,219.1L346.2,218.8L347,218.9L347.8,219.2L348.5,218.1L349.2,218.5L350,218.8L350.8,218.9L351.5,218.8L352.2,217.9L353,219.1L353.8,218.9L354.5,217.4L355.2,219.0L356,218.7L356.8,218.9L357.5,218.5L358.2,217.9L359,219.0L359.8,218.4L360.5,218.7L361.2,219.5L362,218.7L362.8,219.2L363.5,218.3L364.2,219.5L365,219.0L365.8,218.6L366.5,218.4L367.2,219.4L368,218.4L368.8,217.6L369.5,218.6L370.2,219.0L371,218.0L371.8,218.5L372.5,218.4L373.2,219.5L374,217.5L374.8,217.9L375.5,218.6L376.2,218.8L377,218.9L377.8,219.3L378.5,218.0L379.2,218.6L380,217.8L380.8,218.6L381.5,218.6L382.2,218.6L383,218.7L383.8,219.8L384.5,218.9L385.2,218.8L386,217.8L386.8,218.7L387.5,218.4L388.2,219.1L389,218.6L389.8,218.7L390.5,219.4L391.2,218.5L392,218.8L392.8,218.2L393.5,218.4L394.2,218.6L395,218.3L395.8,218.6L396.5,218.3L397.2,218.6L398,218.6L398.8,219.2L399.5,218.9L400.2,218.9L401,219.0L401.8,219.1L402.5,218.0L403.2,218.3L404,219.0L404.8,218.3L405.5,218.7L406.2,219.1L407,218.7L407.8,217.5L408.5,219.1L409.2,218.4L410,218.1L410.8,219.0L411.5,218.0L412.2,219.3L413,218.2L413.8,218.6L414.5,218.7L415.2,219.0L416,219.2L416.8,217.4L417.5,218.5L418.2,219.3L419,218.8L419.8,219.5L420.5,218.2L421.2,218.8L422,218.1L422.8,219.1L423.5,219.0L424.2,218.2L425,218.7L425.8,219.1L426.5,218.9L427.2,218.2L428,217.5L428.8,218.2L429.5,218.4L430.2,219.0L431,218.7L431.8,218.6L432.5,218.9L433.2,219.0L434,218.9L434.8,219.0L435.5,218.6L436.2,218.5L437,219.1L437.8,217.3L438.5,218.5L439.2,218.8L440,219.2L440.8,219.1L441.5,219.1L442.2,218.8L443,218.6L443.8,218.4L444.5,218.3L445.2,218.4L446,219.2L446.8,218.0L447.5,219.0L448.2,219.3L449,218.8L449.8,218.7L450.5,218.8L451.2,218.3L452,218.6L452.8,218.8L453.5,219.2L454.2,218.7L455,218.9L455.8,219.2L456.5,218.5L457.2,219.2L458,218.1L458.8,219.0L459.5,218.2L460.2,218.7L461,218.2L461.8,217.9L462.5,219.2L463.2,218.8L464,217.1L464.8,218.8L465.5,218.8L466.2,219.1L467,218.3L467.8,218.3L468.5,217.7L469.2,218.8L470,217.2L470.8,219.1L471.5,219.0L472.2,218.3L473,219.0L473.8,219.2L474.5,219.5L475.2,218.5L476,219.4L476.8,218.4L477.5,219.1L478.2,218.5L479,219.1L479.8,219.3L480.5,218.8L481.2,218.7L482,218.6L482.8,219.2L483.5,217.8L484.2,218.7L485,218.5L485.8,218.5L486.5,218.4L487.2,217.8L488,218.8L488.8,217.5L489.5,218.9L490.2,218.9L491,219.1L491.8,218.6L492.5,219.0L493.2,218.4L494,219.1L494.8,219.0L495.5,218.7L496.2,218.9L497,218.4L497.8,218.9L498.5,217.8L499.2,217.6L500,218.8L500.8,218.0L501.5,219.0L502.2,218.8L503,219.0L503.8,218.2L504.5,219.1L505.2,219.0L506,219.0L506.8,218.8L507.5,218.6L508.2,219.0L509,218.9L509.8,219.0L510.5,218.1L511.2,218.5L512,218.7L512.8,218.6L513.5,218.9L514.2,219.3L515,218.4L515.8,218.7L516.5,219.0L517.2,218.9L518,219.0L518.8,219.3L519.5,218.9L520.2,218.9L521,219.1L521.8,218.8L522.5,218.2L523.2,219.0L524,218.4L524.8,218.5L525.5,219.0L526.2,218.8L527,219.1L527.8,218.8L528.5,218.3L529.2,218.4L530,218.8L530.8,218.6L531.5,218.4L532.2,218.6L533,218.7L533.8,218.9L534.5,217.3L535.2,218.5L536,217.9L536.8,218.2L537.5,219.3L538.2,218.6L539,218.9L539.8,218.9L540.5,218.5L541.2,218.8L542,219.0L542.8,218.9L543.5,219.4L544.2,219.0L545,218.8L545.8,218.1L546.5,218.8L547.2,218.2L548,218.2L548.8,218.2L549.5,218.9L550.2,217.7L551,218.5L551.8,218.8L552.5,219.0L553.2,218.4L554,218.8L554.8,217.8L555.5,218.3L556.2,218.7L557,218.6L557.8,218.6L558.5,218.8L559.2,218.8L560,218.5L560.8,218.6L561.5,219.7L562.2,218.5L563,218.6L563.8,218.4L564.5,218.5L565.2,218.9L566,219.3L566.8,218.8L567.5,218.2L568.2,218.3L569,219.4L569.8,218.1L570.5,218.7L571.2,218.6L572,217.8L572.8,219.1L573.5,219.4L574.2,219.3L575,218.4L575.8,218.4L576.5,219.0L577.2,218.8L578,218.3L578.8,219.1L579.5,218.4L580.2,218.2L581,218.8L581.8,218.6L582.5,218.9L583.2,218.5L584,218.3L584.8,219.0L585.5,218.5L586.2,218.4L587,218.9L587.8,218.4L588.5,218.7L589.2,219.5L590,218.9L590.8,217.5L591.5,218.6L592.2,218.8L593,218.7L593.8,218.7L594.5,218.4L595.2,217.7L596,218.7L596.8,219.1L597.5,218.4L598.2,218.6L599,219.1L599.8,219.7L600.5,219.0L601.2,218.3L602,218.3L602.8,219.2L603.5,218.7L604.2,219.4L605,218.8L605.8,218.4L606.5,219.2L607.2,218.2L608,218.8L608.8,219.1L609.5,219.1L610.2,218.5L611,219.4L611.8,219.1L612.5,219.0L613.2,218.5L614,218.7L614.8,219.2L615.5,218.5L616.2,218.9L617,219.1L617.8,218.3L618.5,218.1L619.2,219.2L620,218.5L620.8,218.9L621.5,218.7L622.2,217.7L623,218.8L623.8,218.7L624.5,218.9L625.2,219.1L626,218.9L626.8,219.1L627.5,218.5L628.2,217.7L629,218.4L629.8,217.5L630.5,219.0L631.2,218.5L632,218.9L632.8,218.5L633.5,219.4L634.2,218.9L635,218.5L635.8,219.2L636.5,219.0L637.2,218.3L638,218.6L638.8,218.8L639.5,218.2L640.2,219.1L641,218.7L641.8,218.6L642.5,219.3L643.2,218.3L644,217.4L644.8,218.4L645.5,218.4L646.2,218.5L647,218.1L647.8,218.9L648.5,219.0L649.2,218.7L650,218.6L650.8,218.6L651.5,219.0L652.2,219.4L653,219.5L653.8,218.9L654.5,218.9L655.2,219.2L656,218.9L656.8,218.8L657.5,218.8L658.2,218.4L659,218.9L659.8,218.9L660.5,218.7L661.2,219.0L662,219.6L662.8,217.4L663.5,217.5L664.2,219.1L665,218.8L665.8,218.9L666.5,218.8L667.2,217.4L668,219.0L668.8,218.7L669.5,217.4L670.2,218.9L671,218.8L671.8,218.5L672.5,218.5L673.2,219.2L674,218.2L674.8,218.1L675.5,218.2L676.2,219.3L677,218.0L677.8,218.3L678.5,218.4L679.2,218.7L680,218.5L680.8,218.5L681.5,218.7L682.2,219.1L683,218.9L683.8,218.7L684.5,218.4L685.2,218.7L686,218.5L686.8,219.1L687.5,217.3L688.2,218.8L689,218.4L689.8,219.1L690.5,219.1L691.2,219.0L692,218.2L692.8,218.0L693.5,218.3L694.2,218.8L695,218.6L695.8,217.8L696.5,218.5L697.2,218.6L698,218.0L698.8,219.1L699.5,218.9L700.2,219.8L701,218.6L701.8,218.5L702.5,218.3L703.2,218.4L704,218.7L704.8,218.4L705.5,218.4L706.2,217.5L707,218.0L707.8,218.5L708.5,218.9L709.2,218.5L710,219.0L710.8,219.4L711.5,218.6L712.2,218.3L713,218.6L713.8,218.4L714.5,218.6L715.2,218.5L716,219.0L716.8,218.5L717.5,217.4L718.2,219.0L719,219.2L719.8,218.9L720.5,218.8L721.2,218.6L722,218.7L722.8,217.6L723.5,218.5L724.2,219.3L725,218.6L725.8,219.2L726.5,218.7L727.2,218.7L728,218.3L728.8,218.5L729.5,218.3L730.2,218.8L731,218.8L731.8,218.2L732.5,218.2L733.2,218.7L734,218.5L734.8,219.1L735.5,219.7L736.2,218.1L737,218.8L737.8,219.2L738.5,218.6L739.2,218.4L740,218.4L740.8,218.3L741.5,218.3L742.2,218.9L743,218.0L743.8,219.1L744.5,219.4L745.2,219.1L746,219.4L746.8,219.1L747.5,218.5L748.2,219.1L749,218.8L749.8,218.3L750.5,217.9L751.2,219.0L752,218.9L752.8,218.1L753.5,218.3L754.2,218.8L755,218.7L755.8,219.4L756.5,218.9L757.2,218.9L758,218.4L758.8,218.7L759.5,218.9L760.2,219.1L761,218.6L761.8,218.7L762.5,218.9L763.2,218.7L764,218.9L764.8,219.0L765.5,219.3L766.2,218.4L767,218.9L767.8,218.9L768.5,218.5L769.2,218.8L770,218.9L770.8,218.3L771.5,218.6L772.2,218.9L773,219.1L773.8,218.8L774.5,219.2L775.2,217.8L776,218.4L776.8,218.8L777.5,218.7L778.2,219.1L779,218.5L779.8,218.8L780.5,218.8L781.2,218.5L782,219.1L782.8,219.1L783.5,218.9L784.2,218.9L785,218.5L785.8,217.3L786.5,218.6L787.2,219.0L788,218.2L788.8,219.4L789.5,218.5L789.5,229.0L788.8,228.6L788,230.0L787.2,228.9L786.5,229.0L785.8,229.9L785,228.8L784.2,229.4L783.5,229.5L782.8,228.4L782,229.0L781.2,229.1L780.5,230.2L779.8,229.0L779,229.1L778.2,229.2L777.5,229.4L776.8,230.3L776,228.6L775.2,229.9L774.5,228.6L773.8,229.1L773,229.1L772.2,228.7L771.5,229.4L770.8,228.6L770,229.4L769.2,229.7L768.5,229.1L767.8,228.8L767,229.7L766.2,228.9L765.5,228.7L764.8,229.4L764,228.5L763.2,229.0L762.5,229.1L761.8,228.3L761,229.7L760.2,229.3L759.5,229.7L758.8,229.8L758,229.5L757.2,229.2L756.5,229.5L755.8,229.2L755,229.2L754.2,229.8L753.5,229.2L752.8,230.1L752,229.6L751.2,228.7L750.5,229.4L749.8,229.8L749,229.4L748.2,229.2L747.5,229.0L746.8,229.7L746,228.7L745.2,229.5L744.5,229.1L743.8,230.2L743,229.5L742.2,228.8L741.5,230.3L740.8,229.1L740,229.6L739.2,229.1L738.5,229.2L737.8,229.9L737,230.2L736.2,229.4L735.5,228.6L734.8,229.2L734,228.9L733.2,229.5L732.5,229.2L731.8,228.5L731,229.3L730.2,230.6L729.5,229.7L728.8,229.9L728,229.0L727.2,229.2L726.5,229.4L725.8,229.5L725,229.8L724.2,230.0L723.5,229.4L722.8,228.2L722,229.0L721.2,229.2L720.5,229.0L719.8,229.7L719,229.3L718.2,229.8L717.5,228.9L716.8,228.9L716,229.1L715.2,228.8L714.5,229.1L713.8,228.9L713,229.9L712.2,228.4L711.5,229.0L710.8,229.4L710,229.2L709.2,229.9L708.5,230.3L707.8,230.2L707,229.2L706.2,229.1L705.5,228.6L704.8,230.0L704,229.6L703.2,230.0L702.5,229.8L701.8,229.6L701,229.5L700.2,228.9L699.5,228.9L698.8,229.0L698,228.9L697.2,229.6L696.5,230.1L695.8,228.4L695,229.3L694.2,229.5L693.5,229.4L692.8,229.0L692,228.6L691.2,229.1L690.5,229.5L689.8,229.2L689,230.9L688.2,229.2L687.5,229.8L686.8,229.3L686,229.0L685.2,230.0L684.5,228.5L683.8,230.2L683,229.1L682.2,229.4L681.5,229.5L680.8,229.2L680,229.5L679.2,228.8L678.5,229.3L677.8,228.8L677,229.9L676.2,229.2L675.5,230.0L674.8,230.1L674,229.3L673.2,229.1L672.5,229.0L671.8,228.8L671,229.5L670.2,230.4L669.5,230.1L668.8,229.2L668,228.9L667.2,228.9L666.5,229.3L665.8,229.7L665,229.4L664.2,229.8L663.5,228.6L662.8,229.6L662,229.3L661.2,229.5L660.5,229.5L659.8,229.3L659,229.6L658.2,228.8L657.5,229.9L656.8,229.2L656,229.4L655.2,229.3L654.5,228.7L653.8,229.6L653,229.3L652.2,230.6L651.5,230.7L650.8,230.3L650,229.0L649.2,229.2L648.5,228.9L647.8,229.1L647,229.7L646.2,228.2L645.5,228.2L644.8,229.8L644,230.1L643.2,228.8L642.5,229.4L641.8,228.8L641,228.8L640.2,229.1L639.5,229.2L638.8,228.9L638,229.4L637.2,229.0L636.5,229.4L635.8,229.8L635,228.7L634.2,229.4L633.5,230.9L632.8,229.5L632,229.0L631.2,228.9L630.5,229.7L629.8,229.4L629,229.5L628.2,229.8L627.5,228.9L626.8,229.0L626,229.1L625.2,228.9L624.5,229.0L623.8,229.4L623,228.9L622.2,229.3L621.5,229.3L620.8,228.9L620,229.2L619.2,229.0L618.5,229.1L617.8,229.0L617,229.3L616.2,229.6L615.5,229.4L614.8,229.1L614,229.4L613.2,230.6L612.5,228.8L611.8,230.2L611,229.8L610.2,229.5L609.5,228.8L608.8,229.5L608,229.6L607.2,229.3L606.5,229.2L605.8,229.3L605,229.2L604.2,228.9L603.5,229.8L602.8,230.0L602,229.2L601.2,229.3L600.5,229.0L599.8,229.6L599,229.1L598.2,229.5L597.5,229.2L596.8,229.5L596,229.2L595.2,229.0L594.5,229.7L593.8,229.3L593,229.4L592.2,229.1L591.5,229.3L590.8,229.7L590,229.7L589.2,229.0L588.5,229.5L587.8,229.8L587,229.3L586.2,229.2L585.5,229.3L584.8,229.0L584,229.7L583.2,229.2L582.5,230.8L581.8,229.8L581,229.3L580.2,230.3L579.5,230.1L578.8,230.1L578,229.2L577.2,229.1L576.5,228.9L575.8,229.7L575,228.9L574.2,229.1L573.5,229.5L572.8,229.1L572,230.7L571.2,229.1L570.5,229.8L569.8,229.4L569,229.4L568.2,230.4L567.5,229.1L566.8,229.3L566,228.8L565.2,229.4L564.5,228.6L563.8,229.3L563,228.7L562.2,228.5L561.5,228.9L560.8,229.3L560,229.5L559.2,229.2L558.5,229.0L557.8,229.2L557,229.0L556.2,229.4L555.5,230.4L554.8,228.8L554,229.1L553.2,229.8L552.5,229.0L551.8,228.9L551,229.5L550.2,228.5L549.5,229.2L548.8,229.1L548,230.3L547.2,229.6L546.5,229.2L545.8,228.8L545,229.3L544.2,229.4L543.5,229.1L542.8,229.6L542,228.9L541.2,229.1L540.5,229.2L539.8,229.6L539,229.2L538.2,229.1L537.5,229.0L536.8,229.4L536,229.4L535.2,229.4L534.5,230.1L533.8,228.5L533,229.1L532.2,229.6L531.5,229.3L530.8,229.4L530,229.2L529.2,229.8L528.5,228.4L527.8,229.5L527,229.1L526.2,230.1L525.5,229.0L524.8,229.9L524,228.8L523.2,229.5L522.5,229.3L521.8,229.7L521,229.5L520.2,228.9L519.5,228.6L518.8,228.9L518,228.8L517.2,228.7L516.5,229.7L515.8,229.5L515,228.8L514.2,229.6L513.5,228.7L512.8,228.7L512,229.2L511.2,230.0L510.5,229.0L509.8,229.1L509,229.7L508.2,228.8L507.5,229.2L506.8,229.3L506,228.9L505.2,229.5L504.5,229.0L503.8,230.3L503,229.1L502.2,228.2L501.5,230.1L500.8,228.2L500,229.0L499.2,229.2L498.5,230.2L497.8,229.1L497,229.2L496.2,228.7L495.5,229.7L494.8,229.4L494,229.6L493.2,229.4L492.5,229.6L491.8,228.7L491,229.8L490.2,228.7L489.5,229.3L488.8,229.6L488,229.4L487.2,228.9L486.5,229.4L485.8,229.8L485,229.7L484.2,230.0L483.5,228.9L482.8,228.9L482,229.1L481.2,229.0L480.5,229.1L479.8,229.3L479,229.4L478.2,229.5L477.5,229.5L476.8,229.7L476,231.2L475.2,230.6L474.5,229.2L473.8,229.1L473,230.6L472.2,229.1L471.5,230.1L470.8,229.9L470,229.1L469.2,229.5L468.5,229.9L467.8,229.6L467,229.0L466.2,229.1L465.5,229.1L464.8,229.3L464,229.2L463.2,229.0L462.5,229.5L461.8,228.9L461,229.6L460.2,229.3L459.5,229.8L458.8,228.9L458,229.3L457.2,228.9L456.5,229.0L455.8,228.5L455,229.6L454.2,229.1L453.5,229.7L452.8,229.3L452,229.1L451.2,228.5L450.5,229.1L449.8,229.4L449,230.0L448.2,229.7L447.5,229.6L446.8,229.5L446,229.2L445.2,229.3L444.5,228.9L443.8,229.0L443,229.0L442.2,228.9L441.5,229.9L440.8,229.2L440,229.8L439.2,228.7L438.5,229.2L437.8,229.4L437,229.4L436.2,229.1L435.5,229.3L434.8,228.6L434,228.6L433.2,229.6L432.5,229.0L431.8,229.2L431,228.8L430.2,229.3L429.5,229.5L428.8,229.1L428,229.1L427.2,229.0L426.5,229.3L425.8,229.5L425,229.3L424.2,229.8L423.5,229.2L422.8,228.8L422,229.4L421.2,229.3L420.5,229.0L419.8,229.5L419,229.4L418.2,228.8L417.5,229.9L416.8,229.3L416,228.9L415.2,229.1L414.5,228.9L413.8,229.1L413,229.1L412.2,229.2L411.5,229.1L410.8,229.0L410,229.0L409.2,229.1L408.5,229.5L407.8,229.4L407,229.3L406.2,229.5L405.5,229.2L404.8,228.9L404,228.4L403.2,228.7L402.5,229.1L401.8,229.8L401,229.0L400.2,229.4L399.5,229.2L398.8,228.9L398,228.6L397.2,229.3L396.5,230.2L395.8,228.9L395,229.4L394.2,229.7L393.5,229.7L392.8,228.7L392,229.0L391.2,229.5L390.5,228.4L389.8,229.6L389,229.5L388.2,230.7L387.5,230.4L386.8,229.1L386,229.0L385.2,228.7L384.5,230.5L383.8,229.2L383,229.5L382.2,229.0L381.5,229.1L380.8,229.0L380,230.0L379.2,229.3L378.5,229.6L377.8,229.3L377,228.8L376.2,229.1L375.5,229.5L374.8,229.3L374,229.3L373.2,229.3L372.5,229.5L371.8,231.1L371,229.5L370.2,229.2L369.5,229.2L368.8,229.1L368,229.6L367.2,229.0L366.5,229.0L365.8,229.7L365,229.2L364.2,229.9L363.5,229.4L362.8,229.3L362,230.1L361.2,228.9L360.5,230.0L359.8,228.9L359,229.4L358.2,229.0L357.5,229.6L356.8,229.4L356,229.1L355.2,229.3L354.5,229.7L353.8,228.8L353,228.8L352.2,228.4L351.5,230.5L350.8,229.5L350,229.9L349.2,229.5L348.5,229.3L347.8,229.5L347,229.3L346.2,229.8L345.5,228.9L344.8,229.4L344,228.7L343.2,229.7L342.5,229.8L341.8,229.5L341,229.1L340.2,228.8L339.5,229.5L338.8,229.0L338,229.5L337.2,228.3L336.5,229.5L335.8,228.7L335,228.6L334.2,229.4L333.5,229.0L332.8,229.4L332,230.0L331.2,229.6L330.5,230.6L329.8,229.8L329,229.2L328.2,229.2L327.5,229.6L326.8,229.2L326,228.4L325.2,229.9L324.5,228.8L323.8,229.3L323,229.0L322.2,229.1L321.5,229.0L320.8,229.6L320,229.7L319.2,230.0L318.5,229.7L317.8,229.5L317,229.4L316.2,229.7L315.5,229.3L314.8,228.7L314,229.8L313.2,229.2L312.5,228.9L311.8,229.4L311,229.4L310.2,230.9L309.5,229.2L308.8,230.1L308,229.6L307.2,228.8L306.5,229.0L305.8,229.5L305,229.4L304.2,229.4L303.5,228.9L302.8,228.8L302,228.7L301.2,229.1L300.5,229.9L299.8,229.4L299,229.2L298.2,229.2L297.5,230.3L296.8,229.3L296,229.6L295.2,230.1L294.5,230.1L293.8,229.4L293,229.4L292.2,229.0L291.5,230.7L290.8,229.1L290,228.9L289.2,229.4L288.5,229.8L287.8,229.4L287,229.2L286.2,229.9L285.5,228.8L284.8,229.0L284,229.2L283.2,229.2L282.5,231.0L281.8,229.0L281,229.0L280.2,229.8L279.5,229.3L278.8,229.4L278,229.2L277.2,228.7L276.5,229.3L275.8,228.9L275,228.9L274.2,228.8L273.5,229.4L272.8,229.1L272,229.4L271.2,229.0L270.5,229.4L269.8,229.5L269,229.4L268.2,229.1L267.5,229.6L266.8,229.2L266,229.1L265.2,229.4L264.5,229.4L263.8,229.1L263,229.3L262.2,229.5L261.5,229.3L260.8,229.5L260,229.4L259.2,230.2L258.5,229.0L257.8,229.0L257,228.9L256.2,229.5L255.5,229.4L254.8,229.5L254,229.5L253.2,229.2L252.5,229.4L251.8,229.3L251,229.3L250.2,229.9L249.5,230.3L248.8,230.4L248,229.1L247.2,229.5L246.5,229.2L245.8,228.9L245,229.1L244.2,229.6L243.5,229.6L242.8,229.7L242,229.6L241.2,230.1L240.5,229.1L239.8,230.4L239,229.1L238.2,229.1L237.5,228.7L236.8,230.3L236,229.4L235.2,229.5L234.5,229.3L233.8,229.0L233,229.2L232.2,229.9L231.5,228.9L230.8,230.0L230,229.4L229.2,228.9L228.5,229.0L227.8,229.2L227,230.6L226.2,228.9L225.5,229.6L224.8,228.9L224,229.2L223.2,230.9L222.5,228.8L221.8,229.3L221,229.2L220.2,229.0L219.5,229.6L218.8,229.0L218,228.6L217.2,229.8L216.5,228.7L215.8,229.0L215,229.3L214.2,229.0L213.5,229.0L212.8,230.8L212,230.6L211.2,229.0L210.5,228.8L209.8,229.7L209,228.5L208.2,230.4L207.5,229.4L206.8,229.3L206,229.4L205.2,228.8L204.5,229.4L203.8,229.1L203,229.3L202.2,229.2L201.5,229.0L200.8,229.5L200,229.1L199.2,229.1L198.5,229.3L197.8,228.9L197,229.2L196.2,229.3L195.5,229.9L194.8,229.8L194,229.5L193.2,229.4L192.5,229.3L191.8,228.9L191,229.3L190.2,228.5L189.5,229.8L188.8,229.6L188,230.4L187.2,229.2L186.5,228.7L185.8,228.4L185,229.6L184.2,229.2L183.5,229.7L182.8,229.4L182,229.1L181.2,228.9L180.5,229.3L179.8,230.7L179,229.2L178.2,228.7L177.5,229.3L176.8,229.6L176,229.3L175.2,229.6L174.5,230.6L173.8,229.2L173,228.8L172.2,229.8L171.5,228.5L170.8,229.2L170,229.3L169.2,229.6L168.5,229.5L167.8,229.6L167,229.3L166.2,229.2L165.5,228.9L164.8,229.4L164,229.1L163.2,229.6L162.5,229.4L161.8,229.3L161,229.0L160.2,229.1L159.5,229.0L158.8,229.7L158,229.9L157.2,228.9L156.5,229.0L155.8,228.2L155,229.3L154.2,228.7L153.5,230.3L152.8,229.2L152,228.8L151.2,228.9L150.5,230.2L149.8,229.3L149,229.1L148.2,229.8L147.5,229.1L146.8,229.5L146,229.5L145.2,229.3L144.5,229.0L143.8,230.6L143,229.0L142.2,230.1L141.5,229.5L140.8,231.4L140,229.1L139.2,229.5L138.5,229.2L137.8,229.7L137,229.3L136.2,229.8L135.5,230.5L134.8,228.7L134,229.3L133.2,229.5L132.5,229.9L131.8,230.2L131,229.1L130.2,229.5L129.5,229.2L128.8,229.4L128,229.4L127.2,228.8L126.5,229.9L125.8,229.3L125,229.4L124.2,229.4L123.5,229.4L122.8,229.3L122,228.8L121.2,229.8L120.5,229.1L119.8,230.4L119,230.2L118.2,229.3L117.5,229.2L116.8,230.6L116,229.0L115.2,229.3L114.5,229.5L113.8,229.2L113,228.8L112.2,229.4L111.5,229.5L110.8,229.1L110,228.7L109.2,229.3L108.5,230.3L107.8,230.2L107,229.3L106.2,229.2L105.5,229.4L104.8,229.0L104,229.1L103.2,229.2L102.5,229.0L101.8,229.0L101,230.0L100.2,229.2L99.5,229.0L98.8,229.1L98,229.2L97.2,229.0L96.5,229.1L95.8,229.4L95,229.3L94.2,229.9L93.5,229.0L92.8,229.2L92,229.7L91.2,229.5L90.5,228.6L89.8,228.8L89,229.8L88.2,230.1L87.5,229.6L86.8,229.3L86,229.6L85.2,228.6L84.5,229.8L83.8,229.4L83,229.4L82.2,229.6L81.5,228.6L80.8,229.7L80,229.0L79.2,229.1L78.5,228.9L77.8,229.2L77,229.6L76.2,228.8L75.5,229.6L74.8,229.4L74,229.5L73.2,229.1L72.5,229.2L71.8,230.3L71,229.1L70.2,229.3L69.5,229.1L68.8,229.6L68,229.4L67.2,230.3L66.5,229.4L65.8,229.4L65,228.6L64.2,229.6L63.5,229.6L62.8,229.4L62,229.6L61.2,229.2L60.5,229.0L59.8,228.7L59,229.7Z"/>
<path fill="#f0f000" d="M59,219.0L59.8,219.2L60.5,220.2L61.2,218.6L62,219.8L62.8,219.4L63.5,219.4L64.2,219.7L65,219.6L65.8,219.3L66.5,218.9L67.2,219.6L68,219.6L68.8,219.3L69.5,219.1L70.2,219.8L71,219.2L71.8,218.8L72.5,218.9L73.2,219.6L74,219.6L74.8,219.4L75.5,219.3L76.2,218.7L77,219.5L77.8,219.2L78.5,219.9L79.2,219.9L80,219.5L80.8,219.5L81.5,219.0L82.2,219.2L83,219.9L83.8,219.3L84.5,219.5L85.2,219.3L86,219.3L86.8,219.2L87.5,219.2L88.2,219.3L89,219.2L89.8,219.5L90.5,219.4L91.2,219.2L92,219.2L92.8,219.9L93.5,219.3L94.2,219.7L95,219.3L95.8,220.6L96.5,219.5L97.2,219.5L98,218.9L98.8,220.4L99.5,219.2L100.2,219.0L101,219.3L101.8,219.3L102.5,219.3L103.2,219.4L104,219.3L104.8,219.5L105.5,219.8L106.2,219.4L107,219.2L107.8,219.5L108.5,220.3L109.2,219.2L110,219.6L110.8,219.3L111.5,219.4L112.2,219.2L113,218.8L113.8,219.6L114.5,218.9L115.2,219.4L116,219.8L116.8,219.1L117.5,219.1L118.2,219.3L119,219.4L119.8,219.2L120.5,218.9L121.2,220.3L122,219.3L122.8,218.8L123.5,219.3L124.2,219.6L125,220.0L125.8,220.1L126.5,219.6L127.2,218.4L128,219.9L128.8,219.7L129.5,219.5L130.2,219.5L131,219.2L131.8,219.9L132.5,219.2L133.2,219.0L134,220.0L134.8,219.9L135.5,219.2L136.2,219.2L137,219.5L137.8,219.7L138.5,219.3L139.2,220.1L140,219.5L140.8,219.4L141.5,220.2L142.2,219.2L143,219.5L143.8,219.1L144.5,219.1L145.2,219.2L146,219.4L146.8,219.2L147.5,219.0L148.2,219.3L149,219.7L149.8,219.5L150.5,220.1L151.2,219.8L152,219.3L152.8,219.7L153.5,219.5L154.2,219.3L155,219.1L155.8,220.3L156.5,219.1L157.2,219.9L158,220.0L158.8,219.6L159.5,219.7L160.2,219.4L161,219.1L161.8,219.8L162.5,219.7L163.2,219.7L164,219.9L164.8,219.4L165.5,219.8L166.2,219.2L167,219.2L167.8,219.4L168.5,219.1L169.2,218.8L170,219.7L170.8,219.9L171.5,219.5L172.2,219.5L173,219.2L173.8,219.3L174.5,219.5L175.2,218.3L176,219.2L176.8,219.0L177.5,219.4L178.2,219.3L179,219.6L179.8,218.8L180.5,219.3L181.2,219.3L182,219.6L182.8,219.6L183.5,219.4L184.2,219.4L185,219.6L185.8,219.0L186.5,219.6L187.2,219.6L188,219.9L188.8,219.4L189.5,219.7L190.2,219.4L191,218.9L191.8,219.7L192.5,220.3L193.2,219.8L194,218.8L194.8,219.3L195.5,219.4L196.2,218.7L197,220.0L197.8,219.7L198.5,218.5L199.2,219.4L200,219.6L200.8,219.7L201.5,220.0L202.2,219.8L203,219.1L203.8,219.4L204.5,219.6L205.2,220.0L206,219.9L206.8,219.4L207.5,219.1L208.2,219.9L209,219.3L209.8,219.4L210.5,219.5L211.2,219.5L212,220.0L212.8,219.0L213.5,219.3L214.2,219.4L215,219.5L215.8,218.9L216.5,219.0L217.2,219.7L218,219.5L218.8,219.3L219.5,219.9L220.2,219.6L221,219.4L221.8,219.6L222.5,219.9L223.2,219.0L224,219.3L224.8,219.0L225.5,219.3L226.2,219.7L227,219.3L227.8,219.4L228.5,219.3L229.2,219.3L230,219.2L230.8,219.6L231.5,219.0L232.2,218.8L233,220.0L233.8,219.4L234.5,219.5L235.2,219.4L236,220.2L236.8,219.7L237.5,219.8L238.2,220.0L239,220.3L239.8,219.5L240.5,219.5L241.2,220.1L242,219.3L242.8,219.9L243.5,219.5L244.2,219.7L245,219.4L245.8,220.0L246.5,220.4L247.2,219.7L248,219.3L248.8,219.6L249.5,219.4L250.2,220.1L251,219.1L251.8,219.2L252.5,219.8L253.2,219.5L254,219.9L254.8,219.3L255.5,219.2L256.2,219.4L257,220.5L257.8,219.1L258.5,219.4L259.2,219.7L260,219.3L260.8,219.8L261.5,219.7L262.2,219.5L263,219.6L263.8,219.3L264.5,219.4L265.2,219.2L266,219.3L266.8,219.9L267.5,219.2L268.2,219.0L269,220.1L269.8,220.0L270.5,219.3L271.2,219.2L272,219.3L272.8,219.7L273.5,219.7L274.2,219.5L275,219.1L275.8,219.7L276.5,219.5L277.2,219.8L278,219.6L278.8,219.7L279.5,218.8L280.2,219.2L281,219.3L281.8,219.0L282.5,219.7L283.2,219.4L284,218.6L284.8,219.8L285.5,219.6L286.2,219.4L287,219.4L287.8,219.3L288.5,219.6L289.2,219.3L290,219.4L290.8,219.6L291.5,219.2L292.2,219.8L293,219.2L293.8,219.5L294.5,218.7L295.2,219.7L296,218.3L296.8,219.3L297.5,219.5L298.2,219.1L299,219.3L299.8,219.5L300.5,219.1L301.2,219.5L302,218.1L302.8,218.9L303.5,219.0L304.2,219.2L305,219.7L305.8,219.7L306.5,219.7L307.2,220.0L308,219.7L308.8,219.8L309.5,220.6L310.2,219.8L311,219.7L311.8,219.7L312.5,220.3L313.2,219.5L314,219.1L314.8,220.1L315.5,220.1L316.2,219.8L317,219.8L317.8,219.1L318.5,219.2L319.2,219.7L320,219.3L320.8,219.3L321.5,219.3L322.2,219.1L323,219.6L323.8,219.1L324.5,220.0L325.2,219.4L326,219.5L326.8,219.4L327.5,219.9L328.2,219.4L329,219.5L329.8,219.5L330.5,219.1L331.2,219.2L332,220.1L332.8,219.6L333.5,219.3L334.2,219.7L335,219.3L335.8,218.9L336.5,219.5L337.2,219.6L338,219.1L338.8,219.6L339.5,219.6L340.2,219.8L341,219.2L341.8,219.8L342.5,220.0L343.2,219.3L344,218.9L344.8,219.2L345.5,219.3L346.2,219.6L347,219.1L347.8,219.0L348.5,219.1L349.2,219.8L350,219.1L350.8,219.3L351.5,219.1L352.2,218.9L353,219.2L353.8,219.9L354.5,219.0L355.2,219.4L356,219.1L356.8,219.7L357.5,218.9L358.2,218.7L359,219.6L359.8,219.0L360.5,220.0L361.2,219.9L362,219.5L362.8,219.2L363.5,219.5L364.2,219.6L365,219.6L365.8,219.4L366.5,219.7L367.2,219.9L368,219.8L368.8,219.2L369.5,219.3L370.2,219.2L371,219.6L371.8,219.8L372.5,219.6L373.2,219.2L374,218.8L374.8,219.8L375.5,219.6L376.2,219.7L377,219.4L377.8,219.0L378.5,219.1L379.2,219.8L380,218.9L380.8,220.0L381.5,220.1L382.2,218.8L383,219.9L383.8,219.4L384.5,219.2L385.2,219.6L386,219.6L386.8,218.9L387.5,219.9L388.2,219.9L389,219.6L389.8,218.8L390.5,219.3L391.2,220.4L392,219.5L392.8,219.4L393.5,219.3L394.2,219.3L395,218.9L395.8,219.5L396.5,219.7L397.2,219.1L398,220.0L398.8,219.7L399.5,219.8L400.2,219.4L401,219.4L401.8,219.1L402.5,219.7L403.2,219.6L404,219.7L404.8,219.6L405.5,219.7L406.2,219.5L407,219.2L407.8,219.4L408.5,219.7L409.2,219.4L410,219.2L410.8,220.0L411.5,219.0L412.2,219.4L413,219.3L413.8,219.7L414.5,219.1L415.2,220.0L416,219.2L416.8,219.0L417.5,219.8L418.2,219.1L419,219.8L419.8,218.8L420.5,219.3L421.2,219.8L422,219.9L422.8,219.4L423.5,219.8L424.2,219.4L425,219.1L425.8,219.3L426.5,219.6L427.2,219.4L428,219.9L428.8,219.3L429.5,219.8L430.2,220.2L431,218.9L431.8,219.6L432.5,219.5L433.2,219.9L434,220.3L434.8,219.6L435.5,219.1L436.2,220.0L437,218.9L437.8,220.0L438.5,219.1L439.2,219.2L440,219.3L440.8,219.6L441.5,219.5L442.2,219.3L443,219.4L443.8,219.8L444.5,219.2L445.2,219.6L446,218.7L446.8,219.5L447.5,219.4L448.2,219.7L449,218.5L449.8,219.3L450.5,219.4L451.2,219.2L452,218.8L452.8,220.0L453.5,219.7L454.2,219.3L455,219.9L455.8,219.7L456.5,219.3L457.2,220.2L458,218.9L458.8,219.9L459.5,219.0L460.2,218.8L461,218.8L461.8,219.3L462.5,219.6L463.2,218.5L464,219.7L464.8,219.3L465.5,219.7L466.2,219.0L467,219.3L467.8,220.1L468.5,219.6L469.2,219.5L470,219.5L470.8,219.7L471.5,219.5L472.2,219.4L473,219.3L473.8,219.5L474.5,219.9L475.2,219.4L476,219.9L476.8,219.3L477.5,219.8L478.2,219.1L479,219.7L479.8,219.5L480.5,219.0L481.2,219.7L482,219.4L482.8,219.5L483.5,219.6L484.2,220.2L485,219.2L485.8,220.3L486.5,219.6L487.2,218.8L488,219.7L488.8,219.7L489.5,219.9L490.2,219.3L491,219.4L491.8,219.6L492.5,219.1L493.2,219.3L494,219.3L494.8,218.8L495.5,219.5L496.2,219.7L497,219.4L497.8,219.9L498.5,219.2L499.2,220.0L500,219.8L500.8,219.2L501.5,218.8L502.2,219.7L503,219.4L503.8,219.8L504.5,219.7L505.2,219.1L506,219.8L506.8,219.3L507.5,219.5L508.2,219.4L509,219.1L509.8,218.5L510.5,219.8L511.2,219.1L512,220.1L512.8,218.7L513.5,219.3L514.2,219.2L515,219.8L515.8,220.0L516.5,220.0L517.2,220.1L518,218.6L518.8,219.1L519.5,219.4L520.2,219.7L521,218.8L521.8,219.6L522.5,219.3L523.2,219.8L524,219.3L524.8,219.4L525.5,219.9L526.2,219.7L527,219.2L527.8,219.1L528.5,219.5L529.2,219.7L530,218.9L530.8,220.1L531.5,219.5L532.2,220.1L533,219.6L533.8,220.5L534.5,219.5L535.2,219.2L536,218.8L536.8,219.7L537.5,219.3L538.2,219.4L539,219.3L539.8,220.0L540.5,219.7L541.2,219.3L542,219.4L542.8,219.8L543.5,219.0L544.2,219.0L545,219.8L545.8,219.7L546.5,220.2L547.2,219.6L548,219.3L548.8,219.6L549.5,219.4L550.2,219.8L551,219.8L551.8,219.5L552.5,219.1L553.2,219.7L554,219.3L554.8,219.0L555.5,220.0L556.2,219.6L557,218.8L557.8,220.0L558.5,219.4L559.2,219.5L560,219.3L560.8,219.7L561.5,219.3L562.2,219.9L563,219.7L563.8,219.2L564.5,219.3L565.2,219.5L566,218.8L566.8,219.0L567.5,219.6L568.2,219.9L569,219.3L569.8,219.8L570.5,220.1L571.2,219.5L572,219.7L572.8,218.7L573.5,219.5L574.2,219.4L575,220.1L575.8,219.9L576.5,219.6L577.2,219.0L578,219.7L578.8,219.7L579.5,219.8L580.2,219.4L581,219.9L581.8,219.3L582.5,219.8L583.2,219.5L584,219.5L584.8,218.9L585.5,219.0L586.2,219.9L587,218.9L587.8,220.0L588.5,218.9L589.2,218.7L590,219.9L590.8,219.7L591.5,218.9L592.2,219.1L593,219.1L593.8,219.4L594.5,219.4L595.2,219.1L596,219.8L596.8,219.6L597.5,219.8L598.2,219.8L599,219.5L599.8,219.3L600.5,219.6L601.2,219.1L602,219.2L602.8,219.9L603.5,219.8L604.2,219.5L605,220.2L605.8,220.1L606.5,219.2L607.2,219.4L608,219.3L608.8,219.9L609.5,219.0L610.2,219.3L611,219.3L611.8,219.4L612.5,219.9L613.2,220.1L614,219.7L614.8,218.8L615.5,219.6L616.2,219.6L617,219.1L617.8,219.2L618.5,220.0L619.2,219.8L620,219.5L620.8,219.8L621.5,219.5L622.2,219.6L623,219.9L623.8,219.7L624.5,219.6L625.2,219.7L626,219.1L626.8,219.1L627.5,218.5L628.2,219.3L629,219.3L629.8,219.3L630.5,219.5L631.2,219.9L632,219.0L632.8,220.3L633.5,220.0L634.2,219.4L635,219.6L635.8,219.7L636.5,219.2L637.2,220.1L638,220.0L638.8,219.3L639.5,219.6L640.2,218.7L641,218.3L641.8,219.8L642.5,219.3L643.2,219.2L644,219.3L644.8,219.3L645.5,219.4L646.2,219.0L647,219.6L647.8,220.1L648.5,219.5L649.2,219.6L650,219.5L650.8,219.5L651.5,219.3L652.2,219.8L653,219.7L653.8,219.2L654.5,219.8L655.2,219.9L656,218.3L656.8,219.5L657.5,219.3L658.2,218.9L659,219.3L659.8,218.8L660.5,218.4L661.2,219.8L662,219.4L662.8,219.5L663.5,219.4L664.2,219.5L665,219.8L665.8,219.7L666.5,219.6L667.2,220.1L668,219.9L668.8,219.5L669.5,219.2L670.2,219.0L671,219.6L671.8,219.7L672.5,219.8L673.2,219.5L674,219.9L674.8,219.5L675.5,219.5L676.2,219.7L677,219.4L677.8,219.7L678.5,218.6L679.2,219.7L680,219.8L680.8,219.8L681.5,219.0L682.2,219.5L683,219.2L683.8,219.5L684.5,219.8L685.2,219.8L686,219.5L686.8,219.2L687.5,219.6L688.2,220.0L689,220.1L689.8,219.7L690.5,220.2L691.2,219.3L692,219.3L692.8,219.4L693.5,219.6L694.2,219.8L695,219.3L695.8,219.5L696.5,220.1L697.2,219.6L698,219.0L698.8,218.3L699.5,219.6L700.2,219.5L701,219.5L701.8,219.7L702.5,219.8L703.2,219.5L704,219.2L704.8,219.3L705.5,219.3L706.2,219.4L707,219.5L707.8,219.9L708.5,219.5L709.2,219.9L710,219.8L710.8,219.8L711.5,219.6L712.2,219.8L713,219.9L713.8,219.1L714.5,219.8L715.2,219.4L716,219.5L716.8,219.8L717.5,219.5L718.2,219.3L719,219.5L719.8,218.8L720.5,218.7L721.2,219.6L722,219.3L722.8,218.9L723.5,219.4L724.2,219.8L725,219.2L725.8,219.7L726.5,219.2L727.2,219.6L728,219.8L728.8,219.7L729.5,219.8L730.2,219.6L731,220.2L731.8,220.0L732.5,219.4L733.2,219.6L734,219.0L734.8,219.3L735.5,219.8L736.2,219.0L737,219.6L737.8,219.4L738.5,219.5L739.2,219.6L740,219.4L740.8,219.4L741.5,219.0L742.2,219.1L743,219.1L743.8,219.6L744.5,218.7L745.2,219.7L746,219.5L746.8,219.4L747.5,219.5L748.2,219.7L749,219.2L749.8,219.5L750.5,219.1L751.2,219.7L752,219.2L752.8,218.8L753.5,219.2L754.2,220.0L755,220.5L755.8,219.3L756.5,219.6L757.2,219.1L758,220.0L758.8,219.7L759.5,219.5L760.2,219.7L761,219.7L761.8,219.3L762.5,219.3L763.2,219.8L764,219.9L764.8,219.3L765.5,219.2L766.2,219.6L767,219.2L767.8,220.1L768.5,219.3L769.2,219.6L770,220.0L770.8,218.8L771.5,219.2L772.2,219.5L773,219.2L773.8,219.4L774.5,220.0L775.2,219.2L776,218.9L776.8,219.5L777.5,219.4L778.2,219.4L779,219.9L779.8,219.4L780.5,219.7L781.2,220.2L782,219.3L782.8,219.7L783.5,219.4L784.2,219.9L785,220.1L785.8,220.2L786.5,219.5L787.2,219.6L788,219.1L788.8,219.4L789.5,219.2L789.5,228.5L788.8,229.0L788,228.7L787.2,228.8L786.5,229.0L785.8,229.0L785,228.2L784.2,228.5L783.5,228.3L782.8,228.4L782,228.7L781.2,228.8L780.5,228.5L779.8,228.1L779,228.6L778.2,229.0L777.5,229.0L776.8,228.2L776,228.0L775.2,228.7L774.5,228.5L773.8,228.6L773,228.6L772.2,228.4L771.5,228.2L770.8,229.2L770,228.5L769.2,228.8L768.5,228.0L767.8,228.8L767,228.7L766.2,228.7L765.5,228.5L764.8,229.0L764,229.1L763.2,228.8L762.5,228.6L761.8,228.3L761,228.5L760.2,228.8L759.5,228.3L758.8,229.2L758,228.8L757.2,228.4L756.5,228.9L755.8,228.6L755,228.2L754.2,228.3L753.5,228.7L752.8,228.3L752,229.2L751.2,228.0L750.5,228.4L749.8,227.9L749,227.8L748.2,228.3L747.5,228.6L746.8,227.9L746,228.3L745.2,228.6L744.5,228.6L743.8,228.1L743,228.5L742.2,228.2L741.5,228.0L740.8,227.8L740,228.0L739.2,228.7L738.5,228.7L737.8,228.6L737,228.7L736.2,227.8L735.5,228.6L734.8,228.5L734,228.7L733.2,229.0L732.5,229.0L731.8,228.9L731,228.3L730.2,228.3L729.5,227.8L728.8,228.2L728,228.3L727.2,228.8L726.5,228.6L725.8,228.8L725,228.7L724.2,228.3L723.5,228.9L722.8,228.6L722,228.7L721.2,228.1L720.5,228.8L719.8,228.5L719,228.5L718.2,228.2L717.5,228.8L716.8,228.6L716,227.9L715.2,228.4L714.5,228.7L713.8,228.5L713,229.2L712.2,229.1L711.5,229.0L710.8,229.1L710,228.2L709.2,229.1L708.5,228.2L707.8,228.8L707,229.0L706.2,228.6L705.5,228.7L704.8,228.6L704,228.0L703.2,229.2L702.5,227.9L701.8,229.1L701,228.8L700.2,228.5L699.5,229.0L698.8,229.1L698,228.8L697.2,229.0L696.5,228.3L695.8,228.8L695,228.9L694.2,228.1L693.5,228.3L692.8,228.3L692,229.0L691.2,228.5L690.5,229.3L689.8,228.4L689,228.4L688.2,228.3L687.5,228.5L686.8,228.1L686,228.8L685.2,228.9L684.5,228.2L683.8,228.9L683,228.4L682.2,228.8L681.5,228.7L680.8,228.4L680,228.9L679.2,228.2L678.5,228.2L677.8,228.9L677,228.4L676.2,228.6L675.5,228.5L674.8,228.4L674,228.6L673.2,228.0L672.5,228.4L671.8,228.0L671,229.4L670.2,228.7L669.5,228.1L668.8,228.7L668,228.8L667.2,227.8L666.5,228.7L665.8,228.4L665,228.8L664.2,228.5L663.5,229.0L662.8,228.6L662,228.0L661.2,228.3L660.5,228.3L659.8,228.8L659,228.8L658.2,228.2L657.5,228.4L656.8,228.7L656,228.3L655.2,229.1L654.5,228.4L653.8,227.8L653,228.9L652.2,228.1L651.5,228.4L650.8,228.6L650,229.2L649.2,228.4L648.5,227.9L647.8,229.3L647,227.8L646.2,228.7L645.5,228.2L644.8,228.2L644,228.8L643.2,228.5L642.5,228.6L641.8,227.7L641,228.7L640.2,228.5L639.5,228.6L638.8,228.3L638,228.7L637.2,228.9L636.5,228.4L635.8,228.8L635,228.6L634.2,229.2L633.5,228.2L632.8,228.1L632,228.1L631.2,228.3L630.5,228.2L629.8,228.4L629,228.9L628.2,228.3L627.5,228.9L626.8,228.5L626,228.5L625.2,228.9L624.5,228.1L623.8,227.7L623,228.9L622.2,228.5L621.5,228.8L620.8,227.9L620,228.5L619.2,229.2L618.5,228.4L617.8,228.4L617,229.0L616.2,228.1L615.5,228.4L614.8,228.4L614,229.0L613.2,228.1L612.5,228.4L611.8,228.5L611,229.2L610.2,229.2L609.5,228.2L608.8,229.4L608,228.9L607.2,228.6L606.5,228.5L605.8,228.5L605,228.5L604.2,228.4L603.5,229.2L602.8,229.6L602,228.6L601.2,229.0L600.5,228.3L599.8,228.3L599,229.0L598.2,228.9L597.5,228.4L596.8,228.8L596,227.8L595.2,228.9L594.5,228.4L593.8,228.4L593,228.8L592.2,228.8L591.5,228.5L590.8,229.3L590,229.0L589.2,228.1L588.5,228.5L587.8,229.3L587,229.3L586.2,228.6L585.5,227.8L584.8,228.2L584,228.1L583.2,228.5L582.5,228.5L581.8,228.7L581,228.0L580.2,228.1L579.5,228.3L578.8,229.1L578,228.6L577.2,228.9L576.5,228.8L575.8,228.5L575,228.2L574.2,228.4L573.5,228.6L572.8,228.2L572,228.7L571.2,228.7L570.5,229.1L569.8,228.2L569,228.7L568.2,228.5L567.5,227.9L566.8,228.9L566,228.4L565.2,228.7L564.5,228.1L563.8,229.3L563,228.8L562.2,228.8L561.5,228.6L560.8,229.2L560,228.7L559.2,228.6L558.5,228.6L557.8,228.4L557,228.4L556.2,228.6L555.5,228.4L554.8,228.3L554,228.7L553.2,228.4L552.5,229.9L551.8,228.3L551,228.3L550.2,228.6L549.5,229.3L548.8,228.8L548,228.4L547.2,228.5L546.5,228.2L545.8,228.0L545,228.3L544.2,228.7L543.5,228.8L542.8,228.7L542,228.7L541.2,228.4L540.5,229.6L539.8,228.4L539,228.4L538.2,228.1L537.5,228.8L536.8,228.0L536,228.2L535.2,228.5L534.5,228.7L533.8,228.5L533,228.5L532.2,228.6L531.5,228.4L530.8,228.7L530,229.1L529.2,228.4L528.5,228.3L527.8,229.0L527,228.3L526.2,228.2L525.5,228.2L524.8,228.3L524,228.2L523.2,228.2L522.5,228.7L521.8,228.1L521,229.1L520.2,227.9L519.5,229.0L518.8,228.7L518,228.3L517.2,228.4L516.5,227.8L515.8,228.5L515,228.5L514.2,228.4L513.5,228.8L512.8,228.5L512,228.4L511.2,228.6L510.5,227.8L509.8,228.0L509,228.9L508.2,228.0L507.5,229.3L506.8,228.6L506,228.7L505.2,228.4L504.5,228.7L503.8,229.4L503,229.2L502.2,229.2L501.5,229.0L500.8,228.7L500,228.9L499.2,228.8L498.5,228.5L497.8,228.6L497,228.6L496.2,228.7L495.5,227.8L494.8,229.0L494,228.7L493.2,228.9L492.5,228.1L491.8,229.1L491,228.4L490.2,228.1L489.5,228.5L488.8,228.8L488,229.3L487.2,228.3L486.5,228.2L485.8,229.3L485,228.3L484.2,228.0L483.5,228.8L482.8,228.5L482,228.5L481.2,228.4L480.5,229.0L479.8,228.9L479,228.3L478.2,228.9L477.5,228.2L476.8,228.2L476,228.3L475.2,228.6L474.5,228.6L473.8,228.2L473,228.3L472.2,229.0L471.5,228.5L470.8,228.2L470,228.1L469.2,229.0L468.5,228.0L467.8,227.8L467,228.3L466.2,228.0L465.5,228.6L464.8,227.9L464,228.4L463.2,228.7L462.5,228.4L461.8,228.9L461,228.0L460.2,228.5L459.5,227.8L458.8,228.2L458,228.2L457.2,228.1L456.5,228.0L455.8,228.4L455,228.6L454.2,229.3L453.5,228.9L452.8,228.4L452,228.9L451.2,228.5L450.5,228.8L449.8,228.9L449,228.8L448.2,228.4L447.5,229.1L446.8,228.5L446,229.4L445.2,228.3L444.5,228.7L443.8,229.4L443,228.4L442.2,228.7L441.5,228.8L440.8,228.2L440,228.7L439.2,229.5L438.5,228.3L437.8,228.8L437,228.8L436.2,228.1L435.5,229.2L434.8,228.7L434,228.7L433.2,228.9L432.5,228.4L431.8,229.0L431,228.4L430.2,228.5L429.5,228.6L428.8,229.1L428,228.8L427.2,228.4L426.5,228.9L425.8,229.3L425,229.1L424.2,228.8L423.5,228.4L422.8,228.6L422,229.1L421.2,227.9L420.5,228.9L419.8,228.7L419,228.5L418.2,229.1L417.5,228.5L416.8,227.9L416,229.0L415.2,228.3L414.5,228.4L413.8,228.0L413,228.6L412.2,228.9L411.5,228.8L410.8,228.6L410,228.6L409.2,228.1L408.5,228.5L407.8,228.2L407,229.0L406.2,228.4L405.5,228.6L404.8,228.2L404,228.9L403.2,228.6L402.5,228.9L401.8,228.3L401,228.1L400.2,228.3L399.5,228.4L398.8,228.8L398,228.4L397.2,228.6L396.5,228.4L395.8,228.9L395,228.6L394.2,228.2L393.5,228.7L392.8,228.0L392,228.7L391.2,228.4L390.5,228.4L389.8,228.3L389,228.0L388.2,228.4L387.5,228.3L386.8,228.9L386,228.3L385.2,227.7L384.5,228.3L383.8,228.1L383,229.5L382.2,228.2L381.5,228.9L380.8,228.2L380,228.5L379.2,228.2L378.5,229.1L377.8,229.5L377,228.5L376.2,228.9L375.5,228.6L374.8,229.0L374,227.9L373.2,228.9L372.5,229.3L371.8,228.8L371,228.4L370.2,228.0L369.5,229.3L368.8,228.1L368,228.3L367.2,229.1L366.5,228.9L365.8,229.2L365,228.6L364.2,228.2L363.5,228.9L362.8,228.8L362,229.1L361.2,228.3L360.5,228.6L359.8,228.6L359,229.2L358.2,228.3L357.5,228.3L356.8,228.4L356,228.6L355.2,228.4L354.5,228.8L353.8,228.5L353,229.0L352.2,228.4L351.5,228.8L350.8,228.5L350,229.0L349.2,228.7L348.5,229.2L347.8,228.8L347,228.7L346.2,228.3L345.5,228.7L344.8,228.4L344,228.7L343.2,229.0L342.5,229.0L341.8,228.3L341,228.5L340.2,228.9L339.5,228.5L338.8,228.0L338,229.0L337.2,228.8L336.5,228.4L335.8,228.6L335,228.3L334.2,228.8L333.5,228.8L332.8,228.7L332,229.1L331.2,228.4L330.5,228.1L329.8,228.6L329,228.7L328.2,229.2L327.5,228.5L326.8,228.8L326,228.7L325.2,228.2L324.5,228.5L323.8,228.3L323,228.3L322.2,228.3L321.5,229.4L320.8,228.3L320,227.9L319.2,228.6L318.5,228.2L317.8,228.2L317,229.1L316.2,229.0L315.5,228.2L314.8,228.4L314,228.6L313.2,228.8L312.5,228.8L311.8,229.3L311,228.9L310.2,228.0L309.5,228.3L308.8,228.3L308,228.6L307.2,228.2L306.5,228.4L305.8,228.5L305,228.7L304.2,228.3L303.5,228.4L302.8,228.3L302,228.6L301.2,228.5L300.5,228.4L299.8,228.7L299,227.9L298.2,228.8L297.5,228.6L296.8,228.4L296,228.8L295.2,228.6L294.5,228.9L293.8,229.4L293,228.4L292.2,228.1L291.5,228.4L290.8,228.4L290,228.7L289.2,229.0L288.5,228.5L287.8,228.9L287,228.8L286.2,228.4L285.5,228.2L284.8,228.3L284,228.0L283.2,228.7L282.5,228.8L281.8,227.9L281,228.0L280.2,228.9L279.5,229.0L278.8,228.5L278,228.2L277.2,228.5L276.5,228.3L275.8,228.3L275,228.7L274.2,228.8L273.5,227.8L272.8,228.6L272,228.4L271.2,229.3L270.5,228.4L269.8,229.0L269,228.4L268.2,228.2L267.5,228.8L266.8,228.5L266,228.3L265.2,228.9L264.5,229.1L263.8,228.8L263,228.9L262.2,228.8L261.5,228.6L260.8,228.5L260,229.0L259.2,227.9L258.5,228.1L257.8,228.7L257,228.4L256.2,229.1L255.5,229.0L254.8,228.0L254,228.2L253.2,229.8L252.5,228.4L251.8,227.9L251,228.6L250.2,229.8L249.5,228.9L248.8,228.2L248,228.5L247.2,228.1L246.5,228.3L245.8,228.2L245,229.7L244.2,228.8L243.5,228.4L242.8,229.0L242,228.2L241.2,229.0L240.5,228.7L239.8,228.8L239,227.9L238.2,229.0L237.5,228.9L236.8,229.4L236,228.8L235.2,228.5L234.5,228.7L233.8,228.6L233,228.1L232.2,228.5L231.5,228.9L230.8,228.0L230,228.2L229.2,228.7L228.5,228.8L227.8,228.6L227,227.8L226.2,228.9L225.5,228.6L224.8,228.4L224,229.2L223.2,229.0L222.5,229.2L221.8,228.6L221,228.1L220.2,228.5L219.5,228.1L218.8,228.6L218,228.4L217.2,228.3L216.5,228.3L215.8,228.1L215,229.0L214.2,228.7L213.5,229.0L212.8,228.9L212,228.7L211.2,228.9L210.5,228.1L209.8,228.8L209,227.7L208.2,228.5L207.5,228.4L206.8,228.7L206,228.0L205.2,228.5L204.5,228.7L203.8,228.3L203,228.8L202.2,228.7L201.5,228.5L200.8,228.7L200,228.8L199.2,228.1L198.5,228.3L197.8,228.8L197,228.1L196.2,228.9L195.5,228.4L194.8,227.6L194,228.4L193.2,229.0L192.5,228.4L191.8,228.9L191,229.1L190.2,228.7L189.5,228.3L188.8,228.8L188,228.1L187.2,228.7L186.5,229.0L185.8,228.4L185,228.5L184.2,228.3L183.5,228.6L182.8,228.7L182,228.7L181.2,228.5L180.5,228.5L179.8,229.1L179,228.5L178.2,229.2L177.5,228.8L176.8,229.1L176,229.0L175.2,228.0L174.5,228.8L173.8,228.1L173,228.6L172.2,227.9L171.5,229.0L170.8,228.2L170,228.5L169.2,228.1L168.5,228.4L167.8,228.2L167,228.8L166.2,228.1L165.5,228.2L164.8,228.4L164,229.0L163.2,227.8L162.5,229.2L161.8,228.0L161,228.5L160.2,228.6L159.5,228.8L158.8,228.4L158,228.5L157.2,228.2L156.5,228.4L155.8,229.1L155,228.4L154.2,228.8L153.5,228.1L152.8,228.6L152,228.4L151.2,228.7L150.5,229.4L149.8,228.0L149,228.5L148.2,228.7L147.5,228.8L146.8,229.3L146,228.8L145.2,229.0L144.5,228.4L143.8,229.0L143,228.3L142.2,228.1L141.5,228.7L140.8,228.9L140,229.0L139.2,227.9L138.5,228.1L137.8,228.8L137,228.5L136.2,228.8L135.5,228.0L134.8,227.9L134,228.8L133.2,228.4L132.5,228.2L131.8,228.5L131,228.5L130.2,227.9L129.5,228.4L128.8,228.3L128,228.9L127.2,228.5L126.5,228.5L125.8,228.3L125,228.6L124.2,228.6L123.5,228.4L122.8,228.9L122,228.6L121.2,228.0L120.5,228.2L119.8,228.5L119,228.5L118.2,228.1L117.5,228.2L116.8,228.8L116,229.2L115.2,228.6L114.5,228.5L113.8,227.8L113,229.0L112.2,229.0L111.5,229.0L110.8,229.3L110,228.3L109.2,228.2L108.5,229.2L107.8,228.4L107,228.7L106.2,228.4L105.5,228.6L104.8,229.3L104,228.6L103.2,229.1L102.5,228.6L101.8,229.1L101,227.9L100.2,228.7L99.5,228.3L98.8,228.1L98,229.5L97.2,228.6L96.5,228.8L95.8,227.4L95,228.6L94.2,228.2L93.5,228.9L92.8,228.3L92,228.6L91.2,228.7L90.5,228.7L89.8,229.2L89,229.3L88.2,227.8L87.5,229.1L86.8,228.6L86,229.0L85.2,228.1L84.5,228.6L83.8,228.9L83,228.5L82.2,229.0L81.5,228.8L80.8,228.2L80,228.2L79.2,228.6L78.5,228.0L77.8,228.4L77,228.2L76.2,228.4L75.5,228.3L74.8,229.1L74,228.4L73.2,228.8L72.5,229.2L71.8,228.3L71,229.0L70.2,228.9L69.5,228.4L68.8,227.6L68,228.5L67.2,228.7L66.5,228.8L65.8,228.1L65,228.8L64.2,228.1L63.5,228.6L62.8,229.0L62,229.1L61.2,228.8L60.5,228.6L59.8,228.8L59,228.9Z"/>
<path fill="#ffffb4" opacity="0.35" d="M59,221.4L60.5,222.0L62,222.2L63.5,221.5L65,222.6L66.5,221.9L68,222.1L69.5,221.6L71,221.6L72.5,221.5L74,221.8L75.5,222.0L77,221.7L78.5,221.6L80,221.1L81.5,222.0L83,222.1L84.5,222.7L86,221.6L87.5,222.2L89,221.5L90.5,222.6L92,221.5L93.5,221.5L95,222.6L96.5,221.6L98,221.1L99.5,222.5L101,221.1L102.5,222.0L104,222.0L105.5,222.4L107,221.6L108.5,222.0L110,221.8L111.5,222.0L113,221.9L114.5,222.7L116,222.6L117.5,220.8L119,220.8L120.5,222.2L122,222.2L123.5,221.8L125,221.5L126.5,221.1L128,221.7L129.5,222.0L131,221.9L132.5,221.1L134,221.2L135.5,222.4L137,222.3L138.5,221.9L140,221.8L141.5,221.9L143,222.0L144.5,221.6L146,222.3L147.5,222.0L149,221.3L150.5,221.5L152,222.2L153.5,221.7L155,221.4L156.5,221.9L158,222.0L159.5,222.0L161,221.6L162.5,221.6L164,221.6L165.5,221.2L167,221.5L168.5,222.1L170,221.7L171.5,221.5L173,221.9L174.5,222.1L176,222.5L177.5,222.2L179,221.2L180.5,222.2L182,221.6L183.5,221.6L185,221.9L186.5,221.7L188,221.4L189.5,221.6L191,221.1L192.5,220.8L194,223.2L195.5,221.3L197,222.3L198.5,222.0L200,222.4L201.5,221.8L203,222.2L204.5,221.3L206,221.3L207.5,220.7L209,221.6L210.5,221.6L212,221.1L213.5,221.7L215,221.1L216.5,221.9L218,222.1L219.5,221.8L221,221.5L222.5,222.3L224,221.6L225.5,221.5L227,221.6L228.5,222.2L230,221.2L231.5,222.4L233,221.6L234.5,221.3L236,221.7L237.5,221.2L239,222.5L240.5,221.1L242,222.1L243.5,221.7L245,221.7L246.5,221.9L248,221.2L249.5,222.0L251,221.5L252.5,221.7L254,222.0L255.5,222.2L257,221.9L258.5,222.0L260,222.1L261.5,221.7L263,221.1L264.5,222.0L266,221.7L267.5,221.9L269,221.2L270.5,221.8L272,221.9L273.5,222.0L275,221.8L276.5,221.6L278,221.6L279.5,221.7L281,221.6L282.5,221.8L284,221.9L285.5,222.1L287,221.5L288.5,222.1L290,222.1L291.5,221.8L293,222.3L294.5,221.9L296,221.2L297.5,221.0L299,221.9L300.5,221.8L302,221.3L303.5,221.4L305,222.7L306.5,221.9L308,222.2L309.5,221.0L311,221.5L312.5,221.9L314,221.5L315.5,222.1L317,221.5L318.5,221.7L320,221.8L321.5,221.1L323,222.2L324.5,221.4L326,222.6L327.5,222.5L329,222.4L330.5,221.1L332,221.7L333.5,222.1L335,222.3L336.5,222.5L338,222.1L339.5,221.9L341,221.6L342.5,222.6L344,222.1L345.5,222.2L347,221.3L348.5,221.7L350,221.1L351.5,221.7L353,221.5L354.5,221.3L356,223.2L357.5,221.8L359,221.4L360.5,221.7L362,221.8L363.5,221.9L365,221.6L366.5,222.6L368,221.2L369.5,221.0L371,222.0L372.5,221.3L374,221.9L375.5,222.3L377,221.5L378.5,221.4L380,221.6L381.5,221.6L383,221.2L384.5,222.3L386,221.6L387.5,221.9L389,222.0L390.5,221.5L392,221.8L393.5,221.5L395,221.2L396.5,220.9L398,222.0L399.5,222.0L401,222.1L402.5,221.6L404,221.5L405.5,222.6L407,222.0L408.5,222.2L410,221.5L411.5,221.7L413,222.0L414.5,221.7L416,222.7L417.5,222.7L419,221.3L420.5,221.9L422,221.3L423.5,222.3L425,221.1L426.5,221.6L428,221.7L429.5,222.7L431,222.2L432.5,222.6L434,222.1L435.5,221.4L437,221.9L438.5,222.0L440,221.9L441.5,221.4L443,221.9L444.5,221.7L446,221.5L447.5,221.4L449,221.7L450.5,221.7L452,222.4L453.5,222.6L455,221.6L456.5,222.4L458,223.2L459.5,221.7L461,222.6L462.5,222.7L464,222.0L465.5,221.5L467,221.7L468.5,222.4L470,221.5L471.5,221.8L473,222.1L474.5,221.6L476,222.0L477.5,221.8L479,221.8L480.5,221.4L482,222.1L483.5,222.0L485,221.6L486.5,221.6L488,221.6L489.5,221.6L491,221.4L492.5,221.8L494,221.6L495.5,221.8L497,222.6L498.5,222.4L500,221.4L501.5,222.2L503,221.7L504.5,221.6L506,222.2L507.5,222.6L509,221.7L510.5,222.1L512,221.8L513.5,222.8L515,221.3L516.5,221.8L518,221.9L519.5,221.2L521,222.1L522.5,222.3L524,221.8L525.5,222.4L527,222.5L528.5,222.0L530,222.2L531.5,222.6L533,221.7L534.5,222.1L536,221.9L537.5,222.1L539,221.3L540.5,221.3L542,222.1L543.5,222.7L545,222.0L546.5,221.7L548,222.1L549.5,221.6L551,222.7L552.5,221.6L554,221.0L555.5,222.5L557,221.6L558.5,221.8L560,222.2L561.5,220.9L563,221.8L564.5,221.5L566,222.0L567.5,222.1L569,221.9L570.5,221.4L572,221.7L573.5,222.2L575,221.1L576.5,221.9L578,222.4L579.5,222.6L581,221.7L582.5,221.1L584,223.3L585.5,221.4L587,222.0L588.5,222.4L590,221.9L591.5,221.4L593,222.4L594.5,221.4L596,221.6L597.5,222.8L599,221.7L600.5,222.4L602,222.4L603.5,221.3L605,221.6L606.5,221.6L608,222.6L609.5,222.0L611,222.3L612.5,221.3L614,221.7L615.5,222.6L617,221.6L618.5,220.8L620,221.4L621.5,222.0L623,222.5L624.5,221.8L626,221.5L627.5,222.1L629,222.3L630.5,221.5L632,221.8L633.5,222.0L635,221.6L636.5,222.0L638,222.3L639.5,221.5L641,222.0L642.5,222.5L644,222.3L645.5,221.8L647,221.6L648.5,221.7L650,222.2L651.5,222.3L653,222.4L654.5,222.6L656,221.4L657.5,221.3L659,222.3L660.5,221.5L662,220.9L663.5,221.8L665,221.9L666.5,222.2L668,222.3L669.5,221.7L671,221.8L672.5,222.0L674,222.2L675.5,222.6L677,221.8L678.5,221.6L680,221.4L681.5,222.0L683,221.6L684.5,222.3L686,221.7L687.5,222.6L689,222.2L690.5,222.0L692,221.2L693.5,220.9L695,221.8L696.5,221.7L698,221.8L699.5,221.9L701,222.1L702.5,222.3L704,221.9L705.5,222.2L707,221.5L708.5,221.8L710,221.9L711.5,222.2L713,220.7L714.5,221.5L716,222.1L717.5,222.1L719,221.7L720.5,222.4L722,222.9L723.5,221.6L725,221.6L726.5,221.7L728,221.3L729.5,221.2L731,222.3L732.5,222.4L734,222.5L735.5,222.1L737,221.8L738.5,221.6L740,222.9L741.5,221.7L743,222.0L744.5,222.1L746,221.5L747.5,221.6L749,221.4L750.5,220.2L752,221.8L753.5,222.0L755,221.8L756.5,222.0L758,222.2L759.5,222.3L761,221.9L762.5,221.7L764,222.0L765.5,222.1L767,221.5L768.5,221.8L770,221.9L771.5,222.3L773,222.3L774.5,221.7L776,222.5L777.5,222.4L779,222.2L780.5,222.4L782,221.5L783.5,222.7L785,222.1L786.5,221.9L788,221.6L789.5,221.7L789.5,226.5L788,226.6L786.5,226.8L785,226.6L783.5,226.4L782,225.7L780.5,226.5L779,225.5L777.5,225.9L776,226.3L774.5,226.6L773,226.2L771.5,226.3L770,226.3L768.5,225.9L767,225.3L765.5,225.9L764,227.1L762.5,227.0L761,226.8L759.5,226.6L758,226.4L756.5,226.5L755,226.5L753.5,227.4L752,226.3L750.5,225.9L749,226.7L747.5,226.1L746,226.0L744.5,225.8L743,226.4L741.5,225.5L740,226.1L738.5,226.4L737,226.2L735.5,226.0L734,225.4L732.5,226.3L731,225.7L729.5,226.4L728,226.7L726.5,226.4L725,226.1L723.5,226.9L722,226.8L720.5,226.1L719,226.8L717.5,226.2L716,225.8L714.5,226.3L713,226.6L711.5,226.3L710,225.6L708.5,226.1L707,226.0L705.5,225.9L704,226.5L702.5,226.6L701,226.5L699.5,225.6L698,226.6L696.5,226.0L695,227.2L693.5,226.6L692,225.9L690.5,228.1L689,226.2L687.5,226.2L686,226.5L684.5,226.3L683,227.4L681.5,226.5L680,226.1L678.5,226.5L677,226.3L675.5,226.5L674,227.6L672.5,226.7L671,226.4L669.5,226.0L668,226.5L666.5,226.5L665,227.4L663.5,225.9L662,226.8L660.5,225.7L659,226.2L657.5,226.5L656,226.1L654.5,226.2L653,227.1L651.5,226.3L650,225.9L648.5,226.6L647,226.2L645.5,226.6L644,226.4L642.5,225.9L641,226.2L639.5,226.6L638,226.6L636.5,226.8L635,226.5L633.5,227.5L632,226.2L630.5,226.0L629,226.5L627.5,225.6L626,225.7L624.5,227.0L623,226.6L621.5,226.4L620,225.7L618.5,227.0L617,226.2L615.5,226.8L614,226.8L612.5,225.5L611,226.0L609.5,226.5L608,226.4L606.5,226.7L605,226.4L603.5,226.8L602,226.8L600.5,226.0L599,226.5L597.5,226.3L596,226.3L594.5,227.0L593,226.4L591.5,226.2L590,225.8L588.5,225.7L587,226.3L585.5,225.9L584,226.6L582.5,224.9L581,226.6L579.5,225.7L578,226.3L576.5,226.6L575,226.4L573.5,226.6L572,226.8L570.5,226.9L569,226.3L567.5,226.4L566,226.4L564.5,226.3L563,226.3L561.5,227.1L560,226.0L558.5,226.2L557,226.8L555.5,226.3L554,226.5L552.5,226.0L551,226.3L549.5,226.7L548,226.5L546.5,225.9L545,225.7L543.5,226.2L542,225.5L540.5,225.7L539,226.3L537.5,226.3L536,226.3L534.5,227.2L533,226.5L531.5,226.3L530,226.1L528.5,227.0L527,226.8L525.5,225.9L524,225.4L522.5,226.9L521,225.2L519.5,226.4L518,226.0L516.5,227.3L515,226.2L513.5,224.8L512,226.4L510.5,226.4L509,225.7L507.5,226.5L506,226.3L504.5,226.9L503,225.6L501.5,226.8L500,226.3L498.5,226.8L497,226.5L495.5,226.4L494,226.2L492.5,225.6L491,226.1L489.5,226.3L488,226.1L486.5,226.9L485,226.1L483.5,225.5L482,226.6L480.5,225.8L479,225.7L477.5,225.9L476,227.0L474.5,226.7L473,226.6L471.5,226.3L470,226.9L468.5,226.0L467,226.2L465.5,226.2L464,226.3L462.5,225.9L461,226.1L459.5,225.6L458,226.3L456.5,226.9L455,226.4L453.5,226.6L452,226.3L450.5,226.4L449,226.7L447.5,226.1L446,226.4L444.5,226.6L443,226.0L441.5,226.5L440,226.7L438.5,226.6L437,225.5L435.5,225.7L434,226.5L432.5,226.4L431,226.0L429.5,225.9L428,226.5L426.5,225.9L425,226.4L423.5,226.8L422,226.4L420.5,226.0L419,225.4L417.5,226.4L416,226.6L414.5,227.3L413,226.7L411.5,226.4L410,226.2L408.5,226.0L407,227.6L405.5,226.4L404,226.0L402.5,227.5L401,226.6L399.5,225.3L398,225.4L396.5,226.1L395,226.4L393.5,225.9L392,226.0L390.5,225.7L389,226.9L387.5,225.8L386,227.1L384.5,226.3L383,227.2L381.5,226.8L380,226.6L378.5,226.3L377,225.1L375.5,225.8L374,226.4L372.5,225.9L371,226.6L369.5,226.2L368,226.5L366.5,226.9L365,226.8L363.5,226.7L362,226.4L360.5,226.6L359,227.4L357.5,226.7L356,226.0L354.5,226.4L353,226.1L351.5,226.7L350,226.2L348.5,226.7L347,226.3L345.5,226.5L344,226.3L342.5,226.4L341,226.2L339.5,226.0L338,226.7L336.5,226.9L335,226.5L333.5,226.1L332,226.3L330.5,225.5L329,226.3L327.5,225.7L326,226.5L324.5,226.5L323,226.2L321.5,226.4L320,226.0L318.5,225.4L317,226.2L315.5,225.0L314,226.0L312.5,226.5L311,226.5L309.5,226.3L308,226.9L306.5,226.3L305,225.7L303.5,226.4L302,225.9L300.5,226.2L299,226.9L297.5,226.7L296,226.4L294.5,226.0L293,226.5L291.5,226.3L290,226.1L288.5,226.4L287,226.4L285.5,226.8L284,226.5L282.5,227.0L281,225.8L279.5,226.0L278,226.2L276.5,226.6L275,226.6L273.5,226.5L272,226.7L270.5,226.7L269,226.3L267.5,226.2L266,226.2L264.5,226.7L263,226.3L261.5,226.6L260,226.0L258.5,226.2L257,226.2L255.5,226.6L254,226.9L252.5,226.4L251,225.1L249.5,226.0L248,226.1L246.5,226.2L245,225.8L243.5,226.8L242,226.5L240.5,225.9L239,225.8L237.5,226.5L236,226.6L234.5,226.6L233,226.8L231.5,226.9L230,226.9L228.5,226.5L227,225.8L225.5,227.4L224,225.8L222.5,225.8L221,226.5L219.5,225.9L218,227.1L216.5,226.4L215,226.1L213.5,226.4L212,226.9L210.5,226.3L209,225.9L207.5,226.4L206,226.3L204.5,226.5L203,225.7L201.5,225.8L200,225.6L198.5,226.2L197,226.5L195.5,225.9L194,225.6L192.5,226.2L191,226.4L189.5,226.2L188,226.3L186.5,226.2L185,226.1L183.5,226.1L182,226.3L180.5,226.5L179,226.4L177.5,227.0L176,226.1L174.5,226.8L173,226.8L171.5,226.3L170,225.2L168.5,226.6L167,227.0L165.5,226.1L164,226.2L162.5,226.4L161,226.5L159.5,225.5L158,225.7L156.5,226.0L155,227.1L153.5,226.4L152,226.0L150.5,226.5L149,226.1L147.5,226.0L146,226.2L144.5,226.9L143,226.4L141.5,226.1L140,226.4L138.5,226.4L137,226.4L135.5,225.7L134,227.0L132.5,226.4L131,226.3L129.5,226.9L128,226.9L126.5,226.1L125,226.4L123.5,226.9L122,225.9L120.5,226.7L119,226.5L117.5,225.9L116,226.0L114.5,226.9L113,225.5L111.5,226.4L110,226.6L108.5,226.0L107,225.5L105.5,226.4L104,225.8L102.5,226.3L101,227.1L99.5,226.1L98,226.2L96.5,226.0L95,226.6L93.5,226.5L92,226.9L90.5,226.5L89,226.0L87.5,226.6L86,226.5L84.5,227.3L83,225.8L81.5,226.3L80,226.0L78.5,225.3L77,226.1L75.5,226.6L74,227.2L72.5,225.8L71,226.4L69.5,226.6L68,226.1L66.5,226.5L65,226.5L63.5,226.2L62,226.6L60.5,227.0L59,226.1Z"/>
<path fill="#ffffb4" opacity="0.6" d="M59,223.5L61,223.0L63,222.7L65,222.4L67,222.7L69,223.7L71,223.8L73,222.5L75,223.4L77,223.4L79,223.4L81,222.5L83,222.9L85,223.3L87,222.8L89,222.9L91,223.3L93,223.2L95,222.8L97,223.2L99,223.7L101,222.7L103,223.9L105,222.8L107,223.5L109,223.4L111,223.2L113,223.2L115,223.2L117,223.3L119,223.1L121,223.0L123,223.5L125,222.7L127,222.8L129,223.6L131,223.1L133,223.2L135,222.9L137,223.1L139,223.3L141,222.9L143,223.0L145,222.9L147,223.2L149,223.2L151,222.7L153,223.0L155,223.2L157,223.3L159,222.5L161,223.1L163,223.1L165,222.9L167,223.0L169,223.0L171,222.7L173,223.7L175,223.2L177,223.3L179,223.5L181,223.5L183,223.1L185,223.0L187,222.8L189,222.9L191,222.9L193,222.8L195,223.1L197,223.2L199,223.0L201,223.3L203,223.1L205,223.3L207,222.4L209,222.7L211,223.6L213,223.7L215,222.8L217,223.0L219,223.5L221,223.3L223,222.9L225,223.1L227,223.1L229,223.3L231,223.4L233,223.8L235,223.2L237,223.2L239,223.1L241,223.1L243,222.9L245,222.8L247,223.1L249,222.4L251,223.1L253,223.4L255,222.6L257,223.2L259,223.4L261,223.5L263,222.8L265,222.9L267,222.9L269,223.2L271,222.7L273,223.1L275,222.8L277,223.1L279,222.4L281,222.5L283,223.1L285,222.9L287,222.8L289,222.9L291,223.3L293,223.2L295,222.8L297,223.4L299,222.6L301,223.4L303,223.2L305,223.0L307,223.1L309,222.7L311,223.1L313,222.6L315,222.6L317,223.1L319,223.5L321,223.1L323,223.4L325,223.0L327,223.3L329,222.7L331,223.3L333,222.6L335,223.5L337,222.9L339,222.5L341,223.9L343,222.9L345,222.8L347,223.4L349,222.8L351,222.9L353,222.5L355,223.3L357,223.2L359,223.3L361,222.5L363,223.4L365,223.4L367,222.6L369,223.2L371,223.4L373,223.5L375,223.1L377,223.5L379,223.3L381,223.4L383,223.5L385,223.2L387,222.6L389,223.0L391,222.8L393,223.5L395,223.1L397,222.8L399,223.2L401,223.1L403,223.8L405,223.3L407,223.1L409,222.8L411,223.0L413,222.7L415,223.3L417,223.4L419,222.7L421,223.0L423,223.0L425,222.8L427,222.7L429,223.3L431,223.5L433,222.6L435,222.8L437,222.8L439,223.2L441,223.1L443,223.6L445,223.4L447,223.2L449,223.1L451,223.2L453,222.8L455,223.3L457,223.3L459,222.7L461,223.7L463,222.2L465,223.3L467,222.8L469,223.0L471,222.7L473,223.0L475,222.5L477,223.4L479,222.9L481,223.0L483,223.0L485,222.6L487,223.1L489,223.0L491,222.9L493,223.1L495,222.6L497,223.7L499,223.2L501,222.9L503,223.7L505,223.1L507,223.0L509,222.4L511,222.9L513,223.7L515,223.2L517,222.3L519,222.5L521,223.3L523,223.3L525,223.3L527,223.2L529,223.0L531,223.2L533,223.6L535,223.1L537,223.0L539,223.1L541,223.2L543,223.0L545,223.3L547,223.4L549,223.1L551,223.5L553,223.1L555,223.2L557,223.0L559,223.2L561,223.0L563,223.2L565,223.1L567,222.8L569,223.4L571,223.3L573,223.5L575,223.3L577,222.9L579,222.9L581,223.1L583,223.1L585,222.9L587,223.8L589,223.1L591,223.1L593,223.0L595,223.3L597,222.8L599,222.9L601,222.8L603,222.8L605,223.2L607,223.0L609,222.8L611,223.3L613,223.1L615,223.2L617,222.7L619,222.6L621,223.2L623,222.9L625,222.4L627,222.3L629,223.6L631,223.8L633,222.8L635,223.0L637,223.1L639,223.4L641,222.7L643,222.6L645,223.4L647,222.7L649,222.9L651,223.3L653,223.0L655,222.4L657,222.9L659,222.6L661,222.6L663,223.6L665,222.9L667,222.5L669,222.9L671,223.1L673,222.6L675,223.5L677,223.0L679,223.1L681,222.9L683,223.5L685,223.2L687,223.1L689,223.2L691,223.1L693,222.5L695,223.5L697,222.7L699,222.9L701,223.0L703,223.3L705,223.2L707,223.0L709,223.2L711,223.0L713,223.2L715,223.0L717,223.7L719,222.9L721,222.7L723,223.0L725,223.0L727,223.4L729,222.9L731,222.1L733,222.9L735,222.7L737,222.9L739,222.5L741,223.3L743,223.2L745,223.2L747,222.8L749,223.1L751,222.7L753,223.3L755,222.7L757,223.2L759,223.0L761,223.3L763,223.3L765,223.4L767,222.9L769,223.4L771,223.5L773,222.1L775,222.4L777,223.2L779,222.6L781,223.3L783,223.6L785,223.8L787,223.2L789,223.0L789,224.9L787,225.3L785,225.2L783,225.1L781,225.1L779,224.7L777,225.5L775,224.8L773,225.4L771,225.8L769,225.4L767,225.3L765,225.0L763,225.3L761,225.5L759,225.1L757,225.7L755,225.0L753,224.7L751,225.1L749,225.0L747,225.1L745,225.4L743,225.6L741,225.2L739,224.8L737,225.6L735,225.2L733,224.9L731,224.9L729,225.6L727,225.2L725,225.5L723,225.0L721,224.9L719,225.0L717,224.7L715,224.9L713,225.0L711,225.0L709,224.9L707,224.5L705,225.0L703,225.6L701,225.2L699,225.6L697,224.8L695,225.5L693,225.4L691,225.1L689,225.2L687,225.7L685,224.8L683,224.6L681,225.3L679,224.9L677,225.1L675,225.7L673,225.1L671,225.3L669,225.4L667,225.2L665,224.8L663,226.0L661,224.7L659,225.3L657,224.8L655,225.6L653,225.1L651,224.8L649,225.3L647,225.5L645,225.3L643,225.4L641,224.7L639,225.0L637,225.0L635,225.5L633,225.0L631,225.1L629,224.6L627,225.4L625,225.9L623,225.0L621,224.7L619,224.8L617,225.0L615,225.6L613,225.3L611,225.2L609,225.2L607,225.2L605,225.9L603,225.2L601,225.6L599,225.2L597,225.1L595,224.9L593,225.1L591,225.2L589,224.3L587,224.7L585,225.2L583,225.2L581,224.8L579,224.7L577,225.2L575,225.0L573,225.3L571,225.1L569,225.5L567,224.9L565,226.5L563,225.0L561,224.3L559,225.6L557,224.8L555,224.8L553,225.2L551,226.0L549,225.5L547,225.2L545,225.3L543,225.7L541,225.2L539,225.3L537,225.1L535,225.4L533,225.0L531,225.0L529,225.4L527,225.3L525,225.4L523,224.6L521,224.7L519,225.4L517,225.4L515,225.6L513,225.2L511,225.0L509,225.0L507,225.4L505,225.9L503,224.6L501,224.8L499,224.8L497,224.5L495,224.7L493,225.2L491,224.8L489,225.4L487,224.9L485,225.2L483,225.1L481,225.1L479,225.4L477,225.1L475,224.2L473,225.2L471,224.9L469,224.9L467,225.1L465,225.3L463,225.5L461,225.3L459,225.4L457,224.5L455,225.9L453,224.9L451,225.6L449,225.4L447,225.4L445,224.2L443,225.1L441,225.0L439,225.4L437,225.0L435,225.9L433,224.8L431,224.8L429,225.2L427,224.4L425,225.3L423,225.0L421,225.0L419,224.3L417,224.9L415,225.4L413,225.1L411,225.1L409,224.9L407,224.9L405,225.6L403,225.4L401,225.1L399,224.6L397,224.5L395,225.1L393,224.9L391,224.5L389,225.0L387,225.0L385,224.6L383,225.1L381,225.4L379,224.6L377,225.4L375,224.9L373,225.0L371,225.2L369,225.6L367,225.0L365,225.3L363,225.0L361,224.9L359,225.4L357,224.8L355,225.6L353,224.6L351,225.0L349,224.9L347,224.9L345,225.7L343,225.3L341,225.3L339,225.3L337,225.0L335,224.8L333,224.9L331,225.0L329,225.6L327,224.9L325,225.4L323,225.3L321,225.0L319,225.1L317,225.8L315,225.4L313,225.7L311,224.9L309,225.7L307,225.5L305,225.0L303,224.9L301,224.7L299,225.0L297,225.1L295,225.3L293,225.0L291,225.8L289,225.4L287,225.1L285,225.3L283,225.2L281,225.6L279,225.3L277,225.6L275,224.4L273,224.7L271,224.8L269,224.9L267,225.3L265,225.3L263,225.8L261,225.1L259,224.9L257,225.3L255,224.7L253,225.7L251,224.9L249,225.4L247,225.5L245,224.4L243,225.1L241,224.5L239,225.2L237,225.4L235,224.8L233,225.1L231,225.0L229,225.3L227,225.0L225,225.1L223,224.8L221,225.0L219,225.1L217,225.4L215,225.0L213,225.3L211,225.0L209,225.5L207,225.3L205,225.1L203,225.7L201,225.7L199,225.2L197,225.2L195,225.1L193,225.0L191,224.8L189,225.6L187,225.6L185,224.4L183,225.4L181,225.5L179,225.5L177,225.3L175,225.0L173,225.3L171,225.2L169,225.3L167,224.9L165,224.6L163,225.2L161,225.1L159,225.0L157,225.6L155,225.0L153,225.1L151,224.6L149,225.4L147,225.3L145,225.6L143,224.6L141,225.0L139,224.4L137,225.6L135,225.4L133,225.6L131,225.3L129,224.9L127,225.1L125,224.8L123,224.7L121,224.7L119,225.2L117,224.9L115,225.9L113,225.1L111,225.2L109,225.4L107,224.7L105,224.8L103,225.2L101,224.9L99,224.8L97,225.1L95,224.8L93,225.2L91,225.1L89,224.8L87,225.3L85,225.4L83,224.9L81,225.0L79,225.5L77,225.7L75,225.0L73,225.6L71,225.0L69,225.5L67,225.6L65,224.3L63,225.0L61,224.9L59,224.9Z"/>
</svg>
<div class="t" style="left:48.60px;top:79.70px;color:#00c000;font-size:6.4px;letter-spacing:-0.3px">C4</div>
<svg style="left:55.2px;top:80.60px" width="4" height="6"><path d="M0.2,0.6L3,2.8L0.2,5" fill="none" stroke="#00c000" stroke-width="1"/></svg>
<div class="t" style="left:48.60px;top:133.50px;color:#00b4b4;font-size:6.4px;letter-spacing:-0.3px">C3</div>
<svg style="left:55.2px;top:134.40px" width="4" height="6"><path d="M0.2,0.6L3,2.8L0.2,5" fill="none" stroke="#00b4b4" stroke-width="1"/></svg>
<div class="t" style="left:48.60px;top:177.40px;color:#c8006a;font-size:6.4px;letter-spacing:-0.3px">C2</div>
<svg style="left:55.2px;top:178.30px" width="4" height="6"><path d="M0.2,0.6L3,2.8L0.2,5" fill="none" stroke="#c8006a" stroke-width="1"/></svg>
<svg style="left:48px;top:219.80px" width="11" height="8"><path d="M0.6,0.2H8.6L9.8,3.6L8.6,7H0.6Q0,7 0,6.4V0.8Q0,0.2 0.6,0.2Z" fill="#f0f000"/></svg>
<div class="t" style="left:49.60px;top:219.60px;color:#4a4a00;font-size:6.2px;font-weight:bold;letter-spacing:-0.2px">C1</div>
<svg style="left:0;top:0" width="840" height="420"><path d="M420.5,30.1 L429.1,30.1 L424.8,35Z" fill="#3a84f2"/></svg>
<svg style="left:755px;top:21px" width="10" height="8"><path d="M1.5,2.5H3L3.6,1.4H5.4L6,2.5H7.5V6.5H1.5Z" fill="none" stroke="#b4b4b4" stroke-width="1"/><circle cx="4.5" cy="4.3" r="1.1" fill="none" stroke="#b4b4b4" stroke-width="0.9"/></svg>
<svg style="left:767px;top:21px" width="8" height="8"><path d="M1,3.3H3.5V1ZM4.8,1V3.3H7.2ZM1,4.7H3.5V7ZM4.8,7V4.7H7.2Z" fill="#a8a8a8"/></svg>
<svg style="left:779px;top:20px" width="8" height="9"><path d="M3.5,8V2.2Q3.5,1.2 4.5,1.8Q6.8,3.2 6.8,8" fill="none" stroke="#b8b8b8" stroke-width="1"/><circle cx="2.2" cy="6" r="1.2" fill="none" stroke="#b0b0b0" stroke-width="0.9"/></svg>
<div class="a" style="left:47.00px;top:327.00px;width:746.00px;height:66.00px;background:#141414;"></div>
<div class="a" style="left:49.00px;top:328.80px;width:729.50px;height:8.20px;background:#1e1e1e;"></div>
<div class="a" style="left:121.50px;top:328.80px;width:0.80px;height:8.20px;background:#181818;"></div>
<div class="a" style="left:194.50px;top:328.80px;width:0.80px;height:8.20px;background:#181818;"></div>
<div class="a" style="left:267.50px;top:328.80px;width:0.80px;height:8.20px;background:#181818;"></div>
<div class="a" style="left:340.50px;top:328.80px;width:0.80px;height:8.20px;background:#181818;"></div>
<div class="t" style="left:52.00px;top:329.30px;color:#dcdcdc;letter-spacing:-0.3px">Measure</div>
<div class="t" style="left:124.30px;top:329.30px;color:#e6e000;letter-spacing:-0.35px">1.Stdev(C1)</div>
<div class="a" style="left:189.30px;top:332.40px;width:3.80px;height:0.80px;background:#3a3a3a;"></div>
<div class="t" style="left:197.25px;top:329.30px;color:#e0107a;letter-spacing:-0.35px">2.Stdev(C2)</div>
<div class="a" style="left:262.30px;top:332.40px;width:3.80px;height:0.80px;background:#3a3a3a;"></div>
<div class="t" style="left:270.20px;top:329.30px;color:#19c4d6;letter-spacing:-0.35px">3.Stdev(C3)</div>
<div class="a" style="left:335.30px;top:332.40px;width:3.80px;height:0.80px;background:#3a3a3a;"></div>
<div class="t" style="left:343.15px;top:329.30px;color:#19d019;letter-spacing:-0.35px">4.Stdev(C4)</div>
<div class="a" style="left:408.30px;top:332.40px;width:3.80px;height:0.80px;background:#3a3a3a;"></div>
<div class="t" style="left:52.00px;top:336.98px;color:#dcdcdc;letter-spacing:-0.3px">Value</div>
<div class="t" style="left:124.30px;top:336.98px;color:#dcdcdc;letter-spacing:-0.35px">163.2866μV</div>
<div class="t" style="left:197.25px;top:336.98px;color:#dcdcdc;letter-spacing:-0.35px">164.9086μV</div>
<div class="t" style="left:270.20px;top:336.98px;color:#dcdcdc;letter-spacing:-0.35px">171.3165μV</div>
<div class="t" style="left:343.15px;top:336.98px;color:#dcdcdc;letter-spacing:-0.35px">181.6472μV</div>
<div class="a" style="left:49.00px;top:344.16px;width:364.30px;height:7.68px;background:#1e1e1e;"></div>
<div class="t" style="left:52.00px;top:344.66px;color:#dcdcdc;letter-spacing:-0.3px">Mean</div>
<div class="t" style="left:124.30px;top:344.66px;color:#dcdcdc;letter-spacing:-0.35px">165.372253μV</div>
<div class="t" style="left:197.25px;top:344.66px;color:#dcdcdc;letter-spacing:-0.35px">165.692418μV</div>
<div class="t" style="left:270.20px;top:344.66px;color:#dcdcdc;letter-spacing:-0.35px">173.189896μV</div>
<div class="t" style="left:343.15px;top:344.66px;color:#dcdcdc;letter-spacing:-0.35px">181.156940μV</div>
<div class="t" style="left:52.00px;top:352.34px;color:#dcdcdc;letter-spacing:-0.3px">Min</div>
<div class="t" style="left:124.30px;top:352.34px;color:#dcdcdc;letter-spacing:-0.35px">161.3421μV</div>
<div class="t" style="left:197.25px;top:352.34px;color:#dcdcdc;letter-spacing:-0.35px">162.1637μV</div>
<div class="t" style="left:270.20px;top:352.34px;color:#dcdcdc;letter-spacing:-0.35px">170.1353μV</div>
<div class="t" style="left:343.15px;top:352.34px;color:#dcdcdc;letter-spacing:-0.35px">177.0678μV</div>
<div class="a" style="left:49.00px;top:359.52px;width:364.30px;height:7.68px;background:#1e1e1e;"></div>
<div class="t" style="left:52.00px;top:360.02px;color:#dcdcdc;letter-spacing:-0.3px">Max</div>
<div class="t" style="left:124.30px;top:360.02px;color:#dcdcdc;letter-spacing:-0.35px">169.4811μV</div>
<div class="t" style="left:197.25px;top:360.02px;color:#dcdcdc;letter-spacing:-0.35px">169.0330μV</div>
<div class="t" style="left:270.20px;top:360.02px;color:#dcdcdc;letter-spacing:-0.35px">178.9623μV</div>
<div class="t" style="left:343.15px;top:360.02px;color:#dcdcdc;letter-spacing:-0.35px">187.3472μV</div>
<div class="t" style="left:52.00px;top:367.70px;color:#dcdcdc;letter-spacing:-0.3px">Pk-Pk</div>
<div class="t" style="left:124.30px;top:367.70px;color:#dcdcdc;letter-spacing:-0.35px">8.1390μV</div>
<div class="t" style="left:197.25px;top:367.70px;color:#dcdcdc;letter-spacing:-0.35px">6.8693μV</div>
<div class="t" style="left:270.20px;top:367.70px;color:#dcdcdc;letter-spacing:-0.35px">8.8270μV</div>
<div class="t" style="left:343.15px;top:367.70px;color:#dcdcdc;letter-spacing:-0.35px">10.2794μV</div>
<div class="a" style="left:49.00px;top:374.88px;width:364.30px;height:7.68px;background:#1e1e1e;"></div>
<div class="t" style="left:52.00px;top:375.38px;color:#dcdcdc;letter-spacing:-0.3px">Stdev</div>
<div class="t" style="left:124.30px;top:375.38px;color:#dcdcdc;letter-spacing:-0.35px">1.679511μV</div>
<div class="t" style="left:197.25px;top:375.38px;color:#dcdcdc;letter-spacing:-0.35px">1.180562μV</div>
<div class="t" style="left:270.20px;top:375.38px;color:#dcdcdc;letter-spacing:-0.35px">1.613238μV</div>
<div class="t" style="left:343.15px;top:375.38px;color:#dcdcdc;letter-spacing:-0.35px">1.849394μV</div>
<div class="t" style="left:52.00px;top:383.06px;color:#dcdcdc;letter-spacing:-0.3px">Count</div>
<div class="t" style="left:124.30px;top:383.06px;color:#dcdcdc;letter-spacing:-0.35px">172</div>
<div class="t" style="left:197.25px;top:383.06px;color:#dcdcdc;letter-spacing:-0.35px">257</div>
<div class="t" style="left:270.20px;top:383.06px;color:#dcdcdc;letter-spacing:-0.35px">257</div>
<div class="t" style="left:343.15px;top:383.06px;color:#dcdcdc;letter-spacing:-0.35px">257</div>
<div class="a" style="left:413.20px;top:328.80px;width:0.80px;height:8.20px;background:#181818;"></div>
<div class="a" style="left:416.60px;top:330.80px;width:1.70px;height:1.80px;background:#c8c8c8;border-radius:0.6px"></div>
<div class="a" style="left:419.30px;top:330.80px;width:1.70px;height:1.80px;background:#c8c8c8;border-radius:0.6px"></div>
<div class="a" style="left:422.00px;top:330.80px;width:1.70px;height:1.80px;background:#c8c8c8;border-radius:0.6px"></div>
<div class="a" style="left:439.80px;top:359.40px;width:22.00px;height:1.10px;background:#4a4a4a;"></div>
<div class="a" style="left:450.25px;top:348.60px;width:1.10px;height:22.00px;background:#4a4a4a;"></div>
<div class="a" style="left:486.15px;top:328.80px;width:0.80px;height:8.20px;background:#181818;"></div>
<div class="a" style="left:489.55px;top:330.80px;width:1.70px;height:1.80px;background:#c8c8c8;border-radius:0.6px"></div>
<div class="a" style="left:492.25px;top:330.80px;width:1.70px;height:1.80px;background:#c8c8c8;border-radius:0.6px"></div>
<div class="a" style="left:494.95px;top:330.80px;width:1.70px;height:1.80px;background:#c8c8c8;border-radius:0.6px"></div>
<div class="a" style="left:512.75px;top:359.40px;width:22.00px;height:1.10px;background:#4a4a4a;"></div>
<div class="a" style="left:523.20px;top:348.60px;width:1.10px;height:22.00px;background:#4a4a4a;"></div>
<div class="a" style="left:559.10px;top:328.80px;width:0.80px;height:8.20px;background:#181818;"></div>
<div class="a" style="left:562.50px;top:330.80px;width:1.70px;height:1.80px;background:#c8c8c8;border-radius:0.6px"></div>
<div class="a" style="left:565.20px;top:330.80px;width:1.70px;height:1.80px;background:#c8c8c8;border-radius:0.6px"></div>
<div class="a" style="left:567.90px;top:330.80px;width:1.70px;height:1.80px;background:#c8c8c8;border-radius:0.6px"></div>
<div class="a" style="left:585.70px;top:359.40px;width:22.00px;height:1.10px;background:#4a4a4a;"></div>
<div class="a" style="left:596.15px;top:348.60px;width:1.10px;height:22.00px;background:#4a4a4a;"></div>
<div class="a" style="left:632.05px;top:328.80px;width:0.80px;height:8.20px;background:#181818;"></div>
<div class="a" style="left:635.45px;top:330.80px;width:1.70px;height:1.80px;background:#c8c8c8;border-radius:0.6px"></div>
<div class="a" style="left:638.15px;top:330.80px;width:1.70px;height:1.80px;background:#c8c8c8;border-radius:0.6px"></div>
<div class="a" style="left:640.85px;top:330.80px;width:1.70px;height:1.80px;background:#c8c8c8;border-radius:0.6px"></div>
<div class="a" style="left:658.65px;top:359.40px;width:22.00px;height:1.10px;background:#4a4a4a;"></div>
<div class="a" style="left:669.10px;top:348.60px;width:1.10px;height:22.00px;background:#4a4a4a;"></div>
<div class="a" style="left:705.00px;top:328.80px;width:0.80px;height:8.20px;background:#181818;"></div>
<div class="a" style="left:708.40px;top:330.80px;width:1.70px;height:1.80px;background:#c8c8c8;border-radius:0.6px"></div>
<div class="a" style="left:711.10px;top:330.80px;width:1.70px;height:1.80px;background:#c8c8c8;border-radius:0.6px"></div>
<div class="a" style="left:713.80px;top:330.80px;width:1.70px;height:1.80px;background:#c8c8c8;border-radius:0.6px"></div>
<div class="a" style="left:731.60px;top:359.40px;width:22.00px;height:1.10px;background:#4a4a4a;"></div>
<div class="a" style="left:742.05px;top:348.60px;width:1.10px;height:22.00px;background:#4a4a4a;"></div>
<div class="a" style="left:778.80px;top:329.00px;width:11.20px;height:11.30px;background:#282828;"></div>
<svg style="left:778.8px;top:329px" width="12" height="12"><path d="M2.2,2.2L9,9.1M9,2.2L2.2,9.1" stroke="#3e3e3e" stroke-width="1"/></svg>
<svg style="left:778.5px;top:377.5px" width="12" height="12"><circle cx="6" cy="5.8" r="5.6" fill="#c4c4c4"/><circle cx="6" cy="5.8" r="3" fill="#9c9c9c"/><circle cx="6" cy="5.8" r="3.6" fill="none" stroke="#b0b0b0" stroke-width="0.8" stroke-dasharray="2 2.5"/></svg>
<div class="a" style="left:791.00px;top:327.00px;width:1.60px;height:66.00px;background:#1a1a1a;"></div>
<div class="a" style="left:47.00px;top:392.50px;width:746.00px;height:27.50px;background:#121212;"></div>
<div class="a" style="left:47.00px;top:392.70px;width:746.00px;height:0.80px;background:#1c1c1c;"></div>
<div class="a" style="left:49.40px;top:395.40px;width:58.40px;height:22.50px;background:#3a3a3a;"></div>
<div class="a" style="left:49.40px;top:395.40px;width:58.40px;height:6.80px;background:#1c1c1c;"></div>
<div class="a" style="left:49.40px;top:395.40px;width:58.40px;height:22.50px;background:transparent;border:1px solid #2a7fe6"></div>
<div class="a" style="left:50.00px;top:396.00px;width:19.60px;height:6.00px;background:#ffff00;"></div>
<div class="t" style="left:55.00px;top:395.20px;color:#1e1e1e;font-size:6.8px;letter-spacing:-0.2px">C1</div>
<div class="t r" style="right:733.40px;top:395.20px;color:#e6e000;letter-spacing:-0.5px">DC50</div>
<div class="t" style="left:50.40px;top:402.10px;color:#dcdcdc;letter-spacing:-0.35px">1X</div>
<div class="t r" style="right:733.00px;top:402.10px;color:#dcdcdc;letter-spacing:-0.35px">5.00mV/</div>
<div class="t" style="left:50.40px;top:409.80px;color:#dcdcdc;letter-spacing:-0.35px">FULL</div>
<div class="t r" style="right:733.00px;top:409.80px;color:#dcdcdc;letter-spacing:-0.35px">-6.30mV</div>
<div class="a" style="left:109.35px;top:395.40px;width:58.40px;height:22.50px;background:#3a3a3a;"></div>
<div class="a" style="left:109.35px;top:395.40px;width:58.40px;height:6.80px;background:#1c1c1c;"></div>
<div class="a" style="left:109.95px;top:396.00px;width:19.60px;height:6.00px;background:#ff0090;"></div>
<div class="t" style="left:114.95px;top:395.20px;color:#1e1e1e;font-size:6.8px;letter-spacing:-0.2px">C2</div>
<div class="t r" style="right:673.45px;top:395.20px;color:#e0107a;letter-spacing:-0.5px">DC50</div>
<div class="t" style="left:110.35px;top:402.10px;color:#dcdcdc;letter-spacing:-0.35px">1X</div>
<div class="t r" style="right:673.05px;top:402.10px;color:#dcdcdc;letter-spacing:-0.35px">5.00mV/</div>
<div class="t" style="left:110.35px;top:409.80px;color:#dcdcdc;letter-spacing:-0.35px">FULL</div>
<div class="t r" style="right:673.05px;top:409.80px;color:#dcdcdc;letter-spacing:-0.35px">-550μV</div>
<div class="a" style="left:169.30px;top:395.40px;width:58.40px;height:22.50px;background:#3a3a3a;"></div>
<div class="a" style="left:169.30px;top:395.40px;width:58.40px;height:6.80px;background:#1c1c1c;"></div>
<div class="a" style="left:169.90px;top:396.00px;width:19.60px;height:6.00px;background:#00ffff;"></div>
<div class="t" style="left:174.90px;top:395.20px;color:#1e1e1e;font-size:6.8px;letter-spacing:-0.2px">C3</div>
<div class="t r" style="right:613.50px;top:395.20px;color:#19c4d6;letter-spacing:-0.5px">DC50</div>
<div class="t" style="left:170.30px;top:402.10px;color:#dcdcdc;letter-spacing:-0.35px">1X</div>
<div class="t r" style="right:613.10px;top:402.10px;color:#dcdcdc;letter-spacing:-0.35px">5.00mV/</div>
<div class="t" style="left:170.30px;top:409.80px;color:#dcdcdc;letter-spacing:-0.35px">FULL</div>
<div class="t r" style="right:613.10px;top:409.80px;color:#dcdcdc;letter-spacing:-0.35px">5.35mV</div>
<div class="a" style="left:229.25px;top:395.40px;width:58.40px;height:22.50px;background:#3a3a3a;"></div>
<div class="a" style="left:229.25px;top:395.40px;width:58.40px;height:6.80px;background:#1c1c1c;"></div>
<div class="a" style="left:229.85px;top:396.00px;width:19.60px;height:6.00px;background:#00ff00;"></div>
<div class="t" style="left:234.85px;top:395.20px;color:#1e1e1e;font-size:6.8px;letter-spacing:-0.2px">C4</div>
<div class="t r" style="right:553.55px;top:395.20px;color:#19d019;letter-spacing:-0.5px">DC50</div>
<div class="t" style="left:230.25px;top:402.10px;color:#dcdcdc;letter-spacing:-0.35px">1X</div>
<div class="t r" style="right:553.15px;top:402.10px;color:#dcdcdc;letter-spacing:-0.35px">5.00mV/</div>
<div class="t" style="left:230.25px;top:409.80px;color:#dcdcdc;letter-spacing:-0.35px">FULL</div>
<div class="t r" style="right:553.15px;top:409.80px;color:#dcdcdc;letter-spacing:-0.35px">12.6mV</div>
<div class="a" style="left:290.00px;top:395.20px;width:58.00px;height:22.00px;background:transparent;border:1px dashed #1a1a1a"></div>
<div class="a" style="left:308.00px;top:406.00px;width:22.00px;height:1.00px;background:#333;"></div>
<div class="a" style="left:318.50px;top:400.00px;width:1.00px;height:12.50px;background:#333;"></div>
<div class="a" style="left:645.20px;top:395.20px;width:59.60px;height:22.40px;background:#3a3a3a;"></div>
<div class="a" style="left:645.20px;top:395.20px;width:59.60px;height:6.80px;background:#1e1e1e;"></div>
<div class="t" style="left:647.00px;top:395.00px;color:#dcdcdc;letter-spacing:-0.3px">Timebase</div>
<div class="t" style="left:646.00px;top:402.10px;color:#dcdcdc;letter-spacing:-0.35px">0.00s</div>
<div class="t r" style="right:135.50px;top:402.10px;color:#dcdcdc;letter-spacing:-0.35px">5.00μs/div</div>
<div class="t" style="left:646.00px;top:409.80px;color:#dcdcdc;letter-spacing:-0.35px">2.00Mpts</div>
<div class="t r" style="right:135.50px;top:409.80px;color:#dcdcdc;letter-spacing:-0.35px">40.0GSa/s</div>
<div class="a" style="left:707.00px;top:395.20px;width:52.50px;height:22.40px;background:#3a3a3a;"></div>
<div class="a" style="left:707.00px;top:395.20px;width:52.50px;height:6.80px;background:#1e1e1e;"></div>
<div class="t" style="left:708.80px;top:395.00px;color:#e6e000;letter-spacing:-0.3px">Trigger</div>
<div class="t r" style="right:81.20px;top:395.00px;color:#e6e000;letter-spacing:-0.3px">C1 DC</div>
<div class="t" style="left:708.00px;top:402.10px;color:#dcdcdc;letter-spacing:-0.35px">Auto</div>
<div class="t r" style="right:81.20px;top:402.10px;color:#dcdcdc;letter-spacing:-0.35px">0.00V</div>
<div class="t" style="left:708.00px;top:409.80px;color:#dcdcdc;letter-spacing:-0.35px">Edge</div>
<div class="t r" style="right:81.20px;top:409.80px;color:#dcdcdc;letter-spacing:-0.35px">Rising</div>
<div class="a" style="left:761.30px;top:395.00px;width:31.60px;height:22.50px;background:#262626;"></div>
<div class="t" style="left:676.80px;width:200px;text-align:center;top:402.10px;color:#dcdcdc;letter-spacing:-0.3px">09:53:44</div>
<div class="t" style="left:676.70px;width:200px;text-align:center;top:409.80px;color:#dcdcdc;letter-spacing:-0.35px">2025/9/26</div>
<svg style="left:773.5px;top:395.5px" width="15" height="6"><path d="M0.5,1H5M1.5,0.3V2M4,0.3V2M0.5,2.6H5V5.5M2.7,2.6V5.5M0.5,4H5" stroke="#7a7a7a" stroke-width="0.7" fill="none"/><path d="M9,0.3L7.6,2H12.6L11.2,0.3M8,2.6V5.5H12.3V2.6M10.1,2.6V5.5" stroke="#7a7a7a" stroke-width="0.7" fill="none"/></svg>
</div></body></html>
